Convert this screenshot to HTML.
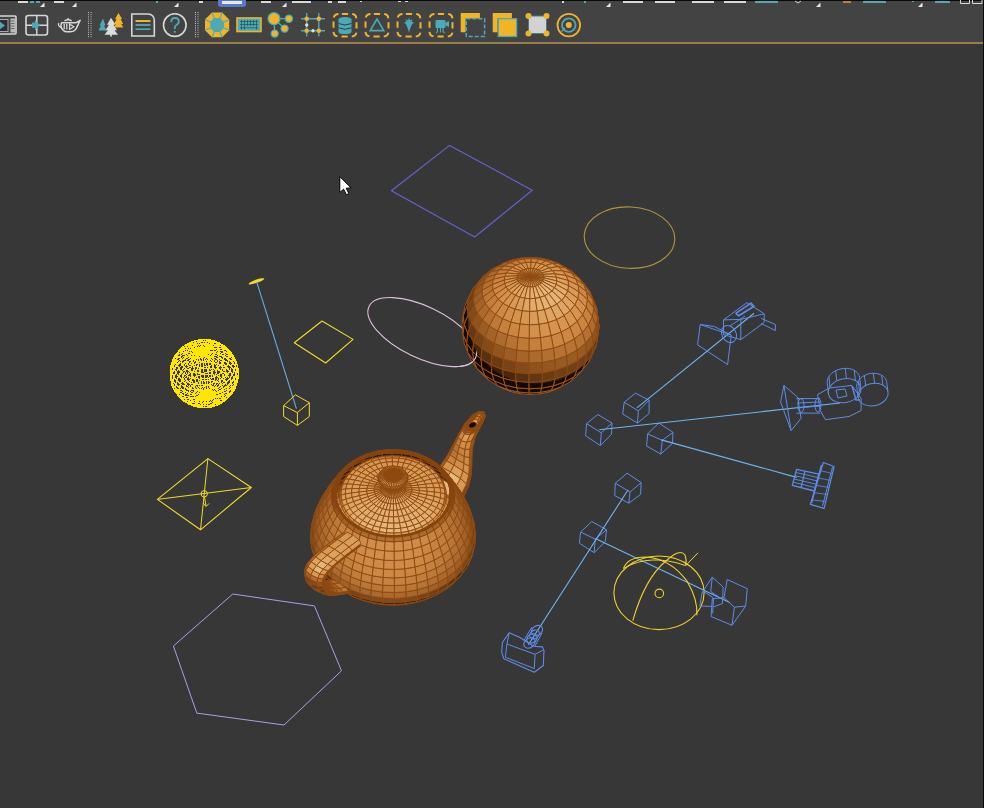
<!DOCTYPE html>
<html><head><meta charset="utf-8"><style>
html,body{margin:0;padding:0;width:984px;height:808px;overflow:hidden;background:#373737;}
#tb{position:absolute;left:0;top:0;width:984px;height:44px;background:#434343;}
svg{position:absolute;left:0;top:0;}
</style></head><body>
<div id="tb"></div>
<svg width="984" height="808" viewBox="0 0 984 808">
<rect x="0" y="0" width="984" height="1" fill="#0a0a0a"/>
<rect x="0" y="42" width="984" height="2" fill="#9a8048"/>
<rect x="983" y="0" width="1" height="808" fill="#0a0a0a"/>
<rect x="18" y="1" width="10" height="2" fill="#d8d8d8"/>
<rect x="30" y="1" width="4" height="2" fill="#4aaab8"/>
<rect x="36" y="1" width="4" height="2" fill="#4aaab8"/>
<rect x="54" y="1" width="10" height="2" fill="#d8d8d8"/>
<rect x="156" y="1" width="2" height="2" fill="#4aaab8"/>
<rect x="199" y="1" width="4" height="2" fill="#d8d8d8"/>
<rect x="261" y="1" width="10" height="2" fill="#d8d8d8"/>
<rect x="292" y="1" width="19" height="2" fill="#d8d8d8"/>
<rect x="328" y="1" width="4" height="2" fill="#d8d8d8"/>
<rect x="338" y="1" width="8" height="2" fill="#d8d8d8"/>
<rect x="360" y="1" width="2" height="1" fill="#d8d8d8"/>
<rect x="398" y="1" width="3" height="1" fill="#d8d8d8"/>
<rect x="405" y="1" width="3" height="1" fill="#d8d8d8"/>
<rect x="562" y="1" width="2" height="2" fill="#d8d8d8"/>
<rect x="584" y="1" width="2" height="2" fill="#4aaab8"/>
<rect x="623" y="1" width="20" height="2" fill="#d8d8d8"/>
<rect x="655" y="1" width="20" height="2" fill="#d8d8d8"/>
<rect x="692" y="1" width="22" height="2" fill="#d8d8d8"/>
<rect x="724" y="1" width="22" height="2" fill="#d8d8d8"/>
<rect x="755" y="1" width="23" height="2" fill="#4aaab8"/>
<rect x="843" y="1" width="8" height="2" fill="#c08040"/>
<rect x="863" y="1" width="23" height="2" fill="#4aaab8"/>
<rect x="935" y="1" width="15" height="2" fill="#4aaab8"/>
<rect x="912" y="1" width="2" height="1" fill="#4aaab8"/>
<path d="M960.5 0v3.5h9v-3.5M972.5 0v3.5h9.5v-3.5" stroke="#d8d8d8" stroke-width="1" fill="none"/>
<path d="M795 1l3 2 3-2" stroke="#d8d8d8" stroke-width="1" fill="none"/>
<path d="M218 0v4q0 3 3 3h22q3 0 3-3v-4z" fill="#5a78c8"/><rect x="222" y="1" width="20" height="3" fill="#e6e6ee"/>
<path d="M40 7h4.5v-4.5z" fill="#e8e8e8"/>
<path d="M72 7h4.5v-4.5z" fill="#e8e8e8"/>
<path d="M174 7h4.5v-4.5z" fill="#e8e8e8"/>
<path d="M282 7h4.5v-4.5z" fill="#e8e8e8"/>
<path d="M606 7h4.5v-4.5z" fill="#e8e8e8"/>
<path d="M816 7h4.5v-4.5z" fill="#e8e8e8"/>
<path d="M918 7h4.5v-4.5z" fill="#e8e8e8"/>
<rect x="-6" y="16" width="22" height="18" rx="1" fill="none" stroke="#d8d8d8" stroke-width="1.6"/>
<rect x="-4" y="19.5" width="12" height="12" fill="#2e2e2e" stroke="#aaa" stroke-width="1"/>
<path d="M-1 21l6 4.5-6 4.5z" fill="#4aaab8"/>
<rect x="10.5" y="18.5" width="4.5" height="14" fill="#bbb"/><path d="M11 21h3.5M11 23.5h3.5M11 26h3.5M11 28.5h3.5" stroke="#555" stroke-width="0.8"/>
<rect x="26" y="15.5" width="21.5" height="19.5" rx="2.5" fill="none" stroke="#d8d8d8" stroke-width="1.6"/>
<path d="M36.8 15.5v19.5M26 25.2h21.5" stroke="#d8d8d8" stroke-width="1.4"/>
<path d="M32 22.5l3 0 0-2.5 5 5.2-5 5.2 0-2.7-3 0z" fill="#4aaab8"/>
<path d="M61.5 22.8h13.5q1.5 0 3-1.2l2.2-1.2q-1.2 2-2.2 4.5-1.6 4.2-3.4 5.6-1.6 1.3-4.2 1.3h-3.2q-2.6 0-4-1.6-1.6-1.6-2.4-4.2z" fill="none" stroke="#d8d8d8" stroke-width="1.5" stroke-linejoin="round"/>
<path d="M58.6 23q-0.8 3 2.4 4.6" fill="none" stroke="#d8d8d8" stroke-width="1.3"/>
<path d="M64.5 20.8q3.6-2.2 7.2 0M68.1 18v1.6" fill="none" stroke="#d8d8d8" stroke-width="1.4"/>
<path d="M64.2 24v5.2M66.8 24v5.6" stroke="#d8d8d8" stroke-width="1.3"/><path d="M69.6 24l4.2 2.7-4.2 2.7z" fill="none" stroke="#d8d8d8" stroke-width="1.2"/>
<line x1="88.5" y1="12" x2="88.5" y2="38" stroke="#cfcfcf" stroke-width="0.9" stroke-dasharray="1 1.2"/>
<line x1="91" y1="12" x2="91" y2="38" stroke="#cfcfcf" stroke-width="0.9" stroke-dasharray="1 1.2"/>
<line x1="195.5" y1="12" x2="195.5" y2="38" stroke="#cfcfcf" stroke-width="0.9" stroke-dasharray="1 1.2"/>
<line x1="198" y1="12" x2="198" y2="38" stroke="#cfcfcf" stroke-width="0.9" stroke-dasharray="1 1.2"/>
<path d="M103 18.5l-3.5 7h1.5l-2.5 5h8l-2.5-5h1.5z" fill="#4aaab8"/>
<path d="M118.5 13l-3.5 6h1.5l-2.5 5h1.8l-2 3.5h9.5l-2-3.5h1.8l-2.5-5h1.5z" fill="#f0b428"/>
<path d="M111 17.8l-4 7h2l-3.5 5.5h2.5l-3.5 4.5h13.5l-3.5-4.5h2.5l-3.5-5.5h2z" fill="#dcdcdc"/><rect x="110.2" y="34" width="1.6" height="2.6" fill="#dcdcdc"/>
<path d="M131.8 14h16.5a6 6 0 0 1 6 6v16h-22.5z" fill="none" stroke="#d8d8d8" stroke-width="1.6"/>
<path d="M135.5 21h15" stroke="#f0b428" stroke-width="2"/><path d="M135.5 25h15" stroke="#5ab0d8" stroke-width="1.6"/><path d="M135.5 29.2h15" stroke="#4aaab8" stroke-width="1.6"/>
<circle cx="174.8" cy="25.1" r="11.3" fill="none" stroke="#d8d8d8" stroke-width="1.6"/>
<path d="M171.2 22.2q0-4.2 3.8-4.2 3.8 0 3.8 3.6 0 2.4-2.6 3.6-1.4 0.7-1.4 2.6v1.2" fill="none" stroke="#4aaab8" stroke-width="1.8"/><circle cx="174.8" cy="31.8" r="1.1" fill="#4aaab8"/>
<path d="M212 12.6h10.2l7 7v10.6l-7 7h-10.2l-7-7v-10.6z" fill="#f0b428"/>
<path d="M214.2 18h5.8l4 4v6l-4 4h-5.8l-4-4v-6z" fill="#4aaab8"/>
<path d="M214.2 18l-2.2-5.4M220 18l2.2-5.4M224 22l5.2-2.4M224 28l5.2 2.2M220 32l2.2 5.2M214.2 32l-2.2 5.2M210.2 28l-5 2.2M210.2 22l-5-2.4" stroke="#4aaab8" stroke-width="1.1"/>
<rect x="237" y="18" width="24" height="13.5" fill="#4aaab8" stroke="#f0b428" stroke-width="1.6"/>
<path d="M240 21.5h18M240 24.5h18M240 27.8h18M241.5 20v9.5M244.5 20v9.5M247.5 20v6M250.5 20v6M253.5 20v6M256.5 20v9.5" stroke="#2c5560" stroke-width="0.8"/>
<path d="M274 18.7L288.9 18.7M274 18.7L284.6 28.6M274 18.7L274.7 33.6" stroke="#4aaab8" stroke-width="1.3"/>
<circle cx="274" cy="18.7" r="6" fill="#f0b428" stroke="#4aaab8" stroke-width="1.2"/><circle cx="288.9" cy="18.7" r="3.6" fill="#f0b428" stroke="#4aaab8" stroke-width="1.2"/><circle cx="284.6" cy="28.6" r="3.6" fill="#f0b428" stroke="#4aaab8" stroke-width="1.2"/><circle cx="274.7" cy="33.6" r="3.6" fill="#f0b428" stroke="#4aaab8" stroke-width="1.2"/>
<path d="M301 18.7h24M301 30.8h24M306.7 13v23.5M318.8 13v23.5" stroke="#4aaab8" stroke-width="1.4"/>
<circle cx="306.7" cy="18.7" r="2.3" fill="#f0b428"/>
<circle cx="318.8" cy="18.7" r="2.3" fill="#f0b428"/>
<circle cx="306.7" cy="30.8" r="2.3" fill="#f0b428"/>
<circle cx="318.8" cy="30.8" r="2.3" fill="#f0b428"/>
<circle cx="306.7" cy="25" r="1.7" fill="#ddd"/><circle cx="313" cy="30.8" r="1.7" fill="#ddd"/>
<rect x="333.5" y="14" width="23" height="22.5" rx="5" fill="none" stroke="#f0b428" stroke-width="2" stroke-dasharray="6.2 4.1" stroke-dashoffset="-3.4"/>
<rect x="365.5" y="14" width="23" height="22.5" rx="5" fill="none" stroke="#f0b428" stroke-width="2" stroke-dasharray="6.2 4.1" stroke-dashoffset="-3.4"/>
<rect x="397.5" y="14" width="23" height="22.5" rx="5" fill="none" stroke="#f0b428" stroke-width="2" stroke-dasharray="6.2 4.1" stroke-dashoffset="-3.4"/>
<rect x="429.5" y="14" width="23" height="22.5" rx="5" fill="none" stroke="#f0b428" stroke-width="2" stroke-dasharray="6.2 4.1" stroke-dashoffset="-3.4"/>
<ellipse cx="345" cy="19.5" rx="6.5" ry="2.6" fill="#4aaab8"/><path d="M338.5 19.5v12q0 2.6 6.5 2.6 6.5 0 6.5-2.6v-12" fill="#4aaab8"/><path d="M338.5 23.5q6.5 3 13 0M338.5 27.8q6.5 3 13 0" stroke="#3a3a3a" stroke-width="1" fill="none"/>
<path d="M377 19l-6.8 11.6h13.6z" fill="none" stroke="#4aaab8" stroke-width="1.6"/>
<path d="M409 17.5l1 3 2.6-1.2-1 2.7 2.6 0.6-2.2 1.6q-0.8 1.6-1.5 3.6l-1.5 4.6-1.5-4.6q-0.7-2-1.5-3.6l-2.2-1.6 2.6-0.6-1-2.7 2.6 1.2z" fill="#4aaab8"/>
<rect x="435.5" y="20" width="10" height="8" rx="1" fill="#4aaab8"/><path d="M445.5 22.5l3.5-1.5v6l-3.5-1.5z" fill="#4aaab8"/><path d="M437.5 28v3.5l-1.5 1.5M440.5 28v4.5M443 28v3.5l1.5 1.5" stroke="#4aaab8" stroke-width="1.1" fill="none"/>
<path d="M460.7 13h19.2v5.5h-14.3v13.7h-4.9z" fill="#f0b428"/>
<rect x="466.3" y="18.7" width="18.3" height="17.8" fill="none" stroke="#4aaab8" stroke-width="1.5" stroke-dasharray="4 2"/>
<path d="M492.7 13h19.2v5.5h-14.3v13.7h-4.9z" fill="#f0b428"/>
<rect x="498.3" y="18.7" width="18.3" height="17.8" fill="#f0b428" stroke="#4aaab8" stroke-width="1.3"/>
<rect x="528.5" y="16" width="18" height="17.5" fill="#d2d2d2" stroke="#3f7f8c" stroke-width="1"/>
<circle cx="528.5" cy="16" r="3" fill="#f0b428"/>
<circle cx="546.5" cy="16" r="3" fill="#f0b428"/>
<circle cx="528.5" cy="33.5" r="3" fill="#f0b428"/>
<circle cx="546.5" cy="33.5" r="3" fill="#f0b428"/>
<circle cx="568.8" cy="25.1" r="11.3" fill="none" stroke="#f0b428" stroke-width="1.8"/><circle cx="568.8" cy="25.1" r="6.8" fill="none" stroke="#4aaab8" stroke-width="1.8"/><circle cx="568.8" cy="25.1" r="3" fill="#f0b428"/><path d="M561.5 31.5l3.5-3.5" stroke="#4aaab8" stroke-width="1.5"/>
<g shape-rendering="auto">
<path d="M391.4 190.8 L449.6 145.4 L532.2 190.3 L474.7 237.0 Z" stroke="#6464d2" stroke-width="1.1" fill="none" stroke-linejoin="round" />
<ellipse cx="629.5" cy="237.6" rx="45.3" ry="30.7" transform="rotate(3 629.5 237.6)" stroke="#b0963c" stroke-width="1.1" fill="none"/>
<ellipse cx="422.3" cy="332.1" rx="59.1" ry="25.7" transform="rotate(25.7 422.3 332.1)" stroke="#dcc0dc" stroke-width="1.1" fill="none"/>
<path d="M232.8 594.0 L314.4 605.9 L341.5 670.8 L284.0 725.0 L196.8 713.1 L173.4 646.0 Z" stroke="#a8a0e8" stroke-width="1.0" fill="none" stroke-linejoin="round" />
<g id="ysph"></g>
<ellipse cx="256.4" cy="281.3" rx="8.3" ry="1.6" transform="rotate(-19 256.4 281.3)" fill="#f0dc28"/>
<path d="M256.8 282.2 L296.4 408.6" stroke="#6aace6" stroke-width="1.1" fill="none" stroke-linejoin="round" />
<path d="M295.4 394.8 L309.3 402.7 L309.3 416.5 L297.4 425.4 L283.6 416.5 L283.6 405.6 Z" stroke="#f0dc28" stroke-width="1.0" fill="none" stroke-linejoin="round" /><path d="M283.6 405.6 L297.4 412.6 L309.3 402.7" stroke="#f0dc28" stroke-width="1.0" fill="none" stroke-linejoin="round" /><path d="M297.4 412.6 L297.4 425.4" stroke="#f0dc28" stroke-width="1.0" fill="none" stroke-linejoin="round" />
<path d="M294.3 342.8 L322.0 321.0 L353.0 339.4 L325.6 363.0 Z" stroke="#f0dc28" stroke-width="1.1" fill="none" stroke-linejoin="round" />
<path d="M157.4 499.4 L207.9 458.6 L251.3 487.5 L200.5 529.8 Z" stroke="#f0dc28" stroke-width="1.1" fill="none" stroke-linejoin="round" />
<path d="M157.4 499.4 L251.3 487.5" stroke="#f0dc28" stroke-width="1.0" fill="none" stroke-linejoin="round" />
<path d="M207.9 458.6 L200.5 529.8" stroke="#f0dc28" stroke-width="1.0" fill="none" stroke-linejoin="round" />
<circle cx="204.2" cy="493.8" r="3.2" stroke="#f0dc28" stroke-width="1" fill="none"/>
<path d="M204.5 497.0 L206.0 506.0" stroke="#f0dc28" stroke-width="1.0" fill="none" stroke-linejoin="round" />
<path d="M203.0 503.0 L206.0 506.5 L209.0 503.5" stroke="#f0dc28" stroke-width="1.0" fill="none" stroke-linejoin="round" />
<path d="M635.4 393.1 L649.1 400.2 L649.1 413.5 L637.4 423.1 L622.7 414.0 L624.2 402.3 Z" stroke="#5d8ce8" stroke-width="1.0" fill="none" stroke-linejoin="round" /><path d="M624.2 402.3 L638.4 410.9 L649.1 400.2" stroke="#5d8ce8" stroke-width="1.0" fill="none" stroke-linejoin="round" /><path d="M638.4 410.9 L637.4 423.1" stroke="#5d8ce8" stroke-width="1.0" fill="none" stroke-linejoin="round" />
<path d="M597.8 414.5 L612.0 423.1 L611.5 434.3 L600.3 445.5 L585.6 435.8 L586.6 423.6 Z" stroke="#5d8ce8" stroke-width="1.0" fill="none" stroke-linejoin="round" /><path d="M586.6 423.6 L601.3 432.8 L612.0 423.1" stroke="#5d8ce8" stroke-width="1.0" fill="none" stroke-linejoin="round" /><path d="M601.3 432.8 L600.3 445.5" stroke="#5d8ce8" stroke-width="1.0" fill="none" stroke-linejoin="round" />
<path d="M658.8 423.1 L673.0 432.3 L672.5 443.4 L660.8 454.1 L646.6 446.0 L647.6 433.8 Z" stroke="#5d8ce8" stroke-width="1.0" fill="none" stroke-linejoin="round" /><path d="M647.6 433.8 L662.3 440.4 L673.0 432.3" stroke="#5d8ce8" stroke-width="1.0" fill="none" stroke-linejoin="round" /><path d="M662.3 440.4 L660.8 454.1" stroke="#5d8ce8" stroke-width="1.0" fill="none" stroke-linejoin="round" />
<path d="M627.1 473.2 L641.2 482.6 L640.6 494.4 L628.8 503.2 L614.7 495.6 L615.3 483.2 Z" stroke="#5d8ce8" stroke-width="1.0" fill="none" stroke-linejoin="round" /><path d="M615.3 483.2 L630.0 492.1 L641.2 482.6" stroke="#5d8ce8" stroke-width="1.0" fill="none" stroke-linejoin="round" /><path d="M630.0 492.1 L628.8 503.2" stroke="#5d8ce8" stroke-width="1.0" fill="none" stroke-linejoin="round" />
<path d="M591.8 521.5 L606.5 529.7 L605.3 541.5 L594.1 552.6 L579.4 543.2 L580.6 532.1 Z" stroke="#5d8ce8" stroke-width="1.0" fill="none" stroke-linejoin="round" /><path d="M580.6 532.1 L595.3 539.1 L606.5 529.7" stroke="#5d8ce8" stroke-width="1.0" fill="none" stroke-linejoin="round" /><path d="M595.3 539.1 L594.1 552.6" stroke="#5d8ce8" stroke-width="1.0" fill="none" stroke-linejoin="round" />
<path d="M636.9 407.9 L754.0 313.3" stroke="#6cb4f0" stroke-width="1.1" fill="none" stroke-linejoin="round" />
<path d="M599.3 429.7 L840.0 403.0" stroke="#6cb4f0" stroke-width="1.1" fill="none" stroke-linejoin="round" />
<path d="M661.3 439.9 L796.7 477.4" stroke="#6cb4f0" stroke-width="1.1" fill="none" stroke-linejoin="round" />
<path d="M628.1 489.7 L528.4 644.7" stroke="#6cb4f0" stroke-width="1.1" fill="none" stroke-linejoin="round" />
<path d="M595.3 538.5 L729.6 602.4" stroke="#6cb4f0" stroke-width="1.1" fill="none" stroke-linejoin="round" />
<path d="M700.2 324.5 L697.6 344.8 L727.6 364.6 L731.2 335.1 Z" stroke="#5d8ce8" stroke-width="1" fill="none" stroke-linejoin="round" />
<path d="M700.2 324.5 L714.4 326.5 L731.2 335.1" stroke="#5d8ce8" stroke-width="1.0" fill="none" stroke-linejoin="round" />
<ellipse cx="729" cy="334" rx="7" ry="9" transform="rotate(-30 729 334)" stroke="#5d8ce8" fill="none"/>
<path d="M723.5 319.9 L746.9 302.6 L764.2 313.8 L740.8 319.4 L723.5 319.9 L723.5 334.6 L740.8 339.7 L740.8 319.4" stroke="#5d8ce8" stroke-width="1.0" fill="none" stroke-linejoin="round" />
<path d="M764.2 313.8 L764.2 322.4 L740.8 339.7" stroke="#5d8ce8" stroke-width="1.0" fill="none" stroke-linejoin="round" />
<path d="M735.7 313.3 L751.0 303.1 L754.0 306.2 L738.8 315.8 L735.7 313.3" stroke="#5d8ce8" stroke-width="1.6" fill="none" stroke-linejoin="round" />
<path d="M761.1 318.4 L775.4 324.5 L775.4 330.6 L761.1 323.5" stroke="#5d8ce8" stroke-width="1.0" fill="none" stroke-linejoin="round" />
<path d="M730.0 326.0 L745.0 316.0" stroke="#5d8ce8" stroke-width="1.0" fill="none" stroke-linejoin="round" />
<path d="M783.9 385.4 L797.7 397.3 L801.0 418.4 L791.1 430.6 L780.6 401.9 L783.9 385.4 L791.1 430.6" stroke="#5d8ce8" stroke-width="1.0" fill="none" stroke-linejoin="round" />
<path d="M796.4 398.6 L820.2 398.6" stroke="#5d8ce8" stroke-width="1.0" fill="none" stroke-linejoin="round" />
<path d="M796.4 413.1 L820.2 413.1" stroke="#5d8ce8" stroke-width="1.0" fill="none" stroke-linejoin="round" />
<path d="M797.0 403.0 L820.0 402.0" stroke="#5d8ce8" stroke-width="1.0" fill="none" stroke-linejoin="round" />
<path d="M797.0 408.0 L820.0 406.0" stroke="#5d8ce8" stroke-width="1.0" fill="none" stroke-linejoin="round" />
<ellipse cx="801" cy="405.5" rx="3" ry="7" stroke="#5d8ce8" fill="none"/><ellipse cx="818" cy="405" rx="3" ry="7" stroke="#5d8ce8" fill="none"/>
<path d="M817.6 394.6 L829.4 388.0 L851.9 385.4 L861.1 398.6 L861.1 410.5 L849.3 416.4 L825.5 419.7 L820.2 410.5 L817.6 394.6" stroke="#5d8ce8" stroke-width="1.0" fill="none" stroke-linejoin="round" />
<ellipse cx="844.6" cy="390.7" rx="16.5" ry="11.9" transform="rotate(-12 844.6 390.7)" stroke="#5d8ce8" stroke-width="1" fill="none"/><path d="M827.4 383.9 L827.2 382.4 L827.3 380.8 L827.6 379.2 L828.3 377.7 L829.2 376.1 L830.3 374.7 L831.7 373.4 L833.3 372.1 L835.0 371.1 L836.9 370.1 L838.9 369.4 L841.0 368.9 L843.2 368.5 L845.3 368.4 L847.4 368.4 L849.4 368.7 L851.4 369.2 L853.2 369.8 L854.8 370.7 L856.2 371.7 L857.5 372.9 L858.4 374.2 L859.2 375.6 L859.6 377.1" stroke="#5d8ce8" stroke-width="1.0" fill="none" stroke-linejoin="round" /><path d="M828.5 394.1 L827.4 383.9" stroke="#5d8ce8" stroke-width="1.0" fill="none" stroke-linejoin="round" /><path d="M830.0 386.8 L828.9 376.6" stroke="#5d8ce8" stroke-width="1.0" fill="none" stroke-linejoin="round" /><path d="M836.8 380.9 L835.7 370.7" stroke="#5d8ce8" stroke-width="1.0" fill="none" stroke-linejoin="round" /><path d="M846.4 378.6 L845.3 368.4" stroke="#5d8ce8" stroke-width="1.0" fill="none" stroke-linejoin="round" /><path d="M855.4 380.6 L854.3 370.4" stroke="#5d8ce8" stroke-width="1.0" fill="none" stroke-linejoin="round" /><path d="M860.7 387.3 L859.6 377.1" stroke="#5d8ce8" stroke-width="1.0" fill="none" stroke-linejoin="round" />
<ellipse cx="873" cy="394.6" rx="15.2" ry="11.2" transform="rotate(-12 873 394.6)" stroke="#5d8ce8" stroke-width="1" fill="none"/><path d="M856.8 387.9 L856.7 386.4 L856.7 384.9 L857.1 383.4 L857.7 382.0 L858.5 380.5 L859.5 379.2 L860.8 377.9 L862.2 376.8 L863.9 375.8 L865.6 374.9 L867.5 374.3 L869.4 373.7 L871.3 373.4 L873.3 373.3 L875.2 373.4 L877.1 373.6 L878.9 374.1 L880.6 374.7 L882.1 375.5 L883.4 376.5 L884.5 377.6 L885.5 378.8 L886.1 380.1 L886.6 381.5" stroke="#5d8ce8" stroke-width="1.0" fill="none" stroke-linejoin="round" /><path d="M858.1 397.8 L856.8 387.9" stroke="#5d8ce8" stroke-width="1.0" fill="none" stroke-linejoin="round" /><path d="M859.5 390.9 L858.2 381.0" stroke="#5d8ce8" stroke-width="1.0" fill="none" stroke-linejoin="round" /><path d="M865.7 385.4 L864.4 375.5" stroke="#5d8ce8" stroke-width="1.0" fill="none" stroke-linejoin="round" /><path d="M874.6 383.2 L873.3 373.3" stroke="#5d8ce8" stroke-width="1.0" fill="none" stroke-linejoin="round" /><path d="M882.9 385.1 L881.6 375.2" stroke="#5d8ce8" stroke-width="1.0" fill="none" stroke-linejoin="round" /><path d="M887.9 391.4 L886.6 381.5" stroke="#5d8ce8" stroke-width="1.0" fill="none" stroke-linejoin="round" />
<path d="M836.0 390.0 L845.0 389.0 L847.0 396.0 L838.0 398.0 L836.0 390.0" stroke="#5d8ce8" stroke-width="1.0" fill="none" stroke-linejoin="round" />
<path d="M852.0 386.0 L856.0 400.0 L860.0 400.0" stroke="#5d8ce8" stroke-width="1.4" fill="none" stroke-linejoin="round" />
<path d="M823.3 462.5 L834.1 466.5 L824.1 508.3 L810.4 504.3 Z" stroke="#5d8ce8" stroke-width="1.2" fill="none" stroke-linejoin="round" />
<path d="M832.5 467.0 L822.5 506.0" stroke="#5d8ce8" stroke-width="1.0" fill="none" stroke-linejoin="round" />
<path d="M821.5 465.0 L811.5 503.0" stroke="#5d8ce8" stroke-width="1.4" fill="none" stroke-linejoin="round" />
<path d="M796.6 469.3 L818.8 474.1 L814.4 491.0 L792.3 485.4 Z" stroke="#5d8ce8" stroke-width="1.3" fill="none" stroke-linejoin="round" />
<path d="M795.7 472.5 L817.9 477.5" stroke="#5d8ce8" stroke-width="0.9" fill="none" stroke-linejoin="round" />
<path d="M794.9 475.7 L817.0 480.9" stroke="#5d8ce8" stroke-width="0.9" fill="none" stroke-linejoin="round" />
<path d="M794.0 479.0 L816.2 484.2" stroke="#5d8ce8" stroke-width="0.9" fill="none" stroke-linejoin="round" />
<path d="M793.2 482.2 L815.3 487.6" stroke="#5d8ce8" stroke-width="0.9" fill="none" stroke-linejoin="round" />
<path d="M805.0 471.0 L801.0 488.0" stroke="#5d8ce8" stroke-width="1.2" fill="none" stroke-linejoin="round" />
<path d="M821.1 470.8 L832.4 473.5" stroke="#5d8ce8" stroke-width="0.8" fill="none" stroke-linejoin="round" />
<path d="M818.9 478.1 L830.7 480.5" stroke="#5d8ce8" stroke-width="0.8" fill="none" stroke-linejoin="round" />
<path d="M816.7 485.4 L829.0 487.5" stroke="#5d8ce8" stroke-width="0.8" fill="none" stroke-linejoin="round" />
<path d="M814.5 492.7 L827.3 494.5" stroke="#5d8ce8" stroke-width="0.8" fill="none" stroke-linejoin="round" />
<path d="M812.3 500.0 L825.6 501.5" stroke="#5d8ce8" stroke-width="0.8" fill="none" stroke-linejoin="round" />
<path d="M509.1 632.8 L519.5 637.3 L533.6 646.2 L542.5 646.9 L544.0 650.6 L543.3 665.5 L534.3 672.2 L503.9 658.8 L501.7 652.1 L502.4 642.5 L509.1 632.8" stroke="#5d8ce8" stroke-width="1.1" fill="none" stroke-linejoin="round" />
<path d="M506.9 644.0 L535.1 654.3 L534.3 668.5 L505.4 657.3 L506.9 644.0" stroke="#5d8ce8" stroke-width="1.0" fill="none" stroke-linejoin="round" />
<path d="M509.1 632.8 L507.0 644.0" stroke="#5d8ce8" stroke-width="1.0" fill="none" stroke-linejoin="round" />
<path d="M535.1 654.3 L543.3 650.0" stroke="#5d8ce8" stroke-width="1.0" fill="none" stroke-linejoin="round" />
<ellipse cx="537" cy="630.5" rx="6" ry="4.6" transform="rotate(-35 537 630.5)" stroke="#5d8ce8" stroke-width="1.1" fill="none"/>
<ellipse cx="534.5" cy="634.5" rx="5.2" ry="4" transform="rotate(-35 534.5 634.5)" stroke="#5d8ce8" stroke-width="1.1" fill="none"/>
<ellipse cx="532" cy="638.5" rx="5.6" ry="4.3" transform="rotate(-35 532 638.5)" stroke="#5d8ce8" stroke-width="1.1" fill="none"/>
<ellipse cx="529.5" cy="643" rx="6.2" ry="4.6" transform="rotate(-35 529.5 643)" stroke="#5d8ce8" stroke-width="1.1" fill="none"/>
<path d="M532.0 627.0 L524.0 640.0" stroke="#5d8ce8" stroke-width="1.0" fill="none" stroke-linejoin="round" />
<path d="M542.0 633.0 L535.0 646.0" stroke="#5d8ce8" stroke-width="1.0" fill="none" stroke-linejoin="round" />
<ellipse cx="659" cy="592.8" rx="45.1" ry="36.8" stroke="#f2d22a" stroke-width="1.1" fill="none"/>
<path d="M632.8 620.7 Q 645 578 666 561 Q 680 548 685 555 Q 687 560 685.7 565.6" stroke="#f2d22a" stroke-width="1.1" fill="none"/>
<path d="M623.4 568.4 Q 628 557 645 557 Q 670 558 687.4 581.7 Q 698 600 696.9 615.2" stroke="#f2d22a" stroke-width="1.1" fill="none"/>
<path d="M623.4 568.4 Q 650 553 685.7 565.6" stroke="#f2d22a" stroke-width="1.0" fill="none"/>
<circle cx="659.3" cy="593.4" r="4.3" stroke="#f2d22a" stroke-width="1.1" fill="none"/>
<path d="M685.7 565.6 L698.0 552.8" stroke="#f2d22a" stroke-width="1.0" fill="none" stroke-linejoin="round" />
<path d="M727.2 579.5 L747.3 588.7 L745.7 606.0 L732.0 625.3 L711.1 616.5 L712.3 598.8" stroke="#5d8ce8" stroke-width="1.0" fill="none" stroke-linejoin="round" />
<path d="M727.2 579.5 L724.0 597.6 L734.4 607.2 L745.7 606.0" stroke="#5d8ce8" stroke-width="1.0" fill="none" stroke-linejoin="round" />
<path d="M734.4 607.2 L732.0 625.3" stroke="#5d8ce8" stroke-width="1.0" fill="none" stroke-linejoin="round" />
<path d="M712.3 598.8 L724.0 597.6" stroke="#5d8ce8" stroke-width="1.0" fill="none" stroke-linejoin="round" />
<path d="M712.3 577.1 L723.2 587.1" stroke="#5d8ce8" stroke-width="1.0" fill="none" stroke-linejoin="round" />
<path d="M712.3 577.1 L702.2 592.4 L699.8 606.0 L712.3 606.4" stroke="#5d8ce8" stroke-width="1.0" fill="none" stroke-linejoin="round" />
<path d="M712.3 577.1 L710.7 591.5 L719.1 597.2" stroke="#5d8ce8" stroke-width="1.0" fill="none" stroke-linejoin="round" />
<path d="M702.2 592.4 L703.8 591.5 L713.5 598.0 L712.7 613.3" stroke="#5d8ce8" stroke-width="1.0" fill="none" stroke-linejoin="round" />
<path d="M723.2 587.1 L722.4 603.6 L713.5 606.8" stroke="#5d8ce8" stroke-width="1.0" fill="none" stroke-linejoin="round" />
</g>
<g id="ysphere"><path d="M207.8 350.9 L207.6 350.2 L207.3 349.4 L206.8 348.8 L206.1 348.2 L205.3 347.7 L204.4 347.4 L203.5 347.1 L202.4 347.0 L201.4 347.1 L200.4 347.3 L199.4 347.6 L198.5 348.0 L197.7 348.5 L197.0 349.2 L196.5 349.9 L196.2 350.6 L196.0 351.4 L196.0 352.2 L196.1 352.9 L196.5 353.7 L197.0 354.3 L197.6 354.9 L198.4 355.4 L199.3 355.7 L200.3 356.0 L201.3 356.1 L202.4 356.0 L203.4 355.9 L204.4 355.5 L205.3 355.1 L206.1 354.6 L206.7 354.0 L207.2 353.3 L207.6 352.5 L207.8 351.7 L207.8 350.9 M213.7 351.3 L213.3 349.8 L212.6 348.4 L211.6 347.1 L210.3 346.0 L208.8 345.0 L207.0 344.3 L205.1 343.9 L203.1 343.7 L201.1 343.8 L199.1 344.1 L197.1 344.7 L195.4 345.6 L193.8 346.6 L192.5 347.8 L191.4 349.2 L190.7 350.7 L190.3 352.2 L190.3 353.8 L190.7 355.3 L191.3 356.7 L192.3 358.0 L193.6 359.2 L195.2 360.1 L197.0 360.8 L198.9 361.3 L200.9 361.5 L202.9 361.4 L204.9 361.0 L206.8 360.4 L208.6 359.6 L210.2 358.5 L211.5 357.3 L212.6 355.9 L213.3 354.4 L213.6 352.9 L213.7 351.3 M219.2 352.4 L218.7 350.2 L217.7 348.1 L216.3 346.2 L214.4 344.6 L212.1 343.2 L209.5 342.2 L206.7 341.5 L203.8 341.2 L200.8 341.3 L197.9 341.9 L195.1 342.7 L192.5 344.0 L190.2 345.5 L188.2 347.3 L186.7 349.3 L185.7 351.5 L185.1 353.7 L185.1 356.0 L185.6 358.2 L186.6 360.3 L188.1 362.2 L190.0 363.9 L192.2 365.2 L194.8 366.3 L197.6 366.9 L200.5 367.2 L203.5 367.1 L206.5 366.6 L209.3 365.7 L211.9 364.5 L214.2 362.9 L216.1 361.1 L217.6 359.1 L218.7 356.9 L219.2 354.7 L219.2 352.4 M224.3 354.2 L223.7 351.3 L222.4 348.6 L220.5 346.2 L218.1 344.1 L215.2 342.3 L211.9 341.0 L208.3 340.1 L204.5 339.8 L200.7 339.9 L196.9 340.6 L193.3 341.7 L189.9 343.3 L187.0 345.3 L184.5 347.6 L182.5 350.2 L181.2 353.0 L180.5 355.9 L180.5 358.8 L181.1 361.6 L182.4 364.3 L184.3 366.7 L186.7 368.9 L189.6 370.6 L192.9 371.9 L196.5 372.8 L200.3 373.2 L204.1 373.0 L207.9 372.4 L211.5 371.2 L214.9 369.6 L217.8 367.7 L220.3 365.3 L222.3 362.7 L223.6 360.0 L224.3 357.1 L224.3 354.2 M228.8 356.5 L228.1 353.1 L226.5 349.9 L224.3 347.0 L221.4 344.4 L217.9 342.3 L214.0 340.8 L209.7 339.7 L205.2 339.3 L200.6 339.5 L196.1 340.3 L191.8 341.6 L187.8 343.5 L184.3 345.9 L181.3 348.6 L179.0 351.7 L177.4 355.1 L176.6 358.5 L176.6 362.0 L177.3 365.3 L178.8 368.5 L181.1 371.5 L184.0 374.0 L187.5 376.1 L191.4 377.7 L195.7 378.7 L200.2 379.1 L204.8 378.9 L209.3 378.2 L213.6 376.8 L217.5 374.9 L221.1 372.6 L224.0 369.8 L226.4 366.7 L228.0 363.4 L228.8 359.9 L228.8 356.5 M232.6 359.3 L231.7 355.5 L230.0 351.9 L227.4 348.6 L224.1 345.7 L220.2 343.3 L215.8 341.5 L210.9 340.4 L205.8 339.9 L200.7 340.1 L195.6 341.0 L190.7 342.5 L186.2 344.7 L182.2 347.3 L178.9 350.5 L176.3 354.0 L174.5 357.7 L173.5 361.6 L173.5 365.5 L174.3 369.3 L176.1 373.0 L178.6 376.2 L181.9 379.1 L185.8 381.5 L190.3 383.3 L195.1 384.4 L200.2 384.9 L205.4 384.7 L210.5 383.8 L215.3 382.3 L219.8 380.2 L223.8 377.5 L227.2 374.4 L229.8 370.9 L231.6 367.1 L232.5 363.2 L232.6 359.3 M235.5 362.6 L234.5 358.4 L232.6 354.5 L229.9 350.9 L226.3 347.8 L222.1 345.2 L217.2 343.3 L212.0 342.1 L206.5 341.5 L200.9 341.8 L195.3 342.7 L190.0 344.4 L185.2 346.7 L180.8 349.6 L177.2 353.0 L174.4 356.8 L172.4 360.8 L171.4 365.1 L171.3 369.3 L172.3 373.5 L174.1 377.4 L176.9 381.0 L180.5 384.1 L184.7 386.6 L189.6 388.6 L194.8 389.8 L200.3 390.4 L205.9 390.1 L211.5 389.2 L216.7 387.5 L221.6 385.2 L225.9 382.3 L229.6 378.9 L232.4 375.1 L234.4 371.1 L235.4 366.8 L235.5 362.6 M237.4 366.2 L236.4 361.8 L234.4 357.7 L231.6 354.0 L227.8 350.7 L223.3 348.0 L218.3 346.0 L212.8 344.7 L207.0 344.1 L201.1 344.4 L195.3 345.4 L189.8 347.1 L184.7 349.5 L180.2 352.6 L176.3 356.1 L173.4 360.1 L171.3 364.4 L170.2 368.8 L170.2 373.2 L171.2 377.6 L173.1 381.7 L176.0 385.4 L179.8 388.7 L184.2 391.4 L189.3 393.4 L194.8 394.7 L200.6 395.3 L206.5 395.1 L212.2 394.1 L217.8 392.3 L222.9 389.9 L227.4 386.9 L231.2 383.3 L234.2 379.3 L236.3 375.1 L237.3 370.6 L237.4 366.2 M238.3 370.0 L237.3 365.6 L235.3 361.4 L232.4 357.6 L228.6 354.3 L224.1 351.6 L218.9 349.5 L213.3 348.2 L207.5 347.6 L201.5 347.9 L195.6 348.9 L190.0 350.6 L184.8 353.1 L180.2 356.2 L176.3 359.8 L173.3 363.8 L171.2 368.2 L170.1 372.7 L170.1 377.2 L171.1 381.6 L173.1 385.8 L176.0 389.6 L179.8 392.9 L184.3 395.6 L189.5 397.7 L195.1 399.0 L200.9 399.6 L206.9 399.3 L212.8 398.3 L218.4 396.6 L223.6 394.1 L228.2 391.0 L232.1 387.4 L235.1 383.4 L237.2 379.0 L238.3 374.5 L238.3 370.0 M238.2 374.0 L237.2 369.6 L235.3 365.5 L232.4 361.8 L228.6 358.5 L224.2 355.8 L219.1 353.8 L213.6 352.5 L207.8 351.9 L201.9 352.1 L196.2 353.1 L190.6 354.9 L185.5 357.3 L181.0 360.3 L177.2 363.9 L174.2 367.9 L172.1 372.1 L171.1 376.6 L171.0 381.0 L172.0 385.4 L174.0 389.5 L176.8 393.2 L180.6 396.5 L185.1 399.2 L190.1 401.2 L195.6 402.5 L201.4 403.1 L207.3 402.8 L213.1 401.8 L218.6 400.1 L223.7 397.7 L228.2 394.6 L232.1 391.1 L235.0 387.1 L237.1 382.8 L238.2 378.4 L238.2 374.0 M237.1 377.9 L236.1 373.7 L234.3 369.8 L231.5 366.2 L227.9 363.1 L223.7 360.6 L218.8 358.6 L213.6 357.4 L208.1 356.8 L202.5 357.1 L196.9 358.0 L191.7 359.7 L186.8 362.0 L182.5 364.9 L178.8 368.3 L176.0 372.1 L174.0 376.1 L173.0 380.4 L172.9 384.6 L173.9 388.8 L175.8 392.7 L178.5 396.3 L182.1 399.4 L186.3 402.0 L191.2 403.9 L196.4 405.1 L201.9 405.7 L207.5 405.4 L213.1 404.5 L218.4 402.8 L223.2 400.5 L227.6 397.6 L231.2 394.2 L234.0 390.4 L236.0 386.4 L237.0 382.1 L237.1 377.9 M234.9 381.7 L234.1 377.9 L232.3 374.2 L229.8 371.0 L226.5 368.1 L222.6 365.7 L218.1 363.9 L213.3 362.8 L208.2 362.3 L203.0 362.5 L197.9 363.4 L193.1 364.9 L188.6 367.0 L184.6 369.7 L181.2 372.8 L178.6 376.3 L176.8 380.1 L175.9 384.0 L175.8 387.9 L176.7 391.7 L178.4 395.3 L181.0 398.6 L184.3 401.5 L188.2 403.9 L192.6 405.7 L197.5 406.8 L202.6 407.3 L207.7 407.1 L212.8 406.2 L217.7 404.7 L222.2 402.5 L226.2 399.9 L229.5 396.7 L232.1 393.2 L233.9 389.5 L234.9 385.6 L234.9 381.7 M231.8 385.2 L231.1 381.9 L229.6 378.7 L227.3 375.7 L224.4 373.2 L220.9 371.1 L217.0 369.5 L212.7 368.5 L208.2 368.1 L203.6 368.3 L199.1 369.0 L194.8 370.4 L190.9 372.3 L187.3 374.6 L184.4 377.4 L182.0 380.5 L180.4 383.8 L179.6 387.3 L179.6 390.7 L180.3 394.1 L181.9 397.3 L184.1 400.2 L187.0 402.8 L190.5 404.9 L194.4 406.4 L198.7 407.5 L203.2 407.9 L207.8 407.7 L212.3 406.9 L216.6 405.6 L220.6 403.7 L224.1 401.3 L227.1 398.6 L229.4 395.5 L231.0 392.1 L231.8 388.7 L231.8 385.2 M227.9 388.4 L227.3 385.6 L226.0 382.9 L224.1 380.5 L221.7 378.3 L218.8 376.6 L215.5 375.3 L211.9 374.4 L208.1 374.0 L204.3 374.2 L200.5 374.8 L196.9 376.0 L193.5 377.6 L190.6 379.5 L188.1 381.9 L186.1 384.5 L184.8 387.2 L184.1 390.1 L184.1 393.0 L184.7 395.9 L186.0 398.6 L187.9 401.0 L190.3 403.1 L193.2 404.9 L196.5 406.2 L200.1 407.1 L203.9 407.4 L207.7 407.3 L211.5 406.6 L215.1 405.5 L218.5 403.9 L221.4 401.9 L223.9 399.6 L225.9 397.0 L227.2 394.2 L227.9 391.3 L227.9 388.4 M223.3 391.2 L222.8 389.0 L221.8 386.9 L220.3 385.0 L218.4 383.3 L216.2 382.0 L213.6 380.9 L210.8 380.3 L207.9 380.0 L204.9 380.1 L201.9 380.6 L199.1 381.5 L196.5 382.7 L194.2 384.3 L192.3 386.1 L190.8 388.1 L189.7 390.3 L189.2 392.5 L189.2 394.8 L189.7 397.0 L190.7 399.1 L192.1 401.0 L194.0 402.6 L196.3 404.0 L198.9 405.0 L201.7 405.7 L204.6 406.0 L207.6 405.9 L210.5 405.3 L213.3 404.5 L215.9 403.2 L218.2 401.7 L220.2 399.9 L221.7 397.9 L222.7 395.7 L223.3 393.5 L223.3 391.2 M218.1 393.4 L217.7 391.9 L217.1 390.5 L216.1 389.2 L214.8 388.0 L213.2 387.1 L211.4 386.4 L209.5 385.9 L207.5 385.7 L205.5 385.8 L203.5 386.2 L201.6 386.8 L199.8 387.6 L198.2 388.7 L196.9 389.9 L195.8 391.3 L195.1 392.8 L194.8 394.3 L194.7 395.9 L195.1 397.4 L195.8 398.8 L196.8 400.1 L198.1 401.2 L199.6 402.2 L201.4 402.9 L203.3 403.3 L205.3 403.5 L207.3 403.4 L209.3 403.1 L211.3 402.5 L213.0 401.6 L214.6 400.6 L215.9 399.4 L217.0 398.0 L217.7 396.5 L218.1 395.0 L218.1 393.4 M212.4 395.0 L212.3 394.3 L211.9 393.5 L211.4 392.9 L210.8 392.3 L210.0 391.8 L209.1 391.5 L208.1 391.2 L207.1 391.1 L206.0 391.2 L205.0 391.3 L204.0 391.7 L203.1 392.1 L202.3 392.6 L201.7 393.2 L201.2 393.9 L200.8 394.7 L200.6 395.5 L200.6 396.3 L200.8 397.0 L201.1 397.8 L201.6 398.4 L202.3 399.0 L203.1 399.5 L204.0 399.8 L204.9 400.1 L206.0 400.2 L207.0 400.1 L208.0 399.9 L209.0 399.6 L209.9 399.2 L210.7 398.7 L211.4 398.0 L211.9 397.3 L212.2 396.6 L212.4 395.8 L212.4 395.0 M238.3 370.0 L237.9 367.8 L237.2 365.7 L236.2 363.7 L234.8 361.7 L233.2 359.9 L231.3 358.2 L229.1 356.6 L226.7 355.2 L224.0 354.0 L221.2 353.0 L218.2 352.2 L215.1 351.6 L211.9 351.1 L208.5 351.0 L205.2 351.0 L201.8 351.2 L198.5 351.7 L195.2 352.3 L192.0 353.2 L189.0 354.3 L186.0 355.6 L183.3 357.0 L180.7 358.6 L178.4 360.3 L176.3 362.2 L174.5 364.1 L173.0 366.2 L171.8 368.3 L170.9 370.5 L170.3 372.8 L170.0 375.0 L170.1 377.2 L170.5 379.4 L171.2 381.5 L172.2 383.5 L173.6 385.5 L175.2 387.3 L177.1 389.0 L179.3 390.6 L181.7 392.0 L184.4 393.2 L187.2 394.2 L190.2 395.0 L193.3 395.6 L196.5 396.1 L199.9 396.2 L203.2 396.2 L206.6 396.0 L209.9 395.5 L213.2 394.9 L216.4 394.0 L219.4 392.9 L222.4 391.6 L225.1 390.2 L227.7 388.6 L230.0 386.9 L232.1 385.0 L233.9 383.1 L235.4 381.0 L236.6 378.9 L237.5 376.7 L238.1 374.4 L238.4 372.2 L238.3 370.0 M237.3 365.6 L236.9 363.4 L236.2 361.4 L235.2 359.4 L233.9 357.6 L232.3 356.0 L230.4 354.5 L228.3 353.2 L226.0 352.1 L223.4 351.2 L220.6 350.5 L217.7 350.1 L214.7 349.9 L211.6 349.9 L208.4 350.1 L205.1 350.5 L201.8 351.2 L198.6 352.1 L195.4 353.2 L192.3 354.5 L189.4 356.0 L186.5 357.6 L183.8 359.4 L181.4 361.4 L179.1 363.4 L177.1 365.6 L175.4 367.8 L173.9 370.1 L172.7 372.4 L171.8 374.8 L171.3 377.1 L171.0 379.4 L171.1 381.6 L171.5 383.8 L172.2 385.8 L173.2 387.8 L174.5 389.6 L176.1 391.2 L178.0 392.7 L180.1 394.0 L182.4 395.1 L185.0 396.0 L187.8 396.7 L190.7 397.1 L193.7 397.3 L196.8 397.3 L200.0 397.1 L203.3 396.7 L206.6 396.0 L209.8 395.1 L213.0 394.0 L216.1 392.7 L219.0 391.2 L221.9 389.6 L224.6 387.8 L227.0 385.8 L229.3 383.8 L231.3 381.6 L233.0 379.4 L234.5 377.1 L235.7 374.8 L236.6 372.4 L237.1 370.1 L237.4 367.8 L237.3 365.6 M235.3 361.4 L234.9 359.3 L234.3 357.3 L233.3 355.5 L232.1 353.8 L230.5 352.3 L228.8 351.0 L226.8 350.0 L224.5 349.2 L222.1 348.6 L219.5 348.2 L216.8 348.1 L213.9 348.3 L211.0 348.7 L208.0 349.3 L204.9 350.1 L201.8 351.2 L198.8 352.5 L195.8 354.0 L192.9 355.7 L190.1 357.6 L187.5 359.6 L184.9 361.8 L182.6 364.0 L180.5 366.4 L178.6 368.8 L177.0 371.3 L175.6 373.8 L174.5 376.3 L173.7 378.8 L173.2 381.2 L173.0 383.5 L173.1 385.8 L173.5 387.9 L174.1 389.9 L175.1 391.7 L176.3 393.4 L177.9 394.9 L179.6 396.2 L181.6 397.2 L183.9 398.0 L186.3 398.6 L188.9 399.0 L191.6 399.1 L194.5 398.9 L197.4 398.5 L200.4 397.9 L203.5 397.1 L206.6 396.0 L209.6 394.7 L212.6 393.2 L215.5 391.5 L218.3 389.6 L220.9 387.6 L223.5 385.4 L225.8 383.2 L227.9 380.8 L229.8 378.4 L231.4 375.9 L232.8 373.4 L233.9 370.9 L234.7 368.4 L235.2 366.0 L235.4 363.7 L235.3 361.4 M232.4 357.6 L232.0 355.5 L231.4 353.6 L230.5 351.8 L229.3 350.3 L228.0 349.0 L226.3 347.9 L224.5 347.1 L222.5 346.5 L220.3 346.2 L217.9 346.1 L215.4 346.3 L212.8 346.8 L210.1 347.5 L207.4 348.5 L204.6 349.8 L201.8 351.2 L199.1 352.9 L196.4 354.8 L193.8 356.8 L191.2 359.0 L188.8 361.4 L186.6 363.9 L184.5 366.4 L182.6 369.1 L180.9 371.8 L179.5 374.5 L178.2 377.1 L177.3 379.8 L176.5 382.4 L176.1 384.9 L175.9 387.3 L176.0 389.6 L176.4 391.7 L177.0 393.6 L177.9 395.4 L179.1 396.9 L180.4 398.2 L182.1 399.3 L183.9 400.1 L185.9 400.7 L188.1 401.0 L190.5 401.1 L193.0 400.9 L195.6 400.4 L198.3 399.7 L201.0 398.7 L203.8 397.4 L206.6 396.0 L209.3 394.3 L212.0 392.4 L214.6 390.4 L217.2 388.2 L219.6 385.8 L221.8 383.3 L223.9 380.8 L225.8 378.1 L227.5 375.4 L228.9 372.7 L230.2 370.1 L231.1 367.4 L231.9 364.8 L232.3 362.3 L232.5 359.9 L232.4 357.6 M228.6 354.3 L228.2 352.2 L227.7 350.3 L226.9 348.6 L225.8 347.2 L224.6 346.0 L223.2 345.1 L221.6 344.5 L219.8 344.1 L217.9 344.1 L215.8 344.3 L213.6 344.8 L211.4 345.5 L209.0 346.6 L206.7 347.9 L204.2 349.4 L201.8 351.2 L199.5 353.2 L197.1 355.4 L194.9 357.8 L192.7 360.3 L190.6 363.0 L188.7 365.7 L186.9 368.5 L185.3 371.4 L183.9 374.3 L182.6 377.2 L181.6 380.1 L180.8 382.9 L180.2 385.6 L179.8 388.2 L179.7 390.6 L179.8 392.9 L180.2 395.0 L180.7 396.9 L181.5 398.6 L182.6 400.0 L183.8 401.2 L185.2 402.1 L186.8 402.7 L188.6 403.1 L190.5 403.1 L192.6 402.9 L194.8 402.4 L197.0 401.7 L199.4 400.6 L201.7 399.3 L204.2 397.8 L206.6 396.0 L208.9 394.0 L211.3 391.8 L213.5 389.4 L215.7 386.9 L217.8 384.2 L219.7 381.5 L221.5 378.7 L223.1 375.8 L224.5 372.9 L225.8 370.0 L226.8 367.1 L227.6 364.3 L228.2 361.6 L228.6 359.0 L228.7 356.6 L228.6 354.3 M224.1 351.6 L223.7 349.5 L223.2 347.6 L222.5 346.0 L221.6 344.7 L220.6 343.6 L219.4 342.9 L218.1 342.4 L216.6 342.2 L215.0 342.3 L213.3 342.8 L211.5 343.5 L209.6 344.5 L207.7 345.8 L205.8 347.4 L203.8 349.2 L201.8 351.2 L199.9 353.5 L198.0 355.9 L196.2 358.6 L194.4 361.4 L192.8 364.2 L191.2 367.2 L189.8 370.3 L188.5 373.4 L187.4 376.4 L186.4 379.5 L185.6 382.5 L185.0 385.4 L184.5 388.2 L184.3 390.8 L184.2 393.3 L184.3 395.6 L184.7 397.7 L185.2 399.6 L185.9 401.2 L186.8 402.5 L187.8 403.6 L189.0 404.3 L190.3 404.8 L191.8 405.0 L193.4 404.9 L195.1 404.4 L196.9 403.7 L198.8 402.7 L200.7 401.4 L202.6 399.8 L204.6 398.0 L206.6 396.0 L208.5 393.7 L210.4 391.3 L212.2 388.6 L214.0 385.8 L215.6 383.0 L217.2 380.0 L218.6 376.9 L219.9 373.8 L221.0 370.8 L222.0 367.7 L222.8 364.7 L223.4 361.8 L223.9 359.0 L224.1 356.4 L224.2 353.9 L224.1 351.6 M218.9 349.5 L218.6 347.4 L218.2 345.6 L217.6 344.1 L216.9 342.8 L216.1 341.8 L215.1 341.1 L214.1 340.8 L212.9 340.7 L211.7 341.0 L210.4 341.6 L209.1 342.5 L207.7 343.7 L206.2 345.2 L204.8 347.0 L203.3 349.0 L201.8 351.2 L200.4 353.7 L199.0 356.3 L197.7 359.2 L196.4 362.1 L195.2 365.2 L194.1 368.4 L193.0 371.6 L192.1 374.8 L191.3 378.0 L190.7 381.2 L190.1 384.3 L189.7 387.3 L189.4 390.2 L189.3 392.9 L189.3 395.4 L189.5 397.7 L189.8 399.8 L190.2 401.6 L190.8 403.1 L191.5 404.4 L192.3 405.4 L193.3 406.1 L194.3 406.4 L195.5 406.5 L196.7 406.2 L198.0 405.6 L199.3 404.7 L200.7 403.5 L202.2 402.0 L203.6 400.2 L205.1 398.2 L206.6 396.0 L208.0 393.5 L209.4 390.9 L210.7 388.0 L212.0 385.1 L213.2 382.0 L214.3 378.8 L215.4 375.6 L216.3 372.4 L217.1 369.2 L217.7 366.0 L218.3 362.9 L218.7 359.9 L219.0 357.0 L219.1 354.3 L219.1 351.8 L218.9 349.5 M213.3 348.2 L213.0 346.1 L212.7 344.3 L212.2 342.8 L211.7 341.6 L211.1 340.6 L210.5 340.0 L209.8 339.8 L209.0 339.8 L208.2 340.2 L207.3 340.9 L206.4 341.9 L205.5 343.2 L204.6 344.8 L203.7 346.7 L202.8 348.8 L201.8 351.2 L201.0 353.8 L200.1 356.6 L199.3 359.6 L198.5 362.7 L197.8 365.8 L197.2 369.1 L196.6 372.4 L196.1 375.7 L195.7 379.1 L195.3 382.3 L195.0 385.5 L194.9 388.5 L194.8 391.4 L194.8 394.2 L194.9 396.7 L195.1 399.0 L195.4 401.1 L195.7 402.9 L196.2 404.4 L196.7 405.6 L197.3 406.6 L197.9 407.2 L198.6 407.4 L199.4 407.4 L200.2 407.0 L201.1 406.3 L202.0 405.3 L202.9 404.0 L203.8 402.4 L204.7 400.5 L205.6 398.4 L206.6 396.0 L207.4 393.4 L208.3 390.6 L209.1 387.6 L209.9 384.5 L210.6 381.4 L211.2 378.1 L211.8 374.8 L212.3 371.5 L212.7 368.1 L213.1 364.9 L213.4 361.7 L213.5 358.7 L213.6 355.8 L213.6 353.0 L213.5 350.5 L213.3 348.2 M207.5 347.6 L207.2 345.6 L206.9 343.8 L206.6 342.2 L206.3 341.0 L206.0 340.1 L205.6 339.6 L205.2 339.3 L204.8 339.4 L204.4 339.8 L204.1 340.6 L203.7 341.6 L203.3 343.0 L202.9 344.6 L202.5 346.6 L202.2 348.8 L201.8 351.2 L201.5 353.9 L201.3 356.7 L201.0 359.7 L200.8 362.9 L200.6 366.1 L200.4 369.4 L200.3 372.8 L200.2 376.1 L200.2 379.5 L200.2 382.8 L200.2 386.0 L200.3 389.0 L200.4 392.0 L200.5 394.7 L200.7 397.3 L200.9 399.6 L201.2 401.6 L201.5 403.4 L201.8 405.0 L202.1 406.2 L202.4 407.1 L202.8 407.6 L203.2 407.9 L203.6 407.8 L204.0 407.4 L204.3 406.6 L204.7 405.6 L205.1 404.2 L205.5 402.6 L205.9 400.6 L206.2 398.4 L206.6 396.0 L206.9 393.3 L207.1 390.5 L207.4 387.5 L207.6 384.3 L207.8 381.1 L208.0 377.8 L208.1 374.4 L208.2 371.1 L208.2 367.7 L208.2 364.4 L208.2 361.2 L208.1 358.2 L208.0 355.2 L207.9 352.5 L207.7 349.9 L207.5 347.6 M201.5 347.9 L201.3 345.8 L201.1 344.0 L200.9 342.5 L200.8 341.3 L200.7 340.3 L200.6 339.8 L200.6 339.5 L200.6 339.6 L200.7 340.0 L200.7 340.7 L200.9 341.7 L201.0 343.1 L201.2 344.7 L201.4 346.6 L201.6 348.8 L201.8 351.2 L202.1 353.9 L202.4 356.7 L202.7 359.7 L203.1 362.8 L203.4 366.0 L203.7 369.3 L204.1 372.6 L204.5 376.0 L204.8 379.3 L205.1 382.6 L205.5 385.8 L205.8 388.8 L206.1 391.7 L206.4 394.5 L206.7 397.0 L206.9 399.3 L207.1 401.4 L207.3 403.2 L207.5 404.7 L207.6 405.9 L207.7 406.9 L207.8 407.4 L207.8 407.7 L207.8 407.6 L207.7 407.2 L207.7 406.5 L207.5 405.5 L207.4 404.1 L207.2 402.5 L207.0 400.6 L206.8 398.4 L206.6 396.0 L206.3 393.3 L206.0 390.5 L205.7 387.5 L205.3 384.4 L205.0 381.2 L204.7 377.9 L204.3 374.6 L203.9 371.2 L203.6 367.9 L203.3 364.6 L202.9 361.4 L202.6 358.4 L202.3 355.5 L202.0 352.7 L201.7 350.2 L201.5 347.9 M195.6 348.9 L195.4 346.8 L195.3 345.0 L195.3 343.4 L195.4 342.2 L195.5 341.2 L195.8 340.6 L196.1 340.3 L196.5 340.3 L196.9 340.6 L197.5 341.3 L198.1 342.2 L198.7 343.5 L199.5 345.0 L200.2 346.8 L201.0 348.9 L201.8 351.2 L202.7 353.8 L203.6 356.5 L204.4 359.4 L205.3 362.4 L206.2 365.5 L207.0 368.7 L207.8 372.0 L208.6 375.3 L209.3 378.5 L210.0 381.7 L210.7 384.9 L211.2 387.9 L211.7 390.8 L212.2 393.5 L212.5 396.0 L212.8 398.3 L213.0 400.4 L213.1 402.2 L213.1 403.8 L213.0 405.0 L212.9 406.0 L212.6 406.6 L212.3 406.9 L211.9 406.9 L211.5 406.6 L210.9 405.9 L210.3 405.0 L209.7 403.7 L208.9 402.2 L208.2 400.4 L207.4 398.3 L206.6 396.0 L205.7 393.4 L204.8 390.7 L204.0 387.8 L203.1 384.8 L202.2 381.7 L201.4 378.5 L200.6 375.2 L199.8 371.9 L199.1 368.7 L198.4 365.5 L197.7 362.3 L197.2 359.3 L196.7 356.4 L196.2 353.7 L195.9 351.2 L195.6 348.9 M190.0 350.6 L189.8 348.6 L189.8 346.7 L189.9 345.1 L190.2 343.8 L190.6 342.8 L191.1 342.1 L191.7 341.6 L192.5 341.5 L193.4 341.7 L194.3 342.2 L195.4 343.0 L196.6 344.1 L197.8 345.5 L199.1 347.2 L200.5 349.1 L201.8 351.2 L203.3 353.6 L204.7 356.1 L206.1 358.9 L207.5 361.7 L208.8 364.7 L210.1 367.8 L211.4 370.9 L212.6 374.0 L213.7 377.2 L214.7 380.3 L215.6 383.3 L216.4 386.3 L217.1 389.1 L217.7 391.8 L218.1 394.3 L218.4 396.6 L218.6 398.6 L218.6 400.5 L218.5 402.1 L218.2 403.4 L217.8 404.4 L217.3 405.1 L216.7 405.6 L215.9 405.7 L215.0 405.5 L214.1 405.0 L213.0 404.2 L211.8 403.1 L210.6 401.7 L209.3 400.0 L207.9 398.1 L206.6 396.0 L205.1 393.6 L203.7 391.1 L202.3 388.3 L200.9 385.5 L199.6 382.5 L198.3 379.4 L197.0 376.3 L195.8 373.2 L194.7 370.0 L193.7 366.9 L192.8 363.9 L192.0 360.9 L191.3 358.1 L190.7 355.4 L190.3 352.9 L190.0 350.6 M184.8 353.1 L184.7 351.0 L184.7 349.1 L185.0 347.5 L185.4 346.1 L186.0 345.0 L186.8 344.1 L187.7 343.6 L188.8 343.3 L190.1 343.3 L191.5 343.6 L193.0 344.2 L194.6 345.1 L196.3 346.2 L198.1 347.7 L200.0 349.3 L201.8 351.2 L203.8 353.3 L205.7 355.7 L207.6 358.1 L209.5 360.8 L211.3 363.5 L213.0 366.4 L214.7 369.3 L216.3 372.3 L217.7 375.3 L219.0 378.2 L220.2 381.1 L221.2 384.0 L222.1 386.7 L222.8 389.3 L223.3 391.8 L223.6 394.1 L223.7 396.2 L223.7 398.1 L223.4 399.7 L223.0 401.1 L222.4 402.2 L221.6 403.1 L220.7 403.6 L219.6 403.9 L218.3 403.9 L216.9 403.6 L215.4 403.0 L213.8 402.1 L212.1 401.0 L210.3 399.5 L208.4 397.9 L206.6 396.0 L204.6 393.9 L202.7 391.5 L200.8 389.1 L198.9 386.4 L197.1 383.7 L195.4 380.8 L193.7 377.9 L192.1 374.9 L190.7 371.9 L189.4 369.0 L188.2 366.1 L187.2 363.2 L186.3 360.5 L185.6 357.9 L185.1 355.4 L184.8 353.1 M180.2 356.2 L180.1 354.1 L180.2 352.2 L180.6 350.4 L181.1 348.9 L181.9 347.7 L182.9 346.7 L184.2 345.9 L185.6 345.5 L187.2 345.3 L188.9 345.3 L190.8 345.7 L192.8 346.3 L195.0 347.1 L197.2 348.3 L199.5 349.6 L201.8 351.2 L204.2 353.0 L206.6 355.0 L208.9 357.2 L211.2 359.6 L213.4 362.1 L215.6 364.7 L217.6 367.3 L219.5 370.1 L221.3 372.9 L222.8 375.6 L224.3 378.4 L225.5 381.1 L226.5 383.8 L227.3 386.3 L227.9 388.7 L228.2 391.0 L228.3 393.1 L228.2 395.0 L227.8 396.8 L227.3 398.3 L226.5 399.5 L225.5 400.5 L224.2 401.3 L222.8 401.7 L221.2 401.9 L219.5 401.9 L217.6 401.5 L215.6 400.9 L213.4 400.1 L211.2 398.9 L208.9 397.6 L206.6 396.0 L204.2 394.2 L201.8 392.2 L199.5 390.0 L197.2 387.6 L195.0 385.1 L192.8 382.5 L190.8 379.9 L188.9 377.1 L187.1 374.3 L185.6 371.6 L184.1 368.8 L182.9 366.1 L181.9 363.4 L181.1 360.9 L180.5 358.5 L180.2 356.2 M176.3 359.8 L176.2 357.7 L176.4 355.7 L176.8 353.9 L177.6 352.3 L178.5 350.9 L179.7 349.7 L181.2 348.7 L182.8 348.0 L184.7 347.5 L186.8 347.3 L189.0 347.4 L191.4 347.6 L193.9 348.2 L196.5 349.0 L199.1 350.0 L201.8 351.2 L204.6 352.7 L207.3 354.3 L210.0 356.2 L212.7 358.2 L215.3 360.4 L217.7 362.7 L220.1 365.1 L222.2 367.5 L224.3 370.1 L226.1 372.6 L227.7 375.2 L229.0 377.8 L230.2 380.3 L231.1 382.8 L231.7 385.1 L232.1 387.4 L232.2 389.5 L232.0 391.5 L231.6 393.3 L230.8 394.9 L229.9 396.3 L228.7 397.5 L227.2 398.5 L225.6 399.2 L223.7 399.7 L221.6 399.9 L219.4 399.8 L217.0 399.6 L214.5 399.0 L211.9 398.2 L209.3 397.2 L206.6 396.0 L203.8 394.5 L201.1 392.9 L198.4 391.0 L195.7 389.0 L193.1 386.8 L190.7 384.5 L188.3 382.1 L186.2 379.7 L184.1 377.1 L182.3 374.6 L180.7 372.0 L179.4 369.4 L178.2 366.9 L177.3 364.4 L176.7 362.1 L176.3 359.8 M173.3 363.8 L173.2 361.7 L173.4 359.7 L174.0 357.8 L174.8 356.0 L175.8 354.4 L177.2 353.0 L178.8 351.9 L180.7 350.9 L182.8 350.1 L185.1 349.6 L187.6 349.3 L190.2 349.2 L193.0 349.3 L195.9 349.7 L198.8 350.4 L201.8 351.2 L204.9 352.3 L207.9 353.6 L210.9 355.0 L213.8 356.7 L216.7 358.5 L219.4 360.4 L222.0 362.5 L224.4 364.7 L226.6 367.0 L228.6 369.3 L230.3 371.7 L231.8 374.1 L233.1 376.5 L234.0 378.8 L234.7 381.1 L235.1 383.4 L235.2 385.5 L235.0 387.5 L234.4 389.4 L233.6 391.2 L232.6 392.8 L231.2 394.2 L229.6 395.3 L227.7 396.3 L225.6 397.1 L223.3 397.6 L220.8 397.9 L218.2 398.0 L215.4 397.9 L212.5 397.5 L209.6 396.8 L206.6 396.0 L203.5 394.9 L200.5 393.6 L197.5 392.2 L194.6 390.5 L191.7 388.7 L189.0 386.8 L186.4 384.7 L184.0 382.5 L181.8 380.2 L179.8 377.9 L178.1 375.5 L176.6 373.1 L175.3 370.7 L174.4 368.4 L173.7 366.1 L173.3 363.8 M171.2 368.2 L171.1 366.0 L171.4 363.9 L172.0 361.9 L172.8 360.0 L174.0 358.3 L175.5 356.6 L177.2 355.2 L179.2 353.9 L181.5 352.9 L183.9 352.0 L186.6 351.3 L189.4 350.8 L192.4 350.6 L195.5 350.6 L198.6 350.8 L201.8 351.2 L205.1 351.9 L208.3 352.7 L211.5 353.8 L214.6 355.0 L217.7 356.4 L220.6 358.0 L223.3 359.7 L225.9 361.6 L228.2 363.6 L230.3 365.7 L232.2 367.8 L233.8 370.1 L235.1 372.3 L236.1 374.6 L236.8 376.8 L237.2 379.0 L237.3 381.2 L237.0 383.3 L236.4 385.3 L235.6 387.2 L234.4 388.9 L232.9 390.6 L231.2 392.0 L229.2 393.3 L226.9 394.3 L224.5 395.2 L221.8 395.9 L219.0 396.4 L216.0 396.6 L212.9 396.6 L209.8 396.4 L206.6 396.0 L203.3 395.3 L200.1 394.5 L196.9 393.4 L193.8 392.2 L190.7 390.8 L187.8 389.2 L185.1 387.5 L182.5 385.6 L180.2 383.6 L178.1 381.5 L176.2 379.4 L174.6 377.1 L173.3 374.9 L172.3 372.6 L171.6 370.4 L171.2 368.2 M170.1 372.7 L170.1 370.5 L170.3 368.3 L170.9 366.2 L171.8 364.2 L173.0 362.2 L174.6 360.4 L176.4 358.7 L178.5 357.1 L180.8 355.7 L183.3 354.5 L186.1 353.4 L189.0 352.6 L192.1 351.9 L195.2 351.5 L198.5 351.2 L201.8 351.2 L205.2 351.4 L208.5 351.8 L211.8 352.5 L215.1 353.3 L218.2 354.3 L221.2 355.5 L224.0 356.9 L226.6 358.4 L229.0 360.1 L231.2 361.9 L233.1 363.9 L234.8 365.9 L236.1 368.0 L237.2 370.2 L237.9 372.3 L238.3 374.5 L238.3 376.7 L238.1 378.9 L237.5 381.0 L236.6 383.0 L235.4 385.0 L233.8 386.8 L232.0 388.5 L229.9 390.1 L227.6 391.5 L225.1 392.7 L222.3 393.8 L219.4 394.6 L216.3 395.3 L213.2 395.7 L209.9 396.0 L206.6 396.0 L203.2 395.8 L199.9 395.4 L196.6 394.7 L193.3 393.9 L190.2 392.9 L187.2 391.7 L184.4 390.3 L181.8 388.8 L179.4 387.1 L177.2 385.3 L175.3 383.3 L173.6 381.3 L172.3 379.2 L171.2 377.0 L170.5 374.9 L170.1 372.7" stroke="#ffe600" stroke-width="1" fill="none" shape-rendering="crispEdges"/></g>
<g id="sphere"><defs><clipPath id="litclip"><ellipse cx="535.9" cy="320.6" rx="68.1" ry="62.8"/><rect x="400" y="200" width="300" height="95"/><rect x="467.8" y="294" width="232" height="27"/></clipPath></defs><g><polygon points="499.9,265.3 491.1,270.0 497.0,266.9 504.5,262.8" fill="#140904" stroke="#a85a1a" stroke-width="0.9"/>
<polygon points="588.4,362.6 592.3,354.4 596.1,345.7 592.0,354.4" fill="#140904" stroke="#a85a1a" stroke-width="0.9"/>
<polygon points="599.0,327.0 598.0,317.7 596.7,308.3 597.7,317.4" fill="#140904" stroke="#a85a1a" stroke-width="0.9"/>
<polygon points="596.7,308.3 593.1,299.5 589.5,291.2 592.8,299.5" fill="#140904" stroke="#a85a1a" stroke-width="0.9"/>
<polygon points="596.1,345.7 597.7,336.6 599.0,327.0 597.4,336.3" fill="#140904" stroke="#a85a1a" stroke-width="0.9"/>
<polygon points="478.7,281.9 472.6,289.4 478.4,282.7 483.8,275.9" fill="#140904" stroke="#a85a1a" stroke-width="0.9"/>
<polygon points="571.6,271.3 563.2,266.2 558.3,263.6 565.5,267.9" fill="#140904" stroke="#a85a1a" stroke-width="0.9"/>
<polygon points="502.7,388.4 511.0,391.6 507.6,389.6 497.8,385.8" fill="#140904" stroke="#a85a1a" stroke-width="0.9"/>
<polygon points="589.5,291.2 583.9,283.5 578.5,277.4 583.6,284.3" fill="#140904" stroke="#a85a1a" stroke-width="0.9"/>
<polygon points="548.1,392.2 556.5,389.2 561.1,386.7 551.1,390.3" fill="#140904" stroke="#a85a1a" stroke-width="0.9"/>
<polygon points="482.5,374.6 489.4,380.7 484.8,375.3 477.1,368.5" fill="#140904" stroke="#a85a1a" stroke-width="0.9"/>
<polygon points="491.1,270.0 483.8,275.9 490.8,271.9 497.0,266.9" fill="#140904" stroke="#a85a1a" stroke-width="0.9"/>
<polygon points="569.9,382.0 577.2,376.1 582.3,370.1 574.3,376.6" fill="#140904" stroke="#a85a1a" stroke-width="0.9"/>
<polygon points="531.6,257.5 522.1,258.0 523.9,259.0 531.3,258.6" fill="#140904" stroke="#a85a1a" stroke-width="0.9"/>
<polygon points="511.0,391.6 520.0,393.7 518.2,392.0 507.6,389.6" fill="#140904" stroke="#a85a1a" stroke-width="0.9"/>
<polygon points="541.0,258.3 531.6,257.5 531.3,258.6 538.7,259.2" fill="#140904" stroke="#a85a1a" stroke-width="0.9"/>
<polygon points="538.9,394.0 548.1,392.2 551.1,390.3 540.4,392.3" fill="#140904" stroke="#a85a1a" stroke-width="0.9"/>
<polygon points="578.5,277.4 571.6,271.3 565.5,267.9 571.4,273.1" fill="#140904" stroke="#a85a1a" stroke-width="0.9"/>
<polygon points="522.1,258.0 512.9,259.8 516.7,260.4 523.9,259.0" fill="#140904" stroke="#a85a1a" stroke-width="0.9"/>
<polygon points="550.0,260.4 541.0,258.3 538.7,259.2 545.8,260.8" fill="#140904" stroke="#a85a1a" stroke-width="0.9"/>
<polygon points="471.5,360.8 477.1,368.5 473.8,360.7 467.9,352.5" fill="#140904" stroke="#a85a1a" stroke-width="0.9"/>
<polygon points="520.0,393.7 529.4,394.5 529.3,392.9 518.2,392.0" fill="#140904" stroke="#a85a1a" stroke-width="0.9"/>
<polygon points="529.4,394.5 538.9,394.0 540.4,392.3 529.3,392.9" fill="#140904" stroke="#a85a1a" stroke-width="0.9"/>
<polygon points="464.9,306.3 463.3,315.4 467.2,306.2 468.7,297.6" fill="#140904" stroke="#a85a1a" stroke-width="0.9"/>
<polygon points="462.0,325.0 463.0,334.3 464.3,324.5 463.3,315.4" fill="#140904" stroke="#a85a1a" stroke-width="0.9"/>
<polygon points="464.3,343.7 467.9,352.5 466.7,343.2 463.0,334.3" fill="#140904" stroke="#a85a1a" stroke-width="0.9"/>
<polygon points="472.6,289.4 468.7,297.6 474.9,290.1 478.4,282.7" fill="#140904" stroke="#a85a1a" stroke-width="0.9"/>
<polygon points="512.9,259.8 504.5,262.8 510.1,262.7 516.7,260.4" fill="#140904" stroke="#a85a1a" stroke-width="0.9"/>
<polygon points="582.3,370.1 588.4,362.6 592.0,354.4 585.5,362.4" fill="#140904" stroke="#a85a1a" stroke-width="0.9"/>
<polygon points="558.3,263.6 550.0,260.4 545.8,260.8 552.3,263.4" fill="#140904" stroke="#a85a1a" stroke-width="0.9"/>
<polygon points="597.7,317.4 596.7,308.3 592.8,299.5 593.8,308.1" fill="#140904" stroke="#a85a1a" stroke-width="0.9"/>
<polygon points="489.4,380.7 497.8,385.8 494.2,380.9 484.8,375.3" fill="#140904" stroke="#a85a1a" stroke-width="0.9"/>
<polygon points="597.4,336.3 599.0,327.0 597.7,317.4 596.1,326.5" fill="#140904" stroke="#a85a1a" stroke-width="0.9"/>
<polygon points="592.0,354.4 596.1,345.7 597.4,336.3 593.2,345.2" fill="#140904" stroke="#a85a1a" stroke-width="0.9"/>
<polygon points="592.8,299.5 589.5,291.2 583.6,284.3 586.6,291.8" fill="#140904" stroke="#a85a1a" stroke-width="0.9"/>
<polygon points="561.1,386.7 569.9,382.0 574.3,376.6 564.5,381.9" fill="#140904" stroke="#a85a1a" stroke-width="0.9"/>
<polygon points="483.8,275.9 478.4,282.7 486.2,277.6 490.8,271.9" fill="#140904" stroke="#a85a1a" stroke-width="0.9"/>
<polygon points="504.5,262.8 497.0,266.9 504.2,265.9 510.1,262.7" fill="#140904" stroke="#a85a1a" stroke-width="0.9"/>
<polygon points="583.6,284.3 578.5,277.4 571.4,273.1 575.6,279.0" fill="#140904" stroke="#a85a1a" stroke-width="0.9"/>
<polygon points="565.5,267.9 558.3,263.6 552.3,263.4 558.0,266.7" fill="#140904" stroke="#a85a1a" stroke-width="0.9"/>
<polygon points="477.1,368.5 484.8,375.3 482.0,367.9 473.8,360.7" fill="#140904" stroke="#a85a1a" stroke-width="0.9"/>
<polygon points="497.8,385.8 507.6,389.6 505.0,385.1 494.2,380.9" fill="#140904" stroke="#a85a1a" stroke-width="0.9"/>
<polygon points="551.1,390.3 561.1,386.7 564.5,381.9 553.4,385.8" fill="#140904" stroke="#a85a1a" stroke-width="0.9"/>
<polygon points="497.0,266.9 490.8,271.9 499.3,269.9 504.2,265.9" fill="#140904" stroke="#a85a1a" stroke-width="0.9"/>
<polygon points="574.3,376.6 582.3,370.1 585.5,362.4 577.0,369.3" fill="#140904" stroke="#a85a1a" stroke-width="0.9"/>
<polygon points="468.7,297.6 467.2,306.2 473.6,297.8 474.9,290.1" fill="#140904" stroke="#a85a1a" stroke-width="0.9"/>
<polygon points="463.3,315.4 464.3,324.5 468.2,314.8 467.2,306.2" fill="#140904" stroke="#a85a1a" stroke-width="0.9"/>
<polygon points="467.9,352.5 473.8,360.7 472.7,351.6 466.7,343.2" fill="#140904" stroke="#a85a1a" stroke-width="0.9"/>
<polygon points="571.4,273.1 565.5,267.9 558.0,266.7 562.6,270.8" fill="#140904" stroke="#a85a1a" stroke-width="0.9"/>
<polygon points="463.0,334.3 466.7,343.2 467.9,333.3 464.3,324.5" fill="#140904" stroke="#a85a1a" stroke-width="0.9"/>
<polygon points="478.4,282.7 474.9,290.1 483.2,283.9 486.2,277.6" fill="#140904" stroke="#a85a1a" stroke-width="0.9"/>
<polygon points="507.6,389.6 518.2,392.0 516.8,387.8 505.0,385.1" fill="#140904" stroke="#a85a1a" stroke-width="0.9"/>
<polygon points="531.3,258.6 523.9,259.0 525.9,262.5 531.1,262.3" fill="#140904" stroke="#a85a1a" stroke-width="0.9"/>
<polygon points="538.7,259.2 531.3,258.6 531.1,262.3 536.2,262.7" fill="#140904" stroke="#a85a1a" stroke-width="0.9"/>
<polygon points="593.8,308.1 592.8,299.5 586.6,291.8 587.4,299.5" fill="#140904" stroke="#a85a1a" stroke-width="0.9"/>
<polygon points="540.4,392.3 551.1,390.3 553.4,385.8 541.5,388.2" fill="#140904" stroke="#a85a1a" stroke-width="0.9"/>
<polygon points="585.5,362.4 592.0,354.4 593.2,345.2 586.6,353.3" fill="#140904" stroke="#a85a1a" stroke-width="0.9"/>
<polygon points="596.1,326.5 597.7,317.4 593.8,308.1 592.3,316.7" fill="#140904" stroke="#a85a1a" stroke-width="0.9"/>
<polygon points="523.9,259.0 516.7,260.4 521.0,263.5 525.9,262.5" fill="#140904" stroke="#a85a1a" stroke-width="0.9"/>
<polygon points="593.2,345.2 597.4,336.3 596.1,326.5 592.0,335.2" fill="#140904" stroke="#a85a1a" stroke-width="0.9"/>
<polygon points="586.6,291.8 583.6,284.3 575.6,279.0 578.2,285.3" fill="#140904" stroke="#a85a1a" stroke-width="0.9"/>
<polygon points="545.8,260.8 538.7,259.2 536.2,262.7 541.1,263.8" fill="#140904" stroke="#a85a1a" stroke-width="0.9"/>
<polygon points="518.2,392.0 529.3,392.9 529.1,388.8 516.8,387.8" fill="#140904" stroke="#a85a1a" stroke-width="0.9"/>
<polygon points="529.3,392.9 540.4,392.3 541.5,388.2 529.1,388.8" fill="#140904" stroke="#a85a1a" stroke-width="0.9"/>
<polygon points="516.7,260.4 510.1,262.7 516.4,265.1 521.0,263.5" fill="#140904" stroke="#a85a1a" stroke-width="0.9"/>
<polygon points="490.8,271.9 486.2,277.6 495.7,274.4 499.3,269.9" fill="#140904" stroke="#a85a1a" stroke-width="0.9"/>
<polygon points="484.8,375.3 494.2,380.9 492.0,373.8 482.0,367.9" fill="#140904" stroke="#a85a1a" stroke-width="0.9"/>
<polygon points="552.3,263.4 545.8,260.8 541.1,263.8 545.5,265.6" fill="#140904" stroke="#a85a1a" stroke-width="0.9"/>
<polygon points="575.6,279.0 571.4,273.1 562.6,270.8 566.0,275.4" fill="#140904" stroke="#a85a1a" stroke-width="0.9"/>
<polygon points="564.5,381.9 574.3,376.6 577.0,369.3 566.6,375.0" fill="#140904" stroke="#a85a1a" stroke-width="0.9"/>
<polygon points="510.1,262.7 504.2,265.9 512.4,267.3 516.4,265.1" fill="#140904" stroke="#a85a1a" stroke-width="0.9"/>
<polygon points="558.0,266.7 552.3,263.4 545.5,265.6 549.4,267.9" fill="#140904" stroke="#a85a1a" stroke-width="0.9"/>
<polygon points="473.8,360.7 482.0,367.9 481.0,358.9 472.7,351.6" fill="#140904" stroke="#a85a1a" stroke-width="0.9"/>
<polygon points="474.9,290.1 473.6,297.8 482.1,290.4 483.2,283.9" fill="#140904" stroke="#a85a1a" stroke-width="0.9"/>
<polygon points="467.2,306.2 468.2,314.8 474.4,305.5 473.6,297.8" fill="#140904" stroke="#a85a1a" stroke-width="0.9"/>
<polygon points="464.3,324.5 467.9,333.3 471.5,323.1 468.2,314.8" fill="#140904" stroke="#a85a1a" stroke-width="0.9"/>
<polygon points="466.7,343.2 472.7,351.6 473.8,341.5 467.9,333.3" fill="#140904" stroke="#a85a1a" stroke-width="0.9"/>
<polygon points="504.2,265.9 499.3,269.9 509.0,270.0 512.4,267.3" fill="#140904" stroke="#a85a1a" stroke-width="0.9"/>
<polygon points="494.2,380.9 505.0,385.1 503.4,378.3 492.0,373.8" fill="#140904" stroke="#a85a1a" stroke-width="0.9"/>
<polygon points="486.2,277.6 483.2,283.9 493.3,279.3 495.7,274.4" fill="#140904" stroke="#a85a1a" stroke-width="0.9"/>
<polygon points="577.0,369.3 585.5,362.4 586.6,353.3 577.9,360.4" fill="#140904" stroke="#a85a1a" stroke-width="0.9"/>
<polygon points="587.4,299.5 586.6,291.8 578.2,285.3 578.9,291.9" fill="#140904" stroke="#a85a1a" stroke-width="0.9"/>
<polygon points="592.3,316.7 593.8,308.1 587.4,299.5 586.1,307.2" fill="#140904" stroke="#a85a1a" stroke-width="0.9"/>
<polygon points="562.6,270.8 558.0,266.7 549.4,267.9 552.6,270.7" fill="#140904" stroke="#a85a1a" stroke-width="0.9"/>
<polygon points="553.4,385.8 564.5,381.9 566.6,375.0 554.8,379.1" fill="#140904" stroke="#a85a1a" stroke-width="0.9"/>
<polygon points="578.2,285.3 575.6,279.0 566.0,275.4 568.0,280.4" fill="#140904" stroke="#a85a1a" stroke-width="0.9"/>
<polygon points="592.0,335.2 596.1,326.5 592.3,316.7 588.4,324.8" fill="#140904" stroke="#a85a1a" stroke-width="0.9"/>
<polygon points="586.6,353.3 593.2,345.2 592.0,335.2 585.5,343.2" fill="#140904" stroke="#a85a1a" stroke-width="0.9"/>
<polygon points="499.3,269.9 495.7,274.4 506.5,273.1 509.0,270.0" fill="#140904" stroke="#a85a1a" stroke-width="0.9"/>
<polygon points="505.0,385.1 516.8,387.8 516.0,381.2 503.4,378.3" fill="#140904" stroke="#a85a1a" stroke-width="0.9"/>
<polygon points="531.1,262.3 525.9,262.5 528.2,268.5 530.8,268.4" fill="#140904" stroke="#a85a1a" stroke-width="0.9"/>
<polygon points="541.5,388.2 553.4,385.8 554.8,379.1 542.2,381.6" fill="#140904" stroke="#a85a1a" stroke-width="0.9"/>
<polygon points="536.2,262.7 531.1,262.3 530.8,268.4 533.4,268.6" fill="#140904" stroke="#a85a1a" stroke-width="0.9"/>
<polygon points="566.0,275.4 562.6,270.8 552.6,270.7 554.9,273.9" fill="#140904" stroke="#a85a1a" stroke-width="0.9"/>
<polygon points="525.9,262.5 521.0,263.5 525.7,269.0 528.2,268.5" fill="#140904" stroke="#a85a1a" stroke-width="0.9"/>
<polygon points="541.1,263.8 536.2,262.7 533.4,268.6 535.9,269.2" fill="#140904" stroke="#a85a1a" stroke-width="0.9"/>
<polygon points="482.0,367.9 492.0,373.8 491.2,365.0 481.0,358.9" fill="#140904" stroke="#a85a1a" stroke-width="0.9"/>
<polygon points="516.8,387.8 529.1,388.8 529.0,382.3 516.0,381.2" fill="#140904" stroke="#a85a1a" stroke-width="0.9"/>
<polygon points="521.0,263.5 516.4,265.1 523.3,269.8 525.7,269.0" fill="#140904" stroke="#a85a1a" stroke-width="0.9"/>
<polygon points="529.1,388.8 541.5,388.2 542.2,381.6 529.0,382.3" fill="#140904" stroke="#a85a1a" stroke-width="0.9"/>
<polygon points="483.2,283.9 482.1,290.4 492.5,284.5 493.3,279.3" fill="#140904" stroke="#a85a1a" stroke-width="0.9"/>
<polygon points="473.6,297.8 474.4,305.5 482.8,297.0 482.1,290.4" fill="#140904" stroke="#a85a1a" stroke-width="0.9"/>
<polygon points="545.5,265.6 541.1,263.8 535.9,269.2 538.2,270.1" fill="#140904" stroke="#a85a1a" stroke-width="0.9"/>
<polygon points="566.6,375.0 577.0,369.3 577.9,360.4 567.3,366.1" fill="#140904" stroke="#a85a1a" stroke-width="0.9"/>
<polygon points="468.2,314.8 471.5,323.1 477.4,313.0 474.4,305.5" fill="#140904" stroke="#a85a1a" stroke-width="0.9"/>
<polygon points="516.4,265.1 512.4,267.3 521.3,271.0 523.3,269.8" fill="#140904" stroke="#a85a1a" stroke-width="0.9"/>
<polygon points="578.9,291.9 578.2,285.3 568.0,280.4 568.5,285.6" fill="#140904" stroke="#a85a1a" stroke-width="0.9"/>
<polygon points="586.1,307.2 587.4,299.5 578.9,291.9 577.8,298.4" fill="#140904" stroke="#a85a1a" stroke-width="0.9"/>
<polygon points="549.4,267.9 545.5,265.6 538.2,270.1 540.2,271.3" fill="#140904" stroke="#a85a1a" stroke-width="0.9"/>
<polygon points="495.7,274.4 493.3,279.3 504.9,276.5 506.5,273.1" fill="#140904" stroke="#a85a1a" stroke-width="0.9"/>
<polygon points="472.7,351.6 481.0,358.9 482.0,348.7 473.8,341.5" fill="#140904" stroke="#a85a1a" stroke-width="0.9"/>
<polygon points="467.9,333.3 473.8,341.5 477.1,330.8 471.5,323.1" fill="#140904" stroke="#a85a1a" stroke-width="0.9"/>
<polygon points="568.0,280.4 566.0,275.4 554.9,273.9 556.3,277.3" fill="#140904" stroke="#a85a1a" stroke-width="0.9"/>
<polygon points="588.4,324.8 592.3,316.7 586.1,307.2 582.6,314.6" fill="#140904" stroke="#a85a1a" stroke-width="0.9"/>
<polygon points="512.4,267.3 509.0,270.0 519.6,272.3 521.3,271.0" fill="#140904" stroke="#a85a1a" stroke-width="0.9"/>
<polygon points="577.9,360.4 586.6,353.3 585.5,343.2 577.0,350.1" fill="#140904" stroke="#a85a1a" stroke-width="0.9"/>
<polygon points="552.6,270.7 549.4,267.9 540.2,271.3 541.8,272.7" fill="#140904" stroke="#a85a1a" stroke-width="0.9"/>
<polygon points="585.5,343.2 592.0,335.2 588.4,324.8 582.3,332.4" fill="#140904" stroke="#a85a1a" stroke-width="0.9"/>
<polygon points="492.0,373.8 503.4,378.3 502.9,369.6 491.2,365.0" fill="#140904" stroke="#a85a1a" stroke-width="0.9"/>
<polygon points="509.0,270.0 506.5,273.1 518.3,273.9 519.6,272.3" fill="#140904" stroke="#a85a1a" stroke-width="0.9"/>
<polygon points="554.8,379.1 566.6,375.0 567.3,366.1 555.3,370.3" fill="#140904" stroke="#a85a1a" stroke-width="0.9"/>
<polygon points="554.9,273.9 552.6,270.7 541.8,272.7 543.0,274.3" fill="#140904" stroke="#a85a1a" stroke-width="0.9"/>
<polygon points="482.1,290.4 482.8,297.0 493.0,289.6 492.5,284.5" fill="#140904" stroke="#a85a1a" stroke-width="0.9"/>
<polygon points="493.3,279.3 492.5,284.5 504.3,280.1 504.9,276.5" fill="#140904" stroke="#a85a1a" stroke-width="0.9"/>
<polygon points="568.5,285.6 568.0,280.4 556.3,277.3 556.7,280.9" fill="#140904" stroke="#a85a1a" stroke-width="0.9"/>
<polygon points="474.4,305.5 477.4,313.0 485.4,303.4 482.8,297.0" fill="#140904" stroke="#a85a1a" stroke-width="0.9"/>
<polygon points="577.8,298.4 578.9,291.9 568.5,285.6 567.7,290.8" fill="#140904" stroke="#a85a1a" stroke-width="0.9"/>
<polygon points="506.5,273.1 504.9,276.5 517.5,275.7 518.3,273.9" fill="#140904" stroke="#a85a1a" stroke-width="0.9"/>
<polygon points="556.3,277.3 554.9,273.9 543.0,274.3 543.7,276.1" fill="#140904" stroke="#a85a1a" stroke-width="0.9"/>
<polygon points="481.0,358.9 491.2,365.0 492.0,354.6 482.0,348.7" fill="#140904" stroke="#a85a1a" stroke-width="0.9"/>
<polygon points="503.4,378.3 516.0,381.2 515.7,372.5 502.9,369.6" fill="#140904" stroke="#a85a1a" stroke-width="0.9"/>
<polygon points="582.6,314.6 586.1,307.2 577.8,298.4 574.8,304.7" fill="#140904" stroke="#a85a1a" stroke-width="0.9"/>
<polygon points="471.5,323.1 477.1,330.8 482.5,319.9 477.4,313.0" fill="#140904" stroke="#a85a1a" stroke-width="0.9"/>
<polygon points="542.2,381.6 554.8,379.1 555.3,370.3 542.4,372.9" fill="#140904" stroke="#a85a1a" stroke-width="0.9"/>
<polygon points="530.8,268.4 528.2,268.5 530.5,276.7 530.5,276.7" fill="#140904" stroke="#a85a1a" stroke-width="0.9"/>
<polygon points="533.4,268.6 530.8,268.4 530.5,276.7 530.5,276.7" fill="#140904" stroke="#a85a1a" stroke-width="0.9"/>
<polygon points="528.2,268.5 525.7,269.0 530.5,276.7 530.5,276.7" fill="#140904" stroke="#a85a1a" stroke-width="0.9"/>
<polygon points="473.8,341.5 482.0,348.7 484.8,337.5 477.1,330.8" fill="#140904" stroke="#a85a1a" stroke-width="0.9"/>
<polygon points="535.9,269.2 533.4,268.6 530.5,276.7 530.5,276.7" fill="#140904" stroke="#a85a1a" stroke-width="0.9"/>
<polygon points="567.3,366.1 577.9,360.4 577.0,350.1 566.6,355.7" fill="#140904" stroke="#a85a1a" stroke-width="0.9"/>
<polygon points="525.7,269.0 523.3,269.8 530.5,276.7 530.5,276.7" fill="#140904" stroke="#a85a1a" stroke-width="0.9"/>
<polygon points="538.2,270.1 535.9,269.2 530.5,276.7 530.5,276.7" fill="#140904" stroke="#a85a1a" stroke-width="0.9"/>
<polygon points="523.3,269.8 521.3,271.0 530.5,276.7 530.5,276.7" fill="#140904" stroke="#a85a1a" stroke-width="0.9"/>
<polygon points="582.3,332.4 588.4,324.8 582.6,314.6 577.2,321.3" fill="#140904" stroke="#a85a1a" stroke-width="0.9"/>
<polygon points="540.2,271.3 538.2,270.1 530.5,276.7 530.5,276.7" fill="#140904" stroke="#a85a1a" stroke-width="0.9"/>
<polygon points="492.5,284.5 493.0,289.6 504.7,283.6 504.3,280.1" fill="#140904" stroke="#a85a1a" stroke-width="0.9"/>
<polygon points="516.0,381.2 529.0,382.3 529.0,373.6 515.7,372.5" fill="#140904" stroke="#a85a1a" stroke-width="0.9"/>
<polygon points="504.9,276.5 504.3,280.1 517.1,277.5 517.5,275.7" fill="#140904" stroke="#a85a1a" stroke-width="0.9"/>
<polygon points="529.0,382.3 542.2,381.6 542.4,372.9 529.0,373.6" fill="#140904" stroke="#a85a1a" stroke-width="0.9"/>
<polygon points="521.3,271.0 519.6,272.3 530.5,276.7 530.5,276.7" fill="#140904" stroke="#a85a1a" stroke-width="0.9"/>
<polygon points="577.0,350.1 585.5,343.2 582.3,332.4 574.3,338.9" fill="#140904" stroke="#a85a1a" stroke-width="0.9"/>
<polygon points="541.8,272.7 540.2,271.3 530.5,276.7 530.5,276.7" fill="#140904" stroke="#a85a1a" stroke-width="0.9"/>
<polygon points="556.7,280.9 556.3,277.3 543.7,276.1 543.9,277.9" fill="#140904" stroke="#a85a1a" stroke-width="0.9"/>
<polygon points="567.7,290.8 568.5,285.6 556.7,280.9 556.1,284.4" fill="#140904" stroke="#a85a1a" stroke-width="0.9"/>
<polygon points="519.6,272.3 518.3,273.9 530.5,276.7 530.5,276.7" fill="#140904" stroke="#a85a1a" stroke-width="0.9"/>
<polygon points="482.8,297.0 485.4,303.4 495.0,294.6 493.0,289.6" fill="#140904" stroke="#a85a1a" stroke-width="0.9"/>
<polygon points="543.0,274.3 541.8,272.7 530.5,276.7 530.5,276.7" fill="#140904" stroke="#a85a1a" stroke-width="0.9"/>
<polygon points="518.3,273.9 517.5,275.7 530.5,276.7 530.5,276.7" fill="#140904" stroke="#a85a1a" stroke-width="0.9"/>
<polygon points="543.7,276.1 543.0,274.3 530.5,276.7 530.5,276.7" fill="#140904" stroke="#a85a1a" stroke-width="0.9"/>
<polygon points="574.8,304.7 577.8,298.4 567.7,290.8 565.3,295.7" fill="#140904" stroke="#a85a1a" stroke-width="0.9"/>
<polygon points="504.3,280.1 504.7,283.6 517.3,279.3 517.1,277.5" fill="#140904" stroke="#a85a1a" stroke-width="0.9"/>
<polygon points="517.5,275.7 517.1,277.5 530.5,276.7 530.5,276.7" fill="#140904" stroke="#a85a1a" stroke-width="0.9"/>
<polygon points="543.9,277.9 543.7,276.1 530.5,276.7 530.5,276.7" fill="#140904" stroke="#a85a1a" stroke-width="0.9"/>
<polygon points="491.2,365.0 502.9,369.6 503.4,359.1 492.0,354.6" fill="#140904" stroke="#a85a1a" stroke-width="0.9"/>
<polygon points="556.1,284.4 556.7,280.9 543.9,277.9 543.5,279.7" fill="#140904" stroke="#a85a1a" stroke-width="0.9"/>
<polygon points="477.4,313.0 482.5,319.9 489.6,309.2 485.4,303.4" fill="#140904" stroke="#a85a1a" stroke-width="0.9"/>
<polygon points="517.1,277.5 517.3,279.3 530.5,276.7 530.5,276.7" fill="#140904" stroke="#a85a1a" stroke-width="0.9"/>
<polygon points="543.5,279.7 543.9,277.9 530.5,276.7 530.5,276.7" fill="#140904" stroke="#a85a1a" stroke-width="0.9"/>
<polygon points="493.0,289.6 495.0,294.6 506.1,287.1 504.7,283.6" fill="#140904" stroke="#a85a1a" stroke-width="0.9"/>
<polygon points="555.3,370.3 567.3,366.1 566.6,355.7 554.8,359.9" fill="#140904" stroke="#a85a1a" stroke-width="0.9"/>
<polygon points="517.3,279.3 518.0,281.0 530.5,276.7 530.5,276.7" fill="#140904" stroke="#a85a1a" stroke-width="0.9"/>
<polygon points="577.2,321.3 582.6,314.6 574.8,304.7 570.2,310.5" fill="#140904" stroke="#a85a1a" stroke-width="0.9"/>
<polygon points="542.7,281.4 543.5,279.7 530.5,276.7 530.5,276.7" fill="#140904" stroke="#a85a1a" stroke-width="0.9"/>
<polygon points="477.1,330.8 484.8,337.5 489.4,326.0 482.5,319.9" fill="#140904" stroke="#a85a1a" stroke-width="0.9"/>
<polygon points="565.3,295.7 567.7,290.8 556.1,284.4 554.5,287.8" fill="#140904" stroke="#a85a1a" stroke-width="0.9"/>
<polygon points="504.7,283.6 506.1,287.1 518.0,281.0 517.3,279.3" fill="#140904" stroke="#a85a1a" stroke-width="0.9"/>
<polygon points="482.0,348.7 492.0,354.6 494.2,343.2 484.8,337.5" fill="#140904" stroke="#a85a1a" stroke-width="0.9"/>
<polygon points="518.0,281.0 519.2,282.7 530.5,276.7 530.5,276.7" fill="#140904" stroke="#a85a1a" stroke-width="0.9"/>
<polygon points="541.4,283.0 542.7,281.4 530.5,276.7 530.5,276.7" fill="#140904" stroke="#a85a1a" stroke-width="0.9"/>
<polygon points="554.5,287.8 556.1,284.4 543.5,279.7 542.7,281.4" fill="#140904" stroke="#a85a1a" stroke-width="0.9"/>
<polygon points="519.2,282.7 520.8,284.1 530.5,276.7 530.5,276.7" fill="#140904" stroke="#a85a1a" stroke-width="0.9"/>
<polygon points="539.7,284.4 541.4,283.0 530.5,276.7 530.5,276.7" fill="#140904" stroke="#a85a1a" stroke-width="0.9"/>
<polygon points="574.3,338.9 582.3,332.4 577.2,321.3 569.9,327.2" fill="#140904" stroke="#a85a1a" stroke-width="0.9"/>
<polygon points="566.6,355.7 577.0,350.1 574.3,338.9 564.5,344.2" fill="#140904" stroke="#a85a1a" stroke-width="0.9"/>
<polygon points="485.4,303.4 489.6,309.2 498.4,299.2 495.0,294.6" fill="#140904" stroke="#a85a1a" stroke-width="0.9"/>
<polygon points="520.8,284.1 522.8,285.3 530.5,276.7 530.5,276.7" fill="#140904" stroke="#a85a1a" stroke-width="0.9"/>
<polygon points="502.9,369.6 515.7,372.5 516.0,362.0 503.4,359.1" fill="#140904" stroke="#a85a1a" stroke-width="0.9"/>
<polygon points="537.7,285.5 539.7,284.4 530.5,276.7 530.5,276.7" fill="#140904" stroke="#a85a1a" stroke-width="0.9"/>
<polygon points="522.8,285.3 525.1,286.2 530.5,276.7 530.5,276.7" fill="#140904" stroke="#a85a1a" stroke-width="0.9"/>
<polygon points="535.3,286.3 537.7,285.5 530.5,276.7 530.5,276.7" fill="#140904" stroke="#a85a1a" stroke-width="0.9"/>
<polygon points="542.4,372.9 555.3,370.3 554.8,359.9 542.2,362.3" fill="#140904" stroke="#a85a1a" stroke-width="0.9"/>
<polygon points="525.1,286.2 527.6,286.7 530.5,276.7 530.5,276.7" fill="#140904" stroke="#a85a1a" stroke-width="0.9"/>
<polygon points="506.1,287.1 508.4,290.3 519.2,282.7 518.0,281.0" fill="#140904" stroke="#a85a1a" stroke-width="0.9"/>
<polygon points="532.8,286.8 535.3,286.3 530.5,276.7 530.5,276.7" fill="#140904" stroke="#a85a1a" stroke-width="0.9"/>
<polygon points="570.2,310.5 574.8,304.7 565.3,295.7 561.7,300.2" fill="#140904" stroke="#a85a1a" stroke-width="0.9"/>
<polygon points="527.6,286.7 530.2,287.0 530.5,276.7 530.5,276.7" fill="#140904" stroke="#a85a1a" stroke-width="0.9"/>
<polygon points="530.2,287.0 532.8,286.8 530.5,276.7 530.5,276.7" fill="#140904" stroke="#a85a1a" stroke-width="0.9"/>
<polygon points="495.0,294.6 498.4,299.2 508.4,290.3 506.1,287.1" fill="#140904" stroke="#a85a1a" stroke-width="0.9"/>
<polygon points="552.0,290.9 554.5,287.8 542.7,281.4 541.4,283.0" fill="#140904" stroke="#a85a1a" stroke-width="0.9"/>
<polygon points="515.7,372.5 529.0,373.6 529.0,363.0 516.0,362.0" fill="#140904" stroke="#a85a1a" stroke-width="0.9"/>
<polygon points="561.7,300.2 565.3,295.7 554.5,287.8 552.0,290.9" fill="#140904" stroke="#a85a1a" stroke-width="0.9"/>
<polygon points="529.0,373.6 542.4,372.9 542.2,362.3 529.0,363.0" fill="#140904" stroke="#a85a1a" stroke-width="0.9"/>
<polygon points="482.5,319.9 489.4,326.0 495.5,314.4 489.6,309.2" fill="#140904" stroke="#a85a1a" stroke-width="0.9"/>
<polygon points="508.4,290.3 511.6,293.1 520.8,284.1 519.2,282.7" fill="#140904" stroke="#a85a1a" stroke-width="0.9"/>
<polygon points="492.0,354.6 503.4,359.1 505.0,347.4 494.2,343.2" fill="#140904" stroke="#a85a1a" stroke-width="0.9"/>
<polygon points="548.6,293.6 552.0,290.9 541.4,283.0 539.7,284.4" fill="#140904" stroke="#a85a1a" stroke-width="0.9"/>
<polygon points="569.9,327.2 577.2,321.3 570.2,310.5 564.0,315.5" fill="#140904" stroke="#a85a1a" stroke-width="0.9"/>
<polygon points="484.8,337.5 494.2,343.2 497.8,331.0 489.4,326.0" fill="#140904" stroke="#a85a1a" stroke-width="0.9"/>
<polygon points="554.8,359.9 566.6,355.7 564.5,344.2 553.4,348.1" fill="#140904" stroke="#a85a1a" stroke-width="0.9"/>
<polygon points="489.6,309.2 495.5,314.4 503.0,303.3 498.4,299.2" fill="#140904" stroke="#a85a1a" stroke-width="0.9"/>
<polygon points="498.4,299.2 503.0,303.3 511.6,293.1 508.4,290.3" fill="#140904" stroke="#a85a1a" stroke-width="0.9"/>
<polygon points="511.6,293.1 515.5,295.4 522.8,285.3 520.8,284.1" fill="#140904" stroke="#a85a1a" stroke-width="0.9"/>
<polygon points="564.5,344.2 574.3,338.9 569.9,327.2 561.1,332.0" fill="#140904" stroke="#a85a1a" stroke-width="0.9"/>
<polygon points="544.6,295.8 548.6,293.6 539.7,284.4 537.7,285.5" fill="#140904" stroke="#a85a1a" stroke-width="0.9"/>
<polygon points="556.8,304.1 561.7,300.2 552.0,290.9 548.6,293.6" fill="#140904" stroke="#a85a1a" stroke-width="0.9"/>
<polygon points="564.0,315.5 570.2,310.5 561.7,300.2 556.8,304.1" fill="#140904" stroke="#a85a1a" stroke-width="0.9"/>
<polygon points="515.5,295.4 519.9,297.1 525.1,286.2 522.8,285.3" fill="#140904" stroke="#a85a1a" stroke-width="0.9"/>
<polygon points="540.0,297.4 544.6,295.8 537.7,285.5 535.3,286.3" fill="#140904" stroke="#a85a1a" stroke-width="0.9"/>
<polygon points="503.4,359.1 516.0,362.0 516.8,350.1 505.0,347.4" fill="#140904" stroke="#a85a1a" stroke-width="0.9"/>
<polygon points="489.4,326.0 497.8,331.0 502.7,318.7 495.5,314.4" fill="#140904" stroke="#a85a1a" stroke-width="0.9"/>
<polygon points="542.2,362.3 554.8,359.9 553.4,348.1 541.5,350.4" fill="#140904" stroke="#a85a1a" stroke-width="0.9"/>
<polygon points="519.9,297.1 524.8,298.3 527.6,286.7 525.1,286.2" fill="#140904" stroke="#a85a1a" stroke-width="0.9"/>
<polygon points="535.1,298.4 540.0,297.4 535.3,286.3 532.8,286.8" fill="#140904" stroke="#a85a1a" stroke-width="0.9"/>
<polygon points="503.0,303.3 508.7,306.7 515.5,295.4 511.6,293.1" fill="#140904" stroke="#a85a1a" stroke-width="0.9"/>
<polygon points="524.8,298.3 529.9,298.7 530.2,287.0 527.6,286.7" fill="#140904" stroke="#a85a1a" stroke-width="0.9"/>
<polygon points="529.9,298.7 535.1,298.4 532.8,286.8 530.2,287.0" fill="#140904" stroke="#a85a1a" stroke-width="0.9"/>
<polygon points="561.1,332.0 569.9,327.2 564.0,315.5 556.5,319.5" fill="#140904" stroke="#a85a1a" stroke-width="0.9"/>
<polygon points="494.2,343.2 505.0,347.4 507.6,334.8 497.8,331.0" fill="#140904" stroke="#a85a1a" stroke-width="0.9"/>
<polygon points="550.9,307.3 556.8,304.1 548.6,293.6 544.6,295.8" fill="#140904" stroke="#a85a1a" stroke-width="0.9"/>
<polygon points="495.5,314.4 502.7,318.7 508.7,306.7 503.0,303.3" fill="#140904" stroke="#a85a1a" stroke-width="0.9"/>
<polygon points="516.0,362.0 529.0,363.0 529.1,351.1 516.8,350.1" fill="#140904" stroke="#a85a1a" stroke-width="0.9"/>
<polygon points="529.0,363.0 542.2,362.3 541.5,350.4 529.1,351.1" fill="#140904" stroke="#a85a1a" stroke-width="0.9"/>
<polygon points="553.4,348.1 564.5,344.2 561.1,332.0 551.1,335.5" fill="#140904" stroke="#a85a1a" stroke-width="0.9"/>
<polygon points="556.5,319.5 564.0,315.5 556.8,304.1 550.9,307.3" fill="#140904" stroke="#a85a1a" stroke-width="0.9"/>
<polygon points="508.7,306.7 515.2,309.2 519.9,297.1 515.5,295.4" fill="#140904" stroke="#a85a1a" stroke-width="0.9"/>
<polygon points="544.3,309.7 550.9,307.3 544.6,295.8 540.0,297.4" fill="#140904" stroke="#a85a1a" stroke-width="0.9"/>
<polygon points="497.8,331.0 507.6,334.8 511.0,322.0 502.7,318.7" fill="#140904" stroke="#a85a1a" stroke-width="0.9"/>
<polygon points="505.0,347.4 516.8,350.1 518.2,337.3 507.6,334.8" fill="#140904" stroke="#a85a1a" stroke-width="0.9"/>
<polygon points="502.7,318.7 511.0,322.0 515.2,309.2 508.7,306.7" fill="#140904" stroke="#a85a1a" stroke-width="0.9"/>
<polygon points="515.2,309.2 522.3,310.8 524.8,298.3 519.9,297.1" fill="#140904" stroke="#a85a1a" stroke-width="0.9"/>
<polygon points="551.1,335.5 561.1,332.0 556.5,319.5 548.1,322.5" fill="#140904" stroke="#a85a1a" stroke-width="0.9"/>
<polygon points="541.5,350.4 553.4,348.1 551.1,335.5 540.4,337.6" fill="#140904" stroke="#a85a1a" stroke-width="0.9"/>
<polygon points="537.1,311.1 544.3,309.7 540.0,297.4 535.1,298.4" fill="#140904" stroke="#a85a1a" stroke-width="0.9"/>
<polygon points="548.1,322.5 556.5,319.5 550.9,307.3 544.3,309.7" fill="#140904" stroke="#a85a1a" stroke-width="0.9"/>
<polygon points="522.3,310.8 529.7,311.5 529.9,298.7 524.8,298.3" fill="#140904" stroke="#a85a1a" stroke-width="0.9"/>
<polygon points="529.7,311.5 537.1,311.1 535.1,298.4 529.9,298.7" fill="#140904" stroke="#a85a1a" stroke-width="0.9"/>
<polygon points="516.8,350.1 529.1,351.1 529.3,338.2 518.2,337.3" fill="#140904" stroke="#a85a1a" stroke-width="0.9"/>
<polygon points="529.1,351.1 541.5,350.4 540.4,337.6 529.3,338.2" fill="#140904" stroke="#a85a1a" stroke-width="0.9"/>
<polygon points="507.6,334.8 518.2,337.3 520.0,324.0 511.0,322.0" fill="#140904" stroke="#a85a1a" stroke-width="0.9"/>
<polygon points="511.0,322.0 520.0,324.0 522.3,310.8 515.2,309.2" fill="#140904" stroke="#a85a1a" stroke-width="0.9"/>
<polygon points="540.4,337.6 551.1,335.5 548.1,322.5 538.9,324.3" fill="#140904" stroke="#a85a1a" stroke-width="0.9"/>
<polygon points="538.9,324.3 548.1,322.5 544.3,309.7 537.1,311.1" fill="#140904" stroke="#a85a1a" stroke-width="0.9"/>
<polygon points="520.0,324.0 529.4,324.8 529.7,311.5 522.3,310.8" fill="#140904" stroke="#a85a1a" stroke-width="0.9"/>
<polygon points="529.4,324.8 538.9,324.3 537.1,311.1 529.7,311.5" fill="#140904" stroke="#a85a1a" stroke-width="0.9"/>
<polygon points="518.2,337.3 529.3,338.2 529.4,324.8 520.0,324.0" fill="#140904" stroke="#a85a1a" stroke-width="0.9"/>
<polygon points="529.3,338.2 540.4,337.6 538.9,324.3 529.4,324.8" fill="#140904" stroke="#a85a1a" stroke-width="0.9"/></g><g clip-path="url(#litclip)"><polygon points="499.9,265.3 491.1,270.0 497.0,266.9 504.5,262.8" fill="#8e4a12" stroke="#8e4a12" stroke-width="0.9"/>
<polygon points="588.4,362.6 592.3,354.4 596.1,345.7 592.0,354.4" fill="#8e4a12" stroke="#8e4a12" stroke-width="0.9"/>
<polygon points="599.0,327.0 598.0,317.7 596.7,308.3 597.7,317.4" fill="#8e4a12" stroke="#8e4a12" stroke-width="0.9"/>
<polygon points="596.7,308.3 593.1,299.5 589.5,291.2 592.8,299.5" fill="#8e4a12" stroke="#8e4a12" stroke-width="0.9"/>
<polygon points="596.1,345.7 597.7,336.6 599.0,327.0 597.4,336.3" fill="#8e4a12" stroke="#8e4a12" stroke-width="0.9"/>
<polygon points="478.7,281.9 472.6,289.4 478.4,282.7 483.8,275.9" fill="#8e4a12" stroke="#8e4a12" stroke-width="0.9"/>
<polygon points="571.6,271.3 563.2,266.2 558.3,263.6 565.5,267.9" fill="#8e4a12" stroke="#8e4a12" stroke-width="0.9"/>
<polygon points="502.7,388.4 511.0,391.6 507.6,389.6 497.8,385.8" fill="#8e4a12" stroke="#8e4a12" stroke-width="0.9"/>
<polygon points="589.5,291.2 583.9,283.5 578.5,277.4 583.6,284.3" fill="#8e4a12" stroke="#8e4a12" stroke-width="0.9"/>
<polygon points="548.1,392.2 556.5,389.2 561.1,386.7 551.1,390.3" fill="#8b4912" stroke="#8e4a12" stroke-width="0.9"/>
<polygon points="482.5,374.6 489.4,380.7 484.8,375.3 477.1,368.5" fill="#834411" stroke="#8e4a12" stroke-width="0.9"/>
<polygon points="491.1,270.0 483.8,275.9 490.8,271.9 497.0,266.9" fill="#8d4b14" stroke="#8e4a12" stroke-width="0.9"/>
<polygon points="569.9,382.0 577.2,376.1 582.3,370.1 574.3,376.6" fill="#64340d" stroke="#8e4a12" stroke-width="0.9"/>
<polygon points="531.6,257.5 522.1,258.0 523.9,259.0 531.3,258.6" fill="#a25f24" stroke="#8e4a12" stroke-width="0.9"/>
<polygon points="511.0,391.6 520.0,393.7 518.2,392.0 507.6,389.6" fill="#572d0c" stroke="#8e4a12" stroke-width="0.9"/>
<polygon points="541.0,258.3 531.6,257.5 531.3,258.6 538.7,259.2" fill="#a56225" stroke="#8e4a12" stroke-width="0.9"/>
<polygon points="538.9,394.0 548.1,392.2 551.1,390.3 540.4,392.3" fill="#50290b" stroke="#8e4a12" stroke-width="0.9"/>
<polygon points="578.5,277.4 571.6,271.3 565.5,267.9 571.4,273.1" fill="#a36024" stroke="#8e4a12" stroke-width="0.9"/>
<polygon points="522.1,258.0 512.9,259.8 516.7,260.4 523.9,259.0" fill="#a15f24" stroke="#8e4a12" stroke-width="0.9"/>
<polygon points="550.0,260.4 541.0,258.3 538.7,259.2 545.8,260.8" fill="#ab682b" stroke="#8e4a12" stroke-width="0.9"/>
<polygon points="471.5,360.8 477.1,368.5 473.8,360.7 467.9,352.5" fill="#50290b" stroke="#8e4a12" stroke-width="0.9"/>
<polygon points="520.0,393.7 529.4,394.5 529.3,392.9 518.2,392.0" fill="#422209" stroke="#8e4a12" stroke-width="0.9"/>
<polygon points="529.4,394.5 538.9,394.0 540.4,392.3 529.3,392.9" fill="#402109" stroke="#8e4a12" stroke-width="0.9"/>
<polygon points="464.9,306.3 463.3,315.4 467.2,306.2 468.7,297.6" fill="#522b0c" stroke="#8e4a12" stroke-width="0.9"/>
<polygon points="462.0,325.0 463.0,334.3 464.3,324.5 463.3,315.4" fill="#48250a" stroke="#8e4a12" stroke-width="0.9"/>
<polygon points="464.3,343.7 467.9,352.5 466.7,343.2 463.0,334.3" fill="#47240a" stroke="#8e4a12" stroke-width="0.9"/>
<polygon points="472.6,289.4 468.7,297.6 474.9,290.1 478.4,282.7" fill="#6e3c13" stroke="#8e4a12" stroke-width="0.9"/>
<polygon points="512.9,259.8 504.5,262.8 510.1,262.7 516.7,260.4" fill="#a46227" stroke="#8e4a12" stroke-width="0.9"/>
<polygon points="582.3,370.1 588.4,362.6 592.0,354.4 585.5,362.4" fill="#49260b" stroke="#8e4a12" stroke-width="0.9"/>
<polygon points="558.3,263.6 550.0,260.4 545.8,260.8 552.3,263.4" fill="#b87332" stroke="#8e4a12" stroke-width="0.9"/>
<polygon points="597.7,317.4 596.7,308.3 592.8,299.5 593.8,308.1" fill="#9e5e25" stroke="#8e4a12" stroke-width="0.9"/>
<polygon points="489.4,380.7 497.8,385.8 494.2,380.9 484.8,375.3" fill="#3b1e08" stroke="#8e4a12" stroke-width="0.9"/>
<polygon points="597.4,336.3 599.0,327.0 597.7,317.4 596.1,326.5" fill="#894e1b" stroke="#8e4a12" stroke-width="0.9"/>
<polygon points="592.0,354.4 596.1,345.7 597.4,336.3 593.2,345.2" fill="#683a13" stroke="#8e4a12" stroke-width="0.9"/>
<polygon points="592.8,299.5 589.5,291.2 583.6,284.3 586.6,291.8" fill="#ae6c2e" stroke="#8e4a12" stroke-width="0.9"/>
<polygon points="561.1,386.7 569.9,382.0 574.3,376.6 564.5,381.9" fill="#371c08" stroke="#8e4a12" stroke-width="0.9"/>
<polygon points="483.8,275.9 478.4,282.7 486.2,277.6 490.8,271.9" fill="#8c501b" stroke="#8e4a12" stroke-width="0.9"/>
<polygon points="504.5,262.8 497.0,266.9 504.2,265.9 510.1,262.7" fill="#a7652b" stroke="#8e4a12" stroke-width="0.9"/>
<polygon points="583.6,284.3 578.5,277.4 571.4,273.1 575.6,279.0" fill="#c07b3a" stroke="#8e4a12" stroke-width="0.9"/>
<polygon points="565.5,267.9 558.3,263.6 552.3,263.4 558.0,266.7" fill="#c6803c" stroke="#8e4a12" stroke-width="0.9"/>
<polygon points="477.1,368.5 484.8,375.3 482.0,367.9 473.8,360.7" fill="#371c08" stroke="#8e4a12" stroke-width="0.9"/>
<polygon points="497.8,385.8 507.6,389.6 505.0,385.1 494.2,380.9" fill="#371c08" stroke="#8e4a12" stroke-width="0.9"/>
<polygon points="551.1,390.3 561.1,386.7 564.5,381.9 553.4,385.8" fill="#371c08" stroke="#8e4a12" stroke-width="0.9"/>
<polygon points="497.0,266.9 490.8,271.9 499.3,269.9 504.2,265.9" fill="#a8672c" stroke="#8e4a12" stroke-width="0.9"/>
<polygon points="574.3,376.6 582.3,370.1 585.5,362.4 577.0,369.3" fill="#42230b" stroke="#8e4a12" stroke-width="0.9"/>
<polygon points="468.7,297.6 467.2,306.2 473.6,297.8 474.9,290.1" fill="#6d3d15" stroke="#8e4a12" stroke-width="0.9"/>
<polygon points="463.3,315.4 464.3,324.5 468.2,314.8 467.2,306.2" fill="#4b280d" stroke="#8e4a12" stroke-width="0.9"/>
<polygon points="467.9,352.5 473.8,360.7 472.7,351.6 466.7,343.2" fill="#371c08" stroke="#8e4a12" stroke-width="0.9"/>
<polygon points="571.4,273.1 565.5,267.9 558.0,266.7 562.6,270.8" fill="#cb8743" stroke="#8e4a12" stroke-width="0.9"/>
<polygon points="463.0,334.3 466.7,343.2 467.9,333.3 464.3,324.5" fill="#371c08" stroke="#8e4a12" stroke-width="0.9"/>
<polygon points="478.4,282.7 474.9,290.1 483.2,283.9 486.2,277.6" fill="#90531e" stroke="#8e4a12" stroke-width="0.9"/>
<polygon points="507.6,389.6 518.2,392.0 516.8,387.8 505.0,385.1" fill="#371c08" stroke="#8e4a12" stroke-width="0.9"/>
<polygon points="531.3,258.6 523.9,259.0 525.9,262.5 531.1,262.3" fill="#c8823e" stroke="#8e4a12" stroke-width="0.9"/>
<polygon points="538.7,259.2 531.3,258.6 531.1,262.3 536.2,262.7" fill="#ca8541" stroke="#8e4a12" stroke-width="0.9"/>
<polygon points="593.8,308.1 592.8,299.5 586.6,291.8 587.4,299.5" fill="#ba7636" stroke="#8e4a12" stroke-width="0.9"/>
<polygon points="540.4,392.3 551.1,390.3 553.4,385.8 541.5,388.2" fill="#371c08" stroke="#8e4a12" stroke-width="0.9"/>
<polygon points="585.5,362.4 592.0,354.4 593.2,345.2 586.6,353.3" fill="#6d3d15" stroke="#8e4a12" stroke-width="0.9"/>
<polygon points="596.1,326.5 597.7,317.4 593.8,308.1 592.3,316.7" fill="#a7672c" stroke="#8e4a12" stroke-width="0.9"/>
<polygon points="523.9,259.0 516.7,260.4 521.0,263.5 525.9,262.5" fill="#c5803c" stroke="#8e4a12" stroke-width="0.9"/>
<polygon points="593.2,345.2 597.4,336.3 596.1,326.5 592.0,335.2" fill="#91541f" stroke="#8e4a12" stroke-width="0.9"/>
<polygon points="586.6,291.8 583.6,284.3 575.6,279.0 578.2,285.3" fill="#c9833f" stroke="#8e4a12" stroke-width="0.9"/>
<polygon points="545.8,260.8 538.7,259.2 536.2,262.7 541.1,263.8" fill="#cc8844" stroke="#8e4a12" stroke-width="0.9"/>
<polygon points="518.2,392.0 529.3,392.9 529.1,388.8 516.8,387.8" fill="#371c08" stroke="#8e4a12" stroke-width="0.9"/>
<polygon points="529.3,392.9 540.4,392.3 541.5,388.2 529.1,388.8" fill="#371c08" stroke="#8e4a12" stroke-width="0.9"/>
<polygon points="516.7,260.4 510.1,262.7 516.4,265.1 521.0,263.5" fill="#c47e3b" stroke="#8e4a12" stroke-width="0.9"/>
<polygon points="490.8,271.9 486.2,277.6 495.7,274.4 499.3,269.9" fill="#aa692d" stroke="#8e4a12" stroke-width="0.9"/>
<polygon points="484.8,375.3 494.2,380.9 492.0,373.8 482.0,367.9" fill="#371c08" stroke="#8e4a12" stroke-width="0.9"/>
<polygon points="552.3,263.4 545.8,260.8 541.1,263.8 545.5,265.6" fill="#cf8c48" stroke="#8e4a12" stroke-width="0.9"/>
<polygon points="575.6,279.0 571.4,273.1 562.6,270.8 566.0,275.4" fill="#cf8c48" stroke="#8e4a12" stroke-width="0.9"/>
<polygon points="564.5,381.9 574.3,376.6 577.0,369.3 566.6,375.0" fill="#43240b" stroke="#8e4a12" stroke-width="0.9"/>
<polygon points="510.1,262.7 504.2,265.9 512.4,267.3 516.4,265.1" fill="#c37e3b" stroke="#8e4a12" stroke-width="0.9"/>
<polygon points="558.0,266.7 552.3,263.4 545.5,265.6 549.4,267.9" fill="#d1904c" stroke="#8e4a12" stroke-width="0.9"/>
<polygon points="473.8,360.7 482.0,367.9 481.0,358.9 472.7,351.6" fill="#371c08" stroke="#8e4a12" stroke-width="0.9"/>
<polygon points="474.9,290.1 473.6,297.8 482.1,290.4 483.2,283.9" fill="#955821" stroke="#8e4a12" stroke-width="0.9"/>
<polygon points="467.2,306.2 468.2,314.8 474.4,305.5 473.6,297.8" fill="#784417" stroke="#8e4a12" stroke-width="0.9"/>
<polygon points="464.3,324.5 467.9,333.3 471.5,323.1 468.2,314.8" fill="#583010" stroke="#8e4a12" stroke-width="0.9"/>
<polygon points="466.7,343.2 472.7,351.6 473.8,341.5 467.9,333.3" fill="#3a1e09" stroke="#8e4a12" stroke-width="0.9"/>
<polygon points="504.2,265.9 499.3,269.9 509.0,270.0 512.4,267.3" fill="#c37e3b" stroke="#8e4a12" stroke-width="0.9"/>
<polygon points="494.2,380.9 505.0,385.1 503.4,378.3 492.0,373.8" fill="#371c08" stroke="#8e4a12" stroke-width="0.9"/>
<polygon points="486.2,277.6 483.2,283.9 493.3,279.3 495.7,274.4" fill="#ad6c2f" stroke="#8e4a12" stroke-width="0.9"/>
<polygon points="577.0,369.3 585.5,362.4 586.6,353.3 577.9,360.4" fill="#714016" stroke="#8e4a12" stroke-width="0.9"/>
<polygon points="587.4,299.5 586.6,291.8 578.2,285.3 578.9,291.9" fill="#cc8844" stroke="#8e4a12" stroke-width="0.9"/>
<polygon points="592.3,316.7 593.8,308.1 587.4,299.5 586.1,307.2" fill="#c17d3a" stroke="#8e4a12" stroke-width="0.9"/>
<polygon points="562.6,270.8 558.0,266.7 549.4,267.9 552.6,270.7" fill="#d49450" stroke="#8e4a12" stroke-width="0.9"/>
<polygon points="553.4,385.8 564.5,381.9 566.6,375.0 554.8,379.1" fill="#41220a" stroke="#8e4a12" stroke-width="0.9"/>
<polygon points="578.2,285.3 575.6,279.0 566.0,275.4 568.0,280.4" fill="#d3914d" stroke="#8e4a12" stroke-width="0.9"/>
<polygon points="592.0,335.2 596.1,326.5 592.3,316.7 588.4,324.8" fill="#ae6c2f" stroke="#8e4a12" stroke-width="0.9"/>
<polygon points="586.6,353.3 593.2,345.2 592.0,335.2 585.5,343.2" fill="#965822" stroke="#8e4a12" stroke-width="0.9"/>
<polygon points="499.3,269.9 495.7,274.4 506.5,273.1 509.0,270.0" fill="#c47f3c" stroke="#8e4a12" stroke-width="0.9"/>
<polygon points="505.0,385.1 516.8,387.8 516.0,381.2 503.4,378.3" fill="#371c08" stroke="#8e4a12" stroke-width="0.9"/>
<polygon points="531.1,262.3 525.9,262.5 528.2,268.5 530.8,268.4" fill="#d3924e" stroke="#8e4a12" stroke-width="0.9"/>
<polygon points="541.5,388.2 553.4,385.8 554.8,379.1 542.2,381.6" fill="#3c1f09" stroke="#8e4a12" stroke-width="0.9"/>
<polygon points="536.2,262.7 531.1,262.3 530.8,268.4 533.4,268.6" fill="#d4934f" stroke="#8e4a12" stroke-width="0.9"/>
<polygon points="566.0,275.4 562.6,270.8 552.6,270.7 554.9,273.9" fill="#d79854" stroke="#8e4a12" stroke-width="0.9"/>
<polygon points="525.9,262.5 521.0,263.5 525.7,269.0 528.2,268.5" fill="#d2904c" stroke="#8e4a12" stroke-width="0.9"/>
<polygon points="541.1,263.8 536.2,262.7 533.4,268.6 535.9,269.2" fill="#d59551" stroke="#8e4a12" stroke-width="0.9"/>
<polygon points="482.0,367.9 492.0,373.8 491.2,365.0 481.0,358.9" fill="#371c08" stroke="#8e4a12" stroke-width="0.9"/>
<polygon points="516.8,387.8 529.1,388.8 529.0,382.3 516.0,381.2" fill="#371c08" stroke="#8e4a12" stroke-width="0.9"/>
<polygon points="521.0,263.5 516.4,265.1 523.3,269.8 525.7,269.0" fill="#d1904c" stroke="#8e4a12" stroke-width="0.9"/>
<polygon points="529.1,388.8 541.5,388.2 542.2,381.6 529.0,382.3" fill="#371c08" stroke="#8e4a12" stroke-width="0.9"/>
<polygon points="483.2,283.9 482.1,290.4 492.5,284.5 493.3,279.3" fill="#b16f31" stroke="#8e4a12" stroke-width="0.9"/>
<polygon points="473.6,297.8 474.4,305.5 482.8,297.0 482.1,290.4" fill="#9c5d25" stroke="#8e4a12" stroke-width="0.9"/>
<polygon points="545.5,265.6 541.1,263.8 535.9,269.2 538.2,270.1" fill="#d79854" stroke="#8e4a12" stroke-width="0.9"/>
<polygon points="566.6,375.0 577.0,369.3 577.9,360.4 567.3,366.1" fill="#724016" stroke="#8e4a12" stroke-width="0.9"/>
<polygon points="468.2,314.8 471.5,323.1 477.4,313.0 474.4,305.5" fill="#844b1a" stroke="#8e4a12" stroke-width="0.9"/>
<polygon points="516.4,265.1 512.4,267.3 521.3,271.0 523.3,269.8" fill="#d18f4b" stroke="#8e4a12" stroke-width="0.9"/>
<polygon points="578.9,291.9 578.2,285.3 568.0,280.4 568.5,285.6" fill="#d69652" stroke="#8e4a12" stroke-width="0.9"/>
<polygon points="586.1,307.2 587.4,299.5 578.9,291.9 577.8,298.4" fill="#d08d49" stroke="#8e4a12" stroke-width="0.9"/>
<polygon points="549.4,267.9 545.5,265.6 538.2,270.1 540.2,271.3" fill="#d99a56" stroke="#8e4a12" stroke-width="0.9"/>
<polygon points="495.7,274.4 493.3,279.3 504.9,276.5 506.5,273.1" fill="#c7813d" stroke="#8e4a12" stroke-width="0.9"/>
<polygon points="472.7,351.6 481.0,358.9 482.0,348.7 473.8,341.5" fill="#4a280c" stroke="#8e4a12" stroke-width="0.9"/>
<polygon points="467.9,333.3 473.8,341.5 477.1,330.8 471.5,323.1" fill="#663913" stroke="#8e4a12" stroke-width="0.9"/>
<polygon points="568.0,280.4 566.0,275.4 554.9,273.9 556.3,277.3" fill="#da9c58" stroke="#8e4a12" stroke-width="0.9"/>
<polygon points="588.4,324.8 592.3,316.7 586.1,307.2 582.6,314.6" fill="#c7823e" stroke="#8e4a12" stroke-width="0.9"/>
<polygon points="512.4,267.3 509.0,270.0 519.6,272.3 521.3,271.0" fill="#d18f4b" stroke="#8e4a12" stroke-width="0.9"/>
<polygon points="577.9,360.4 586.6,353.3 585.5,343.2 577.0,350.1" fill="#995b23" stroke="#8e4a12" stroke-width="0.9"/>
<polygon points="552.6,270.7 549.4,267.9 540.2,271.3 541.8,272.7" fill="#db9d5a" stroke="#8e4a12" stroke-width="0.9"/>
<polygon points="585.5,343.2 592.0,335.2 588.4,324.8 582.3,332.4" fill="#b37032" stroke="#8e4a12" stroke-width="0.9"/>
<polygon points="492.0,373.8 503.4,378.3 502.9,369.6 491.2,365.0" fill="#3d1f09" stroke="#8e4a12" stroke-width="0.9"/>
<polygon points="509.0,270.0 506.5,273.1 518.3,273.9 519.6,272.3" fill="#d2904c" stroke="#8e4a12" stroke-width="0.9"/>
<polygon points="554.8,379.1 566.6,375.0 567.3,366.1 555.3,370.3" fill="#703f15" stroke="#8e4a12" stroke-width="0.9"/>
<polygon points="554.9,273.9 552.6,270.7 541.8,272.7 543.0,274.3" fill="#dda260" stroke="#8e4a12" stroke-width="0.9"/>
<polygon points="482.1,290.4 482.8,297.0 493.0,289.6 492.5,284.5" fill="#b77434" stroke="#8e4a12" stroke-width="0.9"/>
<polygon points="493.3,279.3 492.5,284.5 504.3,280.1 504.9,276.5" fill="#c98440" stroke="#8e4a12" stroke-width="0.9"/>
<polygon points="568.5,285.6 568.0,280.4 556.3,277.3 556.7,280.9" fill="#dda260" stroke="#8e4a12" stroke-width="0.9"/>
<polygon points="474.4,305.5 477.4,313.0 485.4,303.4 482.8,297.0" fill="#a36329" stroke="#8e4a12" stroke-width="0.9"/>
<polygon points="577.8,298.4 578.9,291.9 568.5,285.6 567.7,290.8" fill="#d99a56" stroke="#8e4a12" stroke-width="0.9"/>
<polygon points="506.5,273.1 504.9,276.5 517.5,275.7 518.3,273.9" fill="#d2914d" stroke="#8e4a12" stroke-width="0.9"/>
<polygon points="556.3,277.3 554.9,273.9 543.0,274.3 543.7,276.1" fill="#dfa766" stroke="#8e4a12" stroke-width="0.9"/>
<polygon points="481.0,358.9 491.2,365.0 492.0,354.6 482.0,348.7" fill="#5a3110" stroke="#8e4a12" stroke-width="0.9"/>
<polygon points="503.4,378.3 516.0,381.2 515.7,372.5 502.9,369.6" fill="#4b280d" stroke="#8e4a12" stroke-width="0.9"/>
<polygon points="582.6,314.6 586.1,307.2 577.8,298.4 574.8,304.7" fill="#d3914d" stroke="#8e4a12" stroke-width="0.9"/>
<polygon points="471.5,323.1 477.1,330.8 482.5,319.9 477.4,313.0" fill="#90531e" stroke="#8e4a12" stroke-width="0.9"/>
<polygon points="542.2,381.6 554.8,379.1 555.3,370.3 542.4,372.9" fill="#6b3c14" stroke="#8e4a12" stroke-width="0.9"/>
<polygon points="530.8,268.4 528.2,268.5 530.5,276.7 530.5,276.7" fill="#ca8c4b" stroke="#8e4a12" stroke-width="0.9"/>
<polygon points="533.4,268.6 530.8,268.4 530.5,276.7 530.5,276.7" fill="#cb8d4c" stroke="#8e4a12" stroke-width="0.9"/>
<polygon points="528.2,268.5 525.7,269.0 530.5,276.7 530.5,276.7" fill="#c88948" stroke="#8e4a12" stroke-width="0.9"/>
<polygon points="473.8,341.5 482.0,348.7 484.8,337.5 477.1,330.8" fill="#764217" stroke="#8e4a12" stroke-width="0.9"/>
<polygon points="535.9,269.2 533.4,268.6 530.5,276.7 530.5,276.7" fill="#c88b4b" stroke="#8e4a12" stroke-width="0.9"/>
<polygon points="567.3,366.1 577.9,360.4 577.0,350.1 566.6,355.7" fill="#995b24" stroke="#8e4a12" stroke-width="0.9"/>
<polygon points="525.7,269.0 523.3,269.8 530.5,276.7 530.5,276.7" fill="#c58545" stroke="#8e4a12" stroke-width="0.9"/>
<polygon points="538.2,270.1 535.9,269.2 530.5,276.7 530.5,276.7" fill="#c58849" stroke="#8e4a12" stroke-width="0.9"/>
<polygon points="523.3,269.8 521.3,271.0 530.5,276.7 530.5,276.7" fill="#c08141" stroke="#8e4a12" stroke-width="0.9"/>
<polygon points="582.3,332.4 588.4,324.8 582.6,314.6 577.2,321.3" fill="#ca8541" stroke="#8e4a12" stroke-width="0.9"/>
<polygon points="540.2,271.3 538.2,270.1 530.5,276.7 530.5,276.7" fill="#c28446" stroke="#8e4a12" stroke-width="0.9"/>
<polygon points="492.5,284.5 493.0,289.6 504.7,283.6 504.3,280.1" fill="#cb8743" stroke="#8e4a12" stroke-width="0.9"/>
<polygon points="516.0,381.2 529.0,382.3 529.0,373.6 515.7,372.5" fill="#583010" stroke="#8e4a12" stroke-width="0.9"/>
<polygon points="504.9,276.5 504.3,280.1 517.1,277.5 517.5,275.7" fill="#d4934f" stroke="#8e4a12" stroke-width="0.9"/>
<polygon points="529.0,382.3 542.2,381.6 542.4,372.9 529.0,373.6" fill="#633712" stroke="#8e4a12" stroke-width="0.9"/>
<polygon points="521.3,271.0 519.6,272.3 530.5,276.7 530.5,276.7" fill="#bc7c3d" stroke="#8e4a12" stroke-width="0.9"/>
<polygon points="577.0,350.1 585.5,343.2 582.3,332.4 574.3,338.9" fill="#b57233" stroke="#8e4a12" stroke-width="0.9"/>
<polygon points="541.8,272.7 540.2,271.3 530.5,276.7 530.5,276.7" fill="#be8144" stroke="#8e4a12" stroke-width="0.9"/>
<polygon points="556.7,280.9 556.3,277.3 543.7,276.1 543.9,277.9" fill="#e1ab6c" stroke="#8e4a12" stroke-width="0.9"/>
<polygon points="567.7,290.8 568.5,285.6 556.7,280.9 556.1,284.4" fill="#e0a868" stroke="#8e4a12" stroke-width="0.9"/>
<polygon points="519.6,272.3 518.3,273.9 530.5,276.7 530.5,276.7" fill="#ba793b" stroke="#8e4a12" stroke-width="0.9"/>
<polygon points="482.8,297.0 485.4,303.4 495.0,294.6 493.0,289.6" fill="#bd7938" stroke="#8e4a12" stroke-width="0.9"/>
<polygon points="543.0,274.3 541.8,272.7 530.5,276.7 530.5,276.7" fill="#bb7f42" stroke="#8e4a12" stroke-width="0.9"/>
<polygon points="518.3,273.9 517.5,275.7 530.5,276.7 530.5,276.7" fill="#b8783a" stroke="#8e4a12" stroke-width="0.9"/>
<polygon points="543.7,276.1 543.0,274.3 530.5,276.7 530.5,276.7" fill="#ba7d41" stroke="#8e4a12" stroke-width="0.9"/>
<polygon points="574.8,304.7 577.8,298.4 567.7,290.8 565.3,295.7" fill="#db9f5b" stroke="#8e4a12" stroke-width="0.9"/>
<polygon points="504.3,280.1 504.7,283.6 517.3,279.3 517.1,277.5" fill="#d59450" stroke="#8e4a12" stroke-width="0.9"/>
<polygon points="517.5,275.7 517.1,277.5 530.5,276.7 530.5,276.7" fill="#b7783a" stroke="#8e4a12" stroke-width="0.9"/>
<polygon points="543.9,277.9 543.7,276.1 530.5,276.7 530.5,276.7" fill="#bb7e42" stroke="#8e4a12" stroke-width="0.9"/>
<polygon points="491.2,365.0 502.9,369.6 503.4,359.1 492.0,354.6" fill="#693b14" stroke="#8e4a12" stroke-width="0.9"/>
<polygon points="556.1,284.4 556.7,280.9 543.9,277.9 543.5,279.7" fill="#e3af71" stroke="#8e4a12" stroke-width="0.9"/>
<polygon points="477.4,313.0 482.5,319.9 489.6,309.2 485.4,303.4" fill="#ab6a2e" stroke="#8e4a12" stroke-width="0.9"/>
<polygon points="517.1,277.5 517.3,279.3 530.5,276.7 530.5,276.7" fill="#b9793b" stroke="#8e4a12" stroke-width="0.9"/>
<polygon points="543.5,279.7 543.9,277.9 530.5,276.7 530.5,276.7" fill="#bc8044" stroke="#8e4a12" stroke-width="0.9"/>
<polygon points="493.0,289.6 495.0,294.6 506.1,287.1 504.7,283.6" fill="#ce8a46" stroke="#8e4a12" stroke-width="0.9"/>
<polygon points="555.3,370.3 567.3,366.1 566.6,355.7 554.8,359.9" fill="#985a23" stroke="#8e4a12" stroke-width="0.9"/>
<polygon points="517.3,279.3 518.0,281.0 530.5,276.7 530.5,276.7" fill="#bb7c3e" stroke="#8e4a12" stroke-width="0.9"/>
<polygon points="577.2,321.3 582.6,314.6 574.8,304.7 570.2,310.5" fill="#d59450" stroke="#8e4a12" stroke-width="0.9"/>
<polygon points="542.7,281.4 543.5,279.7 530.5,276.7 530.5,276.7" fill="#be8347" stroke="#8e4a12" stroke-width="0.9"/>
<polygon points="477.1,330.8 484.8,337.5 489.4,326.0 482.5,319.9" fill="#9a5b24" stroke="#8e4a12" stroke-width="0.9"/>
<polygon points="565.3,295.7 567.7,290.8 556.1,284.4 554.5,287.8" fill="#e2ad6e" stroke="#8e4a12" stroke-width="0.9"/>
<polygon points="504.7,283.6 506.1,287.1 518.0,281.0 517.3,279.3" fill="#d69753" stroke="#8e4a12" stroke-width="0.9"/>
<polygon points="482.0,348.7 492.0,354.6 494.2,343.2 484.8,337.5" fill="#854c1a" stroke="#8e4a12" stroke-width="0.9"/>
<polygon points="518.0,281.0 519.2,282.7 530.5,276.7 530.5,276.7" fill="#be8042" stroke="#8e4a12" stroke-width="0.9"/>
<polygon points="541.4,283.0 542.7,281.4 530.5,276.7 530.5,276.7" fill="#c2874b" stroke="#8e4a12" stroke-width="0.9"/>
<polygon points="554.5,287.8 556.1,284.4 543.5,279.7 542.7,281.4" fill="#e4b275" stroke="#8e4a12" stroke-width="0.9"/>
<polygon points="519.2,282.7 520.8,284.1 530.5,276.7 530.5,276.7" fill="#c28547" stroke="#8e4a12" stroke-width="0.9"/>
<polygon points="539.7,284.4 541.4,283.0 530.5,276.7 530.5,276.7" fill="#c58c50" stroke="#8e4a12" stroke-width="0.9"/>
<polygon points="574.3,338.9 582.3,332.4 577.2,321.3 569.9,327.2" fill="#cb8743" stroke="#8e4a12" stroke-width="0.9"/>
<polygon points="566.6,355.7 577.0,350.1 574.3,338.9 564.5,344.2" fill="#b67334" stroke="#8e4a12" stroke-width="0.9"/>
<polygon points="485.4,303.4 489.6,309.2 498.4,299.2 495.0,294.6" fill="#c47e3c" stroke="#8e4a12" stroke-width="0.9"/>
<polygon points="520.8,284.1 522.8,285.3 530.5,276.7 530.5,276.7" fill="#c68b4d" stroke="#8e4a12" stroke-width="0.9"/>
<polygon points="502.9,369.6 515.7,372.5 516.0,362.0 503.4,359.1" fill="#784417" stroke="#8e4a12" stroke-width="0.9"/>
<polygon points="537.7,285.5 539.7,284.4 530.5,276.7 530.5,276.7" fill="#c99155" stroke="#8e4a12" stroke-width="0.9"/>
<polygon points="522.8,285.3 525.1,286.2 530.5,276.7 530.5,276.7" fill="#cb9152" stroke="#8e4a12" stroke-width="0.9"/>
<polygon points="535.3,286.3 537.7,285.5 530.5,276.7 530.5,276.7" fill="#cd9558" stroke="#8e4a12" stroke-width="0.9"/>
<polygon points="542.4,372.9 555.3,370.3 554.8,359.9 542.2,362.3" fill="#945721" stroke="#8e4a12" stroke-width="0.9"/>
<polygon points="525.1,286.2 527.6,286.7 530.5,276.7 530.5,276.7" fill="#ce9557" stroke="#8e4a12" stroke-width="0.9"/>
<polygon points="506.1,287.1 508.4,290.3 519.2,282.7 518.0,281.0" fill="#d89955" stroke="#8e4a12" stroke-width="0.9"/>
<polygon points="532.8,286.8 535.3,286.3 530.5,276.7 530.5,276.7" fill="#d0985b" stroke="#8e4a12" stroke-width="0.9"/>
<polygon points="570.2,310.5 574.8,304.7 565.3,295.7 561.7,300.2" fill="#dda362" stroke="#8e4a12" stroke-width="0.9"/>
<polygon points="527.6,286.7 530.2,287.0 530.5,276.7 530.5,276.7" fill="#d0985a" stroke="#8e4a12" stroke-width="0.9"/>
<polygon points="530.2,287.0 532.8,286.8 530.5,276.7 530.5,276.7" fill="#d1995c" stroke="#8e4a12" stroke-width="0.9"/>
<polygon points="495.0,294.6 498.4,299.2 508.4,290.3 506.1,287.1" fill="#d08e4a" stroke="#8e4a12" stroke-width="0.9"/>
<polygon points="552.0,290.9 554.5,287.8 542.7,281.4 541.4,283.0" fill="#e5b478" stroke="#8e4a12" stroke-width="0.9"/>
<polygon points="515.7,372.5 529.0,373.6 529.0,363.0 516.0,362.0" fill="#844b1a" stroke="#8e4a12" stroke-width="0.9"/>
<polygon points="561.7,300.2 565.3,295.7 554.5,287.8 552.0,290.9" fill="#e4b173" stroke="#8e4a12" stroke-width="0.9"/>
<polygon points="529.0,373.6 542.4,372.9 542.2,362.3 529.0,363.0" fill="#8e521d" stroke="#8e4a12" stroke-width="0.9"/>
<polygon points="482.5,319.9 489.4,326.0 495.5,314.4 489.6,309.2" fill="#b47133" stroke="#8e4a12" stroke-width="0.9"/>
<polygon points="508.4,290.3 511.6,293.1 520.8,284.1 519.2,282.7" fill="#da9c58" stroke="#8e4a12" stroke-width="0.9"/>
<polygon points="492.0,354.6 503.4,359.1 505.0,347.4 494.2,343.2" fill="#92551f" stroke="#8e4a12" stroke-width="0.9"/>
<polygon points="548.6,293.6 552.0,290.9 541.4,283.0 539.7,284.4" fill="#e6b579" stroke="#8e4a12" stroke-width="0.9"/>
<polygon points="569.9,327.2 577.2,321.3 570.2,310.5 564.0,315.5" fill="#d69652" stroke="#8e4a12" stroke-width="0.9"/>
<polygon points="484.8,337.5 494.2,343.2 497.8,331.0 489.4,326.0" fill="#a46429" stroke="#8e4a12" stroke-width="0.9"/>
<polygon points="554.8,359.9 566.6,355.7 564.5,344.2 553.4,348.1" fill="#b47233" stroke="#8e4a12" stroke-width="0.9"/>
<polygon points="489.6,309.2 495.5,314.4 503.0,303.3 498.4,299.2" fill="#ca8440" stroke="#8e4a12" stroke-width="0.9"/>
<polygon points="498.4,299.2 503.0,303.3 511.6,293.1 508.4,290.3" fill="#d3924e" stroke="#8e4a12" stroke-width="0.9"/>
<polygon points="511.6,293.1 515.5,295.4 522.8,285.3 520.8,284.1" fill="#dca05d" stroke="#8e4a12" stroke-width="0.9"/>
<polygon points="564.5,344.2 574.3,338.9 569.9,327.2 561.1,332.0" fill="#cc8743" stroke="#8e4a12" stroke-width="0.9"/>
<polygon points="544.6,295.8 548.6,293.6 539.7,284.4 537.7,285.5" fill="#e6b67a" stroke="#8e4a12" stroke-width="0.9"/>
<polygon points="556.8,304.1 561.7,300.2 552.0,290.9 548.6,293.6" fill="#e4b376" stroke="#8e4a12" stroke-width="0.9"/>
<polygon points="564.0,315.5 570.2,310.5 561.7,300.2 556.8,304.1" fill="#dfa665" stroke="#8e4a12" stroke-width="0.9"/>
<polygon points="515.5,295.4 519.9,297.1 525.1,286.2 522.8,285.3" fill="#dea564" stroke="#8e4a12" stroke-width="0.9"/>
<polygon points="540.0,297.4 544.6,295.8 537.7,285.5 535.3,286.3" fill="#e6b579" stroke="#8e4a12" stroke-width="0.9"/>
<polygon points="503.4,359.1 516.0,362.0 516.8,350.1 505.0,347.4" fill="#9b5d25" stroke="#8e4a12" stroke-width="0.9"/>
<polygon points="489.4,326.0 497.8,331.0 502.7,318.7 495.5,314.4" fill="#bd7938" stroke="#8e4a12" stroke-width="0.9"/>
<polygon points="542.2,362.3 554.8,359.9 553.4,348.1 541.5,350.4" fill="#b16f31" stroke="#8e4a12" stroke-width="0.9"/>
<polygon points="519.9,297.1 524.8,298.3 527.6,286.7 525.1,286.2" fill="#e0a96a" stroke="#8e4a12" stroke-width="0.9"/>
<polygon points="535.1,298.4 540.0,297.4 535.3,286.3 532.8,286.8" fill="#e5b376" stroke="#8e4a12" stroke-width="0.9"/>
<polygon points="503.0,303.3 508.7,306.7 515.5,295.4 511.6,293.1" fill="#d69652" stroke="#8e4a12" stroke-width="0.9"/>
<polygon points="524.8,298.3 529.9,298.7 530.2,287.0 527.6,286.7" fill="#e2ad6f" stroke="#8e4a12" stroke-width="0.9"/>
<polygon points="529.9,298.7 535.1,298.4 532.8,286.8 530.2,287.0" fill="#e4b173" stroke="#8e4a12" stroke-width="0.9"/>
<polygon points="561.1,332.0 569.9,327.2 564.0,315.5 556.5,319.5" fill="#d69652" stroke="#8e4a12" stroke-width="0.9"/>
<polygon points="494.2,343.2 505.0,347.4 507.6,334.8 497.8,331.0" fill="#ad6c2f" stroke="#8e4a12" stroke-width="0.9"/>
<polygon points="550.9,307.3 556.8,304.1 548.6,293.6 544.6,295.8" fill="#e5b376" stroke="#8e4a12" stroke-width="0.9"/>
<polygon points="495.5,314.4 502.7,318.7 508.7,306.7 503.0,303.3" fill="#cd8a46" stroke="#8e4a12" stroke-width="0.9"/>
<polygon points="516.0,362.0 529.0,363.0 529.1,351.1 516.8,350.1" fill="#a4642a" stroke="#8e4a12" stroke-width="0.9"/>
<polygon points="529.0,363.0 542.2,362.3 541.5,350.4 529.1,351.1" fill="#ab6a2e" stroke="#8e4a12" stroke-width="0.9"/>
<polygon points="553.4,348.1 564.5,344.2 561.1,332.0 551.1,335.5" fill="#cb8642" stroke="#8e4a12" stroke-width="0.9"/>
<polygon points="556.5,319.5 564.0,315.5 556.8,304.1 550.9,307.3" fill="#dfa766" stroke="#8e4a12" stroke-width="0.9"/>
<polygon points="508.7,306.7 515.2,309.2 519.9,297.1 515.5,295.4" fill="#d99a56" stroke="#8e4a12" stroke-width="0.9"/>
<polygon points="544.3,309.7 550.9,307.3 544.6,295.8 540.0,297.4" fill="#e4b275" stroke="#8e4a12" stroke-width="0.9"/>
<polygon points="497.8,331.0 507.6,334.8 511.0,322.0 502.7,318.7" fill="#c5803d" stroke="#8e4a12" stroke-width="0.9"/>
<polygon points="505.0,347.4 516.8,350.1 518.2,337.3 507.6,334.8" fill="#b67334" stroke="#8e4a12" stroke-width="0.9"/>
<polygon points="502.7,318.7 511.0,322.0 515.2,309.2 508.7,306.7" fill="#d18f4b" stroke="#8e4a12" stroke-width="0.9"/>
<polygon points="515.2,309.2 522.3,310.8 524.8,298.3 519.9,297.1" fill="#db9f5c" stroke="#8e4a12" stroke-width="0.9"/>
<polygon points="551.1,335.5 561.1,332.0 556.5,319.5 548.1,322.5" fill="#d59551" stroke="#8e4a12" stroke-width="0.9"/>
<polygon points="541.5,350.4 553.4,348.1 551.1,335.5 540.4,337.6" fill="#c98440" stroke="#8e4a12" stroke-width="0.9"/>
<polygon points="537.1,311.1 544.3,309.7 540.0,297.4 535.1,298.4" fill="#e3af71" stroke="#8e4a12" stroke-width="0.9"/>
<polygon points="548.1,322.5 556.5,319.5 550.9,307.3 544.3,309.7" fill="#dea564" stroke="#8e4a12" stroke-width="0.9"/>
<polygon points="522.3,310.8 529.7,311.5 529.9,298.7 524.8,298.3" fill="#dea665" stroke="#8e4a12" stroke-width="0.9"/>
<polygon points="529.7,311.5 537.1,311.1 535.1,298.4 529.9,298.7" fill="#e1ab6c" stroke="#8e4a12" stroke-width="0.9"/>
<polygon points="516.8,350.1 529.1,351.1 529.3,338.2 518.2,337.3" fill="#be7a39" stroke="#8e4a12" stroke-width="0.9"/>
<polygon points="529.1,351.1 541.5,350.4 540.4,337.6 529.3,338.2" fill="#c5803c" stroke="#8e4a12" stroke-width="0.9"/>
<polygon points="507.6,334.8 518.2,337.3 520.0,324.0 511.0,322.0" fill="#cb8642" stroke="#8e4a12" stroke-width="0.9"/>
<polygon points="511.0,322.0 520.0,324.0 522.3,310.8 515.2,309.2" fill="#d49450" stroke="#8e4a12" stroke-width="0.9"/>
<polygon points="540.4,337.6 551.1,335.5 548.1,322.5 538.9,324.3" fill="#d4934f" stroke="#8e4a12" stroke-width="0.9"/>
<polygon points="538.9,324.3 548.1,322.5 544.3,309.7 537.1,311.1" fill="#dda15f" stroke="#8e4a12" stroke-width="0.9"/>
<polygon points="520.0,324.0 529.4,324.8 529.7,311.5 522.3,310.8" fill="#d79854" stroke="#8e4a12" stroke-width="0.9"/>
<polygon points="529.4,324.8 538.9,324.3 537.1,311.1 529.7,311.5" fill="#da9c58" stroke="#8e4a12" stroke-width="0.9"/>
<polygon points="518.2,337.3 529.3,338.2 529.4,324.8 520.0,324.0" fill="#cf8b47" stroke="#8e4a12" stroke-width="0.9"/>
<polygon points="529.3,338.2 540.4,337.6 538.9,324.3 529.4,324.8" fill="#d2904c" stroke="#8e4a12" stroke-width="0.9"/></g></g>
<g id="teapot"><polygon points="401.0,510.3 392.0,510.0 392.0,511.9 400.8,512.3" fill="#d69854" stroke="#8e4a12" stroke-width="0.9"/>
<polygon points="401.8,501.2 391.9,500.8 392.0,506.1 401.3,506.5" fill="#e4b073" stroke="#8e4a12" stroke-width="0.9"/>
<polygon points="392.0,510.0 383.1,510.5 383.2,512.5 392.0,511.9" fill="#d69854" stroke="#8e4a12" stroke-width="0.9"/>
<polygon points="402.4,495.1 391.8,494.7 391.9,500.8 401.8,501.2" fill="#e1aa6a" stroke="#8e4a12" stroke-width="0.9"/>
<polygon points="391.9,500.8 382.0,501.5 382.6,506.7 392.0,506.1" fill="#e3b072" stroke="#8e4a12" stroke-width="0.9"/>
<polygon points="401.3,506.5 392.0,506.1 392.0,510.0 401.0,510.3" fill="#e3b072" stroke="#8e4a12" stroke-width="0.9"/>
<polygon points="391.8,494.7 381.3,495.4 382.0,501.5 391.9,500.8" fill="#e0aa69" stroke="#8e4a12" stroke-width="0.9"/>
<polygon points="392.0,506.1 382.6,506.7 383.1,510.5 392.0,510.0" fill="#e3af71" stroke="#8e4a12" stroke-width="0.9"/>
<polygon points="409.8,511.6 401.0,510.3 400.8,512.3 409.5,513.6" fill="#d69753" stroke="#8e4a12" stroke-width="0.9"/>
<polygon points="402.9,488.6 391.8,488.2 391.8,494.7 402.4,495.1" fill="#db9e5a" stroke="#8e4a12" stroke-width="0.9"/>
<polygon points="411.6,502.7 401.8,501.2 401.3,506.5 410.6,507.8" fill="#e3b072" stroke="#8e4a12" stroke-width="0.9"/>
<polygon points="410.6,507.8 401.3,506.5 401.0,510.3 409.8,511.6" fill="#e3af71" stroke="#8e4a12" stroke-width="0.9"/>
<polygon points="412.8,496.7 402.4,495.1 401.8,501.2 411.6,502.7" fill="#e0a969" stroke="#8e4a12" stroke-width="0.9"/>
<polygon points="391.8,488.2 380.6,488.9 381.3,495.4 391.8,494.7" fill="#da9d59" stroke="#8e4a12" stroke-width="0.9"/>
<polygon points="383.1,510.5 374.3,512.1 374.7,514.0 383.2,512.5" fill="#d59652" stroke="#8e4a12" stroke-width="0.9"/>
<polygon points="382.0,501.5 372.2,503.2 373.4,508.3 382.6,506.7" fill="#e2ae6f" stroke="#8e4a12" stroke-width="0.9"/>
<polygon points="382.6,506.7 373.4,508.3 374.3,512.1 383.1,510.5" fill="#e2ad6e" stroke="#8e4a12" stroke-width="0.9"/>
<polygon points="381.3,495.4 370.9,497.2 372.2,503.2 382.0,501.5" fill="#dfa766" stroke="#8e4a12" stroke-width="0.9"/>
<polygon points="413.9,490.3 402.9,488.6 402.4,495.1 412.8,496.7" fill="#da9d59" stroke="#8e4a12" stroke-width="0.9"/>
<polygon points="380.6,488.9 369.7,490.8 370.9,497.2 381.3,495.4" fill="#da9c58" stroke="#8e4a12" stroke-width="0.9"/>
<polygon points="418.2,513.9 409.8,511.6 409.5,513.6 417.8,515.8" fill="#d49552" stroke="#8e4a12" stroke-width="0.9"/>
<polygon points="419.4,510.2 410.6,507.8 409.8,511.6 418.2,513.9" fill="#e2ad6e" stroke="#8e4a12" stroke-width="0.9"/>
<polygon points="421.0,505.2 411.6,502.7 410.6,507.8 419.4,510.2" fill="#e2ad6f" stroke="#8e4a12" stroke-width="0.9"/>
<polygon points="374.3,512.1 365.9,514.5 366.4,516.4 374.7,514.0" fill="#d39350" stroke="#8e4a12" stroke-width="0.9"/>
<polygon points="422.8,499.3 412.8,496.7 411.6,502.7 421.0,505.2" fill="#dfa766" stroke="#8e4a12" stroke-width="0.9"/>
<polygon points="403.3,482.2 391.7,481.8 391.8,488.2 402.9,488.6" fill="#d18f4b" stroke="#8e4a12" stroke-width="0.9"/>
<polygon points="391.7,481.8 380.2,482.5 380.6,488.9 391.8,488.2" fill="#d18f4b" stroke="#8e4a12" stroke-width="0.9"/>
<polygon points="373.4,508.3 364.7,510.8 365.9,514.5 374.3,512.1" fill="#e0aa69" stroke="#8e4a12" stroke-width="0.9"/>
<polygon points="372.2,503.2 363.0,505.9 364.7,510.8 373.4,508.3" fill="#e1aa6a" stroke="#8e4a12" stroke-width="0.9"/>
<polygon points="370.9,497.2 361.1,500.0 363.0,505.9 372.2,503.2" fill="#dea461" stroke="#8e4a12" stroke-width="0.9"/>
<polygon points="424.4,493.0 413.9,490.3 412.8,496.7 422.8,499.3" fill="#da9c58" stroke="#8e4a12" stroke-width="0.9"/>
<polygon points="414.7,483.9 403.3,482.2 402.9,488.6 413.9,490.3" fill="#d18f4b" stroke="#8e4a12" stroke-width="0.9"/>
<polygon points="380.2,482.5 368.9,484.5 369.7,490.8 380.6,488.9" fill="#d08d49" stroke="#8e4a12" stroke-width="0.9"/>
<polygon points="369.7,490.8 359.3,493.8 361.1,500.0 370.9,497.2" fill="#d89a56" stroke="#8e4a12" stroke-width="0.9"/>
<polygon points="426.2,517.0 418.2,513.9 417.8,515.8 425.6,518.8" fill="#d3934f" stroke="#8e4a12" stroke-width="0.9"/>
<polygon points="427.7,513.4 419.4,510.2 418.2,513.9 426.2,517.0" fill="#e0a969" stroke="#8e4a12" stroke-width="0.9"/>
<polygon points="429.9,508.6 421.0,505.2 419.4,510.2 427.7,513.4" fill="#e1aa6a" stroke="#8e4a12" stroke-width="0.9"/>
<polygon points="365.9,514.5 358.1,517.8 358.8,519.6 366.4,516.4" fill="#d1904c" stroke="#8e4a12" stroke-width="0.9"/>
<polygon points="432.2,503.0 422.8,499.3 421.0,505.2 429.9,508.6" fill="#dda360" stroke="#8e4a12" stroke-width="0.9"/>
<polygon points="364.7,510.8 356.5,514.3 358.1,517.8 365.9,514.5" fill="#dea563" stroke="#8e4a12" stroke-width="0.9"/>
<polygon points="425.6,486.8 414.7,483.9 413.9,490.3 424.4,493.0" fill="#d08d49" stroke="#8e4a12" stroke-width="0.9"/>
<polygon points="363.0,505.9 354.3,509.5 356.5,514.3 364.7,510.8" fill="#dfa664" stroke="#8e4a12" stroke-width="0.9"/>
<polygon points="361.1,500.0 351.8,503.9 354.3,509.5 363.0,505.9" fill="#dc9f5b" stroke="#8e4a12" stroke-width="0.9"/>
<polygon points="368.9,484.5 358.1,487.6 359.3,493.8 369.7,490.8" fill="#cf8b47" stroke="#8e4a12" stroke-width="0.9"/>
<polygon points="403.4,476.4 391.7,476.0 391.7,481.8 403.3,482.2" fill="#b57335" stroke="#8e4a12" stroke-width="0.9"/>
<polygon points="434.3,496.9 424.4,493.0 422.8,499.3 432.2,503.0" fill="#d89a56" stroke="#8e4a12" stroke-width="0.9"/>
<polygon points="391.7,476.0 380.0,476.7 380.2,482.5 391.7,481.8" fill="#b57335" stroke="#8e4a12" stroke-width="0.9"/>
<polygon points="359.3,493.8 349.6,497.9 351.8,503.9 361.1,500.0" fill="#d79854" stroke="#8e4a12" stroke-width="0.9"/>
<polygon points="415.0,478.2 403.4,476.4 403.3,482.2 414.7,483.9" fill="#b47335" stroke="#8e4a12" stroke-width="0.9"/>
<polygon points="433.5,520.9 426.2,517.0 425.6,518.8 432.7,522.7" fill="#d08f4c" stroke="#8e4a12" stroke-width="0.9"/>
<polygon points="380.0,476.7 368.5,478.7 368.9,484.5 380.2,482.5" fill="#b37134" stroke="#8e4a12" stroke-width="0.9"/>
<polygon points="435.3,517.5 427.7,513.4 426.2,517.0 433.5,520.9" fill="#dea462" stroke="#8e4a12" stroke-width="0.9"/>
<polygon points="437.9,513.0 429.9,508.6 427.7,513.4 435.3,517.5" fill="#dea563" stroke="#8e4a12" stroke-width="0.9"/>
<polygon points="358.1,517.8 351.0,521.9 351.8,523.6 358.8,519.6" fill="#ce8c49" stroke="#8e4a12" stroke-width="0.9"/>
<polygon points="435.8,490.8 425.6,486.8 424.4,493.0 434.3,496.9" fill="#cf8b47" stroke="#8e4a12" stroke-width="0.9"/>
<polygon points="449.5,495.3 439.4,487.5 447.3,475.7 456.9,482.4" fill="#e2ac6d" stroke="#8e4a12" stroke-width="0.9"/>
<polygon points="356.5,514.3 349.1,518.5 351.0,521.9 358.1,517.8" fill="#dc9f5b" stroke="#8e4a12" stroke-width="0.9"/>
<polygon points="439.4,487.5 433.5,480.5 441.2,470.2 447.3,475.7" fill="#d59551" stroke="#8e4a12" stroke-width="0.9"/>
<polygon points="440.8,507.6 432.2,503.0 429.9,508.6 437.9,513.0" fill="#db9f5b" stroke="#8e4a12" stroke-width="0.9"/>
<polygon points="354.3,509.5 346.4,514.0 349.1,518.5 356.5,514.3" fill="#dca05c" stroke="#8e4a12" stroke-width="0.9"/>
<polygon points="426.0,481.1 415.0,478.2 414.7,483.9 425.6,486.8" fill="#b27134" stroke="#8e4a12" stroke-width="0.9"/>
<polygon points="358.1,487.6 348.0,491.9 349.6,497.9 359.3,493.8" fill="#cd8844" stroke="#8e4a12" stroke-width="0.9"/>
<polygon points="351.8,503.9 343.5,508.7 346.4,514.0 354.3,509.5" fill="#da9c58" stroke="#8e4a12" stroke-width="0.9"/>
<polygon points="368.5,478.7 357.6,481.9 358.1,487.6 368.9,484.5" fill="#b06e32" stroke="#8e4a12" stroke-width="0.9"/>
<polygon points="443.3,501.8 434.3,496.9 432.2,503.0 440.8,507.6" fill="#d79753" stroke="#8e4a12" stroke-width="0.9"/>
<polygon points="438.0,509.7 428.0,501.1 439.4,487.5 449.5,495.3" fill="#e8ba80" stroke="#8e4a12" stroke-width="0.9"/>
<polygon points="428.0,501.1 423.0,492.4 433.5,480.5 439.4,487.5" fill="#d69652" stroke="#8e4a12" stroke-width="0.9"/>
<polygon points="349.6,497.9 340.8,503.0 343.5,508.7 351.8,503.9" fill="#d59450" stroke="#8e4a12" stroke-width="0.9"/>
<polygon points="439.9,525.5 433.5,520.9 432.7,522.7 439.1,527.2" fill="#cd8b48" stroke="#8e4a12" stroke-width="0.9"/>
<polygon points="456.9,482.4 447.3,475.7 452.6,465.4 461.4,471.0" fill="#d49450" stroke="#8e4a12" stroke-width="0.9"/>
<polygon points="447.3,475.7 441.2,470.2 446.8,461.5 452.6,465.4" fill="#cd8844" stroke="#8e4a12" stroke-width="0.9"/>
<polygon points="403.4,471.5 391.7,471.0 391.7,476.0 403.4,476.4" fill="#955722" stroke="#8e4a12" stroke-width="0.9"/>
<polygon points="442.1,522.4 435.3,517.5 433.5,520.9 439.9,525.5" fill="#db9f5b" stroke="#8e4a12" stroke-width="0.9"/>
<polygon points="391.7,471.0 380.1,471.7 380.0,476.7 391.7,476.0" fill="#945721" stroke="#8e4a12" stroke-width="0.9"/>
<polygon points="351.0,521.9 344.8,526.7 345.7,528.3 351.8,523.6" fill="#ca8744" stroke="#8e4a12" stroke-width="0.9"/>
<polygon points="445.1,518.1 437.9,513.0 435.3,517.5 442.1,522.4" fill="#dca05c" stroke="#8e4a12" stroke-width="0.9"/>
<polygon points="436.4,485.2 426.0,481.1 425.6,486.8 435.8,490.8" fill="#af6e32" stroke="#8e4a12" stroke-width="0.9"/>
<polygon points="445.2,495.9 435.8,490.8 434.3,496.9 443.3,501.8" fill="#cd8844" stroke="#8e4a12" stroke-width="0.9"/>
<polygon points="414.8,473.2 403.4,471.5 403.4,476.4 415.0,478.2" fill="#945721" stroke="#8e4a12" stroke-width="0.9"/>
<polygon points="349.1,518.5 342.5,523.6 344.8,526.7 351.0,521.9" fill="#da9c58" stroke="#8e4a12" stroke-width="0.9"/>
<polygon points="380.1,471.7 368.7,473.7 368.5,478.7 380.0,476.7" fill="#915521" stroke="#8e4a12" stroke-width="0.9"/>
<polygon points="448.4,513.1 440.8,507.6 437.9,513.0 445.1,518.1" fill="#da9c58" stroke="#8e4a12" stroke-width="0.9"/>
<polygon points="357.6,481.9 347.4,486.2 348.0,491.9 358.1,487.6" fill="#ab6b2f" stroke="#8e4a12" stroke-width="0.9"/>
<polygon points="346.4,514.0 339.4,519.4 342.5,523.6 349.1,518.5" fill="#da9d59" stroke="#8e4a12" stroke-width="0.9"/>
<polygon points="348.0,491.9 338.8,497.1 340.8,503.0 349.6,497.9" fill="#c88441" stroke="#8e4a12" stroke-width="0.9"/>
<polygon points="458.8,499.7 449.5,495.3 456.9,482.4 465.3,486.9" fill="#d79955" stroke="#8e4a12" stroke-width="0.9"/>
<polygon points="433.5,480.5 432.4,475.7 439.4,467.1 441.2,470.2" fill="#7e481b" stroke="#8e4a12" stroke-width="0.9"/>
<polygon points="343.5,508.7 336.1,514.4 339.4,519.4 346.4,514.0" fill="#d89955" stroke="#8e4a12" stroke-width="0.9"/>
<polygon points="451.4,507.5 443.3,501.8 440.8,507.6 448.4,513.1" fill="#d49450" stroke="#8e4a12" stroke-width="0.9"/>
<polygon points="425.8,476.1 414.8,473.2 415.0,478.2 426.0,481.1" fill="#905420" stroke="#8e4a12" stroke-width="0.9"/>
<polygon points="368.7,473.7 357.8,476.9 357.6,481.9 368.5,478.7" fill="#8b511f" stroke="#8e4a12" stroke-width="0.9"/>
<polygon points="448.0,513.6 438.0,509.7 449.5,495.3 458.8,499.7" fill="#da9d59" stroke="#8e4a12" stroke-width="0.9"/>
<polygon points="445.4,530.8 439.9,525.5 439.1,527.2 444.5,532.4" fill="#c98542" stroke="#8e4a12" stroke-width="0.9"/>
<polygon points="423.0,492.4 423.0,485.6 432.4,475.7 433.5,480.5" fill="#7d481b" stroke="#8e4a12" stroke-width="0.9"/>
<polygon points="340.8,503.0 333.0,508.9 336.1,514.4 343.5,508.7" fill="#d2904c" stroke="#8e4a12" stroke-width="0.9"/>
<polygon points="441.2,470.2 439.4,467.1 444.6,459.7 446.8,461.5" fill="#784318" stroke="#8e4a12" stroke-width="0.9"/>
<polygon points="465.3,486.9 456.9,482.4 461.4,471.0 468.7,475.4" fill="#cd8844" stroke="#8e4a12" stroke-width="0.9"/>
<polygon points="447.9,527.9 442.1,522.4 439.9,525.5 445.4,530.8" fill="#d99c58" stroke="#8e4a12" stroke-width="0.9"/>
<polygon points="446.0,490.3 436.4,485.2 435.8,490.8 445.2,495.9" fill="#ab6a2f" stroke="#8e4a12" stroke-width="0.9"/>
<polygon points="344.8,526.7 339.5,532.1 340.5,533.7 345.7,528.3" fill="#c6813e" stroke="#8e4a12" stroke-width="0.9"/>
<polygon points="451.2,524.0 445.1,518.1 442.1,522.4 447.9,527.9" fill="#da9c58" stroke="#8e4a12" stroke-width="0.9"/>
<polygon points="452.6,465.4 446.8,461.5 451.0,453.6 456.5,456.2" fill="#b97738" stroke="#8e4a12" stroke-width="0.9"/>
<polygon points="461.4,471.0 452.6,465.4 456.5,456.2 464.2,460.6" fill="#c5813f" stroke="#8e4a12" stroke-width="0.9"/>
<polygon points="453.6,501.9 445.2,495.9 443.3,501.8 451.4,507.5" fill="#c88341" stroke="#8e4a12" stroke-width="0.9"/>
<polygon points="342.5,523.6 337.0,529.2 339.5,532.1 344.8,526.7" fill="#d79955" stroke="#8e4a12" stroke-width="0.9"/>
<polygon points="347.4,486.2 338.1,491.6 338.8,497.1 348.0,491.9" fill="#a6662c" stroke="#8e4a12" stroke-width="0.9"/>
<polygon points="436.1,480.1 425.8,476.1 426.0,481.1 436.4,485.2" fill="#8b511f" stroke="#8e4a12" stroke-width="0.9"/>
<polygon points="454.9,519.3 448.4,513.1 445.1,518.1 451.2,524.0" fill="#d79854" stroke="#8e4a12" stroke-width="0.9"/>
<polygon points="339.4,519.4 333.6,525.4 337.0,529.2 342.5,523.6" fill="#d89955" stroke="#8e4a12" stroke-width="0.9"/>
<polygon points="338.8,497.1 330.8,503.3 333.0,508.9 340.8,503.0" fill="#c27f3d" stroke="#8e4a12" stroke-width="0.9"/>
<polygon points="403.1,467.0 391.7,466.6 391.7,471.0 403.4,471.5" fill="#754319" stroke="#8e4a12" stroke-width="0.9"/>
<polygon points="357.8,476.9 347.7,481.1 347.4,486.2 357.6,481.9" fill="#844c1d" stroke="#8e4a12" stroke-width="0.9"/>
<polygon points="391.7,466.6 380.3,467.3 380.1,471.7 391.7,471.0" fill="#744319" stroke="#8e4a12" stroke-width="0.9"/>
<polygon points="336.1,514.4 329.9,520.8 333.6,525.4 339.4,519.4" fill="#d59551" stroke="#8e4a12" stroke-width="0.9"/>
<polygon points="414.3,468.7 403.1,467.0 403.4,471.5 414.8,473.2" fill="#744319" stroke="#8e4a12" stroke-width="0.9"/>
<polygon points="380.3,467.3 369.2,469.2 368.7,473.7 380.1,471.7" fill="#714118" stroke="#8e4a12" stroke-width="0.9"/>
<polygon points="458.2,514.1 451.4,507.5 448.4,513.1 454.9,519.3" fill="#d2904c" stroke="#8e4a12" stroke-width="0.9"/>
<polygon points="449.8,536.6 445.4,530.8 444.5,532.4 448.8,538.1" fill="#c37e3d" stroke="#8e4a12" stroke-width="0.9"/>
<polygon points="446.8,461.5 444.6,459.7 448.7,453.1 451.0,453.6" fill="#703d14" stroke="#8e4a12" stroke-width="0.9"/>
<polygon points="468.7,475.4 461.4,471.0 464.2,460.6 470.2,464.8" fill="#b77536" stroke="#8e4a12" stroke-width="0.9"/>
<polygon points="333.0,508.9 326.5,515.7 329.9,520.8 336.1,514.4" fill="#cf8c48" stroke="#8e4a12" stroke-width="0.9"/>
<polygon points="454.4,496.4 446.0,490.3 445.2,495.9 453.6,501.9" fill="#a5652b" stroke="#8e4a12" stroke-width="0.9"/>
<polygon points="452.5,534.0 447.9,527.9 445.4,530.8 449.8,536.6" fill="#d79854" stroke="#8e4a12" stroke-width="0.9"/>
<polygon points="425.1,471.6 414.3,468.7 414.8,473.2 425.8,476.1" fill="#714018" stroke="#8e4a12" stroke-width="0.9"/>
<polygon points="339.5,532.1 335.3,538.0 336.4,539.5 340.5,533.7" fill="#bd7939" stroke="#8e4a12" stroke-width="0.9"/>
<polygon points="432.4,475.7 436.2,474.7 442.3,467.3 439.4,467.1" fill="#9e5d24" stroke="#8e4a12" stroke-width="0.9"/>
<polygon points="462.7,498.7 458.8,499.7 465.3,486.9 468.3,487.1" fill="#a36229" stroke="#8e4a12" stroke-width="0.9"/>
<polygon points="445.6,485.2 436.1,480.1 436.4,485.2 446.0,490.3" fill="#834c1d" stroke="#8e4a12" stroke-width="0.9"/>
<polygon points="369.2,469.2 358.6,472.3 357.8,476.9 368.7,473.7" fill="#6c3d16" stroke="#8e4a12" stroke-width="0.9"/>
<polygon points="456.1,530.4 451.2,524.0 447.9,527.9 452.5,534.0" fill="#d79955" stroke="#8e4a12" stroke-width="0.9"/>
<polygon points="337.0,529.2 332.6,535.4 335.3,538.0 339.5,532.1" fill="#d59551" stroke="#8e4a12" stroke-width="0.9"/>
<polygon points="338.1,491.6 329.9,497.8 330.8,503.3 338.8,497.1" fill="#9f6028" stroke="#8e4a12" stroke-width="0.9"/>
<polygon points="460.7,508.7 453.6,501.9 451.4,507.5 458.2,514.1" fill="#c27e3d" stroke="#8e4a12" stroke-width="0.9"/>
<polygon points="347.7,481.1 338.5,486.4 338.1,491.6 347.4,486.2" fill="#7a461a" stroke="#8e4a12" stroke-width="0.9"/>
<polygon points="439.4,467.1 442.3,467.3 446.8,460.8 444.6,459.7" fill="#9f5e25" stroke="#8e4a12" stroke-width="0.9"/>
<polygon points="468.3,487.1 465.3,486.9 468.7,475.4 470.9,476.5" fill="#985922" stroke="#8e4a12" stroke-width="0.9"/>
<polygon points="333.6,525.4 329.0,531.9 332.6,535.4 337.0,529.2" fill="#d59551" stroke="#8e4a12" stroke-width="0.9"/>
<polygon points="460.1,526.2 454.9,519.3 451.2,524.0 456.1,530.4" fill="#d59450" stroke="#8e4a12" stroke-width="0.9"/>
<polygon points="423.0,485.6 428.0,483.1 436.2,474.7 432.4,475.7" fill="#96551d" stroke="#8e4a12" stroke-width="0.9"/>
<polygon points="456.5,456.2 451.0,453.6 454.7,446.1 459.6,447.3" fill="#af6d31" stroke="#8e4a12" stroke-width="0.9"/>
<polygon points="453.0,511.1 448.0,513.6 458.8,499.7 462.7,498.7" fill="#9d5c23" stroke="#8e4a12" stroke-width="0.9"/>
<polygon points="464.2,460.6 456.5,456.2 459.6,447.3 466.3,450.7" fill="#bb7939" stroke="#8e4a12" stroke-width="0.9"/>
<polygon points="330.8,503.3 324.0,510.3 326.5,515.7 333.0,508.9" fill="#bc7939" stroke="#8e4a12" stroke-width="0.9"/>
<polygon points="435.2,475.5 425.1,471.6 425.8,476.1 436.1,480.1" fill="#6b3d16" stroke="#8e4a12" stroke-width="0.9"/>
<polygon points="329.9,520.8 324.9,527.7 329.0,531.9 333.6,525.4" fill="#d2914d" stroke="#8e4a12" stroke-width="0.9"/>
<polygon points="358.6,472.3 348.6,476.5 347.7,481.1 357.8,476.9" fill="#643914" stroke="#8e4a12" stroke-width="0.9"/>
<polygon points="453.1,542.8 449.8,536.6 448.8,538.1 452.0,544.2" fill="#ba7637" stroke="#8e4a12" stroke-width="0.9"/>
<polygon points="463.7,521.3 458.2,514.1 454.9,519.3 460.1,526.2" fill="#cf8b47" stroke="#8e4a12" stroke-width="0.9"/>
<polygon points="402.8,463.1 391.8,462.6 391.7,466.6 403.1,467.0" fill="#5d3412" stroke="#8e4a12" stroke-width="0.9"/>
<polygon points="391.8,462.6 380.7,463.4 380.3,467.3 391.7,466.6" fill="#5c3312" stroke="#8e4a12" stroke-width="0.9"/>
<polygon points="444.6,459.7 446.8,460.8 450.2,454.8 448.7,453.1" fill="#995820" stroke="#8e4a12" stroke-width="0.9"/>
<polygon points="455.9,540.5 452.5,534.0 449.8,536.6 453.1,542.8" fill="#d59450" stroke="#8e4a12" stroke-width="0.9"/>
<polygon points="454.0,491.2 445.6,485.2 446.0,490.3 454.4,496.4" fill="#79461a" stroke="#8e4a12" stroke-width="0.9"/>
<polygon points="451.0,453.6 448.7,453.1 452.1,446.8 454.7,446.1" fill="#6f3c11" stroke="#8e4a12" stroke-width="0.9"/>
<polygon points="335.3,538.0 332.3,544.3 333.4,545.6 336.4,539.5" fill="#b57133" stroke="#8e4a12" stroke-width="0.9"/>
<polygon points="461.6,503.3 454.4,496.4 453.6,501.9 460.7,508.7" fill="#9f6027" stroke="#8e4a12" stroke-width="0.9"/>
<polygon points="413.7,464.7 402.8,463.1 403.1,467.0 414.3,468.7" fill="#5c3312" stroke="#8e4a12" stroke-width="0.9"/>
<polygon points="326.5,515.7 321.3,523.0 324.9,527.7 329.9,520.8" fill="#cb8743" stroke="#8e4a12" stroke-width="0.9"/>
<polygon points="470.9,476.5 468.7,475.4 470.2,464.8 471.7,466.5" fill="#864a18" stroke="#8e4a12" stroke-width="0.9"/>
<polygon points="380.7,463.4 370.0,465.2 369.2,469.2 380.3,467.3" fill="#593111" stroke="#8e4a12" stroke-width="0.9"/>
<polygon points="470.2,464.8 464.2,460.6 466.3,450.7 471.2,454.5" fill="#ad6c30" stroke="#8e4a12" stroke-width="0.9"/>
<polygon points="332.6,535.4 329.5,542.0 332.3,544.3 335.3,538.0" fill="#d2904c" stroke="#8e4a12" stroke-width="0.9"/>
<polygon points="338.5,486.4 330.3,492.7 329.9,497.8 338.1,491.6" fill="#6f3f17" stroke="#8e4a12" stroke-width="0.9"/>
<polygon points="459.8,537.3 456.1,530.4 452.5,534.0 455.9,540.5" fill="#d59551" stroke="#8e4a12" stroke-width="0.9"/>
<polygon points="329.9,497.8 323.0,504.9 324.0,510.3 330.8,503.3" fill="#985a23" stroke="#8e4a12" stroke-width="0.9"/>
<polygon points="444.5,480.5 435.2,475.5 436.1,480.1 445.6,485.2" fill="#633814" stroke="#8e4a12" stroke-width="0.9"/>
<polygon points="466.4,516.2 460.7,508.7 458.2,514.1 463.7,521.3" fill="#bb7839" stroke="#8e4a12" stroke-width="0.9"/>
<polygon points="424.1,467.5 413.7,464.7 414.3,468.7 425.1,471.6" fill="#583111" stroke="#8e4a12" stroke-width="0.9"/>
<polygon points="329.0,531.9 325.6,538.9 329.5,542.0 332.6,535.4" fill="#d2914d" stroke="#8e4a12" stroke-width="0.9"/>
<polygon points="461.6,493.9 462.7,498.7 468.3,487.1 466.5,484.0" fill="#7c4619" stroke="#8e4a12" stroke-width="0.9"/>
<polygon points="348.6,476.5 339.6,481.7 338.5,486.4 347.7,481.1" fill="#5b3312" stroke="#8e4a12" stroke-width="0.9"/>
<polygon points="436.2,474.7 445.6,479.1 450.7,471.8 442.3,467.3" fill="#da9d59" stroke="#8e4a12" stroke-width="0.9"/>
<polygon points="370.0,465.2 359.7,468.2 358.6,472.3 369.2,469.2" fill="#542e10" stroke="#8e4a12" stroke-width="0.9"/>
<polygon points="463.9,533.5 460.1,526.2 456.1,530.4 459.8,537.3" fill="#d2904c" stroke="#8e4a12" stroke-width="0.9"/>
<polygon points="442.3,467.3 450.7,471.8 454.1,465.1 446.8,460.8" fill="#d49450" stroke="#8e4a12" stroke-width="0.9"/>
<polygon points="466.5,484.0 468.3,487.1 470.9,476.5 468.7,474.7" fill="#844a19" stroke="#8e4a12" stroke-width="0.9"/>
<polygon points="324.0,510.3 318.6,517.9 321.3,523.0 326.5,515.7" fill="#b47235" stroke="#8e4a12" stroke-width="0.9"/>
<polygon points="459.6,447.3 454.7,446.1 458.4,438.4 463.2,438.3" fill="#b06f32" stroke="#8e4a12" stroke-width="0.9"/>
<polygon points="466.3,450.7 459.6,447.3 463.2,438.3 468.9,440.5" fill="#c4813f" stroke="#8e4a12" stroke-width="0.9"/>
<polygon points="455.2,549.3 453.1,542.8 452.0,544.2 454.0,550.6" fill="#b16e30" stroke="#8e4a12" stroke-width="0.9"/>
<polygon points="324.9,527.7 321.4,535.2 325.6,538.9 329.0,531.9" fill="#cf8c48" stroke="#8e4a12" stroke-width="0.9"/>
<polygon points="448.7,453.1 450.2,454.8 452.9,449.2 452.1,446.8" fill="#925119" stroke="#8e4a12" stroke-width="0.9"/>
<polygon points="453.0,504.3 453.0,511.1 462.7,498.7 461.6,493.9" fill="#79461a" stroke="#8e4a12" stroke-width="0.9"/>
<polygon points="433.9,471.3 424.1,467.5 425.1,471.6 435.2,475.5" fill="#532e10" stroke="#8e4a12" stroke-width="0.9"/>
<polygon points="428.0,483.1 438.0,487.0 445.6,479.1 436.2,474.7" fill="#d99b57" stroke="#8e4a12" stroke-width="0.9"/>
<polygon points="467.8,529.1 463.7,521.3 460.1,526.2 463.9,533.5" fill="#cb8643" stroke="#8e4a12" stroke-width="0.9"/>
<polygon points="458.1,547.3 455.9,540.5 453.1,542.8 455.2,549.3" fill="#d2904c" stroke="#8e4a12" stroke-width="0.9"/>
<polygon points="332.3,544.3 330.6,550.8 331.7,552.1 333.4,545.6" fill="#ab682c" stroke="#8e4a12" stroke-width="0.9"/>
<polygon points="461.1,498.1 454.0,491.2 454.4,496.4 461.6,503.3" fill="#6e3f17" stroke="#8e4a12" stroke-width="0.9"/>
<polygon points="471.7,466.5 470.2,464.8 471.2,454.5 471.9,456.9" fill="#8e4a12" stroke="#8e4a12" stroke-width="0.9"/>
<polygon points="446.8,460.8 454.1,465.1 456.2,459.0 450.2,454.8" fill="#c68240" stroke="#8e4a12" stroke-width="0.9"/>
<polygon points="359.7,468.2 350.1,472.3 348.6,476.5 358.6,472.3" fill="#4c290e" stroke="#8e4a12" stroke-width="0.9"/>
<polygon points="454.7,446.1 452.1,446.8 455.5,440.3 458.4,438.4" fill="#784011" stroke="#8e4a12" stroke-width="0.9"/>
<polygon points="468.7,474.7 470.9,476.5 471.7,466.5 469.4,466.0" fill="#8d501b" stroke="#8e4a12" stroke-width="0.9"/>
<polygon points="467.4,510.9 461.6,503.3 460.7,508.7 466.4,516.2" fill="#975923" stroke="#8e4a12" stroke-width="0.9"/>
<polygon points="452.7,486.4 444.5,480.5 445.6,485.2 454.0,491.2" fill="#5a3212" stroke="#8e4a12" stroke-width="0.9"/>
<polygon points="329.5,542.0 327.6,548.8 330.6,550.8 332.3,544.3" fill="#cf8c48" stroke="#8e4a12" stroke-width="0.9"/>
<polygon points="321.3,523.0 317.5,530.8 321.4,535.2 324.9,527.7" fill="#c5813f" stroke="#8e4a12" stroke-width="0.9"/>
<polygon points="330.3,492.7 323.5,499.7 323.0,504.9 329.9,497.8" fill="#623714" stroke="#8e4a12" stroke-width="0.9"/>
<polygon points="471.2,454.5 466.3,450.7 468.9,440.5 472.7,444.2" fill="#b37134" stroke="#8e4a12" stroke-width="0.9"/>
<polygon points="462.0,544.6 459.8,537.3 455.9,540.5 458.1,547.3" fill="#d2904c" stroke="#8e4a12" stroke-width="0.9"/>
<polygon points="455.7,486.8 461.6,493.9 466.5,484.0 460.4,478.5" fill="#d79854" stroke="#8e4a12" stroke-width="0.9"/>
<polygon points="402.4,459.6 391.8,459.1 391.8,462.6 402.8,463.1" fill="#4b290e" stroke="#8e4a12" stroke-width="0.9"/>
<polygon points="339.6,481.7 331.6,487.8 330.3,492.7 338.5,486.4" fill="#502c0f" stroke="#8e4a12" stroke-width="0.9"/>
<polygon points="460.4,478.5 466.5,484.0 468.7,474.7 462.9,470.8" fill="#d69652" stroke="#8e4a12" stroke-width="0.9"/>
<polygon points="391.8,459.1 381.3,459.8 380.7,463.4 391.8,462.6" fill="#4a280d" stroke="#8e4a12" stroke-width="0.9"/>
<polygon points="445.6,479.1 455.7,486.8 460.4,478.5 450.7,471.8" fill="#e7b87d" stroke="#8e4a12" stroke-width="0.9"/>
<polygon points="450.7,471.8 460.4,478.5 462.9,470.8 454.1,465.1" fill="#dca05c" stroke="#8e4a12" stroke-width="0.9"/>
<polygon points="323.0,504.9 317.5,512.6 318.6,517.9 324.0,510.3" fill="#8c511f" stroke="#8e4a12" stroke-width="0.9"/>
<polygon points="412.8,461.1 402.4,459.6 402.8,463.1 413.7,464.7" fill="#4a280d" stroke="#8e4a12" stroke-width="0.9"/>
<polygon points="325.6,538.9 323.7,546.2 327.6,548.8 329.5,542.0" fill="#d08c48" stroke="#8e4a12" stroke-width="0.9"/>
<polygon points="470.6,524.2 466.4,516.2 463.7,521.3 467.8,529.1" fill="#b47234" stroke="#8e4a12" stroke-width="0.9"/>
<polygon points="381.3,459.8 371.0,461.6 370.0,465.2 380.7,463.4" fill="#47260c" stroke="#8e4a12" stroke-width="0.9"/>
<polygon points="442.8,476.1 433.9,471.3 435.2,475.5 444.5,480.5" fill="#4b290e" stroke="#8e4a12" stroke-width="0.9"/>
<polygon points="466.4,541.2 463.9,533.5 459.8,537.3 462.0,544.6" fill="#cf8b47" stroke="#8e4a12" stroke-width="0.9"/>
<polygon points="463.2,438.3 458.4,438.4 463.0,429.8 468.0,428.2" fill="#bb7839" stroke="#8e4a12" stroke-width="0.9"/>
<polygon points="468.9,440.5 463.2,438.3 468.0,428.2 473.3,429.6" fill="#d4934f" stroke="#8e4a12" stroke-width="0.9"/>
<polygon points="450.2,454.8 456.2,459.0 457.8,453.0 452.9,449.2" fill="#b77536" stroke="#8e4a12" stroke-width="0.9"/>
<polygon points="452.1,446.8 452.9,449.2 455.5,443.4 455.5,440.3" fill="#8e4b14" stroke="#8e4a12" stroke-width="0.9"/>
<polygon points="462.9,470.8 468.7,474.7 469.4,466.0 463.9,463.4" fill="#d18f4b" stroke="#8e4a12" stroke-width="0.9"/>
<polygon points="454.1,465.1 462.9,470.8 463.9,463.4 456.2,459.0" fill="#d18e4a" stroke="#8e4a12" stroke-width="0.9"/>
<polygon points="350.1,472.3 341.3,477.3 339.6,481.7 348.6,476.5" fill="#43240b" stroke="#8e4a12" stroke-width="0.9"/>
<polygon points="455.9,556.0 455.2,549.3 454.0,550.6 454.8,557.1" fill="#a76428" stroke="#8e4a12" stroke-width="0.9"/>
<polygon points="318.6,517.9 314.7,526.0 317.5,530.8 321.3,523.0" fill="#ac6c30" stroke="#8e4a12" stroke-width="0.9"/>
<polygon points="469.4,466.0 471.7,466.5 471.9,456.9 469.4,457.6" fill="#95561e" stroke="#8e4a12" stroke-width="0.9"/>
<polygon points="422.8,463.7 412.8,461.1 413.7,464.7 424.1,467.5" fill="#47260c" stroke="#8e4a12" stroke-width="0.9"/>
<polygon points="448.0,495.6 453.0,504.3 461.6,493.9 455.7,486.8" fill="#d49450" stroke="#8e4a12" stroke-width="0.9"/>
<polygon points="438.0,487.0 448.0,495.6 455.7,486.8 445.6,479.1" fill="#e6b67a" stroke="#8e4a12" stroke-width="0.9"/>
<polygon points="321.4,535.2 319.3,542.9 323.7,546.2 325.6,538.9" fill="#cc8743" stroke="#8e4a12" stroke-width="0.9"/>
<polygon points="371.0,461.6 361.1,464.5 359.7,468.2 370.0,465.2" fill="#42230b" stroke="#8e4a12" stroke-width="0.9"/>
<polygon points="471.9,456.9 471.2,454.5 472.7,444.2 472.7,447.3" fill="#8e4a12" stroke="#8e4a12" stroke-width="0.9"/>
<polygon points="458.4,438.4 455.5,440.3 459.4,433.1 463.0,429.8" fill="#874712" stroke="#8e4a12" stroke-width="0.9"/>
<polygon points="330.6,550.8 330.1,557.5 331.2,558.6 331.7,552.1" fill="#a25f24" stroke="#8e4a12" stroke-width="0.9"/>
<polygon points="458.9,554.3 458.1,547.3 455.2,549.3 455.9,556.0" fill="#cf8b47" stroke="#8e4a12" stroke-width="0.9"/>
<polygon points="466.9,505.6 461.1,498.1 461.6,503.3 467.4,510.9" fill="#613613" stroke="#8e4a12" stroke-width="0.9"/>
<polygon points="472.7,444.2 468.9,440.5 473.3,429.6 476.1,433.3" fill="#c88341" stroke="#8e4a12" stroke-width="0.9"/>
<polygon points="459.7,493.1 452.7,486.4 454.0,491.2 461.1,498.1" fill="#4f2b0e" stroke="#8e4a12" stroke-width="0.9"/>
<polygon points="470.3,537.2 467.8,529.1 463.9,533.5 466.4,541.2" fill="#c4803e" stroke="#8e4a12" stroke-width="0.9"/>
<polygon points="468.0,428.2 463.0,429.8 469.1,419.5 475.0,416.5" fill="#ca8744" stroke="#8e4a12" stroke-width="0.9"/>
<polygon points="473.3,429.6 468.0,428.2 475.0,416.5 480.4,417.1" fill="#e1ab6b" stroke="#8e4a12" stroke-width="0.9"/>
<polygon points="483.4,412.8 478.1,412.2 478.9,411.5 483.9,412.0" fill="#8e4a12" stroke="#8e4a12" stroke-width="0.9"/>
<polygon points="482.3,414.5 476.8,413.8 478.1,412.2 483.4,412.8" fill="#ab6e35" stroke="#8e4a12" stroke-width="0.9"/>
<polygon points="327.6,548.8 327.1,555.8 330.1,557.5 330.6,550.8" fill="#cc8743" stroke="#8e4a12" stroke-width="0.9"/>
<polygon points="480.4,417.1 475.0,416.5 476.8,413.8 482.3,414.5" fill="#ca9359" stroke="#8e4a12" stroke-width="0.9"/>
<polygon points="483.9,412.0 478.9,411.5 479.1,411.6 483.8,411.9" fill="#8e4a12" stroke="#8e4a12" stroke-width="0.9"/>
<polygon points="475.0,416.5 469.1,419.5 470.8,417.1 476.8,413.8" fill="#8e4a12" stroke="#8e4a12" stroke-width="0.9"/>
<polygon points="476.8,413.8 470.8,417.1 472.1,415.5 478.1,412.2" fill="#8e4a12" stroke="#8e4a12" stroke-width="0.9"/>
<polygon points="456.2,459.0 463.9,463.4 464.4,456.4 457.8,453.0" fill="#c68240" stroke="#8e4a12" stroke-width="0.9"/>
<polygon points="432.1,467.4 422.8,463.7 424.1,467.5 433.9,471.3" fill="#41230b" stroke="#8e4a12" stroke-width="0.9"/>
<polygon points="478.1,412.2 472.1,415.5 473.1,414.7 478.9,411.5" fill="#8e4a12" stroke="#8e4a12" stroke-width="0.9"/>
<polygon points="471.7,519.0 467.4,510.9 466.4,516.2 470.6,524.2" fill="#8a501f" stroke="#8e4a12" stroke-width="0.9"/>
<polygon points="463.9,463.4 469.4,466.0 469.4,457.6 464.4,456.4" fill="#cd8945" stroke="#8e4a12" stroke-width="0.9"/>
<polygon points="483.8,411.9 479.1,411.6 478.8,412.4 483.1,412.6" fill="#8e4a12" stroke="#8e4a12" stroke-width="0.9"/>
<polygon points="331.6,487.8 324.9,494.7 323.5,499.7 330.3,492.7" fill="#46250b" stroke="#8e4a12" stroke-width="0.9"/>
<polygon points="462.9,551.9 462.0,544.6 458.1,547.3 458.9,554.3" fill="#cf8c48" stroke="#8e4a12" stroke-width="0.9"/>
<polygon points="323.5,499.7 318.1,507.4 317.5,512.6 323.0,504.9" fill="#552e10" stroke="#8e4a12" stroke-width="0.9"/>
<polygon points="478.9,411.5 473.1,414.7 473.6,414.7 479.1,411.6" fill="#8e4a12" stroke="#8e4a12" stroke-width="0.9"/>
<polygon points="450.8,481.8 442.8,476.1 444.5,480.5 452.7,486.4" fill="#42230b" stroke="#8e4a12" stroke-width="0.9"/>
<polygon points="317.5,530.8 315.3,539.0 319.3,542.9 321.4,535.2" fill="#bd7a3a" stroke="#8e4a12" stroke-width="0.9"/>
<polygon points="483.1,412.6 478.8,412.4 477.9,413.9 481.8,414.1" fill="#99581f" stroke="#8e4a12" stroke-width="0.9"/>
<polygon points="479.1,411.6 473.6,414.7 473.7,415.4 478.8,412.4" fill="#8e4a12" stroke="#8e4a12" stroke-width="0.9"/>
<polygon points="361.1,464.5 351.9,468.4 350.1,472.3 359.7,468.2" fill="#3b1e09" stroke="#8e4a12" stroke-width="0.9"/>
<polygon points="452.9,449.2 457.8,453.0 459.2,447.0 455.5,443.4" fill="#b47234" stroke="#8e4a12" stroke-width="0.9"/>
<polygon points="463.0,429.8 459.4,433.1 464.4,424.5 469.1,419.5" fill="#8e4a12" stroke="#8e4a12" stroke-width="0.9"/>
<polygon points="478.8,412.4 473.7,415.4 473.3,416.9 477.9,413.9" fill="#8e4a12" stroke="#8e4a12" stroke-width="0.9"/>
<polygon points="455.5,440.3 455.5,443.4 458.5,437.1 459.4,433.1" fill="#8e4a12" stroke="#8e4a12" stroke-width="0.9"/>
<polygon points="481.8,414.1 477.9,413.9 476.4,416.4 480.0,416.5" fill="#b57b42" stroke="#8e4a12" stroke-width="0.9"/>
<polygon points="485.2,416.7 483.4,412.8 483.9,412.0 485.5,415.6" fill="#8e4a12" stroke="#8e4a12" stroke-width="0.9"/>
<polygon points="476.1,433.3 473.3,429.6 480.4,417.1 482.5,421.2" fill="#d69753" stroke="#8e4a12" stroke-width="0.9"/>
<polygon points="485.5,415.6 483.9,412.0 483.8,411.9 485.2,415.3" fill="#8e4a12" stroke="#8e4a12" stroke-width="0.9"/>
<polygon points="484.2,418.4 482.3,414.5 483.4,412.8 485.2,416.7" fill="#9e5b21" stroke="#8e4a12" stroke-width="0.9"/>
<polygon points="477.9,413.9 473.3,416.9 472.2,419.0 476.4,416.4" fill="#8e4a12" stroke="#8e4a12" stroke-width="0.9"/>
<polygon points="469.4,457.6 471.9,456.9 472.7,447.3 469.8,449.2" fill="#985821" stroke="#8e4a12" stroke-width="0.9"/>
<polygon points="480.0,416.5 476.4,416.4 474.4,419.7 477.7,419.9" fill="#c1884e" stroke="#8e4a12" stroke-width="0.9"/>
<polygon points="323.7,546.2 323.1,553.6 327.1,555.8 327.6,548.8" fill="#cd8844" stroke="#8e4a12" stroke-width="0.9"/>
<polygon points="341.3,477.3 333.6,483.2 331.6,487.8 339.6,481.7" fill="#3a1e08" stroke="#8e4a12" stroke-width="0.9"/>
<polygon points="317.5,512.6 313.6,520.9 314.7,526.0 318.6,517.9" fill="#7d481b" stroke="#8e4a12" stroke-width="0.9"/>
<polygon points="476.4,416.4 472.2,419.0 470.6,421.8 474.4,419.7" fill="#8e4a12" stroke="#8e4a12" stroke-width="0.9"/>
<polygon points="485.2,415.3 483.8,411.9 483.1,412.6 484.3,415.8" fill="#8e4a12" stroke="#8e4a12" stroke-width="0.9"/>
<polygon points="482.5,421.2 480.4,417.1 482.3,414.5 484.2,418.4" fill="#bc7c3d" stroke="#8e4a12" stroke-width="0.9"/>
<polygon points="469.1,419.5 464.4,424.5 465.8,422.5 470.8,417.1" fill="#8e4a12" stroke="#8e4a12" stroke-width="0.9"/>
<polygon points="470.8,417.1 465.8,422.5 467.1,421.0 472.1,415.5" fill="#8e4a12" stroke="#8e4a12" stroke-width="0.9"/>
<polygon points="484.3,415.8 483.1,412.6 481.8,414.1 482.9,417.0" fill="#98551b" stroke="#8e4a12" stroke-width="0.9"/>
<polygon points="472.7,447.3 472.7,444.2 476.1,433.3 475.1,437.3" fill="#8e4a12" stroke="#8e4a12" stroke-width="0.9"/>
<polygon points="472.1,415.5 467.1,421.0 468.1,420.2 473.1,414.7" fill="#8e4a12" stroke="#8e4a12" stroke-width="0.9"/>
<polygon points="473.1,414.7 468.1,420.2 468.9,419.9 473.6,414.7" fill="#8e4a12" stroke="#8e4a12" stroke-width="0.9"/>
<polygon points="482.9,417.0 481.8,414.1 480.0,416.5 481.1,419.3" fill="#a8662a" stroke="#8e4a12" stroke-width="0.9"/>
<polygon points="455.4,562.6 455.9,556.0 454.8,557.1 454.3,563.7" fill="#9c5a20" stroke="#8e4a12" stroke-width="0.9"/>
<polygon points="473.2,532.6 470.6,524.2 467.8,529.1 470.3,537.2" fill="#ac6b2f" stroke="#8e4a12" stroke-width="0.9"/>
<polygon points="473.6,414.7 468.9,419.9 469.3,420.3 473.7,415.4" fill="#8e4a12" stroke="#8e4a12" stroke-width="0.9"/>
<polygon points="467.3,549.0 466.4,541.2 462.0,544.6 462.9,551.9" fill="#cb8643" stroke="#8e4a12" stroke-width="0.9"/>
<polygon points="481.1,419.3 480.0,416.5 477.7,419.9 478.9,422.5" fill="#b06f32" stroke="#8e4a12" stroke-width="0.9"/>
<polygon points="473.7,415.4 469.3,420.3 469.2,421.3 473.3,416.9" fill="#8e4a12" stroke="#8e4a12" stroke-width="0.9"/>
<polygon points="473.3,416.9 469.2,421.3 468.7,422.9 472.2,419.0" fill="#8e4a12" stroke="#8e4a12" stroke-width="0.9"/>
<polygon points="472.2,419.0 468.7,422.9 467.5,425.1 470.6,421.8" fill="#8e4a12" stroke="#8e4a12" stroke-width="0.9"/>
<polygon points="401.9,456.3 391.9,455.9 391.8,459.1 402.4,459.6" fill="#3f210a" stroke="#8e4a12" stroke-width="0.9"/>
<polygon points="391.9,455.9 381.9,456.5 381.3,459.8 391.8,459.1" fill="#3e200a" stroke="#8e4a12" stroke-width="0.9"/>
<polygon points="457.8,453.0 464.4,456.4 465.0,449.3 459.2,447.0" fill="#c68240" stroke="#8e4a12" stroke-width="0.9"/>
<polygon points="440.7,472.0 432.1,467.4 433.9,471.3 442.8,476.1" fill="#3a1e09" stroke="#8e4a12" stroke-width="0.9"/>
<polygon points="464.4,456.4 469.4,457.6 469.8,449.2 465.0,449.3" fill="#cc8743" stroke="#8e4a12" stroke-width="0.9"/>
<polygon points="330.1,557.5 330.8,564.1 332.0,565.1 331.2,558.6" fill="#98561c" stroke="#8e4a12" stroke-width="0.9"/>
<polygon points="459.4,433.1 458.5,437.1 462.4,429.8 464.4,424.5" fill="#8e4a12" stroke="#8e4a12" stroke-width="0.9"/>
<polygon points="411.8,457.8 401.9,456.3 402.4,459.6 412.8,461.1" fill="#3e200a" stroke="#8e4a12" stroke-width="0.9"/>
<polygon points="319.3,542.9 318.7,550.8 323.1,553.6 323.7,546.2" fill="#c5813f" stroke="#8e4a12" stroke-width="0.9"/>
<polygon points="458.4,561.2 458.9,554.3 455.9,556.0 455.4,562.6" fill="#cb8643" stroke="#8e4a12" stroke-width="0.9"/>
<polygon points="314.7,526.0 312.4,534.5 315.3,539.0 317.5,530.8" fill="#a4642b" stroke="#8e4a12" stroke-width="0.9"/>
<polygon points="381.9,456.5 372.1,458.2 371.0,461.6 381.3,459.8" fill="#3b1e09" stroke="#8e4a12" stroke-width="0.9"/>
<polygon points="475.1,437.3 476.1,433.3 482.5,421.2 480.5,426.6" fill="#8e4a12" stroke="#8e4a12" stroke-width="0.9"/>
<polygon points="455.5,443.4 459.2,447.0 461.3,440.8 458.5,437.1" fill="#bd7939" stroke="#8e4a12" stroke-width="0.9"/>
<polygon points="351.9,468.4 343.5,473.2 341.3,477.3 350.1,472.3" fill="#371c08" stroke="#8e4a12" stroke-width="0.9"/>
<polygon points="483.0,420.9 485.5,415.6 485.2,415.3 482.7,420.4" fill="#8e4a12" stroke="#8e4a12" stroke-width="0.9"/>
<polygon points="482.7,420.4 485.2,415.3 484.3,415.8 482.0,420.6" fill="#8e4a12" stroke="#8e4a12" stroke-width="0.9"/>
<polygon points="482.8,422.2 485.2,416.7 485.5,415.6 483.0,420.9" fill="#8e4a12" stroke="#8e4a12" stroke-width="0.9"/>
<polygon points="482.0,420.6 484.3,415.8 482.9,417.0 480.8,421.5" fill="#8e4a12" stroke="#8e4a12" stroke-width="0.9"/>
<polygon points="480.8,421.5 482.9,417.0 481.1,419.3 479.3,423.4" fill="#8e4a12" stroke="#8e4a12" stroke-width="0.9"/>
<polygon points="479.3,423.4 481.1,419.3 478.9,422.5 477.4,426.0" fill="#8e4a12" stroke="#8e4a12" stroke-width="0.9"/>
<polygon points="481.9,424.1 484.2,418.4 485.2,416.7 482.8,422.2" fill="#8e4a12" stroke="#8e4a12" stroke-width="0.9"/>
<polygon points="480.5,426.6 482.5,421.2 484.2,418.4 481.9,424.1" fill="#8e4a12" stroke="#8e4a12" stroke-width="0.9"/>
<polygon points="464.4,424.5 462.4,429.8 463.5,428.1 465.8,422.5" fill="#8e4a12" stroke="#8e4a12" stroke-width="0.9"/>
<polygon points="465.3,500.5 459.7,493.1 461.1,498.1 466.9,505.6" fill="#532c0d" stroke="#8e4a12" stroke-width="0.9"/>
<polygon points="465.8,422.5 463.5,428.1 464.6,426.7 467.1,421.0" fill="#8e4a12" stroke="#8e4a12" stroke-width="0.9"/>
<polygon points="468.7,422.9 466.8,426.9 466.0,428.6 467.5,425.1" fill="#8e4a12" stroke="#8e4a12" stroke-width="0.9"/>
<polygon points="467.1,421.0 464.6,426.7 465.6,425.7 468.1,420.2" fill="#8e4a12" stroke="#8e4a12" stroke-width="0.9"/>
<polygon points="469.8,449.2 472.7,447.3 475.1,437.3 471.6,440.7" fill="#97571f" stroke="#8e4a12" stroke-width="0.9"/>
<polygon points="469.2,421.3 467.1,425.8 466.8,426.9 468.7,422.9" fill="#8e4a12" stroke="#8e4a12" stroke-width="0.9"/>
<polygon points="468.1,420.2 465.6,425.7 466.4,425.2 468.9,419.9" fill="#8e4a12" stroke="#8e4a12" stroke-width="0.9"/>
<polygon points="469.3,420.3 467.0,425.2 467.1,425.8 469.2,421.3" fill="#8e4a12" stroke="#8e4a12" stroke-width="0.9"/>
<polygon points="468.9,419.9 466.4,425.2 467.0,425.2 469.3,420.3" fill="#8e4a12" stroke="#8e4a12" stroke-width="0.9"/>
<polygon points="327.1,555.8 327.9,562.8 330.8,564.1 330.1,557.5" fill="#c6823f" stroke="#8e4a12" stroke-width="0.9"/>
<polygon points="471.1,513.7 466.9,505.6 467.4,510.9 471.7,519.0" fill="#5f3410" stroke="#8e4a12" stroke-width="0.9"/>
<polygon points="421.2,460.3 411.8,457.8 412.8,461.1 422.8,463.7" fill="#3a1e09" stroke="#8e4a12" stroke-width="0.9"/>
<polygon points="457.6,488.3 450.8,481.8 452.7,486.4 459.7,493.1" fill="#47250a" stroke="#8e4a12" stroke-width="0.9"/>
<polygon points="471.3,545.4 470.3,537.2 466.4,541.2 467.3,549.0" fill="#bd7a3a" stroke="#8e4a12" stroke-width="0.9"/>
<polygon points="372.1,458.2 362.7,461.0 361.1,464.5 371.0,461.6" fill="#371c08" stroke="#8e4a12" stroke-width="0.9"/>
<polygon points="462.3,559.3 462.9,551.9 458.9,554.3 458.4,561.2" fill="#cc8743" stroke="#8e4a12" stroke-width="0.9"/>
<polygon points="324.9,494.7 319.6,502.2 318.1,507.4 323.5,499.7" fill="#512a0b" stroke="#8e4a12" stroke-width="0.9"/>
<polygon points="475.7,427.3 479.3,423.4 477.4,426.0 474.3,429.4" fill="#8e4a12" stroke="#8e4a12" stroke-width="0.9"/>
<polygon points="459.2,447.0 465.0,449.3 466.6,442.1 461.3,440.8" fill="#d18e4a" stroke="#8e4a12" stroke-width="0.9"/>
<polygon points="476.8,426.0 480.8,421.5 479.3,423.4 475.7,427.3" fill="#8e4a12" stroke="#8e4a12" stroke-width="0.9"/>
<polygon points="318.1,507.4 314.2,515.6 313.6,520.9 317.5,512.6" fill="#5a300e" stroke="#8e4a12" stroke-width="0.9"/>
<polygon points="465.0,449.3 469.8,449.2 471.6,440.7 466.6,442.1" fill="#ce8945" stroke="#8e4a12" stroke-width="0.9"/>
<polygon points="333.6,483.2 327.1,489.9 324.9,494.7 331.6,487.8" fill="#4d280b" stroke="#8e4a12" stroke-width="0.9"/>
<polygon points="477.5,425.5 482.0,420.6 480.8,421.5 476.8,426.0" fill="#8e4a12" stroke="#8e4a12" stroke-width="0.9"/>
<polygon points="458.5,437.1 461.3,440.8 464.5,433.9 462.4,429.8" fill="#cb8845" stroke="#8e4a12" stroke-width="0.9"/>
<polygon points="474.4,527.5 471.7,519.0 470.6,524.2 473.2,532.6" fill="#7c471b" stroke="#8e4a12" stroke-width="0.9"/>
<polygon points="466.8,426.9 467.9,429.7 467.2,431.2 466.0,428.6" fill="#8e4a12" stroke="#8e4a12" stroke-width="0.9"/>
<polygon points="478.0,425.6 482.7,420.4 482.0,420.6 477.5,425.5" fill="#8e4a12" stroke="#8e4a12" stroke-width="0.9"/>
<polygon points="471.6,440.7 475.1,437.3 480.5,426.6 475.8,431.6" fill="#8e4d16" stroke="#8e4a12" stroke-width="0.9"/>
<polygon points="315.3,539.0 314.7,547.3 318.7,550.8 319.3,542.9" fill="#b67436" stroke="#8e4a12" stroke-width="0.9"/>
<polygon points="467.1,425.8 468.2,428.9 467.9,429.7 466.8,426.9" fill="#8e4a12" stroke="#8e4a12" stroke-width="0.9"/>
<polygon points="478.0,426.4 483.0,420.9 482.7,420.4 478.0,425.6" fill="#8e4a12" stroke="#8e4a12" stroke-width="0.9"/>
<polygon points="467.0,425.2 468.2,428.6 468.2,428.9 467.1,425.8" fill="#8e4a12" stroke="#8e4a12" stroke-width="0.9"/>
<polygon points="477.7,427.7 482.8,422.2 483.0,420.9 478.0,426.4" fill="#8e4a12" stroke="#8e4a12" stroke-width="0.9"/>
<polygon points="323.1,553.6 324.0,561.0 327.9,562.8 327.1,555.8" fill="#c78240" stroke="#8e4a12" stroke-width="0.9"/>
<polygon points="477.0,429.4 481.9,424.1 482.8,422.2 477.7,427.7" fill="#8e4a12" stroke="#8e4a12" stroke-width="0.9"/>
<polygon points="466.4,425.2 467.8,428.9 468.2,428.6 467.0,425.2" fill="#8e4a12" stroke="#8e4a12" stroke-width="0.9"/>
<polygon points="475.8,431.6 480.5,426.6 481.9,424.1 477.0,429.4" fill="#8e4a12" stroke="#8e4a12" stroke-width="0.9"/>
<polygon points="448.3,477.5 440.7,472.0 442.8,476.1 450.8,481.8" fill="#422209" stroke="#8e4a12" stroke-width="0.9"/>
<polygon points="465.6,425.7 467.2,429.6 467.8,428.9 466.4,425.2" fill="#8e4a12" stroke="#8e4a12" stroke-width="0.9"/>
<polygon points="462.4,429.8 464.5,433.9 465.5,432.2 463.5,428.1" fill="#a05d22" stroke="#8e4a12" stroke-width="0.9"/>
<polygon points="453.7,569.2 455.4,562.6 454.3,563.7 452.6,570.1" fill="#924f16" stroke="#8e4a12" stroke-width="0.9"/>
<polygon points="464.6,426.7 466.4,430.8 467.2,429.6 465.6,425.7" fill="#8e4a12" stroke="#8e4a12" stroke-width="0.9"/>
<polygon points="471.5,429.8 475.7,427.3 474.3,429.4 470.5,431.4" fill="#8e4a12" stroke="#8e4a12" stroke-width="0.9"/>
<polygon points="463.5,428.1 465.5,432.2 466.4,430.8 464.6,426.7" fill="#98551b" stroke="#8e4a12" stroke-width="0.9"/>
<polygon points="430.1,463.7 421.2,460.3 422.8,463.7 432.1,467.4" fill="#371c08" stroke="#8e4a12" stroke-width="0.9"/>
<polygon points="467.9,429.7 471.5,429.8 470.5,431.4 467.2,431.2" fill="#945118" stroke="#8e4a12" stroke-width="0.9"/>
<polygon points="472.1,428.9 476.8,426.0 475.7,427.3 471.5,429.8" fill="#8e4a12" stroke="#8e4a12" stroke-width="0.9"/>
<polygon points="468.2,428.9 472.1,428.9 471.5,429.8 467.9,429.7" fill="#8e4a12" stroke="#8e4a12" stroke-width="0.9"/>
<polygon points="313.6,520.9 311.3,529.4 312.4,534.5 314.7,526.0" fill="#6f3f17" stroke="#8e4a12" stroke-width="0.9"/>
<polygon points="472.5,428.7 477.5,425.5 476.8,426.0 472.1,428.9" fill="#8e4a12" stroke="#8e4a12" stroke-width="0.9"/>
<polygon points="468.2,428.6 472.5,428.7 472.1,428.9 468.2,428.9" fill="#8e4a12" stroke="#8e4a12" stroke-width="0.9"/>
<polygon points="362.7,461.0 354.0,464.6 351.9,468.4 361.1,464.5" fill="#371c08" stroke="#8e4a12" stroke-width="0.9"/>
<polygon points="472.5,429.0 478.0,425.6 477.5,425.5 472.5,428.7" fill="#8e4a12" stroke="#8e4a12" stroke-width="0.9"/>
<polygon points="343.5,473.2 336.1,478.8 333.6,483.2 341.3,477.3" fill="#46240a" stroke="#8e4a12" stroke-width="0.9"/>
<polygon points="466.7,556.9 467.3,549.0 462.9,551.9 462.3,559.3" fill="#c5813f" stroke="#8e4a12" stroke-width="0.9"/>
<polygon points="466.6,442.1 471.6,440.7 475.8,431.6 469.9,434.6" fill="#cb8845" stroke="#8e4a12" stroke-width="0.9"/>
<polygon points="461.3,440.8 466.6,442.1 469.9,434.6 464.5,433.9" fill="#db9e5a" stroke="#8e4a12" stroke-width="0.9"/>
<polygon points="330.8,564.1 332.9,570.6 334.0,571.5 332.0,565.1" fill="#8f4c14" stroke="#8e4a12" stroke-width="0.9"/>
<polygon points="467.8,428.9 472.5,429.0 472.5,428.7 468.2,428.6" fill="#8e4a12" stroke="#8e4a12" stroke-width="0.9"/>
<polygon points="472.3,429.8 478.0,426.4 478.0,425.6 472.5,429.0" fill="#8e4a12" stroke="#8e4a12" stroke-width="0.9"/>
<polygon points="471.7,431.1 477.7,427.7 478.0,426.4 472.3,429.8" fill="#8e4a12" stroke="#8e4a12" stroke-width="0.9"/>
<polygon points="474.2,541.2 473.2,532.6 470.3,537.2 471.3,545.4" fill="#a3642a" stroke="#8e4a12" stroke-width="0.9"/>
<polygon points="467.2,429.6 472.3,429.8 472.5,429.0 467.8,428.9" fill="#8e4a12" stroke="#8e4a12" stroke-width="0.9"/>
<polygon points="456.5,568.1 458.4,561.2 455.4,562.6 453.7,569.2" fill="#c4803f" stroke="#8e4a12" stroke-width="0.9"/>
<polygon points="471.0,432.7 477.0,429.4 477.7,427.7 471.7,431.1" fill="#8e4a12" stroke="#8e4a12" stroke-width="0.9"/>
<polygon points="469.9,434.6 475.8,431.6 477.0,429.4 471.0,432.7" fill="#8e4a12" stroke="#8e4a12" stroke-width="0.9"/>
<polygon points="466.4,430.8 471.7,431.1 472.3,429.8 467.2,429.6" fill="#8e4a12" stroke="#8e4a12" stroke-width="0.9"/>
<polygon points="464.5,433.9 469.9,434.6 471.0,432.7 465.5,432.2" fill="#b17338" stroke="#8e4a12" stroke-width="0.9"/>
<polygon points="465.5,432.2 471.0,432.7 471.7,431.1 466.4,430.8" fill="#a4652b" stroke="#8e4a12" stroke-width="0.9"/>
<polygon points="318.7,550.8 319.6,558.6 324.0,561.0 323.1,553.6" fill="#bf7c3b" stroke="#8e4a12" stroke-width="0.9"/>
<polygon points="327.9,562.8 330.1,569.6 332.9,570.6 330.8,564.1" fill="#bf7b3b" stroke="#8e4a12" stroke-width="0.9"/>
<polygon points="312.4,534.5 311.8,543.1 314.7,547.3 315.3,539.0" fill="#9c5d26" stroke="#8e4a12" stroke-width="0.9"/>
<polygon points="469.5,508.4 465.3,500.5 466.9,505.6 471.1,513.7" fill="#844511" stroke="#8e4a12" stroke-width="0.9"/>
<polygon points="463.0,495.5 457.6,488.3 459.7,493.1 465.3,500.5" fill="#743c0f" stroke="#8e4a12" stroke-width="0.9"/>
<polygon points="438.2,468.1 430.1,463.7 432.1,467.4 440.7,472.0" fill="#3c1f09" stroke="#8e4a12" stroke-width="0.9"/>
<polygon points="401.4,453.2 391.9,452.9 391.9,455.9 401.9,456.3" fill="#371c08" stroke="#8e4a12" stroke-width="0.9"/>
<polygon points="391.9,452.9 382.5,453.5 381.9,456.5 391.9,455.9" fill="#371c08" stroke="#8e4a12" stroke-width="0.9"/>
<polygon points="460.4,566.6 462.3,559.3 458.4,561.2 456.5,568.1" fill="#c68240" stroke="#8e4a12" stroke-width="0.9"/>
<polygon points="473.8,522.1 471.1,513.7 471.7,519.0 474.4,527.5" fill="#854511" stroke="#8e4a12" stroke-width="0.9"/>
<polygon points="354.0,464.6 346.1,469.2 343.5,473.2 351.9,468.4" fill="#3f2009" stroke="#8e4a12" stroke-width="0.9"/>
<polygon points="470.7,553.7 471.3,545.4 467.3,549.0 466.7,556.9" fill="#b57335" stroke="#8e4a12" stroke-width="0.9"/>
<polygon points="410.6,454.6 401.4,453.2 401.9,456.3 411.8,457.8" fill="#371c08" stroke="#8e4a12" stroke-width="0.9"/>
<polygon points="327.1,489.9 322.0,497.2 319.6,502.2 324.9,494.7" fill="#8a4811" stroke="#8e4a12" stroke-width="0.9"/>
<polygon points="319.6,502.2 315.8,510.2 314.2,515.6 318.1,507.4" fill="#8e4a12" stroke="#8e4a12" stroke-width="0.9"/>
<polygon points="454.8,483.7 448.3,477.5 450.8,481.8 457.6,488.3" fill="#60320d" stroke="#8e4a12" stroke-width="0.9"/>
<polygon points="382.5,453.5 373.3,455.1 372.1,458.2 381.9,456.5" fill="#371c08" stroke="#8e4a12" stroke-width="0.9"/>
<polygon points="450.7,575.5 453.7,569.2 452.6,570.1 449.6,576.3" fill="#8e4a12" stroke="#8e4a12" stroke-width="0.9"/>
<polygon points="324.0,561.0 326.2,568.2 330.1,569.6 327.9,562.8" fill="#c17d3c" stroke="#8e4a12" stroke-width="0.9"/>
<polygon points="314.2,515.6 311.9,524.1 311.3,529.4 313.6,520.9" fill="#8e4a12" stroke="#8e4a12" stroke-width="0.9"/>
<polygon points="314.7,547.3 315.7,555.5 319.6,558.6 318.7,550.8" fill="#af6d31" stroke="#8e4a12" stroke-width="0.9"/>
<polygon points="336.1,478.8 329.9,485.2 327.1,489.9 333.6,483.2" fill="#6d380e" stroke="#8e4a12" stroke-width="0.9"/>
<polygon points="475.4,536.2 474.4,527.5 473.2,532.6 474.2,541.2" fill="#774115" stroke="#8e4a12" stroke-width="0.9"/>
<polygon points="419.5,457.0 410.6,454.6 411.8,457.8 421.2,460.3" fill="#371c08" stroke="#8e4a12" stroke-width="0.9"/>
<polygon points="332.9,570.6 336.2,576.8 337.2,577.6 334.0,571.5" fill="#8e4a12" stroke="#8e4a12" stroke-width="0.9"/>
<polygon points="373.3,455.1 364.6,457.6 362.7,461.0 372.1,458.2" fill="#371c08" stroke="#8e4a12" stroke-width="0.9"/>
<polygon points="453.4,574.7 456.5,568.1 453.7,569.2 450.7,575.5" fill="#bb7837" stroke="#8e4a12" stroke-width="0.9"/>
<polygon points="464.6,564.6 466.7,556.9 462.3,559.3 460.4,566.6" fill="#be7b3b" stroke="#8e4a12" stroke-width="0.9"/>
<polygon points="445.5,473.3 438.2,468.1 440.7,472.0 448.3,477.5" fill="#50290b" stroke="#8e4a12" stroke-width="0.9"/>
<polygon points="311.3,529.4 310.6,538.2 311.8,543.1 312.4,534.5" fill="#723e13" stroke="#8e4a12" stroke-width="0.9"/>
<polygon points="330.1,569.6 333.5,576.1 336.2,576.8 332.9,570.6" fill="#b57234" stroke="#8e4a12" stroke-width="0.9"/>
<polygon points="473.6,549.8 474.2,541.2 471.3,545.4 470.7,553.7" fill="#9b5c25" stroke="#8e4a12" stroke-width="0.9"/>
<polygon points="346.1,469.2 339.1,474.6 336.1,478.8 343.5,473.2" fill="#572d0c" stroke="#8e4a12" stroke-width="0.9"/>
<polygon points="319.6,558.6 322.1,566.3 326.2,568.2 324.0,561.0" fill="#b87637" stroke="#8e4a12" stroke-width="0.9"/>
<polygon points="427.9,460.2 419.5,457.0 421.2,460.3 430.1,463.7" fill="#371c08" stroke="#8e4a12" stroke-width="0.9"/>
<polygon points="364.6,457.6 356.3,461.1 354.0,464.6 362.7,461.0" fill="#391d08" stroke="#8e4a12" stroke-width="0.9"/>
<polygon points="467.0,503.2 463.0,495.5 465.3,500.5 469.5,508.4" fill="#8e4a12" stroke="#8e4a12" stroke-width="0.9"/>
<polygon points="457.0,573.6 460.4,566.6 456.5,568.1 453.4,574.7" fill="#c07d3c" stroke="#8e4a12" stroke-width="0.9"/>
<polygon points="311.8,543.1 312.8,551.7 315.7,555.5 314.7,547.3" fill="#915420" stroke="#8e4a12" stroke-width="0.9"/>
<polygon points="472.1,516.7 469.5,508.4 471.1,513.7 473.8,522.1" fill="#8e4a12" stroke="#8e4a12" stroke-width="0.9"/>
<polygon points="446.5,581.4 450.7,575.5 449.6,576.3 445.5,582.1" fill="#8e4a12" stroke="#8e4a12" stroke-width="0.9"/>
<polygon points="460.0,490.6 454.8,483.7 457.6,488.3 463.0,495.5" fill="#8e4a12" stroke="#8e4a12" stroke-width="0.9"/>
<polygon points="468.5,561.9 470.7,553.7 466.7,556.9 464.6,564.6" fill="#ae6d31" stroke="#8e4a12" stroke-width="0.9"/>
<polygon points="326.2,568.2 329.9,575.1 333.5,576.1 330.1,569.6" fill="#bb7839" stroke="#8e4a12" stroke-width="0.9"/>
<polygon points="322.0,497.2 318.3,504.9 315.8,510.2 319.6,502.2" fill="#8e4a12" stroke="#8e4a12" stroke-width="0.9"/>
<polygon points="336.2,576.8 340.6,582.6 341.5,583.3 337.2,577.6" fill="#8e4a12" stroke="#8e4a12" stroke-width="0.9"/>
<polygon points="474.8,530.8 473.8,522.1 474.4,527.5 475.4,536.2" fill="#8e4a12" stroke="#8e4a12" stroke-width="0.9"/>
<polygon points="315.8,510.2 313.5,518.6 311.9,524.1 314.2,515.6" fill="#8e4a12" stroke="#8e4a12" stroke-width="0.9"/>
<polygon points="329.9,485.2 325.0,492.2 322.0,497.2 327.1,489.9" fill="#8e4a12" stroke="#8e4a12" stroke-width="0.9"/>
<polygon points="435.5,464.4 427.9,460.2 430.1,463.7 438.2,468.1" fill="#432209" stroke="#8e4a12" stroke-width="0.9"/>
<polygon points="449.0,580.8 453.4,574.7 450.7,575.5 446.5,581.4" fill="#b26f31" stroke="#8e4a12" stroke-width="0.9"/>
<polygon points="451.6,479.2 445.5,473.3 448.3,477.5 454.8,483.7" fill="#854511" stroke="#8e4a12" stroke-width="0.9"/>
<polygon points="315.7,555.5 318.2,563.6 322.1,566.3 319.6,558.6" fill="#a7672d" stroke="#8e4a12" stroke-width="0.9"/>
<polygon points="356.3,461.1 348.9,465.4 346.1,469.2 354.0,464.6" fill="#47240a" stroke="#8e4a12" stroke-width="0.9"/>
<polygon points="400.8,450.3 392.0,449.9 391.9,452.9 401.4,453.2" fill="#371c08" stroke="#8e4a12" stroke-width="0.9"/>
<polygon points="392.0,449.9 383.2,450.5 382.5,453.5 391.9,452.9" fill="#371c08" stroke="#8e4a12" stroke-width="0.9"/>
<polygon points="311.9,524.1 311.2,532.7 310.6,538.2 311.3,529.4" fill="#8e4a12" stroke="#8e4a12" stroke-width="0.9"/>
<polygon points="474.7,544.9 475.4,536.2 474.2,541.2 473.6,549.8" fill="#8e4a12" stroke="#8e4a12" stroke-width="0.9"/>
<polygon points="461.1,572.0 464.6,564.6 460.4,566.6 457.0,573.6" fill="#b87537" stroke="#8e4a12" stroke-width="0.9"/>
<polygon points="333.5,576.1 338.1,582.2 340.6,582.6 336.2,576.8" fill="#ad6a2e" stroke="#8e4a12" stroke-width="0.9"/>
<polygon points="339.1,474.6 333.2,480.6 329.9,485.2 336.1,478.8" fill="#8e4a12" stroke="#8e4a12" stroke-width="0.9"/>
<polygon points="409.5,451.6 400.8,450.3 401.4,453.2 410.6,454.6" fill="#371c08" stroke="#8e4a12" stroke-width="0.9"/>
<polygon points="383.2,450.5 374.7,452.0 373.3,455.1 382.5,453.5" fill="#371c08" stroke="#8e4a12" stroke-width="0.9"/>
<polygon points="322.1,566.3 325.9,573.6 329.9,575.1 326.2,568.2" fill="#b27133" stroke="#8e4a12" stroke-width="0.9"/>
<polygon points="310.6,538.2 311.6,546.9 312.8,551.7 311.8,543.1" fill="#8e4a12" stroke="#8e4a12" stroke-width="0.9"/>
<polygon points="441.2,586.8 446.5,581.4 445.5,582.1 440.3,587.4" fill="#8e4a12" stroke="#8e4a12" stroke-width="0.9"/>
<polygon points="417.8,453.8 409.5,451.6 410.6,454.6 419.5,457.0" fill="#371c08" stroke="#8e4a12" stroke-width="0.9"/>
<polygon points="452.4,580.2 457.0,573.6 453.4,574.7 449.0,580.8" fill="#ba7738" stroke="#8e4a12" stroke-width="0.9"/>
<polygon points="471.3,558.2 473.6,549.8 470.7,553.7 468.5,561.9" fill="#8f511c" stroke="#8e4a12" stroke-width="0.9"/>
<polygon points="374.7,452.0 366.4,454.4 364.6,457.6 373.3,455.1" fill="#371c08" stroke="#8e4a12" stroke-width="0.9"/>
<polygon points="442.3,469.2 435.5,464.4 438.2,468.1 445.5,473.3" fill="#5d300c" stroke="#8e4a12" stroke-width="0.9"/>
<polygon points="340.6,582.6 346.1,587.9 346.9,588.5 341.5,583.3" fill="#8e4a12" stroke="#8e4a12" stroke-width="0.9"/>
<polygon points="469.6,511.2 467.0,503.2 469.5,508.4 472.1,516.7" fill="#8e4a12" stroke="#8e4a12" stroke-width="0.9"/>
<polygon points="463.9,497.9 460.0,490.6 463.0,495.5 467.0,503.2" fill="#8e4a12" stroke="#8e4a12" stroke-width="0.9"/>
<polygon points="329.9,575.1 334.8,581.5 338.1,582.2 333.5,576.1" fill="#b47234" stroke="#8e4a12" stroke-width="0.9"/>
<polygon points="348.9,465.4 342.3,470.4 339.1,474.6 346.1,469.2" fill="#68360e" stroke="#8e4a12" stroke-width="0.9"/>
<polygon points="312.8,551.7 315.4,560.1 318.2,563.6 315.7,555.5" fill="#874b19" stroke="#8e4a12" stroke-width="0.9"/>
<polygon points="443.5,586.5 449.0,580.8 446.5,581.4 441.2,586.8" fill="#a8652a" stroke="#8e4a12" stroke-width="0.9"/>
<polygon points="473.1,525.2 472.1,516.7 473.8,522.1 474.8,530.8" fill="#8d4a12" stroke="#8e4a12" stroke-width="0.9"/>
<polygon points="425.6,456.8 417.8,453.8 419.5,457.0 427.9,460.2" fill="#3a1d08" stroke="#8e4a12" stroke-width="0.9"/>
<polygon points="464.7,569.7 468.5,561.9 464.6,564.6 461.1,572.0" fill="#a5642a" stroke="#8e4a12" stroke-width="0.9"/>
<polygon points="456.6,485.7 451.6,479.2 454.8,483.7 460.0,490.6" fill="#8e4a12" stroke="#8e4a12" stroke-width="0.9"/>
<polygon points="325.0,492.2 321.5,499.6 318.3,504.9 322.0,497.2" fill="#8e4a12" stroke="#8e4a12" stroke-width="0.9"/>
<polygon points="318.3,504.9 316.1,513.0 313.5,518.6 315.8,510.2" fill="#8e4a12" stroke="#8e4a12" stroke-width="0.9"/>
<polygon points="366.4,454.4 358.8,457.6 356.3,461.1 364.6,457.6" fill="#3c1f09" stroke="#8e4a12" stroke-width="0.9"/>
<polygon points="338.1,582.2 343.9,587.7 346.1,587.9 340.6,582.6" fill="#a46227" stroke="#8e4a12" stroke-width="0.9"/>
<polygon points="474.1,539.4 474.8,530.8 475.4,536.2 474.7,544.9" fill="#8b4912" stroke="#8e4a12" stroke-width="0.9"/>
<polygon points="313.5,518.6 312.9,527.0 311.2,532.7 311.9,524.1" fill="#824513" stroke="#8e4a12" stroke-width="0.9"/>
<polygon points="333.2,480.6 328.5,487.2 325.0,492.2 329.9,485.2" fill="#8e4a12" stroke="#8e4a12" stroke-width="0.9"/>
<polygon points="318.2,563.6 322.3,571.4 325.9,573.6 322.1,566.3" fill="#9e5e26" stroke="#8e4a12" stroke-width="0.9"/>
<polygon points="435.0,591.6 441.2,586.8 440.3,587.4 434.2,592.1" fill="#8e4a12" stroke="#8e4a12" stroke-width="0.9"/>
<polygon points="456.1,579.0 461.1,572.0 457.0,573.6 452.4,580.2" fill="#b06e32" stroke="#8e4a12" stroke-width="0.9"/>
<polygon points="400.5,449.9 392.1,449.6 392.0,449.9 400.8,450.3" fill="#86440f" stroke="#86440f" stroke-width="0.9"/>
<polygon points="392.1,449.6 383.7,450.1 383.2,450.5 392.0,449.9" fill="#86440f" stroke="#86440f" stroke-width="0.9"/>
<polygon points="346.1,587.9 352.5,592.6 353.3,593.0 346.9,588.5" fill="#8e4a12" stroke="#8e4a12" stroke-width="0.9"/>
<polygon points="448.1,474.8 442.3,469.2 445.5,473.3 451.6,479.2" fill="#8e4a12" stroke="#8e4a12" stroke-width="0.9"/>
<polygon points="408.7,451.2 400.5,449.9 400.8,450.3 409.5,451.6" fill="#86440f" stroke="#86440f" stroke-width="0.9"/>
<polygon points="311.2,532.7 312.2,541.4 311.6,546.9 310.6,538.2" fill="#7d4212" stroke="#8e4a12" stroke-width="0.9"/>
<polygon points="432.7,460.7 425.6,456.8 427.9,460.2 435.5,464.4" fill="#48250a" stroke="#8e4a12" stroke-width="0.9"/>
<polygon points="383.7,450.1 375.5,451.5 374.7,452.0 383.2,450.5" fill="#86440f" stroke="#86440f" stroke-width="0.9"/>
<polygon points="472.4,553.5 474.7,544.9 473.6,549.8 471.3,558.2" fill="#8e4a12" stroke="#8e4a12" stroke-width="0.9"/>
<polygon points="446.6,586.2 452.4,580.2 449.0,580.8 443.5,586.5" fill="#b06e31" stroke="#8e4a12" stroke-width="0.9"/>
<polygon points="325.9,573.6 331.1,580.5 334.8,581.5 329.9,575.1" fill="#aa6a2e" stroke="#8e4a12" stroke-width="0.9"/>
<polygon points="358.8,457.6 351.8,461.6 348.9,465.4 356.3,461.1" fill="#4d270a" stroke="#8e4a12" stroke-width="0.9"/>
<polygon points="342.3,470.4 336.8,476.1 333.2,480.6 339.1,474.6" fill="#8e4a12" stroke="#8e4a12" stroke-width="0.9"/>
<polygon points="400.3,453.3 392.1,453.0 392.1,451.0 400.2,451.4" fill="#86440f" stroke="#86440f" stroke-width="0.9"/>
<polygon points="392.1,453.0 383.9,453.5 384.0,451.6 392.1,451.0" fill="#86440f" stroke="#86440f" stroke-width="0.9"/>
<polygon points="436.9,591.5 443.5,586.5 441.2,586.8 435.0,591.6" fill="#9f5d23" stroke="#8e4a12" stroke-width="0.9"/>
<polygon points="334.8,581.5 340.9,587.4 343.9,587.7 338.1,582.2" fill="#ac6b2e" stroke="#8e4a12" stroke-width="0.9"/>
<polygon points="416.7,453.2 408.7,451.2 409.5,451.6 417.8,453.8" fill="#86440f" stroke="#86440f" stroke-width="0.9"/>
<polygon points="311.6,546.9 314.3,555.4 315.4,560.1 312.8,551.7" fill="#8e4a12" stroke="#8e4a12" stroke-width="0.9"/>
<polygon points="375.5,451.5 367.6,453.8 366.4,454.4 374.7,452.0" fill="#86440f" stroke="#86440f" stroke-width="0.9"/>
<polygon points="408.4,454.5 400.3,453.3 400.2,451.4 408.2,452.6" fill="#86440f" stroke="#86440f" stroke-width="0.9"/>
<polygon points="400.2,451.4 392.1,451.0 392.1,449.6 400.5,449.9" fill="#86440f" stroke="#86440f" stroke-width="0.9"/>
<polygon points="467.4,566.3 471.3,558.2 468.5,561.9 464.7,569.7" fill="#8c4a13" stroke="#8e4a12" stroke-width="0.9"/>
<polygon points="383.9,453.5 375.9,454.9 376.1,453.0 384.0,451.6" fill="#86440f" stroke="#86440f" stroke-width="0.9"/>
<polygon points="392.1,451.0 384.0,451.6 383.7,450.1 392.1,449.6" fill="#86440f" stroke="#86440f" stroke-width="0.9"/>
<polygon points="343.9,587.7 350.7,592.5 352.5,592.6 346.1,587.9" fill="#9c5a20" stroke="#8e4a12" stroke-width="0.9"/>
<polygon points="466.3,505.6 463.9,497.9 467.0,503.2 469.6,511.2" fill="#824614" stroke="#8e4a12" stroke-width="0.9"/>
<polygon points="427.9,595.7 435.0,591.6 434.2,592.1 427.2,596.1" fill="#8e4a12" stroke="#8e4a12" stroke-width="0.9"/>
<polygon points="408.2,452.6 400.2,451.4 400.5,449.9 408.7,451.2" fill="#86440f" stroke="#86440f" stroke-width="0.9"/>
<polygon points="384.0,451.6 376.1,453.0 375.5,451.5 383.7,450.1" fill="#86440f" stroke="#86440f" stroke-width="0.9"/>
<polygon points="470.5,519.3 469.6,511.2 472.1,516.7 473.1,525.2" fill="#784215" stroke="#8e4a12" stroke-width="0.9"/>
<polygon points="416.1,456.6 408.4,454.5 408.2,452.6 415.9,454.6" fill="#86440f" stroke="#86440f" stroke-width="0.9"/>
<polygon points="460.2,492.7 456.6,485.7 460.0,490.6 463.9,497.9" fill="#8e4a12" stroke="#8e4a12" stroke-width="0.9"/>
<polygon points="352.5,592.6 359.8,596.5 360.4,596.9 353.3,593.0" fill="#8e4a12" stroke="#8e4a12" stroke-width="0.9"/>
<polygon points="399.6,456.2 392.2,455.9 392.2,456.0 399.8,456.4" fill="#8e4a12" stroke="#8e4a12" stroke-width="0.9"/>
<polygon points="459.5,577.0 464.7,569.7 461.1,572.0 456.1,579.0" fill="#9b5a22" stroke="#8e4a12" stroke-width="0.9"/>
<polygon points="315.4,560.1 319.6,568.1 322.3,571.4 318.2,563.6" fill="#8e4a12" stroke="#8e4a12" stroke-width="0.9"/>
<polygon points="424.1,456.2 416.7,453.2 417.8,453.8 425.6,456.8" fill="#86440f" stroke="#86440f" stroke-width="0.9"/>
<polygon points="392.2,455.9 384.8,456.3 384.5,456.5 392.2,456.0" fill="#8e4a12" stroke="#8e4a12" stroke-width="0.9"/>
<polygon points="375.9,454.9 368.2,457.1 368.5,455.2 376.1,453.0" fill="#86440f" stroke="#86440f" stroke-width="0.9"/>
<polygon points="439.1,465.2 432.7,460.7 435.5,464.4 442.3,469.2" fill="#67360e" stroke="#8e4a12" stroke-width="0.9"/>
<polygon points="415.9,454.6 408.2,452.6 408.7,451.2 416.7,453.2" fill="#86440f" stroke="#86440f" stroke-width="0.9"/>
<polygon points="321.5,499.6 319.4,507.3 316.1,513.0 318.3,504.9" fill="#844917" stroke="#8e4a12" stroke-width="0.9"/>
<polygon points="406.8,457.3 399.6,456.2 399.8,456.4 407.3,457.5" fill="#8e4a12" stroke="#8e4a12" stroke-width="0.9"/>
<polygon points="472.5,533.6 473.1,525.2 474.8,530.8 474.1,539.4" fill="#703e14" stroke="#8e4a12" stroke-width="0.9"/>
<polygon points="367.6,453.8 360.3,456.9 358.8,457.6 366.4,454.4" fill="#86440f" stroke="#86440f" stroke-width="0.9"/>
<polygon points="384.8,456.3 377.6,457.6 377.1,457.8 384.5,456.5" fill="#8e4a12" stroke="#8e4a12" stroke-width="0.9"/>
<polygon points="449.9,585.4 456.1,579.0 452.4,580.2 446.6,586.2" fill="#a7652b" stroke="#8e4a12" stroke-width="0.9"/>
<polygon points="376.1,453.0 368.5,455.2 367.6,453.8 375.5,451.5" fill="#86440f" stroke="#86440f" stroke-width="0.9"/>
<polygon points="316.1,513.0 315.5,521.2 312.9,527.0 313.5,518.6" fill="#804819" stroke="#8e4a12" stroke-width="0.9"/>
<polygon points="328.5,487.2 325.2,494.3 321.5,499.6 325.0,492.2" fill="#8e4a12" stroke="#8e4a12" stroke-width="0.9"/>
<polygon points="351.8,461.6 345.7,466.3 342.3,470.4 348.9,465.4" fill="#743c0f" stroke="#8e4a12" stroke-width="0.9"/>
<polygon points="439.6,591.5 446.6,586.2 443.5,586.5 436.9,591.5" fill="#a9662b" stroke="#8e4a12" stroke-width="0.9"/>
<polygon points="322.3,571.4 327.8,578.6 331.1,580.5 325.9,573.6" fill="#96551e" stroke="#8e4a12" stroke-width="0.9"/>
<polygon points="452.8,480.9 448.1,474.8 451.6,479.2 456.6,485.7" fill="#8e4a12" stroke="#8e4a12" stroke-width="0.9"/>
<polygon points="429.5,595.8 436.9,591.5 435.0,591.6 427.9,595.7" fill="#98551c" stroke="#8e4a12" stroke-width="0.9"/>
<polygon points="423.4,459.4 416.1,456.6 415.9,454.6 423.1,457.4" fill="#86440f" stroke="#86440f" stroke-width="0.9"/>
<polygon points="413.8,459.1 406.8,457.3 407.3,457.5 414.5,459.4" fill="#8e4a12" stroke="#8e4a12" stroke-width="0.9"/>
<polygon points="331.1,580.5 337.6,586.7 340.9,587.4 334.8,581.5" fill="#a26127" stroke="#8e4a12" stroke-width="0.9"/>
<polygon points="471.8,547.9 474.1,539.4 474.7,544.9 472.4,553.5" fill="#653712" stroke="#8e4a12" stroke-width="0.9"/>
<polygon points="420.1,599.0 427.9,595.7 427.2,596.1 419.6,599.3" fill="#8e4a12" stroke="#8e4a12" stroke-width="0.9"/>
<polygon points="312.9,527.0 313.9,535.5 312.2,541.4 311.2,532.7" fill="#794518" stroke="#8e4a12" stroke-width="0.9"/>
<polygon points="377.6,457.6 370.7,459.6 370.0,459.9 377.1,457.8" fill="#8e4a12" stroke="#8e4a12" stroke-width="0.9"/>
<polygon points="368.2,457.1 361.0,460.1 361.4,458.1 368.5,455.2" fill="#86440f" stroke="#86440f" stroke-width="0.9"/>
<polygon points="340.9,587.4 348.1,592.6 350.7,592.5 343.9,587.7" fill="#a56328" stroke="#8e4a12" stroke-width="0.9"/>
<polygon points="350.7,592.5 358.3,596.6 359.8,596.5 352.5,592.6" fill="#95521a" stroke="#8e4a12" stroke-width="0.9"/>
<polygon points="423.1,457.4 415.9,454.6 416.7,453.2 424.1,456.2" fill="#86440f" stroke="#86440f" stroke-width="0.9"/>
<polygon points="336.8,476.1 332.4,482.3 328.5,487.2 333.2,480.6" fill="#8e4a12" stroke="#8e4a12" stroke-width="0.9"/>
<polygon points="359.8,596.5 367.8,599.6 368.2,599.9 360.4,596.9" fill="#8e4a12" stroke="#8e4a12" stroke-width="0.9"/>
<polygon points="430.9,459.8 424.1,456.2 425.6,456.8 432.7,460.7" fill="#86440f" stroke="#86440f" stroke-width="0.9"/>
<polygon points="399.0,458.3 392.2,458.0 392.2,455.9 399.6,456.2" fill="#cb8744" stroke="#8e4a12" stroke-width="0.9"/>
<polygon points="368.5,455.2 361.4,458.1 360.3,456.9 367.6,453.8" fill="#86440f" stroke="#86440f" stroke-width="0.9"/>
<polygon points="392.2,458.0 385.5,458.4 384.8,456.3 392.2,455.9" fill="#cc8744" stroke="#8e4a12" stroke-width="0.9"/>
<polygon points="360.3,456.9 353.7,460.7 351.8,461.6 358.8,457.6" fill="#86440f" stroke="#86440f" stroke-width="0.9"/>
<polygon points="405.7,459.3 399.0,458.3 399.6,456.2 406.8,457.3" fill="#cc8744" stroke="#8e4a12" stroke-width="0.9"/>
<polygon points="312.2,541.4 314.9,549.8 314.3,555.4 311.6,546.9" fill="#6d3d15" stroke="#8e4a12" stroke-width="0.9"/>
<polygon points="420.4,461.7 413.8,459.1 414.5,459.4 421.2,462.0" fill="#8e4a12" stroke="#8e4a12" stroke-width="0.9"/>
<polygon points="468.5,561.7 472.4,553.5 471.3,558.2 467.4,566.3" fill="#7e4210" stroke="#8e4a12" stroke-width="0.9"/>
<polygon points="385.5,458.4 378.9,459.6 377.6,457.6 384.8,456.3" fill="#cc8744" stroke="#8e4a12" stroke-width="0.9"/>
<polygon points="370.7,459.6 364.2,462.3 363.3,462.7 370.0,459.9" fill="#8e4a12" stroke="#8e4a12" stroke-width="0.9"/>
<polygon points="430.1,463.0 423.4,459.4 423.1,457.4 429.7,461.0" fill="#86440f" stroke="#86440f" stroke-width="0.9"/>
<polygon points="444.5,470.4 439.1,465.2 442.3,469.2 448.1,474.8" fill="#8e4a12" stroke="#8e4a12" stroke-width="0.9"/>
<polygon points="411.7,601.4 420.1,599.0 419.6,599.3 411.3,601.7" fill="#8e4a12" stroke="#8e4a12" stroke-width="0.9"/>
<polygon points="421.3,599.2 429.5,595.8 427.9,595.7 420.1,599.0" fill="#914d15" stroke="#8e4a12" stroke-width="0.9"/>
<polygon points="412.1,460.9 405.7,459.3 406.8,457.3 413.8,459.1" fill="#cd8844" stroke="#8e4a12" stroke-width="0.9"/>
<polygon points="367.8,599.6 376.2,601.8 376.5,602.1 368.2,599.9" fill="#8e4a12" stroke="#8e4a12" stroke-width="0.9"/>
<polygon points="462.0,574.0 467.4,566.3 464.7,569.7 459.5,577.0" fill="#8e4a12" stroke="#8e4a12" stroke-width="0.9"/>
<polygon points="361.0,460.1 354.5,463.9 355.0,461.8 361.4,458.1" fill="#86440f" stroke="#86440f" stroke-width="0.9"/>
<polygon points="378.9,459.6 372.5,461.4 370.7,459.6 377.6,457.6" fill="#cd8945" stroke="#8e4a12" stroke-width="0.9"/>
<polygon points="314.3,555.4 318.6,563.5 319.6,568.1 315.4,560.1" fill="#6f3a0f" stroke="#8e4a12" stroke-width="0.9"/>
<polygon points="429.7,461.0 423.1,457.4 424.1,456.2 430.9,459.8" fill="#86440f" stroke="#86440f" stroke-width="0.9"/>
<polygon points="431.7,596.0 439.6,591.5 436.9,591.5 429.5,595.8" fill="#a15f25" stroke="#8e4a12" stroke-width="0.9"/>
<polygon points="358.3,596.6 366.6,599.9 367.8,599.6 359.8,596.5" fill="#8f4c13" stroke="#8e4a12" stroke-width="0.9"/>
<polygon points="345.7,466.3 340.5,471.6 336.8,476.1 342.3,470.4" fill="#8e4a12" stroke="#8e4a12" stroke-width="0.9"/>
<polygon points="467.2,513.4 466.3,505.6 469.6,511.2 470.5,519.3" fill="#80491a" stroke="#8e4a12" stroke-width="0.9"/>
<polygon points="453.0,583.8 459.5,577.0 456.1,579.0 449.9,585.4" fill="#925018" stroke="#8e4a12" stroke-width="0.9"/>
<polygon points="442.5,591.0 449.9,585.4 446.6,586.2 439.6,591.5" fill="#9e5d23" stroke="#8e4a12" stroke-width="0.9"/>
<polygon points="462.5,499.9 460.2,492.7 463.9,497.9 466.3,505.6" fill="#814817" stroke="#8e4a12" stroke-width="0.9"/>
<polygon points="361.4,458.1 355.0,461.8 353.7,460.7 360.3,456.9" fill="#86440f" stroke="#86440f" stroke-width="0.9"/>
<polygon points="348.1,592.6 356.1,596.9 358.3,596.6 350.7,592.5" fill="#9e5d23" stroke="#8e4a12" stroke-width="0.9"/>
<polygon points="426.4,464.9 420.4,461.7 421.2,462.0 427.4,465.3" fill="#8e4a12" stroke="#8e4a12" stroke-width="0.9"/>
<polygon points="402.9,602.9 411.7,601.4 411.3,601.7 402.8,603.2" fill="#8e4a12" stroke="#8e4a12" stroke-width="0.9"/>
<polygon points="437.0,464.2 430.9,459.8 432.7,460.7 439.1,465.2" fill="#86440f" stroke="#86440f" stroke-width="0.9"/>
<polygon points="319.6,568.1 325.3,575.6 327.8,578.6 322.3,571.4" fill="#8e4a12" stroke="#8e4a12" stroke-width="0.9"/>
<polygon points="469.9,527.6 470.5,519.3 473.1,525.2 472.5,533.6" fill="#7e491b" stroke="#8e4a12" stroke-width="0.9"/>
<polygon points="376.2,601.8 385.0,603.1 385.2,603.4 376.5,602.1" fill="#8e4a12" stroke="#8e4a12" stroke-width="0.9"/>
<polygon points="418.1,463.3 412.1,460.9 413.8,459.1 420.4,461.7" fill="#cd8946" stroke="#8e4a12" stroke-width="0.9"/>
<polygon points="364.2,462.3 358.4,465.7 357.3,466.2 363.3,462.7" fill="#8e4a12" stroke="#8e4a12" stroke-width="0.9"/>
<polygon points="337.6,586.7 345.2,592.2 348.1,592.6 340.9,587.4" fill="#9b5921" stroke="#8e4a12" stroke-width="0.9"/>
<polygon points="456.2,487.4 452.8,480.9 456.6,485.7 460.2,492.7" fill="#8d4a12" stroke="#8e4a12" stroke-width="0.9"/>
<polygon points="327.8,578.6 334.6,585.2 337.6,586.7 331.1,580.5" fill="#8f4d15" stroke="#8e4a12" stroke-width="0.9"/>
<polygon points="372.5,461.4 366.6,463.9 364.2,462.3 370.7,459.6" fill="#cf8b47" stroke="#8e4a12" stroke-width="0.9"/>
<polygon points="394.0,603.5 402.9,602.9 402.8,603.2 394.0,603.8" fill="#8e4a12" stroke="#8e4a12" stroke-width="0.9"/>
<polygon points="353.7,460.7 347.8,465.2 345.7,466.3 351.8,461.6" fill="#86440f" stroke="#86440f" stroke-width="0.9"/>
<polygon points="385.0,603.1 394.0,603.5 394.0,603.8 385.2,603.4" fill="#8e4a12" stroke="#8e4a12" stroke-width="0.9"/>
<polygon points="412.6,601.8 421.3,599.2 420.1,599.0 411.7,601.4" fill="#8e4a12" stroke="#8e4a12" stroke-width="0.9"/>
<polygon points="319.4,507.3 318.8,515.2 315.5,521.2 316.1,513.0" fill="#8c511e" stroke="#8e4a12" stroke-width="0.9"/>
<polygon points="325.2,494.3 323.2,501.6 319.4,507.3 321.5,499.6" fill="#894e1b" stroke="#8e4a12" stroke-width="0.9"/>
<polygon points="398.2,462.0 392.3,461.7 392.2,458.0 399.0,458.3" fill="#d59450" stroke="#8e4a12" stroke-width="0.9"/>
<polygon points="392.3,461.7 386.5,462.1 385.5,458.4 392.2,458.0" fill="#d59551" stroke="#8e4a12" stroke-width="0.9"/>
<polygon points="366.6,599.9 375.4,602.2 376.2,601.8 367.8,599.6" fill="#8e4a12" stroke="#8e4a12" stroke-width="0.9"/>
<polygon points="436.0,467.3 430.1,463.0 429.7,461.0 435.5,465.2" fill="#86440f" stroke="#86440f" stroke-width="0.9"/>
<polygon points="470.2,542.0 472.5,533.6 474.1,539.4 471.8,547.9" fill="#78451a" stroke="#8e4a12" stroke-width="0.9"/>
<polygon points="404.0,462.8 398.2,462.0 399.0,458.3 405.7,459.3" fill="#d59551" stroke="#8e4a12" stroke-width="0.9"/>
<polygon points="315.5,521.2 316.4,529.4 313.9,535.5 312.9,527.0" fill="#8c511f" stroke="#8e4a12" stroke-width="0.9"/>
<polygon points="386.5,462.1 380.7,463.1 378.9,459.6 385.5,458.4" fill="#d59551" stroke="#8e4a12" stroke-width="0.9"/>
<polygon points="332.4,482.3 329.2,488.9 325.2,494.3 328.5,487.2" fill="#8a4a15" stroke="#8e4a12" stroke-width="0.9"/>
<polygon points="354.5,463.9 348.8,468.3 349.3,466.2 355.0,461.8" fill="#86440f" stroke="#86440f" stroke-width="0.9"/>
<polygon points="435.5,465.2 429.7,461.0 430.9,459.8 437.0,464.2" fill="#86440f" stroke="#86440f" stroke-width="0.9"/>
<polygon points="423.0,599.7 431.7,596.0 429.5,595.8 421.3,599.2" fill="#9b5920" stroke="#8e4a12" stroke-width="0.9"/>
<polygon points="403.4,603.4 412.6,601.8 411.7,601.4 402.9,602.9" fill="#8e4a12" stroke="#8e4a12" stroke-width="0.9"/>
<polygon points="423.6,466.3 418.1,463.3 420.4,461.7 426.4,464.9" fill="#cf8c48" stroke="#8e4a12" stroke-width="0.9"/>
<polygon points="409.6,464.3 404.0,462.8 405.7,459.3 412.1,460.9" fill="#d59551" stroke="#8e4a12" stroke-width="0.9"/>
<polygon points="467.9,556.1 471.8,547.9 472.4,553.5 468.5,561.7" fill="#6a3c16" stroke="#8e4a12" stroke-width="0.9"/>
<polygon points="375.4,602.2 384.7,603.6 385.0,603.1 376.2,601.8" fill="#8e4a12" stroke="#8e4a12" stroke-width="0.9"/>
<polygon points="431.7,468.7 426.4,464.9 427.4,465.3 432.9,469.3" fill="#8e4a12" stroke="#8e4a12" stroke-width="0.9"/>
<polygon points="448.8,476.1 444.5,470.4 448.1,474.8 452.8,480.9" fill="#8e4a12" stroke="#8e4a12" stroke-width="0.9"/>
<polygon points="380.7,463.1 375.2,464.7 372.5,461.4 378.9,459.6" fill="#d59551" stroke="#8e4a12" stroke-width="0.9"/>
<polygon points="313.9,535.5 316.5,543.8 314.9,549.8 312.2,541.4" fill="#854e1d" stroke="#8e4a12" stroke-width="0.9"/>
<polygon points="356.1,596.9 365.0,600.4 366.6,599.9 358.3,596.6" fill="#99571e" stroke="#8e4a12" stroke-width="0.9"/>
<polygon points="355.0,461.8 349.3,466.2 347.8,465.2 353.7,460.7" fill="#86440f" stroke="#86440f" stroke-width="0.9"/>
<polygon points="366.6,463.9 361.2,467.0 358.4,465.7 364.2,462.3" fill="#d08d49" stroke="#8e4a12" stroke-width="0.9"/>
<polygon points="394.0,604.0 403.4,603.4 402.9,602.9 394.0,603.5" fill="#8e4a12" stroke="#8e4a12" stroke-width="0.9"/>
<polygon points="384.7,603.6 394.0,604.0 394.0,603.5 385.0,603.1" fill="#8e4a12" stroke="#8e4a12" stroke-width="0.9"/>
<polygon points="358.4,465.7 353.2,469.6 352.0,470.3 357.3,466.2" fill="#8e4a12" stroke="#8e4a12" stroke-width="0.9"/>
<polygon points="434.2,595.8 442.5,591.0 439.6,591.5 431.7,596.0" fill="#96551c" stroke="#8e4a12" stroke-width="0.9"/>
<polygon points="442.1,469.1 437.0,464.2 439.1,465.2 444.5,470.4" fill="#86440f" stroke="#86440f" stroke-width="0.9"/>
<polygon points="340.5,471.6 336.4,477.4 332.4,482.3 336.8,476.1" fill="#8e4a12" stroke="#8e4a12" stroke-width="0.9"/>
<polygon points="463.0,569.5 468.5,561.7 467.4,566.3 462.0,574.0" fill="#522b0d" stroke="#8e4a12" stroke-width="0.9"/>
<polygon points="414.8,466.4 409.6,464.3 412.1,460.9 418.1,463.3" fill="#d59551" stroke="#8e4a12" stroke-width="0.9"/>
<polygon points="314.9,549.8 319.1,557.9 318.6,563.5 314.3,555.4" fill="#77441a" stroke="#8e4a12" stroke-width="0.9"/>
<polygon points="345.2,592.2 353.8,596.8 356.1,596.9 348.1,592.6" fill="#94521a" stroke="#8e4a12" stroke-width="0.9"/>
<polygon points="445.2,589.7 453.0,583.8 449.9,585.4 442.5,591.0" fill="#8e4a12" stroke="#8e4a12" stroke-width="0.9"/>
<polygon points="375.2,464.7 370.1,466.9 366.6,463.9 372.5,461.4" fill="#d69652" stroke="#8e4a12" stroke-width="0.9"/>
<polygon points="455.2,580.9 462.0,574.0 459.5,577.0 453.0,583.8" fill="#8e4a12" stroke="#8e4a12" stroke-width="0.9"/>
<polygon points="347.8,465.2 342.9,470.3 340.5,471.6 345.7,466.3" fill="#86440f" stroke="#86440f" stroke-width="0.9"/>
<polygon points="413.8,602.4 423.0,599.7 421.3,599.2 412.6,601.8" fill="#96541b" stroke="#8e4a12" stroke-width="0.9"/>
<polygon points="441.0,472.1 436.0,467.3 435.5,465.2 440.5,469.9" fill="#86440f" stroke="#86440f" stroke-width="0.9"/>
<polygon points="365.0,600.4 374.4,602.8 375.4,602.2 366.6,599.9" fill="#95521a" stroke="#8e4a12" stroke-width="0.9"/>
<polygon points="428.5,469.8 423.6,466.3 426.4,464.9 431.7,468.7" fill="#d08d49" stroke="#8e4a12" stroke-width="0.9"/>
<polygon points="318.6,563.5 324.4,571.1 325.3,575.6 319.6,568.1" fill="#582f0f" stroke="#8e4a12" stroke-width="0.9"/>
<polygon points="334.6,585.2 342.7,590.9 345.2,592.2 337.6,586.7" fill="#8e4a12" stroke="#8e4a12" stroke-width="0.9"/>
<polygon points="463.4,507.4 462.5,499.9 466.3,505.6 467.2,513.4" fill="#89501e" stroke="#8e4a12" stroke-width="0.9"/>
<polygon points="325.3,575.6 332.4,582.4 334.6,585.2 327.8,578.6" fill="#8e4a12" stroke="#8e4a12" stroke-width="0.9"/>
<polygon points="348.8,468.3 344.0,473.2 344.5,471.1 349.3,466.2" fill="#86440f" stroke="#86440f" stroke-width="0.9"/>
<polygon points="440.5,469.9 435.5,465.2 437.0,464.2 442.1,469.1" fill="#86440f" stroke="#86440f" stroke-width="0.9"/>
<polygon points="361.2,467.0 356.5,470.6 353.2,469.6 358.4,465.7" fill="#d18f4b" stroke="#8e4a12" stroke-width="0.9"/>
<polygon points="466.6,521.3 467.2,513.4 470.5,519.3 469.9,527.6" fill="#8d5220" stroke="#8e4a12" stroke-width="0.9"/>
<polygon points="397.3,466.6 392.5,466.4 392.3,461.7 398.2,462.0" fill="#d79854" stroke="#8e4a12" stroke-width="0.9"/>
<polygon points="392.5,466.4 387.6,466.8 386.5,462.1 392.3,461.7" fill="#d79854" stroke="#8e4a12" stroke-width="0.9"/>
<polygon points="419.6,468.9 414.8,466.4 418.1,463.3 423.6,466.3" fill="#d69652" stroke="#8e4a12" stroke-width="0.9"/>
<polygon points="436.3,473.1 431.7,468.7 432.9,469.3 437.6,473.8" fill="#8e4a12" stroke="#8e4a12" stroke-width="0.9"/>
<polygon points="458.4,494.3 456.2,487.4 460.2,492.7 462.5,499.9" fill="#844b1a" stroke="#8e4a12" stroke-width="0.9"/>
<polygon points="402.1,467.4 397.3,466.6 398.2,462.0 404.0,462.8" fill="#d79854" stroke="#8e4a12" stroke-width="0.9"/>
<polygon points="404.0,604.1 413.8,602.4 412.6,601.8 403.4,603.4" fill="#935018" stroke="#8e4a12" stroke-width="0.9"/>
<polygon points="387.6,466.8 382.9,467.6 380.7,463.1 386.5,462.1" fill="#d79854" stroke="#8e4a12" stroke-width="0.9"/>
<polygon points="370.1,466.9 365.4,469.6 361.2,467.0 366.6,463.9" fill="#d69753" stroke="#8e4a12" stroke-width="0.9"/>
<polygon points="374.4,602.8 384.2,604.3 384.7,603.6 375.4,602.2" fill="#924f17" stroke="#8e4a12" stroke-width="0.9"/>
<polygon points="349.3,466.2 344.5,471.1 342.9,470.3 347.8,465.2" fill="#86440f" stroke="#86440f" stroke-width="0.9"/>
<polygon points="467.7,535.6 469.9,527.6 472.5,533.6 470.2,542.0" fill="#8d5220" stroke="#8e4a12" stroke-width="0.9"/>
<polygon points="353.2,469.6 348.9,474.1 347.5,474.9 352.0,470.3" fill="#8e4a12" stroke="#8e4a12" stroke-width="0.9"/>
<polygon points="323.2,501.6 322.6,509.0 318.8,515.2 319.4,507.3" fill="#965822" stroke="#8e4a12" stroke-width="0.9"/>
<polygon points="424.9,599.7 434.2,595.8 431.7,596.0 423.0,599.7" fill="#904c14" stroke="#8e4a12" stroke-width="0.9"/>
<polygon points="406.6,468.6 402.1,467.4 404.0,462.8 409.6,464.3" fill="#d79854" stroke="#8e4a12" stroke-width="0.9"/>
<polygon points="318.8,515.2 319.7,523.0 316.4,529.4 315.5,521.2" fill="#995a24" stroke="#8e4a12" stroke-width="0.9"/>
<polygon points="394.1,604.7 404.0,604.1 403.4,603.4 394.0,604.0" fill="#914e16" stroke="#8e4a12" stroke-width="0.9"/>
<polygon points="329.2,488.9 327.3,495.8 323.2,501.6 325.2,494.3" fill="#8e511e" stroke="#8e4a12" stroke-width="0.9"/>
<polygon points="382.9,467.6 378.4,468.9 375.2,464.7 380.7,463.1" fill="#d79955" stroke="#8e4a12" stroke-width="0.9"/>
<polygon points="384.2,604.3 394.1,604.7 394.0,604.0 384.7,603.6" fill="#914e16" stroke="#8e4a12" stroke-width="0.9"/>
<polygon points="353.8,596.8 363.2,600.5 365.0,600.4 356.1,596.9" fill="#8e4a12" stroke="#8e4a12" stroke-width="0.9"/>
<polygon points="452.0,482.2 448.8,476.1 452.8,480.9 456.2,487.4" fill="#8a4913" stroke="#8e4a12" stroke-width="0.9"/>
<polygon points="466.4,550.0 470.2,542.0 471.8,547.9 467.9,556.1" fill="#874e1e" stroke="#8e4a12" stroke-width="0.9"/>
<polygon points="446.3,474.6 442.1,469.1 444.5,470.4 448.8,476.1" fill="#86440f" stroke="#86440f" stroke-width="0.9"/>
<polygon points="316.4,529.4 319.0,537.4 316.5,543.8 313.9,535.5" fill="#995a24" stroke="#8e4a12" stroke-width="0.9"/>
<polygon points="432.7,473.8 428.5,469.8 431.7,468.7 436.3,473.1" fill="#d18f4b" stroke="#8e4a12" stroke-width="0.9"/>
<polygon points="423.8,472.0 419.6,468.9 423.6,466.3 428.5,469.8" fill="#d69753" stroke="#8e4a12" stroke-width="0.9"/>
<polygon points="410.9,470.2 406.6,468.6 409.6,464.3 414.8,466.4" fill="#d79955" stroke="#8e4a12" stroke-width="0.9"/>
<polygon points="436.4,594.8 445.2,589.7 442.5,591.0 434.2,595.8" fill="#8e4a12" stroke="#8e4a12" stroke-width="0.9"/>
<polygon points="378.4,468.9 374.2,470.7 370.1,466.9 375.2,464.7" fill="#d89955" stroke="#8e4a12" stroke-width="0.9"/>
<polygon points="336.4,477.4 333.4,483.6 329.2,488.9 332.4,482.3" fill="#8a4b16" stroke="#8e4a12" stroke-width="0.9"/>
<polygon points="445.1,477.4 441.0,472.1 440.5,469.9 444.5,475.2" fill="#86440f" stroke="#86440f" stroke-width="0.9"/>
<polygon points="365.4,469.6 361.3,472.7 356.5,470.6 361.2,467.0" fill="#d79854" stroke="#8e4a12" stroke-width="0.9"/>
<polygon points="342.9,470.3 338.9,475.8 336.4,477.4 340.5,471.6" fill="#86440f" stroke="#86440f" stroke-width="0.9"/>
<polygon points="462.5,563.8 467.9,556.1 468.5,561.7 463.0,569.5" fill="#79451a" stroke="#8e4a12" stroke-width="0.9"/>
<polygon points="356.5,470.6 352.5,474.7 348.9,474.1 353.2,469.6" fill="#d2914d" stroke="#8e4a12" stroke-width="0.9"/>
<polygon points="316.5,543.8 320.7,551.7 319.1,557.9 314.9,549.8" fill="#945722" stroke="#8e4a12" stroke-width="0.9"/>
<polygon points="342.7,590.9 351.7,595.8 353.8,596.8 345.2,592.2" fill="#8e4a12" stroke="#8e4a12" stroke-width="0.9"/>
<polygon points="415.1,602.6 424.9,599.7 423.0,599.7 413.8,602.4" fill="#8e4a12" stroke="#8e4a12" stroke-width="0.9"/>
<polygon points="447.2,587.1 455.2,580.9 453.0,583.8 445.2,589.7" fill="#864611" stroke="#8e4a12" stroke-width="0.9"/>
<polygon points="456.1,576.5 463.0,569.5 462.0,574.0 455.2,580.9" fill="#4f2b0e" stroke="#8e4a12" stroke-width="0.9"/>
<polygon points="439.9,477.9 436.3,473.1 437.6,473.8 441.4,478.7" fill="#8e4a12" stroke="#8e4a12" stroke-width="0.9"/>
<polygon points="344.0,473.2 340.2,478.7 340.8,476.4 344.5,471.1" fill="#86440f" stroke="#86440f" stroke-width="0.9"/>
<polygon points="444.5,475.2 440.5,469.9 442.1,469.1 446.3,474.6" fill="#86440f" stroke="#86440f" stroke-width="0.9"/>
<polygon points="363.2,600.5 373.2,603.1 374.4,602.8 365.0,600.4" fill="#8e4a12" stroke="#8e4a12" stroke-width="0.9"/>
<polygon points="414.8,472.4 410.9,470.2 414.8,466.4 419.6,468.9" fill="#d89955" stroke="#8e4a12" stroke-width="0.9"/>
<polygon points="319.1,557.9 324.9,565.4 324.4,571.1 318.6,563.5" fill="#854d1d" stroke="#8e4a12" stroke-width="0.9"/>
<polygon points="374.2,470.7 370.3,472.9 365.4,469.6 370.1,466.9" fill="#d89a56" stroke="#8e4a12" stroke-width="0.9"/>
<polygon points="348.9,474.1 345.4,479.0 343.9,479.9 347.5,474.9" fill="#8e4a12" stroke="#8e4a12" stroke-width="0.9"/>
<polygon points="332.4,582.4 340.8,588.4 342.7,590.9 334.6,585.2" fill="#783e0f" stroke="#8e4a12" stroke-width="0.9"/>
<polygon points="344.5,471.1 340.8,476.4 338.9,475.8 342.9,470.3" fill="#86440f" stroke="#86440f" stroke-width="0.9"/>
<polygon points="324.4,571.1 331.6,578.0 332.4,582.4 325.3,575.6" fill="#5a3211" stroke="#8e4a12" stroke-width="0.9"/>
<polygon points="396.3,471.6 392.6,471.4 392.5,466.4 397.3,466.6" fill="#d79854" stroke="#8e4a12" stroke-width="0.9"/>
<polygon points="392.6,471.4 388.9,471.7 387.6,466.8 392.5,466.4" fill="#d79955" stroke="#8e4a12" stroke-width="0.9"/>
<polygon points="427.5,475.5 423.8,472.0 428.5,469.8 432.7,473.8" fill="#d79854" stroke="#8e4a12" stroke-width="0.9"/>
<polygon points="404.7,604.4 415.1,602.6 413.8,602.4 404.0,604.1" fill="#8e4a12" stroke="#8e4a12" stroke-width="0.9"/>
<polygon points="400.0,472.1 396.3,471.6 397.3,466.6 402.1,467.4" fill="#d79955" stroke="#8e4a12" stroke-width="0.9"/>
<polygon points="388.9,471.7 385.2,472.3 382.9,467.6 387.6,466.8" fill="#d79955" stroke="#8e4a12" stroke-width="0.9"/>
<polygon points="373.2,603.1 383.6,604.6 384.2,604.3 374.4,602.8" fill="#8e4a12" stroke="#8e4a12" stroke-width="0.9"/>
<polygon points="462.8,514.8 463.4,507.4 467.2,513.4 466.6,521.3" fill="#975923" stroke="#8e4a12" stroke-width="0.9"/>
<polygon points="459.2,501.3 458.4,494.3 462.5,499.9 463.4,507.4" fill="#905420" stroke="#8e4a12" stroke-width="0.9"/>
<polygon points="436.0,478.2 432.7,473.8 436.3,473.1 439.9,477.9" fill="#d3914d" stroke="#8e4a12" stroke-width="0.9"/>
<polygon points="361.3,472.7 357.8,476.3 352.5,474.7 356.5,470.6" fill="#d89955" stroke="#8e4a12" stroke-width="0.9"/>
<polygon points="418.3,474.9 414.8,472.4 419.6,468.9 423.8,472.0" fill="#d89a56" stroke="#8e4a12" stroke-width="0.9"/>
<polygon points="403.5,473.1 400.0,472.1 402.1,467.4 406.6,468.6" fill="#d79955" stroke="#8e4a12" stroke-width="0.9"/>
<polygon points="464.5,529.0 466.6,521.3 469.9,527.6 467.7,535.6" fill="#9a5b24" stroke="#8e4a12" stroke-width="0.9"/>
<polygon points="426.7,598.9 436.4,594.8 434.2,595.8 424.9,599.7" fill="#8e4a12" stroke="#8e4a12" stroke-width="0.9"/>
<polygon points="394.2,605.1 404.7,604.4 404.0,604.1 394.1,604.7" fill="#8e4a12" stroke="#8e4a12" stroke-width="0.9"/>
<polygon points="385.2,472.3 381.7,473.3 378.4,468.9 382.9,467.6" fill="#d89955" stroke="#8e4a12" stroke-width="0.9"/>
<polygon points="383.6,604.6 394.2,605.1 394.1,604.7 384.2,604.3" fill="#8e4a12" stroke="#8e4a12" stroke-width="0.9"/>
<polygon points="370.3,472.9 367.0,475.5 361.3,472.7 365.4,469.6" fill="#d99b57" stroke="#8e4a12" stroke-width="0.9"/>
<polygon points="449.4,480.4 446.3,474.6 448.8,476.1 452.0,482.2" fill="#86440f" stroke="#86440f" stroke-width="0.9"/>
<polygon points="352.5,474.7 349.4,479.2 345.4,479.0 348.9,474.1" fill="#d4934f" stroke="#8e4a12" stroke-width="0.9"/>
<polygon points="454.0,488.6 452.0,482.2 456.2,487.4 458.4,494.3" fill="#864c1b" stroke="#8e4a12" stroke-width="0.9"/>
<polygon points="351.7,595.8 361.6,599.7 363.2,600.5 353.8,596.8" fill="#8e4a12" stroke="#8e4a12" stroke-width="0.9"/>
<polygon points="322.6,509.0 323.5,516.5 319.7,523.0 318.8,515.2" fill="#9f6027" stroke="#8e4a12" stroke-width="0.9"/>
<polygon points="327.3,495.8 326.8,502.8 322.6,509.0 323.2,501.6" fill="#9a5b24" stroke="#8e4a12" stroke-width="0.9"/>
<polygon points="464.0,543.4 467.7,535.6 470.2,542.0 466.4,550.0" fill="#9a5b24" stroke="#8e4a12" stroke-width="0.9"/>
<polygon points="406.8,474.4 403.5,473.1 406.6,468.6 410.9,470.2" fill="#d89955" stroke="#8e4a12" stroke-width="0.9"/>
<polygon points="448.1,483.1 445.1,477.4 444.5,475.2 447.5,480.8" fill="#86440f" stroke="#86440f" stroke-width="0.9"/>
<polygon points="381.7,473.3 378.5,474.7 374.2,470.7 378.4,468.9" fill="#d89a56" stroke="#8e4a12" stroke-width="0.9"/>
<polygon points="319.7,523.0 322.1,530.7 319.0,537.4 316.4,529.4" fill="#a16229" stroke="#8e4a12" stroke-width="0.9"/>
<polygon points="338.9,475.8 336.1,481.7 333.4,483.6 336.4,477.4" fill="#86440f" stroke="#86440f" stroke-width="0.9"/>
<polygon points="442.6,483.0 439.9,477.9 441.4,478.7 444.1,484.0" fill="#924f16" stroke="#8e4a12" stroke-width="0.9"/>
<polygon points="333.4,483.6 331.7,490.0 327.3,495.8 329.2,488.9" fill="#91531f" stroke="#8e4a12" stroke-width="0.9"/>
<polygon points="438.0,592.4 447.2,587.1 445.2,589.7 436.4,594.8" fill="#5a2f0c" stroke="#8e4a12" stroke-width="0.9"/>
<polygon points="461.1,557.5 466.4,550.0 467.9,556.1 462.5,563.8" fill="#965822" stroke="#8e4a12" stroke-width="0.9"/>
<polygon points="340.2,478.7 337.4,484.4 338.0,482.1 340.8,476.4" fill="#86440f" stroke="#86440f" stroke-width="0.9"/>
<polygon points="430.4,479.3 427.5,475.5 432.7,473.8 436.0,478.2" fill="#d89955" stroke="#8e4a12" stroke-width="0.9"/>
<polygon points="447.5,480.8 444.5,475.2 446.3,474.6 449.4,480.4" fill="#86440f" stroke="#86440f" stroke-width="0.9"/>
<polygon points="421.3,477.7 418.3,474.9 423.8,472.0 427.5,475.5" fill="#d99b57" stroke="#8e4a12" stroke-width="0.9"/>
<polygon points="409.8,476.0 406.8,474.4 410.9,470.2 414.8,472.4" fill="#d89a56" stroke="#8e4a12" stroke-width="0.9"/>
<polygon points="319.0,537.4 323.0,545.0 320.7,551.7 316.5,543.8" fill="#a16229" stroke="#8e4a12" stroke-width="0.9"/>
<polygon points="345.4,479.0 342.9,484.2 341.4,485.2 343.9,479.9" fill="#955219" stroke="#8e4a12" stroke-width="0.9"/>
<polygon points="378.5,474.7 375.5,476.4 370.3,472.9 374.2,470.7" fill="#d89a56" stroke="#8e4a12" stroke-width="0.9"/>
<polygon points="455.7,570.8 462.5,563.8 463.0,569.5 456.1,576.5" fill="#874e1e" stroke="#8e4a12" stroke-width="0.9"/>
<polygon points="447.9,582.8 456.1,576.5 455.2,580.9 447.2,587.1" fill="#5b3312" stroke="#8e4a12" stroke-width="0.9"/>
<polygon points="416.3,601.9 426.7,598.9 424.9,599.7 415.1,602.6" fill="#8e4a12" stroke="#8e4a12" stroke-width="0.9"/>
<polygon points="340.8,588.4 350.2,593.4 351.7,595.8 342.7,590.9" fill="#552c0b" stroke="#8e4a12" stroke-width="0.9"/>
<polygon points="357.8,476.3 355.1,480.2 349.4,479.2 352.5,474.7" fill="#d99a56" stroke="#8e4a12" stroke-width="0.9"/>
<polygon points="367.0,475.5 364.1,478.4 357.8,476.3 361.3,472.7" fill="#d99c58" stroke="#8e4a12" stroke-width="0.9"/>
<polygon points="340.8,476.4 338.0,482.1 336.1,481.7 338.9,475.8" fill="#86440f" stroke="#86440f" stroke-width="0.9"/>
<polygon points="320.7,551.7 326.3,559.1 324.9,565.4 319.1,557.9" fill="#9d5e26" stroke="#8e4a12" stroke-width="0.9"/>
<polygon points="361.6,599.7 372.1,602.4 373.2,603.1 363.2,600.5" fill="#8e4a12" stroke="#8e4a12" stroke-width="0.9"/>
<polygon points="438.5,482.9 436.0,478.2 439.9,477.9 442.6,483.0" fill="#d4934f" stroke="#8e4a12" stroke-width="0.9"/>
<polygon points="331.6,578.0 340.0,584.1 340.8,588.4 332.4,582.4" fill="#653915" stroke="#8e4a12" stroke-width="0.9"/>
<polygon points="412.5,477.9 409.8,476.0 414.8,472.4 418.3,474.9" fill="#d89a56" stroke="#8e4a12" stroke-width="0.9"/>
<polygon points="324.9,565.4 332.0,572.3 331.6,578.0 324.4,571.1" fill="#925621" stroke="#8e4a12" stroke-width="0.9"/>
<polygon points="395.4,476.2 392.7,476.1 392.6,471.4 396.3,471.6" fill="#d69753" stroke="#8e4a12" stroke-width="0.9"/>
<polygon points="392.7,476.1 390.0,476.2 388.9,471.7 392.6,471.4" fill="#d69753" stroke="#8e4a12" stroke-width="0.9"/>
<polygon points="349.4,479.2 347.1,483.9 342.9,484.2 345.4,479.0" fill="#d59551" stroke="#8e4a12" stroke-width="0.9"/>
<polygon points="375.5,476.4 372.9,478.4 367.0,475.5 370.3,472.9" fill="#d99b57" stroke="#8e4a12" stroke-width="0.9"/>
<polygon points="328.4,586.7 325.4,583.2 332.0,581.5 335.6,584.8" fill="#c27e3c" stroke="#8e4a12" stroke-width="0.9"/>
<polygon points="398.0,476.6 395.4,476.2 396.3,471.6 400.0,472.1" fill="#d69753" stroke="#8e4a12" stroke-width="0.9"/>
<polygon points="390.0,476.2 387.4,476.7 385.2,472.3 388.9,471.7" fill="#d69753" stroke="#8e4a12" stroke-width="0.9"/>
<polygon points="405.4,603.8 416.3,601.9 415.1,602.6 404.7,604.4" fill="#8e4a12" stroke="#8e4a12" stroke-width="0.9"/>
<polygon points="423.7,480.8 421.3,477.7 427.5,475.5 430.4,479.3" fill="#d99c58" stroke="#8e4a12" stroke-width="0.9"/>
<polygon points="400.5,477.2 398.0,476.6 400.0,472.1 403.5,473.1" fill="#d69753" stroke="#8e4a12" stroke-width="0.9"/>
<polygon points="372.1,602.4 383.1,604.1 383.6,604.6 373.2,603.1" fill="#8e4a12" stroke="#8e4a12" stroke-width="0.9"/>
<polygon points="334.3,591.2 328.4,586.7 335.6,584.8 341.8,589.2" fill="#c3803e" stroke="#8e4a12" stroke-width="0.9"/>
<polygon points="387.4,476.7 384.9,477.4 381.7,473.3 385.2,472.3" fill="#d79753" stroke="#8e4a12" stroke-width="0.9"/>
<polygon points="451.3,486.5 449.4,480.4 452.0,482.2 454.0,488.6" fill="#86440f" stroke="#86440f" stroke-width="0.9"/>
<polygon points="458.7,508.3 459.2,501.3 463.4,507.4 462.8,514.8" fill="#9b5c25" stroke="#8e4a12" stroke-width="0.9"/>
<polygon points="432.5,483.4 430.4,479.3 436.0,478.2 438.5,482.9" fill="#d99b57" stroke="#8e4a12" stroke-width="0.9"/>
<polygon points="460.8,522.1 462.8,514.8 466.6,521.3 464.5,529.0" fill="#9f6028" stroke="#8e4a12" stroke-width="0.9"/>
<polygon points="364.1,478.4 361.9,481.6 355.1,480.2 357.8,476.3" fill="#da9d59" stroke="#8e4a12" stroke-width="0.9"/>
<polygon points="427.9,596.7 438.0,592.4 436.4,594.8 426.7,598.9" fill="#48250a" stroke="#8e4a12" stroke-width="0.9"/>
<polygon points="450.0,489.1 448.1,483.1 447.5,480.8 449.3,486.7" fill="#86440f" stroke="#86440f" stroke-width="0.9"/>
<polygon points="394.2,604.5 405.4,603.8 404.7,604.4 394.2,605.1" fill="#8e4a12" stroke="#8e4a12" stroke-width="0.9"/>
<polygon points="402.9,478.2 400.5,477.2 403.5,473.1 406.8,474.4" fill="#d79753" stroke="#8e4a12" stroke-width="0.9"/>
<polygon points="444.3,488.4 442.6,483.0 444.1,484.0 445.9,489.5" fill="#9b591f" stroke="#8e4a12" stroke-width="0.9"/>
<polygon points="414.8,480.1 412.5,477.9 418.3,474.9 421.3,477.7" fill="#d99b57" stroke="#8e4a12" stroke-width="0.9"/>
<polygon points="383.1,604.1 394.2,604.5 394.2,605.1 383.6,604.6" fill="#8e4a12" stroke="#8e4a12" stroke-width="0.9"/>
<polygon points="454.8,495.1 454.0,488.6 458.4,494.3 459.2,501.3" fill="#935621" stroke="#8e4a12" stroke-width="0.9"/>
<polygon points="384.9,477.4 382.6,478.4 378.5,474.7 381.7,473.3" fill="#d79854" stroke="#8e4a12" stroke-width="0.9"/>
<polygon points="461.0,536.4 464.5,529.0 467.7,535.6 464.0,543.4" fill="#a26329" stroke="#8e4a12" stroke-width="0.9"/>
<polygon points="325.4,583.2 325.3,581.1 331.1,579.6 332.0,581.5" fill="#844817" stroke="#8e4a12" stroke-width="0.9"/>
<polygon points="372.9,478.4 370.7,480.6 364.1,478.4 367.0,475.5" fill="#d99c58" stroke="#8e4a12" stroke-width="0.9"/>
<polygon points="355.1,480.2 353.1,484.3 347.1,483.9 349.4,479.2" fill="#d99c58" stroke="#8e4a12" stroke-width="0.9"/>
<polygon points="350.2,593.4 360.4,597.5 361.6,599.7 351.7,595.8" fill="#45240a" stroke="#8e4a12" stroke-width="0.9"/>
<polygon points="336.1,481.7 334.5,487.9 331.7,490.0 333.4,483.6" fill="#86440f" stroke="#86440f" stroke-width="0.9"/>
<polygon points="326.8,502.8 327.6,509.8 323.5,516.5 322.6,509.0" fill="#a2632a" stroke="#8e4a12" stroke-width="0.9"/>
<polygon points="337.4,484.4 335.8,490.4 336.4,488.1 338.0,482.1" fill="#86440f" stroke="#86440f" stroke-width="0.9"/>
<polygon points="405.1,479.3 402.9,478.2 406.8,474.4 409.8,476.0" fill="#d79854" stroke="#8e4a12" stroke-width="0.9"/>
<polygon points="342.9,484.2 341.5,489.6 339.9,490.8 341.4,485.2" fill="#9f5d23" stroke="#8e4a12" stroke-width="0.9"/>
<polygon points="449.3,486.7 447.5,480.8 449.4,480.4 451.3,486.5" fill="#86440f" stroke="#86440f" stroke-width="0.9"/>
<polygon points="323.5,516.5 325.8,523.7 322.1,530.7 319.7,523.0" fill="#a7672d" stroke="#8e4a12" stroke-width="0.9"/>
<polygon points="382.6,478.4 380.5,479.6 375.5,476.4 378.5,474.7" fill="#d79955" stroke="#8e4a12" stroke-width="0.9"/>
<polygon points="458.9,550.6 464.0,543.4 466.4,550.0 461.1,557.5" fill="#a26229" stroke="#8e4a12" stroke-width="0.9"/>
<polygon points="331.7,490.0 331.2,496.6 326.8,502.8 327.3,495.8" fill="#9c5d25" stroke="#8e4a12" stroke-width="0.9"/>
<polygon points="438.6,588.2 447.9,582.8 447.2,587.1 438.0,592.4" fill="#663a15" stroke="#8e4a12" stroke-width="0.9"/>
<polygon points="440.0,487.8 438.5,482.9 442.6,483.0 444.3,488.4" fill="#d59551" stroke="#8e4a12" stroke-width="0.9"/>
<polygon points="322.1,530.7 326.0,538.0 323.0,545.0 319.0,537.4" fill="#a9692e" stroke="#8e4a12" stroke-width="0.9"/>
<polygon points="454.4,564.4 461.1,557.5 462.5,563.8 455.7,570.8" fill="#9e5f27" stroke="#8e4a12" stroke-width="0.9"/>
<polygon points="425.5,484.2 423.7,480.8 430.4,479.3 432.5,483.4" fill="#da9d59" stroke="#8e4a12" stroke-width="0.9"/>
<polygon points="338.0,482.1 336.4,488.1 334.5,487.9 336.1,481.7" fill="#86440f" stroke="#86440f" stroke-width="0.9"/>
<polygon points="416.7,482.5 414.8,480.1 421.3,477.7 423.7,480.8" fill="#d99c58" stroke="#8e4a12" stroke-width="0.9"/>
<polygon points="407.0,480.7 405.1,479.3 409.8,476.0 412.5,477.9" fill="#d89955" stroke="#8e4a12" stroke-width="0.9"/>
<polygon points="447.5,577.1 455.7,570.8 456.1,576.5 447.9,582.8" fill="#935621" stroke="#8e4a12" stroke-width="0.9"/>
<polygon points="340.2,594.1 334.3,591.2 341.8,589.2 347.4,592.2" fill="#b57234" stroke="#8e4a12" stroke-width="0.9"/>
<polygon points="380.5,479.6 378.6,481.0 372.9,478.4 375.5,476.4" fill="#d89a56" stroke="#8e4a12" stroke-width="0.9"/>
<polygon points="340.0,584.1 349.6,589.2 350.2,593.4 340.8,588.4" fill="#6f3f17" stroke="#8e4a12" stroke-width="0.9"/>
<polygon points="323.0,545.0 328.4,552.2 326.3,559.1 320.7,551.7" fill="#a9692e" stroke="#8e4a12" stroke-width="0.9"/>
<polygon points="347.1,483.9 345.7,488.9 341.5,489.6 342.9,484.2" fill="#d79854" stroke="#8e4a12" stroke-width="0.9"/>
<polygon points="370.7,480.6 369.0,483.1 361.9,481.6 364.1,478.4" fill="#da9d59" stroke="#8e4a12" stroke-width="0.9"/>
<polygon points="361.9,481.6 360.2,485.0 353.1,484.3 355.1,480.2" fill="#da9e5a" stroke="#8e4a12" stroke-width="0.9"/>
<polygon points="417.1,599.8 427.9,596.7 426.7,598.9 416.3,601.9" fill="#3f2009" stroke="#8e4a12" stroke-width="0.9"/>
<polygon points="326.3,559.1 333.3,565.8 332.0,572.3 324.9,565.4" fill="#a4652b" stroke="#8e4a12" stroke-width="0.9"/>
<polygon points="360.4,597.5 371.3,600.3 372.1,602.4 361.6,599.7" fill="#3d1f09" stroke="#8e4a12" stroke-width="0.9"/>
<polygon points="433.9,487.6 432.5,483.4 438.5,482.9 440.0,487.8" fill="#d99c58" stroke="#8e4a12" stroke-width="0.9"/>
<polygon points="332.0,572.3 340.4,578.3 340.0,584.1 331.6,578.0" fill="#9a5c25" stroke="#8e4a12" stroke-width="0.9"/>
<polygon points="394.6,479.7 392.8,479.6 392.7,476.1 395.4,476.2" fill="#c98745" stroke="#8e4a12" stroke-width="0.9"/>
<polygon points="392.8,479.6 391.0,479.7 390.0,476.2 392.7,476.1" fill="#c98745" stroke="#8e4a12" stroke-width="0.9"/>
<polygon points="325.3,581.1 328.1,581.2 333.4,580.0 331.1,579.6" fill="#8e4a12" stroke="#8e4a12" stroke-width="0.9"/>
<polygon points="408.7,482.3 407.0,480.7 412.5,477.9 414.8,480.1" fill="#d89a56" stroke="#8e4a12" stroke-width="0.9"/>
<polygon points="396.3,479.9 394.6,479.7 395.4,476.2 398.0,476.6" fill="#c98744" stroke="#8e4a12" stroke-width="0.9"/>
<polygon points="391.0,479.7 389.3,480.0 387.4,476.7 390.0,476.2" fill="#c98745" stroke="#8e4a12" stroke-width="0.9"/>
<polygon points="378.6,481.0 377.0,482.7 370.7,480.6 372.9,478.4" fill="#d99b57" stroke="#8e4a12" stroke-width="0.9"/>
<polygon points="398.0,480.4 396.3,479.9 398.0,476.6 400.5,477.2" fill="#c88745" stroke="#8e4a12" stroke-width="0.9"/>
<polygon points="389.3,480.0 387.6,480.5 384.9,477.4 387.4,476.7" fill="#c88644" stroke="#8e4a12" stroke-width="0.9"/>
<polygon points="353.1,484.3 351.9,488.6 345.7,488.9 347.1,483.9" fill="#da9d59" stroke="#8e4a12" stroke-width="0.9"/>
<polygon points="444.9,493.9 444.3,488.4 445.9,489.5 446.6,495.2" fill="#a56327" stroke="#8e4a12" stroke-width="0.9"/>
<polygon points="418.0,485.1 416.7,482.5 423.7,480.8 425.5,484.2" fill="#da9d59" stroke="#8e4a12" stroke-width="0.9"/>
<polygon points="399.6,481.0 398.0,480.4 400.5,477.2 402.9,478.2" fill="#c78644" stroke="#8e4a12" stroke-width="0.9"/>
<polygon points="452.0,492.7 451.3,486.5 454.0,488.6 454.8,495.1" fill="#86440f" stroke="#86440f" stroke-width="0.9"/>
<polygon points="387.6,480.5 386.0,481.2 382.6,478.4 384.9,477.4" fill="#c88644" stroke="#8e4a12" stroke-width="0.9"/>
<polygon points="450.7,495.2 450.0,489.1 449.3,486.7 450.0,492.8" fill="#86440f" stroke="#86440f" stroke-width="0.9"/>
<polygon points="405.8,601.8 417.1,599.8 416.3,601.9 405.4,603.8" fill="#391d08" stroke="#8e4a12" stroke-width="0.9"/>
<polygon points="369.0,483.1 367.7,485.7 360.2,485.0 361.9,481.6" fill="#db9e5a" stroke="#8e4a12" stroke-width="0.9"/>
<polygon points="426.6,487.7 425.5,484.2 432.5,483.4 433.9,487.6" fill="#db9e5a" stroke="#8e4a12" stroke-width="0.9"/>
<polygon points="371.3,600.3 382.7,602.0 383.1,604.1 372.1,602.4" fill="#391d08" stroke="#8e4a12" stroke-width="0.9"/>
<polygon points="410.0,484.0 408.7,482.3 414.8,480.1 416.7,482.5" fill="#d99b57" stroke="#8e4a12" stroke-width="0.9"/>
<polygon points="401.1,481.8 399.6,481.0 402.9,478.2 405.1,479.3" fill="#c78544" stroke="#8e4a12" stroke-width="0.9"/>
<polygon points="456.8,515.1 458.7,508.3 462.8,514.8 460.8,522.1" fill="#a3632a" stroke="#8e4a12" stroke-width="0.9"/>
<polygon points="386.0,481.2 384.6,482.0 380.5,479.6 382.6,478.4" fill="#c88644" stroke="#8e4a12" stroke-width="0.9"/>
<polygon points="341.5,489.6 341.1,495.1 339.4,496.5 339.9,490.8" fill="#ab682b" stroke="#8e4a12" stroke-width="0.9"/>
<polygon points="428.4,592.5 438.6,588.2 438.0,592.4 427.9,596.7" fill="#6f4017" stroke="#8e4a12" stroke-width="0.9"/>
<polygon points="454.3,501.7 454.8,495.1 459.2,501.3 458.7,508.3" fill="#9c5e26" stroke="#8e4a12" stroke-width="0.9"/>
<polygon points="377.0,482.7 375.8,484.4 369.0,483.1 370.7,480.6" fill="#d99c58" stroke="#8e4a12" stroke-width="0.9"/>
<polygon points="457.5,529.2 460.8,522.1 464.5,529.0 461.0,536.4" fill="#a8682d" stroke="#8e4a12" stroke-width="0.9"/>
<polygon points="334.5,487.9 334.0,494.1 331.2,496.6 331.7,490.0" fill="#86440f" stroke="#86440f" stroke-width="0.9"/>
<polygon points="360.2,485.0 359.3,488.5 351.9,488.6 353.1,484.3" fill="#db9f5b" stroke="#8e4a12" stroke-width="0.9"/>
<polygon points="335.8,490.4 335.3,496.5 336.0,494.1 336.4,488.1" fill="#86440f" stroke="#86440f" stroke-width="0.9"/>
<polygon points="440.6,492.8 440.0,487.8 444.3,488.4 444.9,493.9" fill="#d79854" stroke="#8e4a12" stroke-width="0.9"/>
<polygon points="394.3,602.5 405.8,601.8 405.4,603.8 394.2,604.5" fill="#371c08" stroke="#8e4a12" stroke-width="0.9"/>
<polygon points="450.0,492.8 449.3,486.7 451.3,486.5 452.0,492.7" fill="#86440f" stroke="#86440f" stroke-width="0.9"/>
<polygon points="382.7,602.0 394.3,602.5 394.2,604.5 383.1,604.1" fill="#371c08" stroke="#8e4a12" stroke-width="0.9"/>
<polygon points="343.1,594.2 340.2,594.1 347.4,592.2 349.7,592.5" fill="#8e4a12" stroke="#8e4a12" stroke-width="0.9"/>
<polygon points="402.4,482.7 401.1,481.8 405.1,479.3 407.0,480.7" fill="#c78544" stroke="#8e4a12" stroke-width="0.9"/>
<polygon points="349.6,589.2 360.0,593.3 360.4,597.5 350.2,593.4" fill="#764419" stroke="#8e4a12" stroke-width="0.9"/>
<polygon points="456.1,543.4 461.0,536.4 464.0,543.4 458.9,550.6" fill="#aa6a2f" stroke="#8e4a12" stroke-width="0.9"/>
<polygon points="384.6,482.0 383.4,482.9 378.6,481.0 380.5,479.6" fill="#c78644" stroke="#8e4a12" stroke-width="0.9"/>
<polygon points="327.6,509.8 329.8,516.6 325.8,523.7 323.5,516.5" fill="#ab6a2f" stroke="#8e4a12" stroke-width="0.9"/>
<polygon points="345.7,488.9 345.4,493.9 341.1,495.1 341.5,489.6" fill="#d89a56" stroke="#8e4a12" stroke-width="0.9"/>
<polygon points="331.2,496.6 332.0,503.1 327.6,509.8 326.8,502.8" fill="#a4642b" stroke="#8e4a12" stroke-width="0.9"/>
<polygon points="438.3,582.4 447.5,577.1 447.9,582.8 438.6,588.2" fill="#9b5c25" stroke="#8e4a12" stroke-width="0.9"/>
<polygon points="418.9,487.8 418.0,485.1 425.5,484.2 426.6,487.7" fill="#db9e5a" stroke="#8e4a12" stroke-width="0.9"/>
<polygon points="325.8,523.7 329.4,530.7 326.0,538.0 322.1,530.7" fill="#af6e32" stroke="#8e4a12" stroke-width="0.9"/>
<polygon points="452.4,557.3 458.9,550.6 461.1,557.5 454.4,564.4" fill="#aa692e" stroke="#8e4a12" stroke-width="0.9"/>
<polygon points="410.9,485.9 410.0,484.0 416.7,482.5 418.0,485.1" fill="#d99c58" stroke="#8e4a12" stroke-width="0.9"/>
<polygon points="336.4,488.1 336.0,494.1 334.0,494.1 334.5,487.9" fill="#86440f" stroke="#86440f" stroke-width="0.9"/>
<polygon points="434.4,492.0 433.9,487.6 440.0,487.8 440.6,492.8" fill="#da9d59" stroke="#8e4a12" stroke-width="0.9"/>
<polygon points="403.5,483.8 402.4,482.7 407.0,480.7 408.7,482.3" fill="#c78645" stroke="#8e4a12" stroke-width="0.9"/>
<polygon points="446.4,570.5 454.4,564.4 455.7,570.8 447.5,577.1" fill="#a5652b" stroke="#8e4a12" stroke-width="0.9"/>
<polygon points="383.4,482.9 382.3,484.0 377.0,482.7 378.6,481.0" fill="#c78746" stroke="#8e4a12" stroke-width="0.9"/>
<polygon points="375.8,484.4 374.9,486.3 367.7,485.7 369.0,483.1" fill="#da9d59" stroke="#8e4a12" stroke-width="0.9"/>
<polygon points="328.1,581.2 334.0,584.1 339.0,583.0 333.4,580.0" fill="#ab692c" stroke="#8e4a12" stroke-width="0.9"/>
<polygon points="367.7,485.7 367.0,488.4 359.3,488.5 360.2,485.0" fill="#db9f5b" stroke="#8e4a12" stroke-width="0.9"/>
<polygon points="326.0,538.0 331.2,544.8 328.4,552.2 323.0,545.0" fill="#b17033" stroke="#8e4a12" stroke-width="0.9"/>
<polygon points="322.2,587.7 319.7,583.9 325.4,583.2 328.4,586.7" fill="#b77435" stroke="#8e4a12" stroke-width="0.9"/>
<polygon points="340.4,578.3 349.9,583.4 349.6,589.2 340.0,584.1" fill="#a06128" stroke="#8e4a12" stroke-width="0.9"/>
<polygon points="394.0,481.5 392.9,481.4 392.8,479.6 394.6,479.7" fill="#a46024" stroke="#8e4a12" stroke-width="0.9"/>
<polygon points="392.9,481.4 391.7,481.5 391.0,479.7 392.8,479.6" fill="#a35f24" stroke="#8e4a12" stroke-width="0.9"/>
<polygon points="351.9,488.6 351.6,493.0 345.4,493.9 345.7,488.9" fill="#db9f5b" stroke="#8e4a12" stroke-width="0.9"/>
<polygon points="395.2,481.7 394.0,481.5 394.6,479.7 396.3,479.9" fill="#a35f23" stroke="#8e4a12" stroke-width="0.9"/>
<polygon points="391.7,481.5 390.6,481.7 389.3,480.0 391.0,479.7" fill="#a35f23" stroke="#8e4a12" stroke-width="0.9"/>
<polygon points="328.4,552.2 335.2,558.7 333.3,565.8 326.3,559.1" fill="#b06f32" stroke="#8e4a12" stroke-width="0.9"/>
<polygon points="396.3,482.0 395.2,481.7 396.3,479.9 398.0,480.4" fill="#a15d22" stroke="#8e4a12" stroke-width="0.9"/>
<polygon points="404.3,484.9 403.5,483.8 408.7,482.3 410.0,484.0" fill="#c78746" stroke="#8e4a12" stroke-width="0.9"/>
<polygon points="427.0,491.3 426.6,487.7 433.9,487.6 434.4,492.0" fill="#db9f5b" stroke="#8e4a12" stroke-width="0.9"/>
<polygon points="390.6,481.7 389.5,482.0 387.6,480.5 389.3,480.0" fill="#a15d22" stroke="#8e4a12" stroke-width="0.9"/>
<polygon points="333.3,565.8 341.5,571.7 340.4,578.3 332.0,572.3" fill="#ab6a2f" stroke="#8e4a12" stroke-width="0.9"/>
<polygon points="417.5,595.7 428.4,592.5 427.9,596.7 417.1,599.8" fill="#774419" stroke="#8e4a12" stroke-width="0.9"/>
<polygon points="382.3,484.0 381.5,485.2 375.8,484.4 377.0,482.7" fill="#c88846" stroke="#8e4a12" stroke-width="0.9"/>
<polygon points="319.7,583.9 320.3,581.5 325.3,581.1 325.4,583.2" fill="#844817" stroke="#8e4a12" stroke-width="0.9"/>
<polygon points="397.3,482.4 396.3,482.0 398.0,480.4 399.6,481.0" fill="#a05c20" stroke="#8e4a12" stroke-width="0.9"/>
<polygon points="389.5,482.0 388.4,482.5 386.0,481.2 387.6,480.5" fill="#a05c21" stroke="#8e4a12" stroke-width="0.9"/>
<polygon points="327.9,592.2 322.2,587.7 328.4,586.7 334.3,591.2" fill="#b67436" stroke="#8e4a12" stroke-width="0.9"/>
<polygon points="411.6,487.8 410.9,485.9 418.0,485.1 418.9,487.8" fill="#da9d59" stroke="#8e4a12" stroke-width="0.9"/>
<polygon points="444.5,499.4 444.9,493.9 446.6,495.2 446.1,500.9" fill="#ae6c2f" stroke="#8e4a12" stroke-width="0.9"/>
<polygon points="359.3,488.5 359.0,492.1 351.6,493.0 351.9,488.6" fill="#dca05c" stroke="#8e4a12" stroke-width="0.9"/>
<polygon points="360.0,593.3 371.0,596.2 371.3,600.3 360.4,597.5" fill="#7c481b" stroke="#8e4a12" stroke-width="0.9"/>
<polygon points="398.3,482.9 397.3,482.4 399.6,481.0 401.1,481.8" fill="#9f5b20" stroke="#8e4a12" stroke-width="0.9"/>
<polygon points="388.4,482.5 387.5,483.0 384.6,482.0 386.0,481.2" fill="#a05b20" stroke="#8e4a12" stroke-width="0.9"/>
<polygon points="374.9,486.3 374.4,488.3 367.0,488.4 367.7,485.7" fill="#db9e5a" stroke="#8e4a12" stroke-width="0.9"/>
<polygon points="343.0,592.1 343.1,594.2 349.7,592.5 348.8,590.7" fill="#844817" stroke="#8e4a12" stroke-width="0.9"/>
<polygon points="405.0,486.2 404.3,484.9 410.0,484.0 410.9,485.9" fill="#c88948" stroke="#8e4a12" stroke-width="0.9"/>
<polygon points="419.2,490.6 418.9,487.8 426.6,487.7 427.0,491.3" fill="#db9f5b" stroke="#8e4a12" stroke-width="0.9"/>
<polygon points="399.1,483.5 398.3,482.9 401.1,481.8 402.4,482.7" fill="#9f5b20" stroke="#8e4a12" stroke-width="0.9"/>
<polygon points="450.2,501.3 450.7,495.2 450.0,492.8 449.6,498.8" fill="#86440f" stroke="#86440f" stroke-width="0.9"/>
<polygon points="381.5,485.2 380.9,486.5 374.9,486.3 375.8,484.4" fill="#c98a48" stroke="#8e4a12" stroke-width="0.9"/>
<polygon points="451.5,499.0 452.0,492.7 454.8,495.1 454.3,501.7" fill="#86440f" stroke="#86440f" stroke-width="0.9"/>
<polygon points="387.5,483.0 386.7,483.6 383.4,482.9 384.6,482.0" fill="#a05c20" stroke="#8e4a12" stroke-width="0.9"/>
<polygon points="341.1,495.1 341.7,500.6 340.1,502.1 339.4,496.5" fill="#b57233" stroke="#8e4a12" stroke-width="0.9"/>
<polygon points="367.0,488.4 366.8,491.2 359.0,492.1 359.3,488.5" fill="#dca05c" stroke="#8e4a12" stroke-width="0.9"/>
<polygon points="440.3,497.9 440.6,492.8 444.9,493.9 444.5,499.4" fill="#d89a56" stroke="#8e4a12" stroke-width="0.9"/>
<polygon points="399.9,484.2 399.1,483.5 402.4,482.7 403.5,483.8" fill="#a05c21" stroke="#8e4a12" stroke-width="0.9"/>
<polygon points="334.0,584.1 339.9,588.5 345.2,587.3 339.0,583.0" fill="#ba7637" stroke="#8e4a12" stroke-width="0.9"/>
<polygon points="386.7,483.6 386.0,484.3 382.3,484.0 383.4,482.9" fill="#a15d22" stroke="#8e4a12" stroke-width="0.9"/>
<polygon points="406.0,597.7 417.5,595.7 417.1,599.8 405.8,601.8" fill="#7c481b" stroke="#8e4a12" stroke-width="0.9"/>
<polygon points="411.8,489.8 411.6,487.8 418.9,487.8 419.2,490.6" fill="#db9e5a" stroke="#8e4a12" stroke-width="0.9"/>
<polygon points="405.4,487.5 405.0,486.2 410.9,485.9 411.6,487.8" fill="#ca8b49" stroke="#8e4a12" stroke-width="0.9"/>
<polygon points="335.3,496.5 336.0,502.6 336.7,500.1 336.0,494.1" fill="#86440f" stroke="#86440f" stroke-width="0.9"/>
<polygon points="428.2,586.6 438.3,582.4 438.6,588.2 428.4,592.5" fill="#a06128" stroke="#8e4a12" stroke-width="0.9"/>
<polygon points="449.6,498.8 450.0,492.8 452.0,492.7 451.5,499.0" fill="#86440f" stroke="#86440f" stroke-width="0.9"/>
<polygon points="334.0,494.1 334.7,500.4 332.0,503.1 331.2,496.6" fill="#86440f" stroke="#86440f" stroke-width="0.9"/>
<polygon points="434.1,496.4 434.4,492.0 440.6,492.8 440.3,497.9" fill="#db9f5b" stroke="#8e4a12" stroke-width="0.9"/>
<polygon points="371.0,596.2 382.6,597.9 382.7,602.0 371.3,600.3" fill="#7f4a1c" stroke="#8e4a12" stroke-width="0.9"/>
<polygon points="453.6,521.8 456.8,515.1 460.8,522.1 457.5,529.2" fill="#ab6b2f" stroke="#8e4a12" stroke-width="0.9"/>
<polygon points="452.6,508.1 454.3,501.7 458.7,508.3 456.8,515.1" fill="#a5652b" stroke="#8e4a12" stroke-width="0.9"/>
<polygon points="320.3,581.5 323.7,581.4 328.1,581.2 325.3,581.1" fill="#8e4a12" stroke="#8e4a12" stroke-width="0.9"/>
<polygon points="380.9,486.5 380.5,487.8 374.4,488.3 374.9,486.3" fill="#cb8c4b" stroke="#8e4a12" stroke-width="0.9"/>
<polygon points="400.4,484.9 399.9,484.2 403.5,483.8 404.3,484.9" fill="#a25e23" stroke="#8e4a12" stroke-width="0.9"/>
<polygon points="345.4,493.9 346.0,499.0 341.7,500.6 341.1,495.1" fill="#da9d59" stroke="#8e4a12" stroke-width="0.9"/>
<polygon points="339.9,588.5 343.0,592.1 348.8,590.7 345.2,587.3" fill="#bc7838" stroke="#8e4a12" stroke-width="0.9"/>
<polygon points="393.9,480.8 392.9,480.7 392.9,481.4 394.0,481.5" fill="#8e4a12" stroke="#8e4a12" stroke-width="0.9"/>
<polygon points="392.9,480.7 391.9,480.8 391.7,481.5 392.9,481.4" fill="#8e4a12" stroke="#8e4a12" stroke-width="0.9"/>
<polygon points="374.4,488.3 374.2,490.2 366.8,491.2 367.0,488.4" fill="#dc9f5b" stroke="#8e4a12" stroke-width="0.9"/>
<polygon points="386.0,484.3 385.5,485.1 381.5,485.2 382.3,484.0" fill="#a36024" stroke="#8e4a12" stroke-width="0.9"/>
<polygon points="394.8,480.9 393.9,480.8 394.0,481.5 395.2,481.7" fill="#8e4a12" stroke="#8e4a12" stroke-width="0.9"/>
<polygon points="391.9,480.8 391.0,481.0 390.6,481.7 391.7,481.5" fill="#8e4a12" stroke="#8e4a12" stroke-width="0.9"/>
<polygon points="452.8,535.8 457.5,529.2 461.0,536.4 456.1,543.4" fill="#b06f32" stroke="#8e4a12" stroke-width="0.9"/>
<polygon points="395.8,481.2 394.8,480.9 395.2,481.7 396.3,482.0" fill="#8e4a12" stroke="#8e4a12" stroke-width="0.9"/>
<polygon points="391.0,481.0 390.0,481.2 389.5,482.0 390.6,481.7" fill="#8e4a12" stroke="#8e4a12" stroke-width="0.9"/>
<polygon points="426.7,494.9 427.0,491.3 434.4,492.0 434.1,496.4" fill="#dca05c" stroke="#8e4a12" stroke-width="0.9"/>
<polygon points="349.9,583.4 360.2,587.4 360.0,593.3 349.6,589.2" fill="#a4652b" stroke="#8e4a12" stroke-width="0.9"/>
<polygon points="396.6,481.5 395.8,481.2 396.3,482.0 397.3,482.4" fill="#8e4a12" stroke="#8e4a12" stroke-width="0.9"/>
<polygon points="394.3,598.4 406.0,597.7 405.8,601.8 394.3,602.5" fill="#804a1c" stroke="#8e4a12" stroke-width="0.9"/>
<polygon points="390.0,481.2 389.2,481.6 388.4,482.5 389.5,482.0" fill="#8e4a12" stroke="#8e4a12" stroke-width="0.9"/>
<polygon points="351.6,493.0 352.1,497.4 346.0,499.0 345.4,493.9" fill="#dca05d" stroke="#8e4a12" stroke-width="0.9"/>
<polygon points="334.0,595.1 327.9,592.2 334.3,591.2 340.2,594.1" fill="#a76429" stroke="#8e4a12" stroke-width="0.9"/>
<polygon points="382.6,597.9 394.3,598.4 394.3,602.5 382.7,602.0" fill="#814b1c" stroke="#8e4a12" stroke-width="0.9"/>
<polygon points="400.9,485.7 400.4,484.9 404.3,484.9 405.0,486.2" fill="#a56125" stroke="#8e4a12" stroke-width="0.9"/>
<polygon points="449.9,549.7 456.1,543.4 458.9,550.6 452.4,557.3" fill="#b27033" stroke="#8e4a12" stroke-width="0.9"/>
<polygon points="437.4,575.7 446.4,570.5 447.5,577.1 438.3,582.4" fill="#ab6b2f" stroke="#8e4a12" stroke-width="0.9"/>
<polygon points="336.0,494.1 336.7,500.1 334.7,500.4 334.0,494.1" fill="#86440f" stroke="#86440f" stroke-width="0.9"/>
<polygon points="397.4,481.9 396.6,481.5 397.3,482.4 398.3,482.9" fill="#8e4a12" stroke="#8e4a12" stroke-width="0.9"/>
<polygon points="385.5,485.1 385.1,485.9 380.9,486.5 381.5,485.2" fill="#a66326" stroke="#8e4a12" stroke-width="0.9"/>
<polygon points="419.0,493.4 419.2,490.6 427.0,491.3 426.7,494.9" fill="#dca05c" stroke="#8e4a12" stroke-width="0.9"/>
<polygon points="405.6,488.8 405.4,487.5 411.6,487.8 411.8,489.8" fill="#cb8d4b" stroke="#8e4a12" stroke-width="0.9"/>
<polygon points="389.2,481.6 388.4,482.0 387.5,483.0 388.4,482.5" fill="#8e4a12" stroke="#8e4a12" stroke-width="0.9"/>
<polygon points="444.7,563.2 452.4,557.3 454.4,564.4 446.4,570.5" fill="#b16f33" stroke="#8e4a12" stroke-width="0.9"/>
<polygon points="332.0,503.1 334.0,509.5 329.8,516.6 327.6,509.8" fill="#ac6b30" stroke="#8e4a12" stroke-width="0.9"/>
<polygon points="329.8,516.6 333.2,523.2 329.4,530.7 325.8,523.7" fill="#b37134" stroke="#8e4a12" stroke-width="0.9"/>
<polygon points="359.0,492.1 359.4,495.7 352.1,497.4 351.6,493.0" fill="#dda25f" stroke="#8e4a12" stroke-width="0.9"/>
<polygon points="380.5,487.8 380.4,489.1 374.2,490.2 374.4,488.3" fill="#cd8f4d" stroke="#8e4a12" stroke-width="0.9"/>
<polygon points="398.1,482.4 397.4,481.9 398.3,482.9 399.1,483.5" fill="#8e4a12" stroke="#8e4a12" stroke-width="0.9"/>
<polygon points="388.4,482.0 387.7,482.6 386.7,483.6 387.5,483.0" fill="#8e4a12" stroke="#8e4a12" stroke-width="0.9"/>
<polygon points="329.4,530.7 334.4,537.2 331.2,544.8 326.0,538.0" fill="#b77436" stroke="#8e4a12" stroke-width="0.9"/>
<polygon points="366.8,491.2 367.1,494.0 359.4,495.7 359.0,492.1" fill="#dda25f" stroke="#8e4a12" stroke-width="0.9"/>
<polygon points="411.6,491.8 411.8,489.8 419.2,490.6 419.0,493.4" fill="#dca05c" stroke="#8e4a12" stroke-width="0.9"/>
<polygon points="401.1,486.6 400.9,485.7 405.0,486.2 405.4,487.5" fill="#a86528" stroke="#8e4a12" stroke-width="0.9"/>
<polygon points="341.5,571.7 350.8,576.7 349.9,583.4 340.4,578.3" fill="#b06f32" stroke="#8e4a12" stroke-width="0.9"/>
<polygon points="398.7,483.0 398.1,482.4 399.1,483.5 399.9,484.2" fill="#8e4a12" stroke="#8e4a12" stroke-width="0.9"/>
<polygon points="385.1,485.9 384.8,486.8 380.5,487.8 380.9,486.5" fill="#a9662a" stroke="#8e4a12" stroke-width="0.9"/>
<polygon points="387.7,482.6 387.2,483.2 386.0,484.3 386.7,483.6" fill="#8e4a12" stroke="#8e4a12" stroke-width="0.9"/>
<polygon points="331.2,544.8 337.7,551.1 335.2,558.7 328.4,552.2" fill="#b87637" stroke="#8e4a12" stroke-width="0.9"/>
<polygon points="394.0,477.9 392.9,477.9 392.9,480.7 393.9,480.8" fill="#a56125" stroke="#8e4a12" stroke-width="0.9"/>
<polygon points="392.9,477.9 391.7,477.9 391.9,480.8 392.9,480.7" fill="#a56125" stroke="#8e4a12" stroke-width="0.9"/>
<polygon points="374.2,490.2 374.4,492.2 367.1,494.0 366.8,491.2" fill="#dda15e" stroke="#8e4a12" stroke-width="0.9"/>
<polygon points="395.2,478.1 394.0,477.9 393.9,480.8 394.8,480.9" fill="#a46125" stroke="#8e4a12" stroke-width="0.9"/>
<polygon points="391.7,477.9 390.6,478.1 391.0,481.0 391.9,480.8" fill="#a46024" stroke="#8e4a12" stroke-width="0.9"/>
<polygon points="335.2,558.7 343.2,564.4 341.5,571.7 333.3,565.8" fill="#b67436" stroke="#8e4a12" stroke-width="0.9"/>
<polygon points="396.3,478.4 395.2,478.1 394.8,480.9 395.8,481.2" fill="#a35f23" stroke="#8e4a12" stroke-width="0.9"/>
<polygon points="390.6,478.1 389.5,478.4 390.0,481.2 391.0,481.0" fill="#a25e22" stroke="#8e4a12" stroke-width="0.9"/>
<polygon points="405.5,490.1 405.6,488.8 411.8,489.8 411.6,491.8" fill="#ce904e" stroke="#8e4a12" stroke-width="0.9"/>
<polygon points="399.2,483.7 398.7,483.0 399.9,484.2 400.4,484.9" fill="#8e4a12" stroke="#8e4a12" stroke-width="0.9"/>
<polygon points="443.1,504.8 444.5,499.4 446.1,500.9 444.6,506.4" fill="#b97636" stroke="#8e4a12" stroke-width="0.9"/>
<polygon points="397.3,478.8 396.3,478.4 395.8,481.2 396.6,481.5" fill="#a05c20" stroke="#8e4a12" stroke-width="0.9"/>
<polygon points="387.2,483.2 386.7,483.8 385.5,485.1 386.0,484.3" fill="#8e4a12" stroke="#8e4a12" stroke-width="0.9"/>
<polygon points="401.2,487.5 401.1,486.6 405.4,487.5 405.6,488.8" fill="#ab692c" stroke="#8e4a12" stroke-width="0.9"/>
<polygon points="389.5,478.4 388.5,478.9 389.2,481.6 390.0,481.2" fill="#9e5a1f" stroke="#8e4a12" stroke-width="0.9"/>
<polygon points="380.4,489.1 380.6,490.4 374.4,492.2 374.2,490.2" fill="#cf914f" stroke="#8e4a12" stroke-width="0.9"/>
<polygon points="384.8,486.8 384.8,487.7 380.4,489.1 380.5,487.8" fill="#ad6b2d" stroke="#8e4a12" stroke-width="0.9"/>
<polygon points="417.3,589.8 428.2,586.6 428.4,592.5 417.5,595.7" fill="#a5652b" stroke="#8e4a12" stroke-width="0.9"/>
<polygon points="398.2,479.3 397.3,478.8 396.6,481.5 397.4,481.9" fill="#9c581d" stroke="#8e4a12" stroke-width="0.9"/>
<polygon points="394.4,473.9 392.8,473.9 392.9,477.9 394.0,477.9" fill="#be8040" stroke="#8e4a12" stroke-width="0.9"/>
<polygon points="392.8,473.9 391.3,474.0 391.7,477.9 392.9,477.9" fill="#be7f40" stroke="#8e4a12" stroke-width="0.9"/>
<polygon points="388.5,478.9 387.6,479.4 388.4,482.0 389.2,481.6" fill="#9a561c" stroke="#8e4a12" stroke-width="0.9"/>
<polygon points="395.9,474.2 394.4,473.9 394.0,477.9 395.2,478.1" fill="#be7f3f" stroke="#8e4a12" stroke-width="0.9"/>
<polygon points="399.6,484.3 399.2,483.7 400.4,484.9 400.9,485.7" fill="#8e4a12" stroke="#8e4a12" stroke-width="0.9"/>
<polygon points="391.3,474.0 389.8,474.2 390.6,478.1 391.7,477.9" fill="#bd7e3e" stroke="#8e4a12" stroke-width="0.9"/>
<polygon points="386.7,483.8 386.4,484.5 385.1,485.9 385.5,485.1" fill="#8e4a12" stroke="#8e4a12" stroke-width="0.9"/>
<polygon points="397.3,474.5 395.9,474.2 395.2,478.1 396.3,478.4" fill="#bc7d3e" stroke="#8e4a12" stroke-width="0.9"/>
<polygon points="389.8,474.2 388.4,474.6 389.5,478.4 390.6,478.1" fill="#bb7b3c" stroke="#8e4a12" stroke-width="0.9"/>
<polygon points="399.0,479.9 398.2,479.3 397.4,481.9 398.1,482.4" fill="#975319" stroke="#8e4a12" stroke-width="0.9"/>
<polygon points="394.7,469.9 392.8,469.9 392.8,473.9 394.4,473.9" fill="#cc8f50" stroke="#8e4a12" stroke-width="0.9"/>
<polygon points="392.8,469.9 390.9,470.0 391.3,474.0 392.8,473.9" fill="#cc8e4f" stroke="#8e4a12" stroke-width="0.9"/>
<polygon points="438.9,502.8 440.3,497.9 444.5,499.4 443.1,504.8" fill="#da9d59" stroke="#8e4a12" stroke-width="0.9"/>
<polygon points="323.7,581.4 329.8,584.2 334.0,584.1 328.1,581.2" fill="#955219" stroke="#8e4a12" stroke-width="0.9"/>
<polygon points="387.6,479.4 386.8,480.0 387.7,482.6 388.4,482.0" fill="#955118" stroke="#8e4a12" stroke-width="0.9"/>
<polygon points="360.2,587.4 371.2,590.3 371.0,596.2 360.0,593.3" fill="#a8672d" stroke="#8e4a12" stroke-width="0.9"/>
<polygon points="341.7,500.6 343.4,505.9 341.9,507.7 340.1,502.1" fill="#bf7b3a" stroke="#8e4a12" stroke-width="0.9"/>
<polygon points="396.6,470.2 394.7,469.9 394.4,473.9 395.9,474.2" fill="#ca8e4e" stroke="#8e4a12" stroke-width="0.9"/>
<polygon points="401.2,488.3 401.2,487.5 405.6,488.8 405.5,490.1" fill="#af6d30" stroke="#8e4a12" stroke-width="0.9"/>
<polygon points="390.9,470.0 389.0,470.3 389.8,474.2 391.3,474.0" fill="#ca8c4b" stroke="#8e4a12" stroke-width="0.9"/>
<polygon points="398.6,475.1 397.3,474.5 396.3,478.4 397.3,478.8" fill="#ba7a3b" stroke="#8e4a12" stroke-width="0.9"/>
<polygon points="448.6,507.3 450.2,501.3 449.6,498.8 448.0,504.7" fill="#86440f" stroke="#86440f" stroke-width="0.9"/>
<polygon points="411.1,493.7 411.6,491.8 419.0,493.4 418.3,496.1" fill="#dda25e" stroke="#8e4a12" stroke-width="0.9"/>
<polygon points="388.4,474.6 387.1,475.2 388.5,478.9 389.5,478.4" fill="#b97839" stroke="#8e4a12" stroke-width="0.9"/>
<polygon points="418.3,496.1 419.0,493.4 426.7,494.9 425.8,498.4" fill="#dda25f" stroke="#8e4a12" stroke-width="0.9"/>
<polygon points="399.8,485.0 399.6,484.3 400.9,485.7 401.1,486.6" fill="#8e4a12" stroke="#8e4a12" stroke-width="0.9"/>
<polygon points="384.8,487.7 384.9,488.5 380.6,490.4 380.4,489.1" fill="#b16f31" stroke="#8e4a12" stroke-width="0.9"/>
<polygon points="432.9,500.7 434.1,496.4 440.3,497.9 438.9,502.8" fill="#dca15d" stroke="#8e4a12" stroke-width="0.9"/>
<polygon points="398.4,470.7 396.6,470.2 395.9,474.2 397.3,474.5" fill="#c98c4b" stroke="#8e4a12" stroke-width="0.9"/>
<polygon points="425.8,498.4 426.7,494.9 434.1,496.4 432.9,500.7" fill="#dda25f" stroke="#8e4a12" stroke-width="0.9"/>
<polygon points="405.1,491.4 405.5,490.1 411.6,491.8 411.1,493.7" fill="#d09351" stroke="#8e4a12" stroke-width="0.9"/>
<polygon points="399.8,480.5 399.0,479.9 398.1,482.4 398.7,483.0" fill="#914d15" stroke="#8e4a12" stroke-width="0.9"/>
<polygon points="386.4,484.5 386.2,485.2 384.8,486.8 385.1,485.9" fill="#8e4a12" stroke="#8e4a12" stroke-width="0.9"/>
<polygon points="389.0,470.3 387.2,470.8 388.4,474.6 389.8,474.2" fill="#c88a49" stroke="#8e4a12" stroke-width="0.9"/>
<polygon points="386.8,480.0 386.1,480.7 387.2,483.2 387.7,482.6" fill="#904c13" stroke="#8e4a12" stroke-width="0.9"/>
<polygon points="449.9,505.1 451.5,499.0 454.3,501.7 452.6,508.1" fill="#8a4812" stroke="#86440f" stroke-width="0.9"/>
<polygon points="399.9,475.7 398.6,475.1 397.3,478.8 398.2,479.3" fill="#b77637" stroke="#8e4a12" stroke-width="0.9"/>
<polygon points="394.9,467.0 392.8,466.9 392.8,469.9 394.7,469.9" fill="#c58442" stroke="#8e4a12" stroke-width="0.9"/>
<polygon points="374.4,492.2 375.1,494.2 368.0,496.7 367.1,494.0" fill="#dea462" stroke="#8e4a12" stroke-width="0.9"/>
<polygon points="392.8,466.9 390.6,467.0 390.9,470.0 392.8,469.9" fill="#c58442" stroke="#8e4a12" stroke-width="0.9"/>
<polygon points="380.6,490.4 381.0,491.7 375.1,494.2 374.4,492.2" fill="#d19553" stroke="#8e4a12" stroke-width="0.9"/>
<polygon points="387.1,475.2 385.9,475.9 387.6,479.4 388.5,478.9" fill="#b67435" stroke="#8e4a12" stroke-width="0.9"/>
<polygon points="337.4,594.9 334.0,595.1 340.2,594.1 343.1,594.2" fill="#8e4a12" stroke="#8e4a12" stroke-width="0.9"/>
<polygon points="397.0,467.3 394.9,467.0 394.7,469.9 396.6,470.2" fill="#c48241" stroke="#8e4a12" stroke-width="0.9"/>
<polygon points="400.1,471.4 398.4,470.7 397.3,474.5 398.6,475.1" fill="#c78847" stroke="#8e4a12" stroke-width="0.9"/>
<polygon points="390.6,467.0 388.6,467.4 389.0,470.3 390.9,470.0" fill="#c38240" stroke="#8e4a12" stroke-width="0.9"/>
<polygon points="367.1,494.0 368.0,496.7 360.5,499.2 359.4,495.7" fill="#dea462" stroke="#8e4a12" stroke-width="0.9"/>
<polygon points="387.2,470.8 385.6,471.5 387.1,475.2 388.4,474.6" fill="#c68645" stroke="#8e4a12" stroke-width="0.9"/>
<polygon points="399.9,485.8 399.8,485.0 401.1,486.6 401.2,487.5" fill="#8e4a12" stroke="#8e4a12" stroke-width="0.9"/>
<polygon points="346.0,499.0 347.5,503.9 343.4,505.9 341.7,500.6" fill="#db9f5b" stroke="#8e4a12" stroke-width="0.9"/>
<polygon points="400.3,481.3 399.8,480.5 398.7,483.0 399.2,483.7" fill="#8e4a12" stroke="#8e4a12" stroke-width="0.9"/>
<polygon points="400.9,489.2 401.2,488.3 405.5,490.1 405.1,491.4" fill="#b37234" stroke="#8e4a12" stroke-width="0.9"/>
<polygon points="386.1,480.7 385.6,481.5 386.7,483.8 387.2,483.2" fill="#8e4a12" stroke="#8e4a12" stroke-width="0.9"/>
<polygon points="386.2,485.2 386.1,485.9 384.8,487.7 384.8,486.8" fill="#8e4a12" stroke="#8e4a12" stroke-width="0.9"/>
<polygon points="359.4,495.7 360.5,499.2 353.5,501.6 352.1,497.4" fill="#dea462" stroke="#8e4a12" stroke-width="0.9"/>
<polygon points="399.0,467.8 397.0,467.3 396.6,470.2 398.4,470.7" fill="#c38140" stroke="#8e4a12" stroke-width="0.9"/>
<polygon points="401.0,476.5 399.9,475.7 398.2,479.3 399.0,479.9" fill="#b37133" stroke="#8e4a12" stroke-width="0.9"/>
<polygon points="352.1,497.4 353.5,501.6 347.5,503.9 346.0,499.0" fill="#dea461" stroke="#8e4a12" stroke-width="0.9"/>
<polygon points="388.6,467.4 386.6,468.0 387.2,470.8 389.0,470.3" fill="#c27f3e" stroke="#8e4a12" stroke-width="0.9"/>
<polygon points="384.9,488.5 385.1,489.4 381.0,491.7 380.6,490.4" fill="#b57435" stroke="#8e4a12" stroke-width="0.9"/>
<polygon points="385.9,475.9 384.8,476.7 386.8,480.0 387.6,479.4" fill="#b16f31" stroke="#8e4a12" stroke-width="0.9"/>
<polygon points="336.0,502.6 337.9,508.6 338.5,506.0 336.7,500.1" fill="#86440f" stroke="#86440f" stroke-width="0.9"/>
<polygon points="401.6,472.2 400.1,471.4 398.6,475.1 399.9,475.7" fill="#c48544" stroke="#8e4a12" stroke-width="0.9"/>
<polygon points="427.4,579.9 437.4,575.7 438.3,582.4 428.2,586.6" fill="#b16f33" stroke="#8e4a12" stroke-width="0.9"/>
<polygon points="448.0,504.7 449.6,498.8 451.5,499.0 449.9,505.1" fill="#86440f" stroke="#86440f" stroke-width="0.9"/>
<polygon points="385.6,471.5 384.1,472.4 385.9,475.9 387.1,475.2" fill="#c38242" stroke="#8e4a12" stroke-width="0.9"/>
<polygon points="400.7,482.1 400.3,481.3 399.2,483.7 399.6,484.3" fill="#8e4a12" stroke="#8e4a12" stroke-width="0.9"/>
<polygon points="399.8,486.5 399.9,485.8 401.2,487.5 401.2,488.3" fill="#8e4a12" stroke="#8e4a12" stroke-width="0.9"/>
<polygon points="400.9,468.6 399.0,467.8 398.4,470.7 400.1,471.4" fill="#c17e3d" stroke="#8e4a12" stroke-width="0.9"/>
<polygon points="405.9,591.8 417.3,589.8 417.5,595.7 406.0,597.7" fill="#a8682d" stroke="#8e4a12" stroke-width="0.9"/>
<polygon points="385.6,481.5 385.2,482.3 386.4,484.5 386.7,483.8" fill="#8e4a12" stroke="#8e4a12" stroke-width="0.9"/>
<polygon points="334.7,500.4 336.6,506.4 334.0,509.5 332.0,503.1" fill="#8d4a14" stroke="#86440f" stroke-width="0.9"/>
<polygon points="317.0,587.7 315.0,583.7 319.7,583.9 322.2,587.7" fill="#ab682d" stroke="#8e4a12" stroke-width="0.9"/>
<polygon points="404.5,492.7 405.1,491.4 411.1,493.7 410.2,495.6" fill="#d29755" stroke="#8e4a12" stroke-width="0.9"/>
<polygon points="401.9,477.4 401.0,476.5 399.0,479.9 399.8,480.5" fill="#af6c2e" stroke="#8e4a12" stroke-width="0.9"/>
<polygon points="386.1,485.9 386.2,486.7 384.9,488.5 384.8,487.7" fill="#8e4a12" stroke="#8e4a12" stroke-width="0.9"/>
<polygon points="386.6,468.0 384.7,468.8 385.6,471.5 387.2,470.8" fill="#bf7c3b" stroke="#8e4a12" stroke-width="0.9"/>
<polygon points="384.8,476.7 383.9,477.6 386.1,480.7 386.8,480.0" fill="#ac692c" stroke="#8e4a12" stroke-width="0.9"/>
<polygon points="400.5,490.0 400.9,489.2 405.1,491.4 404.5,492.7" fill="#b77638" stroke="#8e4a12" stroke-width="0.9"/>
<polygon points="371.2,590.3 382.6,592.1 382.6,597.9 371.0,596.2" fill="#aa692e" stroke="#8e4a12" stroke-width="0.9"/>
<polygon points="315.0,583.7 316.1,581.0 320.3,581.5 319.7,583.9" fill="#834817" stroke="#8e4a12" stroke-width="0.9"/>
<polygon points="449.6,514.2 452.6,508.1 456.8,515.1 453.6,521.8" fill="#ad6c30" stroke="#8e4a12" stroke-width="0.9"/>
<polygon points="381.0,491.7 381.7,492.9 376.0,496.0 375.1,494.2" fill="#d49a59" stroke="#8e4a12" stroke-width="0.9"/>
<polygon points="449.2,528.0 453.6,521.8 457.5,529.2 452.8,535.8" fill="#b37234" stroke="#8e4a12" stroke-width="0.9"/>
<polygon points="403.0,473.2 401.6,472.2 399.9,475.7 401.0,476.5" fill="#c08040" stroke="#8e4a12" stroke-width="0.9"/>
<polygon points="385.1,489.4 385.6,490.2 381.7,492.9 381.0,491.7" fill="#b8783a" stroke="#8e4a12" stroke-width="0.9"/>
<polygon points="394.8,466.2 392.8,466.1 392.8,466.9 394.9,467.0" fill="#8e4a12" stroke="#8e4a12" stroke-width="0.9"/>
<polygon points="410.2,495.6 411.1,493.7 418.3,496.1 417.0,498.7" fill="#dea462" stroke="#8e4a12" stroke-width="0.9"/>
<polygon points="392.8,466.1 390.8,466.2 390.6,467.0 392.8,466.9" fill="#8e4a12" stroke="#8e4a12" stroke-width="0.9"/>
<polygon points="401.0,482.9 400.7,482.1 399.6,484.3 399.8,485.0" fill="#8e4a12" stroke="#8e4a12" stroke-width="0.9"/>
<polygon points="350.8,576.7 360.9,580.6 360.2,587.4 349.9,583.4" fill="#b57335" stroke="#8e4a12" stroke-width="0.9"/>
<polygon points="384.1,472.4 382.7,473.4 384.8,476.7 385.9,475.9" fill="#be7d3d" stroke="#8e4a12" stroke-width="0.9"/>
<polygon points="399.6,487.2 399.8,486.5 401.2,488.3 400.9,489.2" fill="#8e4a12" stroke="#8e4a12" stroke-width="0.9"/>
<polygon points="402.6,469.5 400.9,468.6 400.1,471.4 401.6,472.2" fill="#bd7a3a" stroke="#8e4a12" stroke-width="0.9"/>
<polygon points="396.7,466.5 394.8,466.2 394.9,467.0 397.0,467.3" fill="#8e4a12" stroke="#8e4a12" stroke-width="0.9"/>
<polygon points="446.9,541.8 452.8,535.8 456.1,543.4 449.9,549.7" fill="#b77537" stroke="#8e4a12" stroke-width="0.9"/>
<polygon points="385.2,482.3 385.0,483.1 386.2,485.2 386.4,484.5" fill="#8e4a12" stroke="#8e4a12" stroke-width="0.9"/>
<polygon points="390.8,466.2 388.8,466.5 388.6,467.4 390.6,467.0" fill="#8e4a12" stroke="#8e4a12" stroke-width="0.9"/>
<polygon points="435.9,568.2 444.7,563.2 446.4,570.5 437.4,575.7" fill="#b77536" stroke="#8e4a12" stroke-width="0.9"/>
<polygon points="386.2,486.7 386.4,487.4 385.1,489.4 384.9,488.5" fill="#8e4a12" stroke="#8e4a12" stroke-width="0.9"/>
<polygon points="402.7,478.4 401.9,477.4 399.8,480.5 400.3,481.3" fill="#a96629" stroke="#8e4a12" stroke-width="0.9"/>
<polygon points="384.7,468.8 383.0,469.7 384.1,472.4 385.6,471.5" fill="#bc7837" stroke="#8e4a12" stroke-width="0.9"/>
<polygon points="442.5,555.4 449.9,549.7 452.4,557.3 444.7,563.2" fill="#b97638" stroke="#8e4a12" stroke-width="0.9"/>
<polygon points="375.1,494.2 376.0,496.0 369.3,499.3 368.0,496.7" fill="#dfa765" stroke="#8e4a12" stroke-width="0.9"/>
<polygon points="383.9,477.6 383.2,478.6 385.6,481.5 386.1,480.7" fill="#a76326" stroke="#8e4a12" stroke-width="0.9"/>
<polygon points="336.7,500.1 338.5,506.0 336.6,506.4 334.7,500.4" fill="#86440f" stroke="#86440f" stroke-width="0.9"/>
<polygon points="398.6,467.0 396.7,466.5 397.0,467.3 399.0,467.8" fill="#8e4a12" stroke="#8e4a12" stroke-width="0.9"/>
<polygon points="388.8,466.5 387.0,467.1 386.6,468.0 388.6,467.4" fill="#8e4a12" stroke="#8e4a12" stroke-width="0.9"/>
<polygon points="400.0,490.8 400.5,490.0 404.5,492.7 403.7,493.9" fill="#bb7b3c" stroke="#8e4a12" stroke-width="0.9"/>
<polygon points="394.3,592.5 405.9,591.8 406.0,597.7 394.3,598.4" fill="#aa692e" stroke="#8e4a12" stroke-width="0.9"/>
<polygon points="401.1,483.8 401.0,482.9 399.8,485.0 399.9,485.8" fill="#8e4a12" stroke="#8e4a12" stroke-width="0.9"/>
<polygon points="417.0,498.7 418.3,496.1 425.8,498.4 424.1,501.8" fill="#dea562" stroke="#8e4a12" stroke-width="0.9"/>
<polygon points="404.2,474.3 403.0,473.2 401.0,476.5 401.9,477.4" fill="#bc7b3b" stroke="#8e4a12" stroke-width="0.9"/>
<polygon points="382.6,592.1 394.3,592.5 394.3,598.4 382.6,597.9" fill="#ab6a2f" stroke="#8e4a12" stroke-width="0.9"/>
<polygon points="399.3,487.9 399.6,487.2 400.9,489.2 400.5,490.0" fill="#8e4a12" stroke="#8e4a12" stroke-width="0.9"/>
<polygon points="385.6,490.2 386.1,491.0 382.5,494.1 381.7,492.9" fill="#bc7e40" stroke="#8e4a12" stroke-width="0.9"/>
<polygon points="385.0,483.1 384.9,484.0 386.1,485.9 386.2,485.2" fill="#8e4a12" stroke="#8e4a12" stroke-width="0.9"/>
<polygon points="403.7,493.9 404.5,492.7 410.2,495.6 409.0,497.4" fill="#d59b5b" stroke="#8e4a12" stroke-width="0.9"/>
<polygon points="382.7,473.4 381.6,474.6 383.9,477.6 384.8,476.7" fill="#ba7838" stroke="#8e4a12" stroke-width="0.9"/>
<polygon points="386.4,487.4 386.8,488.0 385.6,490.2 385.1,489.4" fill="#8e4a12" stroke="#8e4a12" stroke-width="0.9"/>
<polygon points="329.8,584.2 335.5,588.7 339.9,588.5 334.0,584.1" fill="#a56227" stroke="#8e4a12" stroke-width="0.9"/>
<polygon points="404.1,470.6 402.6,469.5 401.6,472.2 403.0,473.2" fill="#b97535" stroke="#8e4a12" stroke-width="0.9"/>
<polygon points="400.4,467.6 398.6,467.0 399.0,467.8 400.9,468.6" fill="#8e4a12" stroke="#8e4a12" stroke-width="0.9"/>
<polygon points="334.0,509.5 337.2,515.6 333.2,523.2 329.8,516.6" fill="#b47235" stroke="#8e4a12" stroke-width="0.9"/>
<polygon points="403.2,479.5 402.7,478.4 400.3,481.3 400.7,482.1" fill="#a35f23" stroke="#8e4a12" stroke-width="0.9"/>
<polygon points="333.2,523.2 337.9,529.3 334.4,537.2 329.4,530.7" fill="#ba7738" stroke="#8e4a12" stroke-width="0.9"/>
<polygon points="381.7,492.9 382.5,494.1 377.3,497.8 376.0,496.0" fill="#d69e5f" stroke="#8e4a12" stroke-width="0.9"/>
<polygon points="387.0,467.1 385.2,467.8 384.7,468.8 386.6,468.0" fill="#8e4a12" stroke="#8e4a12" stroke-width="0.9"/>
<polygon points="383.0,469.7 381.6,470.9 382.7,473.4 384.1,472.4" fill="#b67232" stroke="#8e4a12" stroke-width="0.9"/>
<polygon points="338.0,592.5 337.4,594.9 343.1,594.2 343.0,592.1" fill="#844817" stroke="#8e4a12" stroke-width="0.9"/>
<polygon points="343.2,564.4 352.1,569.2 350.8,576.7 341.5,571.7" fill="#bc7939" stroke="#8e4a12" stroke-width="0.9"/>
<polygon points="322.5,592.3 317.0,587.7 322.2,587.7 327.9,592.2" fill="#a7652a" stroke="#8e4a12" stroke-width="0.9"/>
<polygon points="383.2,478.6 382.7,479.7 385.2,482.3 385.6,481.5" fill="#a05c21" stroke="#8e4a12" stroke-width="0.9"/>
<polygon points="368.0,496.7 369.3,499.3 362.3,502.6 360.5,499.2" fill="#dfa765" stroke="#8e4a12" stroke-width="0.9"/>
<polygon points="334.4,537.2 340.5,543.1 337.7,551.1 331.2,544.8" fill="#be7a3a" stroke="#8e4a12" stroke-width="0.9"/>
<polygon points="401.0,484.6 401.1,483.8 399.9,485.8 399.8,486.5" fill="#8e4a12" stroke="#8e4a12" stroke-width="0.9"/>
<polygon points="398.8,488.5 399.3,487.9 400.5,490.0 400.0,490.8" fill="#8e4a12" stroke="#8e4a12" stroke-width="0.9"/>
<polygon points="399.3,491.5 400.0,490.8 403.7,493.9 402.6,494.9" fill="#be8143" stroke="#8e4a12" stroke-width="0.9"/>
<polygon points="440.6,509.9 443.1,504.8 444.6,506.4 442.1,511.8" fill="#c27e3d" stroke="#8e4a12" stroke-width="0.9"/>
<polygon points="424.1,501.8 425.8,498.4 432.9,500.7 430.9,504.8" fill="#dea562" stroke="#8e4a12" stroke-width="0.9"/>
<polygon points="337.7,551.1 345.3,556.5 343.2,564.4 335.2,558.7" fill="#be7b3b" stroke="#8e4a12" stroke-width="0.9"/>
<polygon points="384.9,484.0 385.0,484.8 386.2,486.7 386.1,485.9" fill="#8e4a12" stroke="#8e4a12" stroke-width="0.9"/>
<polygon points="386.8,488.0 387.3,488.7 386.1,491.0 385.6,490.2" fill="#8e4a12" stroke="#8e4a12" stroke-width="0.9"/>
<polygon points="386.1,491.0 386.9,491.6 383.6,495.2 382.5,494.1" fill="#c08547" stroke="#8e4a12" stroke-width="0.9"/>
<polygon points="405.1,475.5 404.2,474.3 401.9,477.4 402.7,478.4" fill="#b77536" stroke="#8e4a12" stroke-width="0.9"/>
<polygon points="316.1,581.0 320.0,580.7 323.7,581.4 320.3,581.5" fill="#8e4a12" stroke="#8e4a12" stroke-width="0.9"/>
<polygon points="402.0,468.5 400.4,467.6 400.9,468.6 402.6,469.5" fill="#8e4a12" stroke="#8e4a12" stroke-width="0.9"/>
<polygon points="381.6,474.6 380.7,475.8 383.2,478.6 383.9,477.6" fill="#b57132" stroke="#8e4a12" stroke-width="0.9"/>
<polygon points="409.0,497.4 410.2,495.6 417.0,498.7 415.3,501.2" fill="#dfa766" stroke="#8e4a12" stroke-width="0.9"/>
<polygon points="385.2,467.8 383.6,468.7 383.0,469.7 384.7,468.8" fill="#8e4a12" stroke="#8e4a12" stroke-width="0.9"/>
<polygon points="403.6,480.6 403.2,479.5 400.7,482.1 401.0,482.9" fill="#9b571d" stroke="#8e4a12" stroke-width="0.9"/>
<polygon points="405.4,471.8 404.1,470.6 403.0,473.2 404.2,474.3" fill="#b36f30" stroke="#8e4a12" stroke-width="0.9"/>
<polygon points="398.3,489.1 398.8,488.5 400.0,490.8 399.3,491.5" fill="#924e15" stroke="#8e4a12" stroke-width="0.9"/>
<polygon points="430.9,504.8 432.9,500.7 438.9,502.8 436.6,507.6" fill="#dea461" stroke="#8e4a12" stroke-width="0.9"/>
<polygon points="400.8,485.5 401.0,484.6 399.8,486.5 399.6,487.2" fill="#8e4a12" stroke="#8e4a12" stroke-width="0.9"/>
<polygon points="382.7,479.7 382.4,480.8 385.0,483.1 385.2,482.3" fill="#98551b" stroke="#8e4a12" stroke-width="0.9"/>
<polygon points="402.6,494.9 403.7,493.9 409.0,497.4 407.4,499.0" fill="#d8a061" stroke="#8e4a12" stroke-width="0.9"/>
<polygon points="387.3,488.7 387.9,489.3 386.9,491.6 386.1,491.0" fill="#934f16" stroke="#8e4a12" stroke-width="0.9"/>
<polygon points="436.6,507.6 438.9,502.8 443.1,504.8 440.6,509.9" fill="#dc9f5b" stroke="#8e4a12" stroke-width="0.9"/>
<polygon points="398.5,492.1 399.3,491.5 402.6,494.9 401.4,495.9" fill="#c2874a" stroke="#8e4a12" stroke-width="0.9"/>
<polygon points="381.6,470.9 380.3,472.1 381.6,474.6 382.7,473.4" fill="#af6b2d" stroke="#8e4a12" stroke-width="0.9"/>
<polygon points="335.5,588.7 338.0,592.5 343.0,592.1 339.9,588.5" fill="#ae6b2e" stroke="#8e4a12" stroke-width="0.9"/>
<polygon points="360.5,499.2 362.3,502.6 355.6,505.7 353.5,501.6" fill="#dfa765" stroke="#8e4a12" stroke-width="0.9"/>
<polygon points="385.0,484.8 385.3,485.7 386.4,487.4 386.2,486.7" fill="#8e4a12" stroke="#8e4a12" stroke-width="0.9"/>
<polygon points="376.0,496.0 377.3,497.8 371.2,501.7 369.3,499.3" fill="#e0a969" stroke="#8e4a12" stroke-width="0.9"/>
<polygon points="386.9,491.6 387.7,492.3 384.9,496.1 383.6,495.2" fill="#c48a4e" stroke="#8e4a12" stroke-width="0.9"/>
<polygon points="382.5,494.1 383.6,495.2 379.0,499.3 377.3,497.8" fill="#d9a364" stroke="#8e4a12" stroke-width="0.9"/>
<polygon points="416.8,583.0 427.4,579.9 428.2,586.6 417.3,589.8" fill="#b57335" stroke="#8e4a12" stroke-width="0.9"/>
<polygon points="343.4,505.9 346.1,511.1 344.6,512.9 341.9,507.7" fill="#c88340" stroke="#8e4a12" stroke-width="0.9"/>
<polygon points="397.6,489.7 398.3,489.1 399.3,491.5 398.5,492.1" fill="#975319" stroke="#8e4a12" stroke-width="0.9"/>
<polygon points="403.5,469.6 402.0,468.5 402.6,469.5 404.1,470.6" fill="#8e4a12" stroke="#8e4a12" stroke-width="0.9"/>
<polygon points="405.8,476.9 405.1,475.5 402.7,478.4 403.2,479.5" fill="#b16e2f" stroke="#8e4a12" stroke-width="0.9"/>
<polygon points="387.9,489.3 388.6,489.8 387.7,492.3 386.9,491.6" fill="#99551b" stroke="#8e4a12" stroke-width="0.9"/>
<polygon points="400.4,486.3 400.8,485.5 399.6,487.2 399.3,487.9" fill="#8e4a12" stroke="#8e4a12" stroke-width="0.9"/>
<polygon points="403.7,481.7 403.6,480.6 401.0,482.9 401.1,483.8" fill="#934f16" stroke="#8e4a12" stroke-width="0.9"/>
<polygon points="383.6,468.7 382.2,469.8 381.6,470.9 383.0,469.7" fill="#8e4a12" stroke="#8e4a12" stroke-width="0.9"/>
<polygon points="397.6,492.7 398.5,492.1 401.4,495.9 400.0,496.7" fill="#c68c50" stroke="#8e4a12" stroke-width="0.9"/>
<polygon points="380.7,475.8 380.1,477.2 382.7,479.7 383.2,478.6" fill="#af6a2c" stroke="#8e4a12" stroke-width="0.9"/>
<polygon points="385.3,485.7 385.7,486.5 386.8,488.0 386.4,487.4" fill="#8e4a12" stroke="#8e4a12" stroke-width="0.9"/>
<polygon points="387.7,492.3 388.7,492.8 386.4,496.9 384.9,496.1" fill="#c78f54" stroke="#8e4a12" stroke-width="0.9"/>
<polygon points="353.5,501.6 355.6,505.7 350.0,508.6 347.5,503.9" fill="#dfa765" stroke="#8e4a12" stroke-width="0.9"/>
<polygon points="382.4,480.8 382.3,481.9 384.9,484.0 385.0,483.1" fill="#914d14" stroke="#8e4a12" stroke-width="0.9"/>
<polygon points="396.8,490.1 397.6,489.7 398.5,492.1 397.6,492.7" fill="#9c581d" stroke="#8e4a12" stroke-width="0.9"/>
<polygon points="406.5,473.2 405.4,471.8 404.2,474.3 405.1,475.5" fill="#ac682a" stroke="#8e4a12" stroke-width="0.9"/>
<polygon points="445.8,513.0 448.6,507.3 448.0,504.7 445.2,510.4" fill="#86440f" stroke="#86440f" stroke-width="0.9"/>
<polygon points="394.2,468.5 392.8,468.5 392.8,466.1 394.8,466.2" fill="#b57132" stroke="#8e4a12" stroke-width="0.9"/>
<polygon points="360.9,580.6 371.7,583.5 371.2,590.3 360.2,587.4" fill="#b87637" stroke="#8e4a12" stroke-width="0.9"/>
<polygon points="392.8,468.5 391.5,468.5 390.8,466.2 392.8,466.1" fill="#b57132" stroke="#8e4a12" stroke-width="0.9"/>
<polygon points="388.6,489.8 389.4,490.2 388.7,492.8 387.7,492.3" fill="#9d5a1f" stroke="#8e4a12" stroke-width="0.9"/>
<polygon points="347.5,503.9 350.0,508.6 346.1,511.1 343.4,505.9" fill="#dda360" stroke="#8e4a12" stroke-width="0.9"/>
<polygon points="395.5,468.7 394.2,468.5 394.8,466.2 396.7,466.5" fill="#b57132" stroke="#8e4a12" stroke-width="0.9"/>
<polygon points="401.4,495.9 402.6,494.9 407.4,499.0 405.5,500.4" fill="#dba466" stroke="#8e4a12" stroke-width="0.9"/>
<polygon points="391.5,468.5 390.2,468.8 388.8,466.5 390.8,466.2" fill="#b47132" stroke="#8e4a12" stroke-width="0.9"/>
<polygon points="415.3,501.2 417.0,498.7 424.1,501.8 421.9,505.0" fill="#dfa765" stroke="#8e4a12" stroke-width="0.9"/>
<polygon points="380.3,472.1 379.3,473.5 380.7,475.8 381.6,474.6" fill="#a76428" stroke="#8e4a12" stroke-width="0.9"/>
<polygon points="396.5,493.1 397.6,492.7 400.0,496.7 398.4,497.4" fill="#c99156" stroke="#8e4a12" stroke-width="0.9"/>
<polygon points="399.9,487.1 400.4,486.3 399.3,487.9 398.8,488.5" fill="#8e4a12" stroke="#8e4a12" stroke-width="0.9"/>
<polygon points="396.0,490.5 396.8,490.1 397.6,492.7 396.5,493.1" fill="#a05c21" stroke="#8e4a12" stroke-width="0.9"/>
<polygon points="388.7,492.8 389.7,493.2 388.0,497.5 386.4,496.9" fill="#ca9459" stroke="#8e4a12" stroke-width="0.9"/>
<polygon points="383.6,495.2 384.9,496.1 380.9,500.7 379.0,499.3" fill="#dca669" stroke="#8e4a12" stroke-width="0.9"/>
<polygon points="396.8,469.1 395.5,468.7 396.7,466.5 398.6,467.0" fill="#b37031" stroke="#8e4a12" stroke-width="0.9"/>
<polygon points="389.4,490.2 390.2,490.5 389.7,493.2 388.7,492.8" fill="#a15e22" stroke="#8e4a12" stroke-width="0.9"/>
<polygon points="385.7,486.5 386.2,487.2 387.3,488.7 386.8,488.0" fill="#8e4a12" stroke="#8e4a12" stroke-width="0.9"/>
<polygon points="390.2,468.8 388.9,469.1 387.0,467.1 388.8,466.5" fill="#b47031" stroke="#8e4a12" stroke-width="0.9"/>
<polygon points="404.7,470.7 403.5,469.6 404.1,470.6 405.4,471.8" fill="#8e4a12" stroke="#8e4a12" stroke-width="0.9"/>
<polygon points="403.6,482.8 403.7,481.7 401.1,483.8 401.0,484.6" fill="#8e4a12" stroke="#8e4a12" stroke-width="0.9"/>
<polygon points="407.4,499.0 409.0,497.4 415.3,501.2 413.1,503.4" fill="#e0a969" stroke="#8e4a12" stroke-width="0.9"/>
<polygon points="447.1,511.0 449.9,505.1 452.6,508.1 449.6,514.2" fill="#935019" stroke="#86440f" stroke-width="0.9"/>
<polygon points="395.0,490.7 396.0,490.5 396.5,493.1 395.4,493.4" fill="#a35f24" stroke="#8e4a12" stroke-width="0.9"/>
<polygon points="406.2,478.2 405.8,476.9 403.2,479.5 403.6,480.6" fill="#ab6629" stroke="#8e4a12" stroke-width="0.9"/>
<polygon points="395.4,493.4 396.5,493.1 398.4,497.4 396.7,497.8" fill="#cb955a" stroke="#8e4a12" stroke-width="0.9"/>
<polygon points="390.2,490.5 391.2,490.8 390.8,493.5 389.7,493.2" fill="#a46025" stroke="#8e4a12" stroke-width="0.9"/>
<polygon points="369.3,499.3 371.2,501.7 364.7,505.7 362.3,502.6" fill="#e0a968" stroke="#8e4a12" stroke-width="0.9"/>
<polygon points="389.7,493.2 390.8,493.5 389.7,497.9 388.0,497.5" fill="#cc975d" stroke="#8e4a12" stroke-width="0.9"/>
<polygon points="382.2,469.8 381.1,471.0 380.3,472.1 381.6,470.9" fill="#8e4a12" stroke="#8e4a12" stroke-width="0.9"/>
<polygon points="382.3,481.9 382.4,483.1 385.0,484.8 384.9,484.0" fill="#8e4a12" stroke="#8e4a12" stroke-width="0.9"/>
<polygon points="398.0,469.5 396.8,469.1 398.6,467.0 400.4,467.6" fill="#b26f30" stroke="#8e4a12" stroke-width="0.9"/>
<polygon points="394.1,490.9 395.0,490.7 395.4,493.4 394.3,493.6" fill="#a56126" stroke="#8e4a12" stroke-width="0.9"/>
<polygon points="391.2,490.8 392.1,490.9 392.0,493.6 390.8,493.5" fill="#a56226" stroke="#8e4a12" stroke-width="0.9"/>
<polygon points="380.1,477.2 379.7,478.6 382.4,480.8 382.7,479.7" fill="#a76326" stroke="#8e4a12" stroke-width="0.9"/>
<polygon points="399.2,487.8 399.9,487.1 398.8,488.5 398.3,489.1" fill="#8e4a12" stroke="#8e4a12" stroke-width="0.9"/>
<polygon points="377.3,497.8 379.0,499.3 373.5,503.9 371.2,501.7" fill="#e1ab6c" stroke="#8e4a12" stroke-width="0.9"/>
<polygon points="393.1,491.0 394.1,490.9 394.3,493.6 393.1,493.7" fill="#a66327" stroke="#8e4a12" stroke-width="0.9"/>
<polygon points="388.9,469.1 387.7,469.6 385.2,467.8 387.0,467.1" fill="#b26f31" stroke="#8e4a12" stroke-width="0.9"/>
<polygon points="392.1,490.9 393.1,491.0 393.1,493.7 392.0,493.6" fill="#a66327" stroke="#8e4a12" stroke-width="0.9"/>
<polygon points="394.3,493.6 395.4,493.4 396.7,497.8 395.0,498.2" fill="#cd985e" stroke="#8e4a12" stroke-width="0.9"/>
<polygon points="390.8,493.5 392.0,493.6 391.4,498.2 389.7,497.9" fill="#ce995f" stroke="#8e4a12" stroke-width="0.9"/>
<polygon points="386.2,487.2 387.0,487.9 387.9,489.3 387.3,488.7" fill="#8e4a12" stroke="#8e4a12" stroke-width="0.9"/>
<polygon points="337.9,508.6 340.9,514.3 341.5,511.6 338.5,506.0" fill="#86440f" stroke="#86440f" stroke-width="0.9"/>
<polygon points="400.0,496.7 401.4,495.9 405.5,500.4 403.4,501.7" fill="#dda86b" stroke="#8e4a12" stroke-width="0.9"/>
<polygon points="393.1,493.7 394.3,493.6 395.0,498.2 393.2,498.3" fill="#ce9a60" stroke="#8e4a12" stroke-width="0.9"/>
<polygon points="392.0,493.6 393.1,493.7 393.2,498.3 391.4,498.2" fill="#ce9a60" stroke="#8e4a12" stroke-width="0.9"/>
<polygon points="407.3,474.7 406.5,473.2 405.1,475.5 405.8,476.9" fill="#a36025" stroke="#8e4a12" stroke-width="0.9"/>
<polygon points="426.3,572.3 435.9,568.2 437.4,575.7 427.4,579.9" fill="#bc793a" stroke="#8e4a12" stroke-width="0.9"/>
<polygon points="384.9,496.1 386.4,496.9 383.1,501.9 380.9,500.7" fill="#deab6d" stroke="#8e4a12" stroke-width="0.9"/>
<polygon points="328.8,595.1 322.5,592.3 327.9,592.2 334.0,595.1" fill="#95521a" stroke="#8e4a12" stroke-width="0.9"/>
<polygon points="445.2,510.4 448.0,504.7 449.9,505.1 447.1,511.0" fill="#86440f" stroke="#86440f" stroke-width="0.9"/>
<polygon points="399.1,470.1 398.0,469.5 400.4,467.6 402.0,468.5" fill="#b16e30" stroke="#8e4a12" stroke-width="0.9"/>
<polygon points="379.3,473.5 378.6,475.0 380.1,477.2 380.7,475.8" fill="#a05c22" stroke="#8e4a12" stroke-width="0.9"/>
<polygon points="403.3,483.9 403.6,482.8 401.0,484.6 400.8,485.5" fill="#8e4a12" stroke="#8e4a12" stroke-width="0.9"/>
<polygon points="398.4,488.4 399.2,487.8 398.3,489.1 397.6,489.7" fill="#8e4a12" stroke="#8e4a12" stroke-width="0.9"/>
<polygon points="387.0,487.9 387.8,488.5 388.6,489.8 387.9,489.3" fill="#8e4a12" stroke="#8e4a12" stroke-width="0.9"/>
<polygon points="387.7,469.6 386.7,470.3 383.6,468.7 385.2,467.8" fill="#b16f30" stroke="#8e4a12" stroke-width="0.9"/>
<polygon points="382.4,483.1 382.8,484.2 385.3,485.7 385.0,484.8" fill="#8e4a12" stroke="#8e4a12" stroke-width="0.9"/>
<polygon points="421.9,505.0 424.1,501.8 430.9,504.8 428.2,508.7" fill="#dfa765" stroke="#8e4a12" stroke-width="0.9"/>
<polygon points="405.7,584.9 416.8,583.0 417.3,589.8 405.9,591.8" fill="#b87637" stroke="#8e4a12" stroke-width="0.9"/>
<polygon points="405.7,472.0 404.7,470.7 405.4,471.8 406.5,473.2" fill="#8e4a12" stroke="#8e4a12" stroke-width="0.9"/>
<polygon points="406.4,479.7 406.2,478.2 403.6,480.6 403.7,481.7" fill="#a25e22" stroke="#8e4a12" stroke-width="0.9"/>
<polygon points="320.0,580.7 326.4,583.5 329.8,584.2 323.7,581.4" fill="#8e4a12" stroke="#8e4a12" stroke-width="0.9"/>
<polygon points="336.6,506.4 339.7,512.3 337.2,515.6 334.0,509.5" fill="#96531b" stroke="#86440f" stroke-width="0.9"/>
<polygon points="381.1,471.0 380.1,472.3 379.3,473.5 380.3,472.1" fill="#8e4a12" stroke="#8e4a12" stroke-width="0.9"/>
<polygon points="397.5,488.9 398.4,488.4 397.6,489.7 396.8,490.1" fill="#8e4a12" stroke="#8e4a12" stroke-width="0.9"/>
<polygon points="398.4,497.4 400.0,496.7 403.4,501.7 401.1,502.6" fill="#dfac6f" stroke="#8e4a12" stroke-width="0.9"/>
<polygon points="352.1,569.2 361.9,573.0 360.9,580.6 350.8,576.7" fill="#c07d3c" stroke="#8e4a12" stroke-width="0.9"/>
<polygon points="371.7,583.5 382.9,585.2 382.6,592.1 371.2,590.3" fill="#ba7738" stroke="#8e4a12" stroke-width="0.9"/>
<polygon points="379.7,478.6 379.6,480.0 382.3,481.9 382.4,480.8" fill="#9f5b20" stroke="#8e4a12" stroke-width="0.9"/>
<polygon points="387.8,488.5 388.7,489.0 389.4,490.2 388.6,489.8" fill="#8e4a12" stroke="#8e4a12" stroke-width="0.9"/>
<polygon points="434.1,560.2 442.5,555.4 444.7,563.2 435.9,568.2" fill="#bf7c3b" stroke="#8e4a12" stroke-width="0.9"/>
<polygon points="386.4,496.9 388.0,497.5 385.5,502.8 383.1,501.9" fill="#e0ae71" stroke="#8e4a12" stroke-width="0.9"/>
<polygon points="400.1,470.8 399.1,470.1 402.0,468.5 403.5,469.6" fill="#b16e30" stroke="#8e4a12" stroke-width="0.9"/>
<polygon points="405.5,500.4 407.4,499.0 413.1,503.4 410.5,505.4" fill="#e1ab6c" stroke="#8e4a12" stroke-width="0.9"/>
<polygon points="443.7,533.6 449.2,528.0 452.8,535.8 446.9,541.8" fill="#bb7839" stroke="#8e4a12" stroke-width="0.9"/>
<polygon points="445.5,520.0 449.6,514.2 453.6,521.8 449.2,528.0" fill="#b57335" stroke="#8e4a12" stroke-width="0.9"/>
<polygon points="439.9,547.2 446.9,541.8 449.9,549.7 442.5,555.4" fill="#be7b3b" stroke="#8e4a12" stroke-width="0.9"/>
<polygon points="402.8,485.0 403.3,483.9 400.8,485.5 400.4,486.3" fill="#8e4a12" stroke="#8e4a12" stroke-width="0.9"/>
<polygon points="396.5,489.3 397.5,488.9 396.8,490.1 396.0,490.5" fill="#8e4a12" stroke="#8e4a12" stroke-width="0.9"/>
<polygon points="386.7,470.3 385.7,471.0 382.2,469.8 383.6,468.7" fill="#b16f31" stroke="#8e4a12" stroke-width="0.9"/>
<polygon points="362.3,502.6 364.7,505.7 358.5,509.5 355.6,505.7" fill="#e0a968" stroke="#8e4a12" stroke-width="0.9"/>
<polygon points="388.7,489.0 389.7,489.4 390.2,490.5 389.4,490.2" fill="#8e4a12" stroke="#8e4a12" stroke-width="0.9"/>
<polygon points="407.7,476.2 407.3,474.7 405.8,476.9 406.2,478.2" fill="#9b581e" stroke="#8e4a12" stroke-width="0.9"/>
<polygon points="382.8,484.2 383.3,485.2 385.7,486.5 385.3,485.7" fill="#8e4a12" stroke="#8e4a12" stroke-width="0.9"/>
<polygon points="379.0,499.3 380.9,500.7 376.2,505.8 373.5,503.9" fill="#e2ad6e" stroke="#8e4a12" stroke-width="0.9"/>
<polygon points="338.5,506.0 341.5,511.6 339.7,512.3 336.6,506.4" fill="#86440f" stroke="#86440f" stroke-width="0.9"/>
<polygon points="396.7,497.8 398.4,497.4 401.1,502.6 398.6,503.4" fill="#e1af72" stroke="#8e4a12" stroke-width="0.9"/>
<polygon points="413.1,503.4 415.3,501.2 421.9,505.0 419.0,507.9" fill="#e0a968" stroke="#8e4a12" stroke-width="0.9"/>
<polygon points="395.4,489.6 396.5,489.3 396.0,490.5 395.0,490.7" fill="#8e4a12" stroke="#8e4a12" stroke-width="0.9"/>
<polygon points="389.7,489.4 390.8,489.7 391.2,490.8 390.2,490.5" fill="#8e4a12" stroke="#8e4a12" stroke-width="0.9"/>
<polygon points="388.0,497.5 389.7,497.9 388.0,503.5 385.5,502.8" fill="#e2b074" stroke="#8e4a12" stroke-width="0.9"/>
<polygon points="378.6,475.0 378.2,476.6 379.7,478.6 380.1,477.2" fill="#98541b" stroke="#8e4a12" stroke-width="0.9"/>
<polygon points="428.2,508.7 430.9,504.8 436.6,507.6 433.5,512.0" fill="#dfa766" stroke="#8e4a12" stroke-width="0.9"/>
<polygon points="394.3,489.8 395.4,489.6 395.0,490.7 394.1,490.9" fill="#8e4a12" stroke="#8e4a12" stroke-width="0.9"/>
<polygon points="394.3,585.6 405.7,584.9 405.9,591.8 394.3,592.5" fill="#ba7838" stroke="#8e4a12" stroke-width="0.9"/>
<polygon points="390.8,489.7 392.0,489.9 392.1,490.9 391.2,490.8" fill="#8e4a12" stroke="#8e4a12" stroke-width="0.9"/>
<polygon points="406.4,473.4 405.7,472.0 406.5,473.2 407.3,474.7" fill="#8e4a12" stroke="#8e4a12" stroke-width="0.9"/>
<polygon points="406.3,481.1 406.4,479.7 403.7,481.7 403.6,482.8" fill="#99561c" stroke="#8e4a12" stroke-width="0.9"/>
<polygon points="437.1,514.8 440.6,509.9 442.1,511.8 438.5,516.8" fill="#cb8643" stroke="#8e4a12" stroke-width="0.9"/>
<polygon points="393.1,489.9 394.3,489.8 394.1,490.9 393.1,491.0" fill="#8e4a12" stroke="#8e4a12" stroke-width="0.9"/>
<polygon points="392.0,489.9 393.1,489.9 393.1,491.0 392.1,490.9" fill="#8e4a12" stroke="#8e4a12" stroke-width="0.9"/>
<polygon points="400.9,471.6 400.1,470.8 403.5,469.6 404.7,470.7" fill="#b16f31" stroke="#8e4a12" stroke-width="0.9"/>
<polygon points="382.9,585.2 394.3,585.6 394.3,592.5 382.6,592.1" fill="#bb7839" stroke="#8e4a12" stroke-width="0.9"/>
<polygon points="345.3,556.5 353.9,561.2 352.1,569.2 343.2,564.4" fill="#c4803e" stroke="#8e4a12" stroke-width="0.9"/>
<polygon points="395.0,498.2 396.7,497.8 398.6,503.4 396.0,503.8" fill="#e2b075" stroke="#8e4a12" stroke-width="0.9"/>
<polygon points="389.7,497.9 391.4,498.2 390.6,503.9 388.0,503.5" fill="#e2b276" stroke="#8e4a12" stroke-width="0.9"/>
<polygon points="371.2,501.7 373.5,503.9 367.7,508.5 364.7,505.7" fill="#e1aa6a" stroke="#8e4a12" stroke-width="0.9"/>
<polygon points="402.1,486.0 402.8,485.0 400.4,486.3 399.9,487.1" fill="#8e4a12" stroke="#8e4a12" stroke-width="0.9"/>
<polygon points="379.6,480.0 379.8,481.4 382.4,483.1 382.3,481.9" fill="#965319" stroke="#8e4a12" stroke-width="0.9"/>
<polygon points="385.7,471.0 384.9,471.8 381.1,471.0 382.2,469.8" fill="#b26f31" stroke="#8e4a12" stroke-width="0.9"/>
<polygon points="380.1,472.3 379.5,473.7 378.6,475.0 379.3,473.5" fill="#8e4a12" stroke="#8e4a12" stroke-width="0.9"/>
<polygon points="393.2,498.3 395.0,498.2 396.0,503.8 393.3,504.0" fill="#e3b276" stroke="#8e4a12" stroke-width="0.9"/>
<polygon points="391.4,498.2 393.2,498.3 393.3,504.0 390.6,503.9" fill="#e3b277" stroke="#8e4a12" stroke-width="0.9"/>
<polygon points="383.3,485.2 384.1,486.2 386.2,487.2 385.7,486.5" fill="#8e4a12" stroke="#8e4a12" stroke-width="0.9"/>
<polygon points="340.5,543.1 347.8,548.3 345.3,556.5 337.7,551.1" fill="#c4803e" stroke="#8e4a12" stroke-width="0.9"/>
<polygon points="337.9,529.3 343.7,534.8 340.5,543.1 334.4,537.2" fill="#c17d3c" stroke="#8e4a12" stroke-width="0.9"/>
<polygon points="433.5,512.0 436.6,507.6 440.6,509.9 437.1,514.8" fill="#dea361" stroke="#8e4a12" stroke-width="0.9"/>
<polygon points="337.2,515.6 341.5,521.3 337.9,529.3 333.2,523.2" fill="#bc7939" stroke="#8e4a12" stroke-width="0.9"/>
<polygon points="403.4,501.7 405.5,500.4 410.5,505.4 407.5,507.1" fill="#e2ad6f" stroke="#8e4a12" stroke-width="0.9"/>
<polygon points="355.6,505.7 358.5,509.5 353.3,513.0 350.0,508.6" fill="#e0a969" stroke="#8e4a12" stroke-width="0.9"/>
<polygon points="407.9,477.8 407.7,476.2 406.2,478.2 406.4,479.7" fill="#924f16" stroke="#8e4a12" stroke-width="0.9"/>
<polygon points="401.2,486.9 402.1,486.0 399.9,487.1 399.2,487.8" fill="#8e4a12" stroke="#8e4a12" stroke-width="0.9"/>
<polygon points="346.1,511.1 349.7,515.8 348.4,517.9 344.6,512.9" fill="#cf8b47" stroke="#8e4a12" stroke-width="0.9"/>
<polygon points="380.9,500.7 383.1,501.9 379.2,507.5 376.2,505.8" fill="#e3af71" stroke="#8e4a12" stroke-width="0.9"/>
<polygon points="401.6,472.5 400.9,471.6 404.7,470.7 405.7,472.0" fill="#b26f31" stroke="#8e4a12" stroke-width="0.9"/>
<polygon points="384.1,486.2 385.0,487.1 387.0,487.9 386.2,487.2" fill="#8e4a12" stroke="#8e4a12" stroke-width="0.9"/>
<polygon points="405.9,482.5 406.3,481.1 403.6,482.8 403.3,483.9" fill="#914d14" stroke="#8e4a12" stroke-width="0.9"/>
<polygon points="378.2,476.6 378.1,478.2 379.6,480.0 379.7,478.6" fill="#904c14" stroke="#8e4a12" stroke-width="0.9"/>
<polygon points="384.9,471.8 384.3,472.7 380.1,472.3 381.1,471.0" fill="#b37132" stroke="#8e4a12" stroke-width="0.9"/>
<polygon points="406.9,474.9 406.4,473.4 407.3,474.7 407.7,476.2" fill="#8e4a12" stroke="#8e4a12" stroke-width="0.9"/>
<polygon points="379.8,481.4 380.2,482.8 382.8,484.2 382.4,483.1" fill="#8f4b13" stroke="#8e4a12" stroke-width="0.9"/>
<polygon points="350.0,508.6 353.3,513.0 349.7,515.8 346.1,511.1" fill="#e0a867" stroke="#8e4a12" stroke-width="0.9"/>
<polygon points="416.0,575.3 426.3,572.3 427.4,579.9 416.8,583.0" fill="#c17d3c" stroke="#8e4a12" stroke-width="0.9"/>
<polygon points="379.5,473.7 379.1,475.2 378.2,476.6 378.6,475.0" fill="#8e4a12" stroke="#8e4a12" stroke-width="0.9"/>
<polygon points="311.1,582.6 312.8,579.8 316.1,581.0 315.0,583.7" fill="#824817" stroke="#8e4a12" stroke-width="0.9"/>
<polygon points="400.1,487.8 401.2,486.9 399.2,487.8 398.4,488.4" fill="#8e4a12" stroke="#8e4a12" stroke-width="0.9"/>
<polygon points="332.7,594.7 328.8,595.1 334.0,595.1 337.4,594.9" fill="#8e4a12" stroke="#8e4a12" stroke-width="0.9"/>
<polygon points="419.0,507.9 421.9,505.0 428.2,508.7 424.7,512.3" fill="#e0a968" stroke="#8e4a12" stroke-width="0.9"/>
<polygon points="385.0,487.1 386.1,487.9 387.8,488.5 387.0,487.9" fill="#8e4a12" stroke="#8e4a12" stroke-width="0.9"/>
<polygon points="410.5,505.4 413.1,503.4 419.0,507.9 415.7,510.5" fill="#e1ab6b" stroke="#8e4a12" stroke-width="0.9"/>
<polygon points="401.1,502.6 403.4,501.7 407.5,507.1 404.3,508.5" fill="#e3af71" stroke="#8e4a12" stroke-width="0.9"/>
<polygon points="312.7,586.8 311.1,582.6 315.0,583.7 317.0,587.7" fill="#9d5c23" stroke="#8e4a12" stroke-width="0.9"/>
<polygon points="402.1,473.4 401.6,472.5 405.7,472.0 406.4,473.4" fill="#b37133" stroke="#8e4a12" stroke-width="0.9"/>
<polygon points="442.0,518.4 445.8,513.0 445.2,510.4 441.5,515.8" fill="#86440f" stroke="#86440f" stroke-width="0.9"/>
<polygon points="361.9,573.0 372.3,575.8 371.7,583.5 360.9,580.6" fill="#c3803e" stroke="#8e4a12" stroke-width="0.9"/>
<polygon points="383.1,501.9 385.5,502.8 382.5,508.7 379.2,507.5" fill="#e3b072" stroke="#8e4a12" stroke-width="0.9"/>
<polygon points="326.4,583.5 331.9,588.1 335.5,588.7 329.8,584.2" fill="#914e16" stroke="#8e4a12" stroke-width="0.9"/>
<polygon points="407.8,479.4 407.9,477.8 406.4,479.7 406.3,481.1" fill="#8e4a12" stroke="#8e4a12" stroke-width="0.9"/>
<polygon points="405.3,483.8 405.9,482.5 403.3,483.9 402.8,485.0" fill="#8e4a12" stroke="#8e4a12" stroke-width="0.9"/>
<polygon points="384.3,472.7 383.8,473.6 379.5,473.7 380.1,472.3" fill="#b57334" stroke="#8e4a12" stroke-width="0.9"/>
<polygon points="398.9,488.4 400.1,487.8 398.4,488.4 397.5,488.9" fill="#8e4a12" stroke="#8e4a12" stroke-width="0.9"/>
<polygon points="373.5,503.9 376.2,505.8 371.2,511.1 367.7,508.5" fill="#e2ac6d" stroke="#8e4a12" stroke-width="0.9"/>
<polygon points="386.1,487.9 387.4,488.6 388.7,489.0 387.8,488.5" fill="#8e4a12" stroke="#8e4a12" stroke-width="0.9"/>
<polygon points="364.7,505.7 367.7,508.5 362.2,513.0 358.5,509.5" fill="#e1ab6b" stroke="#8e4a12" stroke-width="0.9"/>
<polygon points="393.0,475.1 393.0,475.1 392.8,468.5 394.2,468.5" fill="#914d15" stroke="#8e4a12" stroke-width="0.9"/>
<polygon points="393.0,475.1 393.0,475.1 391.5,468.5 392.8,468.5" fill="#914d14" stroke="#8e4a12" stroke-width="0.9"/>
<polygon points="380.2,482.8 380.9,484.1 383.3,485.2 382.8,484.2" fill="#8e4a12" stroke="#8e4a12" stroke-width="0.9"/>
<polygon points="378.1,478.2 378.3,479.7 379.8,481.4 379.6,480.0" fill="#8e4a12" stroke="#8e4a12" stroke-width="0.9"/>
<polygon points="393.0,475.1 393.0,475.1 394.2,468.5 395.5,468.7" fill="#8f4b13" stroke="#8e4a12" stroke-width="0.9"/>
<polygon points="393.0,475.1 393.0,475.1 390.2,468.8 391.5,468.5" fill="#8f4b13" stroke="#8e4a12" stroke-width="0.9"/>
<polygon points="393.0,475.1 393.0,475.1 395.5,468.7 396.8,469.1" fill="#8e4a12" stroke="#8e4a12" stroke-width="0.9"/>
<polygon points="407.0,476.4 406.9,474.9 407.7,476.2 407.9,477.8" fill="#8e4a12" stroke="#8e4a12" stroke-width="0.9"/>
<polygon points="393.0,475.1 393.0,475.1 388.9,469.1 390.2,468.8" fill="#8e4a12" stroke="#8e4a12" stroke-width="0.9"/>
<polygon points="397.6,489.0 398.9,488.4 397.5,488.9 396.5,489.3" fill="#8e4a12" stroke="#8e4a12" stroke-width="0.9"/>
<polygon points="393.0,475.1 393.0,475.1 396.8,469.1 398.0,469.5" fill="#8e4a12" stroke="#8e4a12" stroke-width="0.9"/>
<polygon points="398.6,503.4 401.1,502.6 404.3,508.5 400.8,509.5" fill="#e4b073" stroke="#8e4a12" stroke-width="0.9"/>
<polygon points="387.4,488.6 388.7,489.1 389.7,489.4 388.7,489.0" fill="#8e4a12" stroke="#8e4a12" stroke-width="0.9"/>
<polygon points="393.0,475.1 393.0,475.1 387.7,469.6 388.9,469.1" fill="#8e4a12" stroke="#8e4a12" stroke-width="0.9"/>
<polygon points="312.8,579.8 317.1,579.3 320.0,580.7 316.1,581.0" fill="#8e4a12" stroke="#8e4a12" stroke-width="0.9"/>
<polygon points="443.1,516.5 447.1,511.0 449.6,514.2 445.5,520.0" fill="#9a581e" stroke="#86440f" stroke-width="0.9"/>
<polygon points="379.1,475.2 379.0,476.7 378.1,478.2 378.2,476.6" fill="#8e4a12" stroke="#8e4a12" stroke-width="0.9"/>
<polygon points="385.5,502.8 388.0,503.5 386.0,509.7 382.5,508.7" fill="#e4b174" stroke="#8e4a12" stroke-width="0.9"/>
<polygon points="393.0,475.1 393.0,475.1 398.0,469.5 399.1,470.1" fill="#8e4a12" stroke="#8e4a12" stroke-width="0.9"/>
<polygon points="402.4,474.4 402.1,473.4 406.4,473.4 406.9,474.9" fill="#b67436" stroke="#8e4a12" stroke-width="0.9"/>
<polygon points="340.9,514.3 345.0,519.6 345.5,516.9 341.5,511.6" fill="#86440f" stroke="#86440f" stroke-width="0.9"/>
<polygon points="393.0,475.1 393.0,475.1 386.7,470.3 387.7,469.6" fill="#8e4a12" stroke="#8e4a12" stroke-width="0.9"/>
<polygon points="424.9,564.1 434.1,560.2 435.9,568.2 426.3,572.3" fill="#c4803f" stroke="#8e4a12" stroke-width="0.9"/>
<polygon points="396.2,489.4 397.6,489.0 396.5,489.3 395.4,489.6" fill="#8e4a12" stroke="#8e4a12" stroke-width="0.9"/>
<polygon points="388.7,489.1 390.1,489.5 390.8,489.7 389.7,489.4" fill="#8e4a12" stroke="#8e4a12" stroke-width="0.9"/>
<polygon points="404.4,485.1 405.3,483.8 402.8,485.0 402.1,486.0" fill="#8e4a12" stroke="#8e4a12" stroke-width="0.9"/>
<polygon points="383.8,473.6 383.6,474.6 379.1,475.2 379.5,473.7" fill="#b67537" stroke="#8e4a12" stroke-width="0.9"/>
<polygon points="393.0,475.1 393.0,475.1 399.1,470.1 400.1,470.8" fill="#8e4a12" stroke="#8e4a12" stroke-width="0.9"/>
<polygon points="394.7,489.7 396.2,489.4 395.4,489.6 394.3,489.8" fill="#8e4a12" stroke="#8e4a12" stroke-width="0.9"/>
<polygon points="393.0,475.1 393.0,475.1 385.7,471.0 386.7,470.3" fill="#8e4a12" stroke="#8e4a12" stroke-width="0.9"/>
<polygon points="390.1,489.5 391.6,489.7 392.0,489.9 390.8,489.7" fill="#8e4a12" stroke="#8e4a12" stroke-width="0.9"/>
<polygon points="396.0,503.8 398.6,503.4 400.8,509.5 397.1,510.1" fill="#e4b174" stroke="#8e4a12" stroke-width="0.9"/>
<polygon points="380.9,484.1 381.8,485.3 384.1,486.2 383.3,485.2" fill="#8e4a12" stroke="#8e4a12" stroke-width="0.9"/>
<polygon points="424.7,512.3 428.2,508.7 433.5,512.0 429.5,516.1" fill="#e0aa69" stroke="#8e4a12" stroke-width="0.9"/>
<polygon points="407.4,481.0 407.8,479.4 406.3,481.1 405.9,482.5" fill="#8e4a12" stroke="#8e4a12" stroke-width="0.9"/>
<polygon points="393.2,489.8 394.7,489.7 394.3,489.8 393.1,489.9" fill="#8e4a12" stroke="#8e4a12" stroke-width="0.9"/>
<polygon points="388.0,503.5 390.6,503.9 389.7,510.2 386.0,509.7" fill="#e4b275" stroke="#8e4a12" stroke-width="0.9"/>
<polygon points="391.6,489.7 393.2,489.8 393.1,489.9 392.0,489.9" fill="#8e4a12" stroke="#8e4a12" stroke-width="0.9"/>
<polygon points="441.5,515.8 445.2,510.4 447.1,511.0 443.1,516.5" fill="#86440f" stroke="#86440f" stroke-width="0.9"/>
<polygon points="333.8,592.1 332.7,594.7 337.4,594.9 338.0,592.5" fill="#834817" stroke="#8e4a12" stroke-width="0.9"/>
<polygon points="393.0,475.1 393.0,475.1 400.1,470.8 400.9,471.6" fill="#8e4a12" stroke="#8e4a12" stroke-width="0.9"/>
<polygon points="405.3,577.2 416.0,575.3 416.8,583.0 405.7,584.9" fill="#c4803e" stroke="#8e4a12" stroke-width="0.9"/>
<polygon points="393.0,475.1 393.0,475.1 384.9,471.8 385.7,471.0" fill="#8e4a12" stroke="#8e4a12" stroke-width="0.9"/>
<polygon points="407.5,507.1 410.5,505.4 415.7,510.5 411.8,512.7" fill="#e2ac6d" stroke="#8e4a12" stroke-width="0.9"/>
<polygon points="393.3,504.0 396.0,503.8 397.1,510.1 393.4,510.4" fill="#e4b275" stroke="#8e4a12" stroke-width="0.9"/>
<polygon points="390.6,503.9 393.3,504.0 393.4,510.4 389.7,510.2" fill="#e4b275" stroke="#8e4a12" stroke-width="0.9"/>
<polygon points="378.3,479.7 378.7,481.3 380.2,482.8 379.8,481.4" fill="#8e4a12" stroke="#8e4a12" stroke-width="0.9"/>
<polygon points="353.9,561.2 363.2,564.8 361.9,573.0 352.1,569.2" fill="#c88441" stroke="#8e4a12" stroke-width="0.9"/>
<polygon points="432.0,551.7 439.9,547.2 442.5,555.4 434.1,560.2" fill="#c4803f" stroke="#8e4a12" stroke-width="0.9"/>
<polygon points="331.9,588.1 333.8,592.1 338.0,592.5 335.5,588.7" fill="#a05e24" stroke="#8e4a12" stroke-width="0.9"/>
<polygon points="406.9,477.8 407.0,476.4 407.9,477.8 407.8,479.4" fill="#8e4a12" stroke="#8e4a12" stroke-width="0.9"/>
<polygon points="393.0,475.1 393.0,475.1 400.9,471.6 401.6,472.5" fill="#8e4a12" stroke="#8e4a12" stroke-width="0.9"/>
<polygon points="372.3,575.8 383.2,577.4 382.9,585.2 371.7,583.5" fill="#c5813f" stroke="#8e4a12" stroke-width="0.9"/>
<polygon points="339.7,512.3 343.9,517.7 341.5,521.3 337.2,515.6" fill="#9d5a21" stroke="#86440f" stroke-width="0.9"/>
<polygon points="393.0,475.1 393.0,475.1 384.3,472.7 384.9,471.8" fill="#8e4a12" stroke="#8e4a12" stroke-width="0.9"/>
<polygon points="376.2,505.8 379.2,507.5 375.1,513.2 371.2,511.1" fill="#e2ad6f" stroke="#8e4a12" stroke-width="0.9"/>
<polygon points="318.1,591.5 312.7,586.8 317.0,587.7 322.5,592.3" fill="#96531b" stroke="#8e4a12" stroke-width="0.9"/>
<polygon points="402.5,475.4 402.4,474.4 406.9,474.9 407.0,476.4" fill="#b87738" stroke="#8e4a12" stroke-width="0.9"/>
<polygon points="403.3,486.2 404.4,485.1 402.1,486.0 401.2,486.9" fill="#8e4a12" stroke="#8e4a12" stroke-width="0.9"/>
<polygon points="358.5,509.5 362.2,513.0 357.5,517.0 353.3,513.0" fill="#e2ac6d" stroke="#8e4a12" stroke-width="0.9"/>
<polygon points="437.1,538.7 443.7,533.6 446.9,541.8 439.9,547.2" fill="#c17e3d" stroke="#8e4a12" stroke-width="0.9"/>
<polygon points="432.8,519.3 437.1,514.8 438.5,516.8 434.0,521.4" fill="#d08d49" stroke="#8e4a12" stroke-width="0.9"/>
<polygon points="379.0,476.7 379.1,478.2 378.3,479.7 378.1,478.2" fill="#8e4a12" stroke="#8e4a12" stroke-width="0.9"/>
<polygon points="383.6,474.6 383.5,475.6 379.0,476.7 379.1,475.2" fill="#b9793a" stroke="#8e4a12" stroke-width="0.9"/>
<polygon points="393.0,475.2 393.0,475.1 401.6,472.5 402.1,473.4" fill="#8e4a12" stroke="#8e4a12" stroke-width="0.9"/>
<polygon points="381.8,485.3 383.0,486.4 385.0,487.1 384.1,486.2" fill="#8e4a12" stroke="#8e4a12" stroke-width="0.9"/>
<polygon points="440.3,525.4 445.5,520.0 449.2,528.0 443.7,533.6" fill="#bc793a" stroke="#8e4a12" stroke-width="0.9"/>
<polygon points="429.5,516.1 433.5,512.0 437.1,514.8 432.8,519.3" fill="#e0a867" stroke="#8e4a12" stroke-width="0.9"/>
<polygon points="415.7,510.5 419.0,507.9 424.7,512.3 420.6,515.4" fill="#e1ab6b" stroke="#8e4a12" stroke-width="0.9"/>
<polygon points="393.0,475.1 393.0,475.2 383.8,473.6 384.3,472.7" fill="#8e4a12" stroke="#8e4a12" stroke-width="0.9"/>
<polygon points="341.5,511.6 345.5,516.9 343.9,517.7 339.7,512.3" fill="#86440f" stroke="#86440f" stroke-width="0.9"/>
<polygon points="406.7,482.4 407.4,481.0 405.9,482.5 405.3,483.8" fill="#8e4a12" stroke="#8e4a12" stroke-width="0.9"/>
<polygon points="347.8,548.3 355.9,552.6 353.9,561.2 345.3,556.5" fill="#c98441" stroke="#8e4a12" stroke-width="0.9"/>
<polygon points="393.0,475.2 393.0,475.2 402.1,473.4 402.4,474.4" fill="#8e4a12" stroke="#8e4a12" stroke-width="0.9"/>
<polygon points="394.2,577.9 405.3,577.2 405.7,584.9 394.3,585.6" fill="#c5813f" stroke="#8e4a12" stroke-width="0.9"/>
<polygon points="393.0,475.2 393.0,475.2 383.6,474.6 383.8,473.6" fill="#8e4a12" stroke="#8e4a12" stroke-width="0.9"/>
<polygon points="383.2,577.4 394.2,577.9 394.3,585.6 382.9,585.2" fill="#c68240" stroke="#8e4a12" stroke-width="0.9"/>
<polygon points="367.7,508.5 371.2,511.1 366.4,516.1 362.2,513.0" fill="#e2ac6d" stroke="#8e4a12" stroke-width="0.9"/>
<polygon points="378.7,481.3 379.5,482.8 380.9,484.1 380.2,482.8" fill="#8e4a12" stroke="#8e4a12" stroke-width="0.9"/>
<polygon points="401.9,487.2 403.3,486.2 401.2,486.9 400.1,487.8" fill="#8e4a12" stroke="#8e4a12" stroke-width="0.9"/>
<polygon points="349.7,515.8 354.3,520.2 353.1,522.4 348.4,517.9" fill="#d2914d" stroke="#8e4a12" stroke-width="0.9"/>
<polygon points="343.7,534.8 350.5,539.7 347.8,548.3 340.5,543.1" fill="#c78340" stroke="#8e4a12" stroke-width="0.9"/>
<polygon points="402.4,476.4 402.5,475.4 407.0,476.4 406.9,477.8" fill="#ba7a3b" stroke="#8e4a12" stroke-width="0.9"/>
<polygon points="383.0,486.4 384.4,487.4 386.1,487.9 385.0,487.1" fill="#8e4a12" stroke="#8e4a12" stroke-width="0.9"/>
<polygon points="353.3,513.0 357.5,517.0 354.3,520.2 349.7,515.8" fill="#e2ac6d" stroke="#8e4a12" stroke-width="0.9"/>
<polygon points="393.0,475.2 393.0,475.2 402.4,474.4 402.5,475.4" fill="#8e4a12" stroke="#8e4a12" stroke-width="0.9"/>
<polygon points="404.3,508.5 407.5,507.1 411.8,512.7 407.6,514.5" fill="#e2ae6f" stroke="#8e4a12" stroke-width="0.9"/>
<polygon points="406.5,479.3 406.9,477.8 407.8,479.4 407.4,481.0" fill="#8e4a12" stroke="#8e4a12" stroke-width="0.9"/>
<polygon points="393.0,475.2 393.0,475.2 383.5,475.6 383.6,474.6" fill="#8e4a12" stroke="#8e4a12" stroke-width="0.9"/>
<polygon points="383.5,475.6 383.6,476.6 379.1,478.2 379.0,476.7" fill="#bc7c3d" stroke="#8e4a12" stroke-width="0.9"/>
<polygon points="341.5,521.3 346.9,526.5 343.7,534.8 337.9,529.3" fill="#c27f3d" stroke="#8e4a12" stroke-width="0.9"/>
<polygon points="379.2,507.5 382.5,508.7 379.4,514.8 375.1,513.2" fill="#e3af70" stroke="#8e4a12" stroke-width="0.9"/>
<polygon points="379.1,478.2 379.6,479.6 378.7,481.3 378.3,479.7" fill="#8e4a12" stroke="#8e4a12" stroke-width="0.9"/>
<polygon points="317.1,579.3 323.6,582.1 326.4,583.5 320.0,580.7" fill="#8e4a12" stroke="#8e4a12" stroke-width="0.9"/>
<polygon points="393.0,475.2 393.0,475.2 402.5,475.4 402.4,476.4" fill="#8e4a12" stroke="#8e4a12" stroke-width="0.9"/>
<polygon points="393.0,475.2 393.0,475.2 383.6,476.6 383.5,475.6" fill="#8e4a12" stroke="#8e4a12" stroke-width="0.9"/>
<polygon points="400.4,488.1 401.9,487.2 400.1,487.8 398.9,488.4" fill="#8e4a12" stroke="#8e4a12" stroke-width="0.9"/>
<polygon points="384.4,487.4 385.9,488.3 387.4,488.6 386.1,487.9" fill="#8e4a12" stroke="#8e4a12" stroke-width="0.9"/>
<polygon points="405.7,483.8 406.7,482.4 405.3,483.8 404.4,485.1" fill="#8e4a12" stroke="#8e4a12" stroke-width="0.9"/>
<polygon points="415.0,567.0 424.9,564.1 426.3,572.3 416.0,575.3" fill="#c88441" stroke="#8e4a12" stroke-width="0.9"/>
<polygon points="393.0,475.2 393.0,475.2 402.4,476.4 402.2,477.4" fill="#8e4a12" stroke="#8e4a12" stroke-width="0.9"/>
<polygon points="342.6,535.0 344.8,538.9 337.4,544.5 334.4,541.1" fill="#d99c58" stroke="#8e4a12" stroke-width="0.9"/>
<polygon points="379.5,482.8 380.6,484.1 381.8,485.3 380.9,484.1" fill="#8e4a12" stroke="#8e4a12" stroke-width="0.9"/>
<polygon points="393.0,475.2 393.0,475.2 383.9,477.6 383.6,476.6" fill="#8e4a12" stroke="#8e4a12" stroke-width="0.9"/>
<polygon points="402.2,477.4 402.4,476.4 406.9,477.8 406.5,479.3" fill="#bd7d3e" stroke="#8e4a12" stroke-width="0.9"/>
<polygon points="398.8,488.8 400.4,488.1 398.9,488.4 397.6,489.0" fill="#8e4a12" stroke="#8e4a12" stroke-width="0.9"/>
<polygon points="400.8,509.5 404.3,508.5 407.6,514.5 403.1,515.8" fill="#e3af70" stroke="#8e4a12" stroke-width="0.9"/>
<polygon points="437.2,523.4 442.0,518.4 441.5,515.8 436.7,520.7" fill="#86440f" stroke="#86440f" stroke-width="0.9"/>
<polygon points="385.9,488.3 387.6,488.9 388.7,489.1 387.4,488.6" fill="#8e4a12" stroke="#8e4a12" stroke-width="0.9"/>
<polygon points="383.6,476.6 383.9,477.6 379.6,479.6 379.1,478.2" fill="#be7f40" stroke="#8e4a12" stroke-width="0.9"/>
<polygon points="393.0,475.2 393.0,475.2 402.2,477.4 401.7,478.4" fill="#8e4a12" stroke="#8e4a12" stroke-width="0.9"/>
<polygon points="405.9,480.7 406.5,479.3 407.4,481.0 406.7,482.4" fill="#924f16" stroke="#8e4a12" stroke-width="0.9"/>
<polygon points="420.6,515.4 424.7,512.3 429.5,516.1 424.8,519.8" fill="#e2ac6d" stroke="#8e4a12" stroke-width="0.9"/>
<polygon points="363.2,564.8 373.2,567.5 372.3,575.8 361.9,573.0" fill="#cb8643" stroke="#8e4a12" stroke-width="0.9"/>
<polygon points="393.0,475.2 393.0,475.2 384.4,478.6 383.9,477.6" fill="#8e4a12" stroke="#8e4a12" stroke-width="0.9"/>
<polygon points="382.5,508.7 386.0,509.7 383.9,516.0 379.4,514.8" fill="#e3af71" stroke="#8e4a12" stroke-width="0.9"/>
<polygon points="411.8,512.7 415.7,510.5 420.6,515.4 415.9,518.1" fill="#e2ad6d" stroke="#8e4a12" stroke-width="0.9"/>
<polygon points="343.4,532.6 342.6,535.0 334.4,541.1 334.4,539.3" fill="#894914" stroke="#8e4a12" stroke-width="0.9"/>
<polygon points="379.6,479.6 380.3,481.0 379.5,482.8 378.7,481.3" fill="#955119" stroke="#8e4a12" stroke-width="0.9"/>
<polygon points="397.0,489.3 398.8,488.8 397.6,489.0 396.2,489.4" fill="#8e4a12" stroke="#8e4a12" stroke-width="0.9"/>
<polygon points="393.0,475.2 393.0,475.2 401.7,478.4 401.1,479.2" fill="#8e4a12" stroke="#8e4a12" stroke-width="0.9"/>
<polygon points="387.6,488.9 389.4,489.4 390.1,489.5 388.7,489.1" fill="#8e4a12" stroke="#8e4a12" stroke-width="0.9"/>
<polygon points="393.0,475.2 393.0,475.2 385.1,479.4 384.4,478.6" fill="#8e4a12" stroke="#8e4a12" stroke-width="0.9"/>
<polygon points="404.4,485.1 405.7,483.8 404.4,485.1 403.3,486.2" fill="#8e4a12" stroke="#8e4a12" stroke-width="0.9"/>
<polygon points="395.1,489.6 397.0,489.3 396.2,489.4 394.7,489.7" fill="#8e4a12" stroke="#8e4a12" stroke-width="0.9"/>
<polygon points="371.2,511.1 375.1,513.2 371.2,518.6 366.4,516.1" fill="#e2ae6f" stroke="#8e4a12" stroke-width="0.9"/>
<polygon points="362.2,513.0 366.4,516.1 362.4,520.5 357.5,517.0" fill="#e3ae70" stroke="#8e4a12" stroke-width="0.9"/>
<polygon points="389.4,489.4 391.3,489.7 391.6,489.7 390.1,489.5" fill="#8e4a12" stroke="#8e4a12" stroke-width="0.9"/>
<polygon points="397.1,510.1 400.8,509.5 403.1,515.8 398.4,516.6" fill="#e3af71" stroke="#8e4a12" stroke-width="0.9"/>
<polygon points="380.6,484.1 381.9,485.4 383.0,486.4 381.8,485.3" fill="#8e4a12" stroke="#8e4a12" stroke-width="0.9"/>
<polygon points="393.0,475.2 393.0,475.2 401.1,479.2 400.3,480.1" fill="#8e4a12" stroke="#8e4a12" stroke-width="0.9"/>
<polygon points="324.5,594.2 318.1,591.5 322.5,592.3 328.8,595.1" fill="#8e4a12" stroke="#8e4a12" stroke-width="0.9"/>
<polygon points="401.7,478.4 402.2,477.4 406.5,479.3 405.9,480.7" fill="#c08142" stroke="#8e4a12" stroke-width="0.9"/>
<polygon points="393.2,489.8 395.1,489.6 394.7,489.7 393.2,489.8" fill="#8e4a12" stroke="#8e4a12" stroke-width="0.9"/>
<polygon points="391.3,489.7 393.2,489.8 393.2,489.8 391.6,489.7" fill="#8e4a12" stroke="#8e4a12" stroke-width="0.9"/>
<polygon points="393.0,475.2 393.0,475.2 385.9,480.2 385.1,479.4" fill="#8e4a12" stroke="#8e4a12" stroke-width="0.9"/>
<polygon points="386.0,509.7 389.7,510.2 388.7,516.8 383.9,516.0" fill="#e3b072" stroke="#8e4a12" stroke-width="0.9"/>
<polygon points="345.0,519.6 350.0,524.4 350.5,521.7 345.5,516.9" fill="#86440f" stroke="#86440f" stroke-width="0.9"/>
<polygon points="383.9,477.6 384.4,478.6 380.3,481.0 379.6,479.6" fill="#c18445" stroke="#8e4a12" stroke-width="0.9"/>
<polygon points="423.3,555.4 432.0,551.7 434.1,560.2 424.9,564.1" fill="#c98542" stroke="#8e4a12" stroke-width="0.9"/>
<polygon points="344.8,538.9 350.4,543.5 343.3,548.8 337.4,544.5" fill="#db9e5a" stroke="#8e4a12" stroke-width="0.9"/>
<polygon points="393.0,475.2 393.0,475.2 400.3,480.1 399.3,480.8" fill="#8e4a12" stroke="#8e4a12" stroke-width="0.9"/>
<polygon points="438.2,521.6 443.1,516.5 445.5,520.0 440.3,525.4" fill="#a05e23" stroke="#86440f" stroke-width="0.9"/>
<polygon points="393.4,510.4 397.1,510.1 398.4,516.6 393.5,517.0" fill="#e3b072" stroke="#8e4a12" stroke-width="0.9"/>
<polygon points="393.0,475.2 393.0,475.2 386.9,480.9 385.9,480.2" fill="#8e4a12" stroke="#8e4a12" stroke-width="0.9"/>
<polygon points="389.7,510.2 393.4,510.4 393.5,517.0 388.7,516.8" fill="#e3b072" stroke="#8e4a12" stroke-width="0.9"/>
<polygon points="404.9,482.0 405.9,480.7 406.7,482.4 405.7,483.8" fill="#98551c" stroke="#8e4a12" stroke-width="0.9"/>
<polygon points="424.8,519.8 429.5,516.1 432.8,519.3 427.6,523.2" fill="#e2ad6d" stroke="#8e4a12" stroke-width="0.9"/>
<polygon points="427.6,523.2 432.8,519.3 434.0,521.4 428.7,525.5" fill="#d3914d" stroke="#8e4a12" stroke-width="0.9"/>
<polygon points="393.0,475.2 393.0,475.2 399.3,480.8 398.3,481.4" fill="#8e4a12" stroke="#8e4a12" stroke-width="0.9"/>
<polygon points="393.0,475.2 393.0,475.2 388.0,481.5 386.9,480.9" fill="#8e4a12" stroke="#8e4a12" stroke-width="0.9"/>
<polygon points="403.0,486.3 404.4,485.1 403.3,486.2 401.9,487.2" fill="#8e4a12" stroke="#8e4a12" stroke-width="0.9"/>
<polygon points="436.7,520.7 441.5,515.8 443.1,516.5 438.2,521.6" fill="#86440f" stroke="#86440f" stroke-width="0.9"/>
<polygon points="380.3,481.0 381.3,482.3 380.6,484.1 379.5,482.8" fill="#9c581f" stroke="#8e4a12" stroke-width="0.9"/>
<polygon points="404.7,568.8 415.0,567.0 416.0,575.3 405.3,577.2" fill="#cb8643" stroke="#8e4a12" stroke-width="0.9"/>
<polygon points="393.0,475.2 393.0,475.2 398.3,481.4 397.1,481.9" fill="#8e4a12" stroke="#8e4a12" stroke-width="0.9"/>
<polygon points="393.0,475.2 393.0,475.2 389.2,482.0 388.0,481.5" fill="#8e4a12" stroke="#8e4a12" stroke-width="0.9"/>
<polygon points="381.9,485.4 383.4,486.5 384.4,487.4 383.0,486.4" fill="#8e4a12" stroke="#8e4a12" stroke-width="0.9"/>
<polygon points="355.9,552.6 364.8,556.1 363.2,564.8 353.9,561.2" fill="#cd8844" stroke="#8e4a12" stroke-width="0.9"/>
<polygon points="401.1,479.2 401.7,478.4 405.9,480.7 404.9,482.0" fill="#c38648" stroke="#8e4a12" stroke-width="0.9"/>
<polygon points="393.0,475.2 393.0,475.2 397.1,481.9 395.8,482.3" fill="#8e4a12" stroke="#8e4a12" stroke-width="0.9"/>
<polygon points="429.7,543.0 437.1,538.7 439.9,547.2 432.0,551.7" fill="#c78341" stroke="#8e4a12" stroke-width="0.9"/>
<polygon points="393.0,475.2 393.0,475.2 390.5,482.3 389.2,482.0" fill="#8e4a12" stroke="#8e4a12" stroke-width="0.9"/>
<polygon points="373.2,567.5 383.6,569.0 383.2,577.4 372.3,575.8" fill="#cd8844" stroke="#8e4a12" stroke-width="0.9"/>
<polygon points="393.0,475.2 393.0,475.2 395.8,482.3 394.5,482.5" fill="#904d14" stroke="#8e4a12" stroke-width="0.9"/>
<polygon points="384.4,478.6 385.1,479.4 381.3,482.3 380.3,481.0" fill="#c5894b" stroke="#8e4a12" stroke-width="0.9"/>
<polygon points="393.0,475.2 393.0,475.2 391.8,482.5 390.5,482.3" fill="#914d15" stroke="#8e4a12" stroke-width="0.9"/>
<polygon points="393.0,475.2 393.0,475.2 394.5,482.5 393.2,482.6" fill="#924f16" stroke="#8e4a12" stroke-width="0.9"/>
<polygon points="393.0,475.2 393.0,475.2 393.2,482.6 391.8,482.5" fill="#924f16" stroke="#8e4a12" stroke-width="0.9"/>
<polygon points="357.5,517.0 362.4,520.5 359.6,524.0 354.3,520.2" fill="#e3b072" stroke="#8e4a12" stroke-width="0.9"/>
<polygon points="343.9,517.7 349.0,522.7 346.9,526.5 341.5,521.3" fill="#a26026" stroke="#86440f" stroke-width="0.9"/>
<polygon points="308.2,580.8 310.2,578.0 312.8,579.8 311.1,582.6" fill="#824818" stroke="#8e4a12" stroke-width="0.9"/>
<polygon points="407.6,514.5 411.8,512.7 415.9,518.1 410.8,520.3" fill="#e2ae6f" stroke="#8e4a12" stroke-width="0.9"/>
<polygon points="354.3,520.2 359.6,524.0 358.6,526.3 353.1,522.4" fill="#d59551" stroke="#8e4a12" stroke-width="0.9"/>
<polygon points="323.6,582.1 328.9,586.7 331.9,588.1 326.4,583.5" fill="#8e4a12" stroke="#8e4a12" stroke-width="0.9"/>
<polygon points="434.2,530.1 440.3,525.4 443.7,533.6 437.1,538.7" fill="#c37f3e" stroke="#8e4a12" stroke-width="0.9"/>
<polygon points="401.3,487.2 403.0,486.3 401.9,487.2 400.4,488.1" fill="#8e4a12" stroke="#8e4a12" stroke-width="0.9"/>
<polygon points="403.8,483.2 404.9,482.0 405.7,483.8 404.4,485.1" fill="#9f5c21" stroke="#8e4a12" stroke-width="0.9"/>
<polygon points="345.5,516.9 350.5,521.7 349.0,522.7 343.9,517.7" fill="#86440f" stroke="#86440f" stroke-width="0.9"/>
<polygon points="375.1,513.2 379.4,514.8 376.4,520.7 371.2,518.6" fill="#e3af71" stroke="#8e4a12" stroke-width="0.9"/>
<polygon points="347.1,532.3 343.4,532.6 334.4,539.3 337.3,539.6" fill="#a96629" stroke="#8e4a12" stroke-width="0.9"/>
<polygon points="383.4,486.5 385.1,487.4 385.9,488.3 384.4,487.4" fill="#8e4a12" stroke="#8e4a12" stroke-width="0.9"/>
<polygon points="381.3,482.3 382.5,483.5 381.9,485.4 380.6,484.1" fill="#a35f24" stroke="#8e4a12" stroke-width="0.9"/>
<polygon points="350.5,539.7 358.1,543.8 355.9,552.6 347.8,548.3" fill="#cc8743" stroke="#8e4a12" stroke-width="0.9"/>
<polygon points="400.3,480.1 401.1,479.2 404.9,482.0 403.8,483.2" fill="#c68b4e" stroke="#8e4a12" stroke-width="0.9"/>
<polygon points="394.2,569.4 404.7,568.8 405.3,577.2 394.2,577.9" fill="#cd8844" stroke="#8e4a12" stroke-width="0.9"/>
<polygon points="415.9,518.1 420.6,515.4 424.8,519.8 419.4,522.9" fill="#e3ae70" stroke="#8e4a12" stroke-width="0.9"/>
<polygon points="310.2,578.0 314.9,577.5 317.1,579.3 312.8,579.8" fill="#713b0f" stroke="#8e4a12" stroke-width="0.9"/>
<polygon points="383.6,569.0 394.2,569.4 394.2,577.9 383.2,577.4" fill="#cd8844" stroke="#8e4a12" stroke-width="0.9"/>
<polygon points="385.1,479.4 385.9,480.2 382.5,483.5 381.3,482.3" fill="#c88e51" stroke="#8e4a12" stroke-width="0.9"/>
<polygon points="309.5,585.1 308.2,580.8 311.1,582.6 312.7,586.8" fill="#914f18" stroke="#8e4a12" stroke-width="0.9"/>
<polygon points="399.4,488.0 401.3,487.2 400.4,488.1 398.8,488.8" fill="#8e4a12" stroke="#8e4a12" stroke-width="0.9"/>
<polygon points="385.1,487.4 387.0,488.2 387.6,488.9 385.9,488.3" fill="#8e4a12" stroke="#8e4a12" stroke-width="0.9"/>
<polygon points="346.9,526.5 353.3,531.0 350.5,539.7 343.7,534.8" fill="#c88441" stroke="#8e4a12" stroke-width="0.9"/>
<polygon points="366.4,516.1 371.2,518.6 367.9,523.5 362.4,520.5" fill="#e3b072" stroke="#8e4a12" stroke-width="0.9"/>
<polygon points="402.4,484.3 403.8,483.2 404.4,485.1 403.0,486.3" fill="#a66226" stroke="#8e4a12" stroke-width="0.9"/>
<polygon points="328.9,593.7 324.5,594.2 328.8,595.1 332.7,594.7" fill="#8e4a12" stroke="#8e4a12" stroke-width="0.9"/>
<polygon points="399.3,480.8 400.3,480.1 403.8,483.2 402.4,484.3" fill="#c99053" stroke="#8e4a12" stroke-width="0.9"/>
<polygon points="403.1,515.8 407.6,514.5 410.8,520.3 405.3,521.9" fill="#e3af71" stroke="#8e4a12" stroke-width="0.9"/>
<polygon points="382.5,483.5 384.0,484.5 383.4,486.5 381.9,485.4" fill="#a96629" stroke="#8e4a12" stroke-width="0.9"/>
<polygon points="397.4,488.6 399.4,488.0 398.8,488.8 397.0,489.3" fill="#8e4a12" stroke="#8e4a12" stroke-width="0.9"/>
<polygon points="385.9,480.2 386.9,480.9 384.0,484.5 382.5,483.5" fill="#cb9356" stroke="#8e4a12" stroke-width="0.9"/>
<polygon points="387.0,488.2 389.0,488.7 389.4,489.4 387.6,488.9" fill="#8e4a12" stroke="#8e4a12" stroke-width="0.9"/>
<polygon points="413.9,558.1 423.3,555.4 424.9,564.1 415.0,567.0" fill="#cd8844" stroke="#8e4a12" stroke-width="0.9"/>
<polygon points="379.4,514.8 383.9,516.0 382.0,522.1 376.4,520.7" fill="#e3b072" stroke="#8e4a12" stroke-width="0.9"/>
<polygon points="431.5,527.8 437.2,523.4 436.7,520.7 431.0,525.0" fill="#86440f" stroke="#86440f" stroke-width="0.9"/>
<polygon points="395.4,489.0 397.4,488.6 397.0,489.3 395.1,489.6" fill="#8e4a12" stroke="#8e4a12" stroke-width="0.9"/>
<polygon points="389.0,488.7 391.1,489.0 391.3,489.7 389.4,489.4" fill="#8e4a12" stroke="#8e4a12" stroke-width="0.9"/>
<polygon points="393.2,489.1 395.4,489.0 395.1,489.6 393.2,489.8" fill="#8e4a12" stroke="#8e4a12" stroke-width="0.9"/>
<polygon points="398.3,481.4 399.3,480.8 402.4,484.3 400.8,485.2" fill="#cd9459" stroke="#8e4a12" stroke-width="0.9"/>
<polygon points="391.1,489.0 393.2,489.1 393.2,489.8 391.3,489.7" fill="#8e4a12" stroke="#8e4a12" stroke-width="0.9"/>
<polygon points="350.4,543.5 356.6,546.3 349.2,551.8 343.3,548.8" fill="#d69652" stroke="#8e4a12" stroke-width="0.9"/>
<polygon points="400.8,485.2 402.4,484.3 403.0,486.3 401.3,487.2" fill="#ac682a" stroke="#8e4a12" stroke-width="0.9"/>
<polygon points="328.9,586.7 330.5,590.9 333.8,592.1 331.9,588.1" fill="#94521a" stroke="#8e4a12" stroke-width="0.9"/>
<polygon points="386.9,480.9 388.0,481.5 385.6,485.4 384.0,484.5" fill="#ce975b" stroke="#8e4a12" stroke-width="0.9"/>
<polygon points="364.8,556.1 374.2,558.6 373.2,567.5 363.2,564.8" fill="#ce8a46" stroke="#8e4a12" stroke-width="0.9"/>
<polygon points="419.4,522.9 424.8,519.8 427.6,523.2 421.8,526.6" fill="#e4b073" stroke="#8e4a12" stroke-width="0.9"/>
<polygon points="384.0,484.5 385.6,485.4 385.1,487.4 383.4,486.5" fill="#ae6a2d" stroke="#8e4a12" stroke-width="0.9"/>
<polygon points="421.8,526.6 427.6,523.2 428.7,525.5 422.7,529.0" fill="#d59551" stroke="#8e4a12" stroke-width="0.9"/>
<polygon points="398.4,516.6 403.1,515.8 405.3,521.9 399.5,522.9" fill="#e3b072" stroke="#8e4a12" stroke-width="0.9"/>
<polygon points="330.5,590.9 328.9,593.7 332.7,594.7 333.8,592.1" fill="#824817" stroke="#8e4a12" stroke-width="0.9"/>
<polygon points="383.9,516.0 388.7,516.8 387.8,523.0 382.0,522.1" fill="#e4b073" stroke="#8e4a12" stroke-width="0.9"/>
<polygon points="350.0,524.4 355.9,528.7 356.3,525.9 350.5,521.7" fill="#86440f" stroke="#86440f" stroke-width="0.9"/>
<polygon points="397.1,481.9 398.3,481.4 400.8,485.2 399.0,485.9" fill="#cf985d" stroke="#8e4a12" stroke-width="0.9"/>
<polygon points="388.0,481.5 389.2,482.0 387.4,486.1 385.6,485.4" fill="#d09a5f" stroke="#8e4a12" stroke-width="0.9"/>
<polygon points="362.4,520.5 367.9,523.5 365.6,527.3 359.6,524.0" fill="#e5b377" stroke="#8e4a12" stroke-width="0.9"/>
<polygon points="399.0,485.9 400.8,485.2 401.3,487.2 399.4,488.0" fill="#b16d2e" stroke="#8e4a12" stroke-width="0.9"/>
<polygon points="410.8,520.3 415.9,518.1 419.4,522.9 413.5,525.3" fill="#e4b073" stroke="#8e4a12" stroke-width="0.9"/>
<polygon points="314.9,577.5 321.5,580.1 323.6,582.1 317.1,579.3" fill="#8e4a12" stroke="#8e4a12" stroke-width="0.9"/>
<polygon points="385.6,485.4 387.4,486.1 387.0,488.2 385.1,487.4" fill="#b36f30" stroke="#8e4a12" stroke-width="0.9"/>
<polygon points="393.5,517.0 398.4,516.6 399.5,522.9 393.7,523.2" fill="#e4b173" stroke="#8e4a12" stroke-width="0.9"/>
<polygon points="388.7,516.8 393.5,517.0 393.7,523.2 387.8,523.0" fill="#e4b173" stroke="#8e4a12" stroke-width="0.9"/>
<polygon points="359.6,524.0 365.6,527.3 364.8,529.7 358.6,526.3" fill="#d79854" stroke="#8e4a12" stroke-width="0.9"/>
<polygon points="395.8,482.3 397.1,481.9 399.0,485.9 397.2,486.5" fill="#d19b61" stroke="#8e4a12" stroke-width="0.9"/>
<polygon points="421.4,546.4 429.7,543.0 432.0,551.7 423.3,555.4" fill="#cc8744" stroke="#8e4a12" stroke-width="0.9"/>
<polygon points="432.3,526.1 438.2,521.6 440.3,525.4 434.2,530.1" fill="#a56328" stroke="#86440f" stroke-width="0.9"/>
<polygon points="389.2,482.0 390.5,482.3 389.3,486.6 387.4,486.1" fill="#d29d63" stroke="#8e4a12" stroke-width="0.9"/>
<polygon points="371.2,518.6 376.4,520.7 373.9,525.8 367.9,523.5" fill="#e4b275" stroke="#8e4a12" stroke-width="0.9"/>
<polygon points="314.7,589.8 309.5,585.1 312.7,586.8 318.1,591.5" fill="#8e4a12" stroke="#8e4a12" stroke-width="0.9"/>
<polygon points="431.0,525.0 436.7,520.7 438.2,521.6 432.3,526.1" fill="#86440f" stroke="#86440f" stroke-width="0.9"/>
<polygon points="397.2,486.5 399.0,485.9 399.4,488.0 397.4,488.6" fill="#b57031" stroke="#8e4a12" stroke-width="0.9"/>
<polygon points="394.5,482.5 395.8,482.3 397.2,486.5 395.2,486.8" fill="#d29e64" stroke="#8e4a12" stroke-width="0.9"/>
<polygon points="390.5,482.3 391.8,482.5 391.2,486.9 389.3,486.6" fill="#d39f65" stroke="#8e4a12" stroke-width="0.9"/>
<polygon points="387.4,486.1 389.3,486.6 389.0,488.7 387.0,488.2" fill="#b67232" stroke="#8e4a12" stroke-width="0.9"/>
<polygon points="393.2,482.6 394.5,482.5 395.2,486.8 393.2,487.0" fill="#d39f65" stroke="#8e4a12" stroke-width="0.9"/>
<polygon points="391.8,482.5 393.2,482.6 393.2,487.0 391.2,486.9" fill="#d39f66" stroke="#8e4a12" stroke-width="0.9"/>
<polygon points="404.1,559.8 413.9,558.1 415.0,567.0 404.7,568.8" fill="#cf8a46" stroke="#8e4a12" stroke-width="0.9"/>
<polygon points="353.3,535.2 347.1,532.3 337.3,539.6 343.2,542.7" fill="#d69753" stroke="#8e4a12" stroke-width="0.9"/>
<polygon points="358.1,543.8 366.5,547.1 364.8,556.1 355.9,552.6" fill="#ce8a46" stroke="#8e4a12" stroke-width="0.9"/>
<polygon points="395.2,486.8 397.2,486.5 397.4,488.6 395.4,489.0" fill="#b77333" stroke="#8e4a12" stroke-width="0.9"/>
<polygon points="389.3,486.6 391.2,486.9 391.1,489.0 389.0,488.7" fill="#b87434" stroke="#8e4a12" stroke-width="0.9"/>
<polygon points="374.2,558.6 384.1,560.1 383.6,569.0 373.2,567.5" fill="#cf8c48" stroke="#8e4a12" stroke-width="0.9"/>
<polygon points="393.2,487.0 395.2,486.8 395.4,489.0 393.2,489.1" fill="#b87434" stroke="#8e4a12" stroke-width="0.9"/>
<polygon points="391.2,486.9 393.2,487.0 393.2,489.1 391.1,489.0" fill="#b97434" stroke="#8e4a12" stroke-width="0.9"/>
<polygon points="349.0,522.7 355.1,527.0 353.3,531.0 346.9,526.5" fill="#a7652a" stroke="#86440f" stroke-width="0.9"/>
<polygon points="334.4,541.1 337.4,544.5 330.9,549.4 327.3,546.5" fill="#da9d59" stroke="#8e4a12" stroke-width="0.9"/>
<polygon points="427.2,534.1 434.2,530.1 437.1,538.7 429.7,543.0" fill="#c98441" stroke="#8e4a12" stroke-width="0.9"/>
<polygon points="350.5,521.7 356.3,525.9 355.1,527.0 349.0,522.7" fill="#86440f" stroke="#86440f" stroke-width="0.9"/>
<polygon points="405.3,521.9 410.8,520.3 413.5,525.3 407.1,527.2" fill="#e4b275" stroke="#8e4a12" stroke-width="0.9"/>
<polygon points="394.1,560.5 404.1,559.8 404.7,568.8 394.2,569.4" fill="#cf8c48" stroke="#8e4a12" stroke-width="0.9"/>
<polygon points="413.5,525.3 419.4,522.9 421.8,526.6 415.3,529.3" fill="#e5b477" stroke="#8e4a12" stroke-width="0.9"/>
<polygon points="384.1,560.1 394.1,560.5 394.2,569.4 383.6,569.0" fill="#d08c48" stroke="#8e4a12" stroke-width="0.9"/>
<polygon points="353.3,531.0 360.4,534.9 358.1,543.8 350.5,539.7" fill="#cd8844" stroke="#8e4a12" stroke-width="0.9"/>
<polygon points="376.4,520.7 382.0,522.1 380.3,527.5 373.9,525.8" fill="#e5b376" stroke="#8e4a12" stroke-width="0.9"/>
<polygon points="337.4,544.5 343.3,548.8 337.1,553.5 330.9,549.4" fill="#db9e5a" stroke="#8e4a12" stroke-width="0.9"/>
<polygon points="415.3,529.3 421.8,526.6 422.7,529.0 416.0,531.8" fill="#d79854" stroke="#8e4a12" stroke-width="0.9"/>
<polygon points="367.9,523.5 373.9,525.8 372.2,529.8 365.6,527.3" fill="#e6b67a" stroke="#8e4a12" stroke-width="0.9"/>
<polygon points="425.0,531.5 431.5,527.8 431.0,525.0 424.6,528.7" fill="#86440f" stroke="#86440f" stroke-width="0.9"/>
<polygon points="334.4,539.3 334.4,541.1 327.3,546.5 326.5,545.3" fill="#884915" stroke="#8e4a12" stroke-width="0.9"/>
<polygon points="356.6,546.3 360.3,546.1 352.1,552.2 349.2,551.8" fill="#a76427" stroke="#8e4a12" stroke-width="0.9"/>
<polygon points="365.6,527.3 372.2,529.8 371.5,532.3 364.8,529.7" fill="#d99b57" stroke="#8e4a12" stroke-width="0.9"/>
<polygon points="412.7,549.0 421.4,546.4 423.3,555.4 413.9,558.1" fill="#cf8b47" stroke="#8e4a12" stroke-width="0.9"/>
<polygon points="399.5,522.9 405.3,521.9 407.1,527.2 400.5,528.3" fill="#e5b376" stroke="#8e4a12" stroke-width="0.9"/>
<polygon points="355.9,528.7 362.6,532.3 362.9,529.4 356.3,525.9" fill="#86440f" stroke="#86440f" stroke-width="0.9"/>
<polygon points="382.0,522.1 387.8,523.0 387.0,528.5 380.3,527.5" fill="#e5b477" stroke="#8e4a12" stroke-width="0.9"/>
<polygon points="321.5,580.1 326.7,584.8 328.9,586.7 323.6,582.1" fill="#8e4a12" stroke="#8e4a12" stroke-width="0.9"/>
<polygon points="306.2,578.4 308.5,575.6 310.2,578.0 308.2,580.8" fill="#834817" stroke="#8e4a12" stroke-width="0.9"/>
<polygon points="366.5,547.1 375.4,549.4 374.2,558.6 364.8,556.1" fill="#d08d49" stroke="#8e4a12" stroke-width="0.9"/>
<polygon points="308.5,575.6 313.4,575.2 314.9,577.5 310.2,578.0" fill="#6c3a10" stroke="#8e4a12" stroke-width="0.9"/>
<polygon points="393.7,523.2 399.5,522.9 400.5,528.3 393.8,528.8" fill="#e5b477" stroke="#8e4a12" stroke-width="0.9"/>
<polygon points="321.3,592.4 314.7,589.8 318.1,591.5 324.5,594.2" fill="#8e4a12" stroke="#8e4a12" stroke-width="0.9"/>
<polygon points="387.8,523.0 393.7,523.2 393.8,528.8 387.0,528.5" fill="#e5b478" stroke="#8e4a12" stroke-width="0.9"/>
<polygon points="407.1,527.2 413.5,525.3 415.3,529.3 408.4,531.3" fill="#e6b67b" stroke="#8e4a12" stroke-width="0.9"/>
<polygon points="425.7,529.9 432.3,526.1 434.2,530.1 427.2,534.1" fill="#a9672c" stroke="#86440f" stroke-width="0.9"/>
<polygon points="358.9,539.7 353.3,535.2 343.2,542.7 349.1,547.0" fill="#db9e5a" stroke="#8e4a12" stroke-width="0.9"/>
<polygon points="424.6,528.7 431.0,525.0 432.3,526.1 425.7,529.9" fill="#86440f" stroke="#86440f" stroke-width="0.9"/>
<polygon points="373.9,525.8 380.3,527.5 379.2,531.7 372.2,529.8" fill="#e7b87d" stroke="#8e4a12" stroke-width="0.9"/>
<polygon points="408.4,531.3 415.3,529.3 416.0,531.8 408.9,533.8" fill="#d99b57" stroke="#8e4a12" stroke-width="0.9"/>
<polygon points="419.6,537.3 427.2,534.1 429.7,543.0 421.4,546.4" fill="#cd8945" stroke="#8e4a12" stroke-width="0.9"/>
<polygon points="372.2,529.8 379.2,531.7 378.7,534.2 371.5,532.3" fill="#da9d59" stroke="#8e4a12" stroke-width="0.9"/>
<polygon points="355.1,527.0 361.9,530.7 360.4,534.9 353.3,531.0" fill="#aa692e" stroke="#86440f" stroke-width="0.9"/>
<polygon points="307.2,582.5 306.2,578.4 308.2,580.8 309.5,585.1" fill="#8e4a12" stroke="#8e4a12" stroke-width="0.9"/>
<polygon points="356.3,525.9 362.9,529.4 361.9,530.7 355.1,527.0" fill="#86440f" stroke="#86440f" stroke-width="0.9"/>
<polygon points="360.3,546.1 361.1,543.6 352.1,550.3 352.1,552.2" fill="#894914" stroke="#8e4a12" stroke-width="0.9"/>
<polygon points="403.5,550.6 412.7,549.0 413.9,558.1 404.1,559.8" fill="#d08d49" stroke="#8e4a12" stroke-width="0.9"/>
<polygon points="360.4,534.9 368.2,537.9 366.5,547.1 358.1,543.8" fill="#cf8b47" stroke="#8e4a12" stroke-width="0.9"/>
<polygon points="375.4,549.4 384.6,550.8 384.1,560.1 374.2,558.6" fill="#d18e4a" stroke="#8e4a12" stroke-width="0.9"/>
<polygon points="400.5,528.3 407.1,527.2 408.4,531.3 401.2,532.6" fill="#e7b87d" stroke="#8e4a12" stroke-width="0.9"/>
<polygon points="417.8,534.5 425.0,531.5 424.6,528.7 417.5,531.7" fill="#86440f" stroke="#86440f" stroke-width="0.9"/>
<polygon points="313.4,575.2 320.1,577.9 321.5,580.1 314.9,577.5" fill="#804310" stroke="#8e4a12" stroke-width="0.9"/>
<polygon points="380.3,527.5 387.0,528.5 386.4,532.8 379.2,531.7" fill="#e8b97f" stroke="#8e4a12" stroke-width="0.9"/>
<polygon points="343.3,548.8 349.2,551.8 342.7,556.8 337.1,553.5" fill="#d69753" stroke="#8e4a12" stroke-width="0.9"/>
<polygon points="337.3,539.6 334.4,539.3 326.5,545.3 328.9,546.1" fill="#ab682b" stroke="#8e4a12" stroke-width="0.9"/>
<polygon points="361.1,543.6 358.9,539.7 349.1,547.0 352.1,550.3" fill="#d99c58" stroke="#8e4a12" stroke-width="0.9"/>
<polygon points="326.7,584.8 328.0,589.0 330.5,590.9 328.9,586.7" fill="#8e4a12" stroke="#8e4a12" stroke-width="0.9"/>
<polygon points="401.2,532.6 408.4,531.3 408.9,533.8 401.5,535.1" fill="#da9d59" stroke="#8e4a12" stroke-width="0.9"/>
<polygon points="394.1,551.2 403.5,550.6 404.1,559.8 394.1,560.5" fill="#d18e4a" stroke="#8e4a12" stroke-width="0.9"/>
<polygon points="384.6,550.8 394.1,551.2 394.1,560.5 384.1,560.1" fill="#d18f4b" stroke="#8e4a12" stroke-width="0.9"/>
<polygon points="362.6,532.3 369.9,535.1 370.1,532.3 362.9,529.4" fill="#86440f" stroke="#86440f" stroke-width="0.9"/>
<polygon points="393.8,528.8 400.5,528.3 401.2,532.6 393.8,533.1" fill="#e8b97f" stroke="#8e4a12" stroke-width="0.9"/>
<polygon points="325.9,591.9 321.3,592.4 324.5,594.2 328.9,593.7" fill="#7a3f10" stroke="#8e4a12" stroke-width="0.9"/>
<polygon points="379.2,531.7 386.4,532.8 386.2,535.3 378.7,534.2" fill="#db9e5a" stroke="#8e4a12" stroke-width="0.9"/>
<polygon points="387.0,528.5 393.8,528.8 393.8,533.1 386.4,532.8" fill="#e8b97f" stroke="#8e4a12" stroke-width="0.9"/>
<polygon points="393.8,533.1 401.2,532.6 401.5,535.1 393.8,535.6" fill="#db9e5a" stroke="#8e4a12" stroke-width="0.9"/>
<polygon points="386.4,532.8 393.8,533.1 393.8,535.6 386.2,535.3" fill="#db9e5a" stroke="#8e4a12" stroke-width="0.9"/>
<polygon points="328.0,589.0 325.9,591.9 328.9,593.7 330.5,590.9" fill="#824818" stroke="#8e4a12" stroke-width="0.9"/>
<polygon points="327.3,546.5 330.9,549.4 325.3,553.8 321.2,551.4" fill="#d99c58" stroke="#8e4a12" stroke-width="0.9"/>
<polygon points="411.3,539.7 419.6,537.3 421.4,546.4 412.7,549.0" fill="#cf8c48" stroke="#8e4a12" stroke-width="0.9"/>
<polygon points="417.5,531.7 424.6,528.7 425.7,529.9 418.4,533.0" fill="#86440f" stroke="#86440f" stroke-width="0.9"/>
<polygon points="418.4,533.0 425.7,529.9 427.2,534.1 419.6,537.3" fill="#ab6b2f" stroke="#86440f" stroke-width="0.9"/>
<polygon points="368.2,537.9 376.5,540.1 375.4,549.4 366.5,547.1" fill="#d18e4a" stroke="#8e4a12" stroke-width="0.9"/>
<polygon points="330.9,549.4 337.1,553.5 331.7,557.8 325.3,553.8" fill="#dca05c" stroke="#8e4a12" stroke-width="0.9"/>
<polygon points="362.9,529.4 370.1,532.3 369.3,533.6 361.9,530.7" fill="#86440f" stroke="#86440f" stroke-width="0.9"/>
<polygon points="312.3,587.2 307.2,582.5 309.5,585.1 314.7,589.8" fill="#8e4a12" stroke="#8e4a12" stroke-width="0.9"/>
<polygon points="410.1,536.8 417.8,534.5 417.5,531.7 409.9,533.9" fill="#884611" stroke="#86440f" stroke-width="0.9"/>
<polygon points="361.9,530.7 369.3,533.6 368.2,537.9 360.4,534.9" fill="#ac6c30" stroke="#86440f" stroke-width="0.9"/>
<polygon points="369.9,535.1 377.6,537.2 377.8,534.3 370.1,532.3" fill="#894711" stroke="#86440f" stroke-width="0.9"/>
<polygon points="307.4,572.9 312.4,572.7 313.4,575.2 308.5,575.6" fill="#7a4415" stroke="#8e4a12" stroke-width="0.9"/>
<polygon points="320.1,577.9 325.2,582.5 326.7,584.8 321.5,580.1" fill="#8e4a12" stroke="#8e4a12" stroke-width="0.9"/>
<polygon points="326.5,545.3 327.3,546.5 321.2,551.4 319.9,550.6" fill="#894914" stroke="#8e4a12" stroke-width="0.9"/>
<polygon points="402.8,541.2 411.3,539.7 412.7,549.0 403.5,550.6" fill="#d18e4a" stroke="#8e4a12" stroke-width="0.9"/>
<polygon points="304.9,575.3 307.4,572.9 308.5,575.6 306.2,578.4" fill="#844817" stroke="#8e4a12" stroke-width="0.9"/>
<polygon points="376.5,540.1 385.2,541.4 384.6,550.8 375.4,549.4" fill="#d18f4b" stroke="#8e4a12" stroke-width="0.9"/>
<polygon points="402.1,538.2 410.1,536.8 409.9,533.9 402.0,535.3" fill="#8a4812" stroke="#86440f" stroke-width="0.9"/>
<polygon points="349.2,551.8 352.1,552.2 345.0,557.6 342.7,556.8" fill="#a96629" stroke="#8e4a12" stroke-width="0.9"/>
<polygon points="343.2,542.7 337.3,539.6 328.9,546.1 334.5,549.3" fill="#d79753" stroke="#8e4a12" stroke-width="0.9"/>
<polygon points="409.9,533.9 417.5,531.7 418.4,533.0 410.5,535.3" fill="#86440f" stroke="#86440f" stroke-width="0.9"/>
<polygon points="377.6,537.2 385.7,538.4 385.8,535.5 377.8,534.3" fill="#8a4812" stroke="#86440f" stroke-width="0.9"/>
<polygon points="410.5,535.3 418.4,533.0 419.6,537.3 411.3,539.7" fill="#ae6e31" stroke="#86440f" stroke-width="0.9"/>
<polygon points="394.0,541.8 402.8,541.2 403.5,550.6 394.1,551.2" fill="#d28f4b" stroke="#8e4a12" stroke-width="0.9"/>
<polygon points="370.1,532.3 377.8,534.3 377.3,535.7 369.3,533.6" fill="#86440f" stroke="#86440f" stroke-width="0.9"/>
<polygon points="385.2,541.4 394.0,541.8 394.1,551.2 384.6,550.8" fill="#d2904c" stroke="#8e4a12" stroke-width="0.9"/>
<polygon points="369.3,533.6 377.3,535.7 376.5,540.1 368.2,537.9" fill="#ae6e32" stroke="#86440f" stroke-width="0.9"/>
<polygon points="312.4,572.7 319.2,575.5 320.1,577.9 313.4,575.2" fill="#743e11" stroke="#8e4a12" stroke-width="0.9"/>
<polygon points="393.9,538.7 402.1,538.2 402.0,535.3 393.9,535.8" fill="#8b4913" stroke="#86440f" stroke-width="0.9"/>
<polygon points="385.7,538.4 393.9,538.7 393.9,535.8 385.8,535.5" fill="#8b4913" stroke="#86440f" stroke-width="0.9"/>
<polygon points="337.1,553.5 342.7,556.8 337.1,561.2 331.7,557.8" fill="#d79955" stroke="#8e4a12" stroke-width="0.9"/>
<polygon points="319.0,589.9 312.3,587.2 314.7,589.8 321.3,592.4" fill="#8d4912" stroke="#8e4a12" stroke-width="0.9"/>
<polygon points="305.8,579.2 304.9,575.3 306.2,578.4 307.2,582.5" fill="#8e4a12" stroke="#8e4a12" stroke-width="0.9"/>
<polygon points="402.0,535.3 409.9,533.9 410.5,535.3 402.3,536.7" fill="#86440f" stroke="#86440f" stroke-width="0.9"/>
<polygon points="402.3,536.7 410.5,535.3 411.3,539.7 402.8,541.2" fill="#af6f33" stroke="#86440f" stroke-width="0.9"/>
<polygon points="377.8,534.3 385.8,535.5 385.5,536.9 377.3,535.7" fill="#86440f" stroke="#86440f" stroke-width="0.9"/>
<polygon points="321.2,551.4 325.3,553.8 320.6,557.8 316.2,555.7" fill="#d79b58" stroke="#8e4a12" stroke-width="0.9"/>
<polygon points="377.3,535.7 385.5,536.9 385.2,541.4 376.5,540.1" fill="#b07034" stroke="#86440f" stroke-width="0.9"/>
<polygon points="325.2,582.5 326.2,586.7 328.0,589.0 326.7,584.8" fill="#8e4a12" stroke="#8e4a12" stroke-width="0.9"/>
<polygon points="393.9,535.8 402.0,535.3 402.3,536.7 393.9,537.3" fill="#86440f" stroke="#86440f" stroke-width="0.9"/>
<polygon points="325.3,553.8 331.7,557.8 327.2,561.6 320.6,557.8" fill="#dfa664" stroke="#8e4a12" stroke-width="0.9"/>
<polygon points="385.8,535.5 393.9,535.8 393.9,537.3 385.5,536.9" fill="#86440f" stroke="#86440f" stroke-width="0.9"/>
<polygon points="393.9,537.3 402.3,536.7 402.8,541.2 394.0,541.8" fill="#b07034" stroke="#86440f" stroke-width="0.9"/>
<polygon points="385.5,536.9 393.9,537.3 394.0,541.8 385.2,541.4" fill="#b07034" stroke="#86440f" stroke-width="0.9"/>
<polygon points="328.9,546.1 326.5,545.3 319.9,550.6 321.7,551.8" fill="#ae6a2c" stroke="#8e4a12" stroke-width="0.9"/>
<polygon points="352.1,552.2 352.1,550.3 344.3,556.3 345.0,557.6" fill="#884915" stroke="#8e4a12" stroke-width="0.9"/>
<polygon points="307.1,569.8 312.2,570.1 312.4,572.7 307.4,572.9" fill="#91521c" stroke="#8e4a12" stroke-width="0.9"/>
<polygon points="349.1,547.0 343.2,542.7 334.5,549.3 340.7,553.4" fill="#db9f5b" stroke="#8e4a12" stroke-width="0.9"/>
<polygon points="323.9,589.4 319.0,589.9 321.3,592.4 325.9,591.9" fill="#65350f" stroke="#8e4a12" stroke-width="0.9"/>
<polygon points="326.2,586.7 323.9,589.4 325.9,591.9 328.0,589.0" fill="#834817" stroke="#8e4a12" stroke-width="0.9"/>
<polygon points="319.2,575.5 324.3,580.0 325.2,582.5 320.1,577.9" fill="#8e4a12" stroke="#8e4a12" stroke-width="0.9"/>
<polygon points="304.5,571.7 307.1,569.8 307.4,572.9 304.9,575.3" fill="#864916" stroke="#8e4a12" stroke-width="0.9"/>
<polygon points="352.1,550.3 349.1,547.0 340.7,553.4 344.3,556.3" fill="#da9d59" stroke="#8e4a12" stroke-width="0.9"/>
<polygon points="319.9,550.6 321.2,551.4 316.2,555.7 314.4,555.4" fill="#8a4914" stroke="#8e4a12" stroke-width="0.9"/>
<polygon points="312.2,570.1 319.0,573.1 319.2,575.5 312.4,572.7" fill="#864a18" stroke="#8e4a12" stroke-width="0.9"/>
<polygon points="310.8,583.7 305.8,579.2 307.2,582.5 312.3,587.2" fill="#8c4912" stroke="#8e4a12" stroke-width="0.9"/>
<polygon points="316.2,555.7 320.6,557.8 317.0,561.3 312.2,559.7" fill="#d69c5c" stroke="#8e4a12" stroke-width="0.9"/>
<polygon points="342.7,556.8 345.0,557.6 338.9,562.4 337.1,561.2" fill="#ac682a" stroke="#8e4a12" stroke-width="0.9"/>
<polygon points="320.6,557.8 327.2,561.6 323.6,564.9 317.0,561.3" fill="#e3ae70" stroke="#8e4a12" stroke-width="0.9"/>
<polygon points="331.7,557.8 337.1,561.2 332.5,565.1 327.2,561.6" fill="#d99b57" stroke="#8e4a12" stroke-width="0.9"/>
<polygon points="307.7,566.6 312.7,567.4 312.2,570.1 307.1,569.8" fill="#ac6a2d" stroke="#8e4a12" stroke-width="0.9"/>
<polygon points="305.4,575.1 304.5,571.7 304.9,575.3 305.8,579.2" fill="#8e4a12" stroke="#8e4a12" stroke-width="0.9"/>
<polygon points="312.7,567.4 319.5,570.7 319.0,573.1 312.2,570.1" fill="#af6c2e" stroke="#8e4a12" stroke-width="0.9"/>
<polygon points="334.5,549.3 328.9,546.1 321.7,551.8 327.1,555.3" fill="#d89955" stroke="#8e4a12" stroke-width="0.9"/>
<polygon points="312.2,559.7 317.0,561.3 314.3,564.5 309.4,563.3" fill="#d29859" stroke="#8e4a12" stroke-width="0.9"/>
<polygon points="324.3,580.0 325.1,583.9 326.2,586.7 325.2,582.5" fill="#8e4a12" stroke="#8e4a12" stroke-width="0.9"/>
<polygon points="309.4,563.3 314.3,564.5 312.7,567.4 307.7,566.6" fill="#c68746" stroke="#8e4a12" stroke-width="0.9"/>
<polygon points="317.0,561.3 323.6,564.9 321.1,568.0 314.3,564.5" fill="#e2b277" stroke="#8e4a12" stroke-width="0.9"/>
<polygon points="319.0,573.1 324.0,577.5 324.3,580.0 319.2,575.5" fill="#844613" stroke="#8e4a12" stroke-width="0.9"/>
<polygon points="314.4,555.4 316.2,555.7 312.2,559.7 310.1,559.9" fill="#8c4a13" stroke="#8e4a12" stroke-width="0.9"/>
<polygon points="305.2,567.9 307.7,566.6 307.1,569.8 304.5,571.7" fill="#894914" stroke="#8e4a12" stroke-width="0.9"/>
<polygon points="314.3,564.5 321.1,568.0 319.5,570.7 312.7,567.4" fill="#d59c5d" stroke="#8e4a12" stroke-width="0.9"/>
<polygon points="317.6,586.6 310.8,583.7 312.3,587.2 319.0,589.9" fill="#65350f" stroke="#8e4a12" stroke-width="0.9"/>
<polygon points="321.7,551.8 319.9,550.6 314.4,555.4 315.8,557.1" fill="#af6b2e" stroke="#8e4a12" stroke-width="0.9"/>
<polygon points="327.2,561.6 332.5,565.1 328.8,568.7 323.6,564.9" fill="#d99d59" stroke="#8e4a12" stroke-width="0.9"/>
<polygon points="345.0,557.6 344.3,556.3 337.6,561.7 338.9,562.4" fill="#894914" stroke="#8e4a12" stroke-width="0.9"/>
<polygon points="325.1,583.9 322.7,586.4 323.9,589.4 326.2,586.7" fill="#844817" stroke="#8e4a12" stroke-width="0.9"/>
<polygon points="310.1,559.9 312.2,559.7 309.4,563.3 307.0,564.0" fill="#8d4a12" stroke="#8e4a12" stroke-width="0.9"/>
<polygon points="307.0,564.0 309.4,563.3 307.7,566.6 305.2,567.9" fill="#8c4a13" stroke="#8e4a12" stroke-width="0.9"/>
<polygon points="322.7,586.4 317.6,586.6 319.0,589.9 323.9,589.4" fill="#754015" stroke="#8e4a12" stroke-width="0.9"/>
<polygon points="337.1,561.2 338.9,562.4 333.9,566.8 332.5,565.1" fill="#ad692b" stroke="#8e4a12" stroke-width="0.9"/>
<polygon points="319.5,570.7 324.5,574.8 324.0,577.5 319.0,573.1" fill="#a15f25" stroke="#8e4a12" stroke-width="0.9"/>
<polygon points="340.7,553.4 334.5,549.3 327.1,555.3 333.5,559.2" fill="#dda25e" stroke="#8e4a12" stroke-width="0.9"/>
<polygon points="310.4,579.5 305.4,575.1 305.8,579.2 310.8,583.7" fill="#764115" stroke="#8e4a12" stroke-width="0.9"/>
<polygon points="323.6,564.9 328.8,568.7 326.1,571.9 321.1,568.0" fill="#d79e5c" stroke="#8e4a12" stroke-width="0.9"/>
<polygon points="344.3,556.3 340.7,553.4 333.5,559.2 337.6,561.7" fill="#db9e5a" stroke="#8e4a12" stroke-width="0.9"/>
<polygon points="306.0,570.8 305.2,567.9 304.5,571.7 305.4,575.1" fill="#8e4a12" stroke="#8e4a12" stroke-width="0.9"/>
<polygon points="321.1,568.0 326.1,571.9 324.5,574.8 319.5,570.7" fill="#ca8b49" stroke="#8e4a12" stroke-width="0.9"/>
<polygon points="324.0,577.5 324.8,580.9 325.1,583.9 324.3,580.0" fill="#8e4a12" stroke="#8e4a12" stroke-width="0.9"/>
<polygon points="315.8,557.1 314.4,555.4 310.1,559.9 311.2,561.9" fill="#af6b2d" stroke="#8e4a12" stroke-width="0.9"/>
<polygon points="327.1,555.3 321.7,551.8 315.8,557.1 321.1,560.7" fill="#da9d59" stroke="#8e4a12" stroke-width="0.9"/>
<polygon points="308.0,566.4 307.0,564.0 305.2,567.9 306.0,570.8" fill="#945219" stroke="#8e4a12" stroke-width="0.9"/>
<polygon points="332.5,565.1 333.9,566.8 329.9,570.7 328.8,568.7" fill="#ad692b" stroke="#8e4a12" stroke-width="0.9"/>
<polygon points="311.2,561.9 310.1,559.9 307.0,564.0 308.0,566.4" fill="#a76327" stroke="#8e4a12" stroke-width="0.9"/>
<polygon points="317.2,582.5 310.4,579.5 310.8,583.7 317.6,586.6" fill="#834b1b" stroke="#8e4a12" stroke-width="0.9"/>
<polygon points="324.8,580.9 322.3,582.8 322.7,586.4 325.1,583.9" fill="#864916" stroke="#8e4a12" stroke-width="0.9"/>
<polygon points="338.9,562.4 337.6,561.7 332.1,566.5 333.9,566.8" fill="#8a4914" stroke="#8e4a12" stroke-width="0.9"/>
<polygon points="324.5,574.8 325.4,577.7 324.8,580.9 324.0,577.5" fill="#8e4a12" stroke="#8e4a12" stroke-width="0.9"/>
<polygon points="322.3,582.8 317.2,582.5 317.6,586.6 322.7,586.4" fill="#92541e" stroke="#8e4a12" stroke-width="0.9"/>
<polygon points="311.0,574.9 306.0,570.8 305.4,575.1 310.4,579.5" fill="#a06027" stroke="#8e4a12" stroke-width="0.9"/>
<polygon points="328.8,568.7 329.9,570.7 327.1,574.3 326.1,571.9" fill="#a76326" stroke="#8e4a12" stroke-width="0.9"/>
<polygon points="326.1,571.9 327.1,574.3 325.4,577.7 324.5,574.8" fill="#955118" stroke="#8e4a12" stroke-width="0.9"/>
<polygon points="333.5,559.2 327.1,555.3 321.1,560.7 327.6,564.4" fill="#e0a969" stroke="#8e4a12" stroke-width="0.9"/>
<polygon points="321.1,560.7 315.8,557.1 311.2,561.9 316.4,565.6" fill="#dda25e" stroke="#8e4a12" stroke-width="0.9"/>
<polygon points="337.6,561.7 333.5,559.2 327.6,564.4 332.1,566.5" fill="#dca05d" stroke="#8e4a12" stroke-width="0.9"/>
<polygon points="333.9,566.8 332.1,566.5 327.8,570.9 329.9,570.7" fill="#8c4a13" stroke="#8e4a12" stroke-width="0.9"/>
<polygon points="325.4,577.7 322.9,578.9 322.3,582.8 324.8,580.9" fill="#894914" stroke="#8e4a12" stroke-width="0.9"/>
<polygon points="313.1,570.3 308.0,566.4 306.0,570.8 311.0,574.9" fill="#cf8d49" stroke="#8e4a12" stroke-width="0.9"/>
<polygon points="316.4,565.6 311.2,561.9 308.0,566.4 313.1,570.3" fill="#dda25f" stroke="#8e4a12" stroke-width="0.9"/>
<polygon points="317.8,578.1 311.0,574.9 310.4,579.5 317.2,582.5" fill="#b06e32" stroke="#8e4a12" stroke-width="0.9"/>
<polygon points="322.9,578.9 317.8,578.1 317.2,582.5 322.3,582.8" fill="#ae6c2f" stroke="#8e4a12" stroke-width="0.9"/>
<polygon points="329.9,570.7 327.8,570.9 324.7,575.0 327.1,574.3" fill="#8d4a12" stroke="#8e4a12" stroke-width="0.9"/>
<polygon points="327.1,574.3 324.7,575.0 322.9,578.9 325.4,577.7" fill="#8c4a13" stroke="#8e4a12" stroke-width="0.9"/>
<polygon points="327.6,564.4 321.1,560.7 316.4,565.6 323.1,569.2" fill="#e5b478" stroke="#8e4a12" stroke-width="0.9"/>
<polygon points="332.1,566.5 327.6,564.4 323.1,569.2 327.8,570.9" fill="#dba261" stroke="#8e4a12" stroke-width="0.9"/>
<polygon points="319.8,573.8 313.1,570.3 311.0,574.9 317.8,578.1" fill="#d89a56" stroke="#8e4a12" stroke-width="0.9"/>
<polygon points="323.1,569.2 316.4,565.6 313.1,570.3 319.8,573.8" fill="#e7b87d" stroke="#8e4a12" stroke-width="0.9"/>
<polygon points="324.7,575.0 319.8,573.8 317.8,578.1 322.9,578.9" fill="#cc8a48" stroke="#8e4a12" stroke-width="0.9"/>
<polygon points="327.8,570.9 323.1,569.2 319.8,573.8 324.7,575.0" fill="#d79c5b" stroke="#8e4a12" stroke-width="0.9"/><polygon points="475.4,422.4 474.6,422.1 473.7,422.0 472.7,422.1 471.7,422.4 470.8,422.8 469.9,423.4 469.3,424.2 468.8,424.9 468.6,425.7 468.7,426.5 469.0,427.1 469.5,427.6 470.3,427.9 471.2,428.0 472.2,428.0 473.2,427.7 474.1,427.2 475.0,426.6 475.6,425.9 476.1,425.1 476.3,424.3 476.2,423.6 475.9,422.9" fill="#1a0c04" stroke="#8e4a12" stroke-width="0.8"/></g>
<defs><clipPath id="outlit"><path clip-rule="evenodd" d="M0 0H984V808H0Z M467.8 320.6A68.1 62.8 0 0 0 604 320.6H700V200H400V295H467.8Z"/></clipPath></defs>
<g clip-path="url(#outlit)"><g clip-path="url(#pinkc)"><ellipse cx="422.3" cy="332.1" rx="59.1" ry="25.7" transform="rotate(25.7 422.3 332.1)" stroke="#dcc0dc" stroke-width="1.1" fill="none"/></g></g>
<defs><clipPath id="pinkc"><rect x="455" y="346" width="30" height="30"/></clipPath></defs>
<path d="M339.8 176.6 L339.8 192.4 L343.6 189.2 L346.4 194.8 L348.9 193.6 L346.2 188.2 L351.1 187.9 Z" fill="#fff" stroke="#000" stroke-width="1.0" stroke-linejoin="miter"/>
</svg>
</body></html>
